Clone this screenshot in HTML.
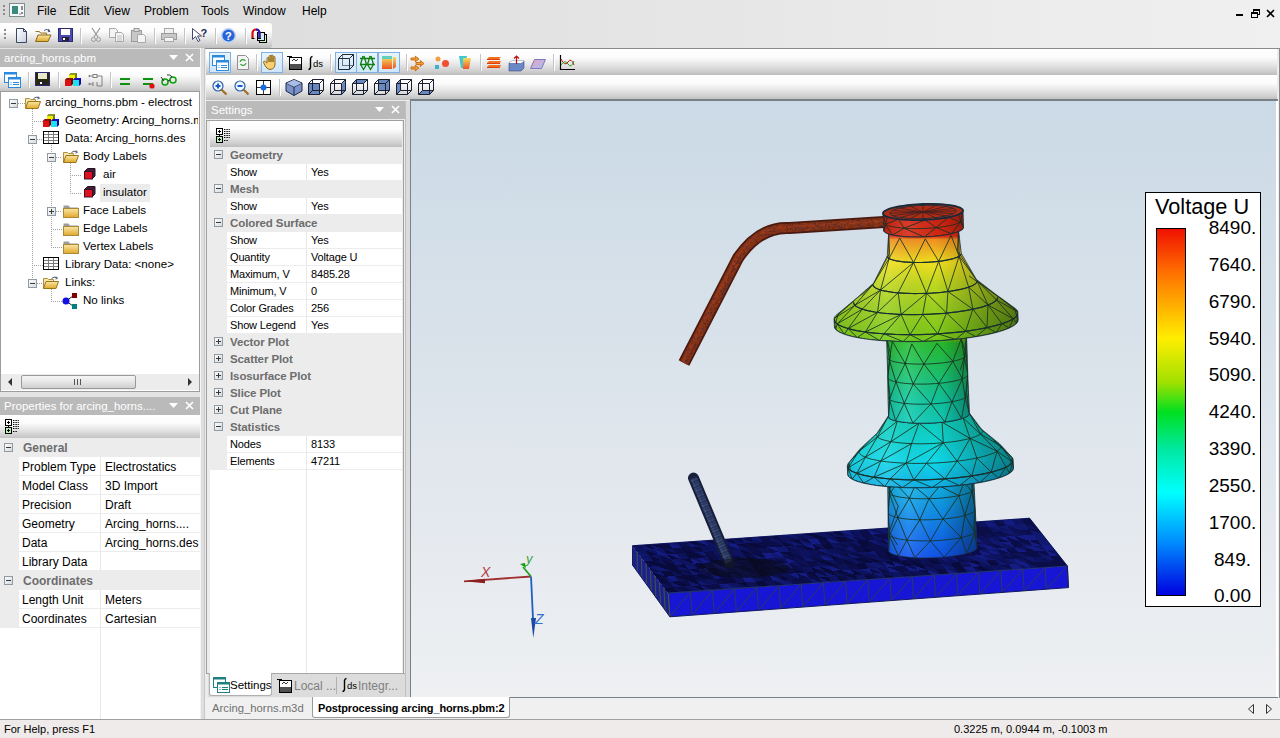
<!DOCTYPE html><html><head><meta charset="utf-8"><style>
*{margin:0;padding:0;box-sizing:border-box}
html,body{width:1280px;height:738px;overflow:hidden;background:#ebebeb;font-family:"Liberation Sans",sans-serif;font-size:12px;color:#000}
.a{position:absolute}
.t{position:absolute;white-space:nowrap;line-height:1}
.tb{background:linear-gradient(#ffffff 0%,#fcfcfc 32%,#e6e6e6 60%,#cfcfcf 85%,#bdbdbd 100%)}
.cap{background:#bababa}
.capt{position:absolute;white-space:nowrap;line-height:1;color:#fff;font-size:11.5px}
svg{position:absolute;overflow:visible}
.tr{font-size:11.6px}
.pg{font-size:11px;letter-spacing:-0.15px}
.pgc{font-size:11.5px;font-weight:bold;color:#6d6d6d;letter-spacing:-0.1px}
.lp{font-size:12px}
.lpc{font-size:12px;font-weight:bold;color:#6d6d6d}
</style></head><body>
<svg width="0" height="0" style="position:absolute"><defs>
<linearGradient id="gbox" x1="0" y1="0" x2="1" y2="1"><stop offset="0" stop-color="#fff"/><stop offset="1" stop-color="#d4d8dc"/></linearGradient>
<linearGradient id="gfold" x1="0" y1="0" x2="0" y2="1"><stop offset="0" stop-color="#fbe7a6"/><stop offset="1" stop-color="#e0a82a"/></linearGradient>
<linearGradient id="gdoc" x1="0" y1="0" x2="1" y2="1"><stop offset="0" stop-color="#fff"/><stop offset="1" stop-color="#c8d0e0"/></linearGradient>
<linearGradient id="gflag" x1="0" y1="0" x2="0" y2="1"><stop offset="0" stop-color="#f0e060"/><stop offset="1" stop-color="#f05020"/></linearGradient>
<linearGradient id="gplane" x1="0" y1="0" x2="1" y2="1"><stop offset="0" stop-color="#f0a0c0"/><stop offset="1" stop-color="#a0c0f0"/></linearGradient>
</defs></svg>
<div class="a" style="left:0;top:0;width:1280px;height:48px;background:linear-gradient(90deg,#d8d8d8 0px,#dedede 300px,#e8e8e8 800px,#f0f0f0 1280px)"></div>
<div class="a" style="left:3px;top:5px;width:2px;height:11px;background:repeating-linear-gradient(#8a8a8a 0 2px,transparent 2px 4px)"></div>
<svg style="left:9px;top:3px" width="16" height="14" viewBox="0 0 16 14"><rect x="0.5" y="0.5" width="15" height="13" fill="#f4f8f8" stroke="#7c8c90"/><rect x="3" y="3" width="6" height="8" fill="#3a8a80"/><path d="M13 3v4M13 9v2" stroke="#222"/><path d="M10 11h2" stroke="#888"/></svg>
<div class="t" style="left:37px;top:5px;font-size:12px">File</div>
<div class="t" style="left:69px;top:5px;font-size:12px">Edit</div>
<div class="t" style="left:104px;top:5px;font-size:12px">View</div>
<div class="t" style="left:144px;top:5px;font-size:12px">Problem</div>
<div class="t" style="left:201px;top:5px;font-size:12px">Tools</div>
<div class="t" style="left:243px;top:5px;font-size:12px">Window</div>
<div class="t" style="left:302px;top:5px;font-size:12px">Help</div>
<div class="a" style="left:1236px;top:14px;width:7px;height:2px;background:#000"></div>
<svg style="left:1251px;top:9px" width="9" height="9" viewBox="0 0 9 9"><rect x="2.5" y="0.5" width="6" height="5" fill="none" stroke="#000"/><path d="M2 1h7" stroke="#000" stroke-width="2"/><rect x="0.5" y="3.5" width="6" height="5" fill="#f0f0f0" stroke="#000"/><path d="M0 4h7" stroke="#000" stroke-width="2"/></svg>
<svg style="left:1266px;top:9px" width="9" height="9" viewBox="0 0 9 9"><path d="M1 1L8 8M8 1L1 8" stroke="#000" stroke-width="1.6"/></svg>
<div class="a tb" style="left:0;top:23px;width:272px;height:25px;border-radius:0 3px 3px 0"></div>
<div class="a" style="left:4px;top:29px;width:2px;height:11px;background:repeating-linear-gradient(#8a8a8a 0 2px,transparent 2px 4px)"></div>
<svg style="left:16px;top:28px" width="11" height="15" viewBox="0 0 11 15"><path d="M0.5 0.5h7l3 3v11h-10z" fill="url(#gdoc)" stroke="#3a4660"/><path d="M7.5 0.5v3h3" fill="none" stroke="#3a4660"/></svg>
<svg style="left:35px;top:28px" width="16" height="15" viewBox="0 0 16 15"><path d="M0.5 3.5h4l1 1.5h6v2" fill="#f0d890" stroke="#9a7a2a"/><path d="M0.5 13.5L3 7h13L13 13.5z" fill="url(#gfold)" stroke="#8a6a1a"/><path d="M9 2.5q3-2.5 5.5 0.5" fill="none" stroke="#4a5a80"/><path d="M13.2 1l1.8 2.3-2.2.4" fill="none" stroke="#4a5a80"/></svg>
<svg style="left:58px;top:28px" width="15" height="14" viewBox="0 0 15 14"><rect x="0.5" y="0.5" width="14" height="13" fill="#4a4ab0" stroke="#2a2a70"/><rect x="3" y="1" width="9" height="6" fill="#fff"/><rect x="4" y="9" width="7" height="4" fill="#223"/><rect x="5" y="10" width="2" height="2" fill="#fff"/></svg>
<div class="a" style="left:80px;top:28px;width:2px;height:16px;border-left:1px solid #c4c4c4;border-right:1px solid #fff"></div>
<svg style="left:91px;top:28px" width="10" height="14" viewBox="0 0 10 14"><path d="M1 0L7 9M9 0L3 9" stroke="#9a9a9a" stroke-width="1.3"/><circle cx="2.5" cy="11.5" r="2" fill="none" stroke="#9a9a9a"/><circle cx="7.5" cy="11.5" r="2" fill="none" stroke="#9a9a9a"/></svg>
<svg style="left:109px;top:28px" width="15" height="14" viewBox="0 0 15 14"><path d="M0.5 0.5h6l2 2v7h-8z" fill="#f4f4f4" stroke="#a8a8a8"/><path d="M6.5 4.5h6l2 2v7h-8z" fill="#f4f4f4" stroke="#a8a8a8"/><path d="M8 8h5M8 10h5M8 12h5" stroke="#c0c0c0"/></svg>
<svg style="left:131px;top:28px" width="16" height="15" viewBox="0 0 16 15"><rect x="0.5" y="2.5" width="10" height="11" fill="#c8c8c8" stroke="#9a9a9a"/><rect x="3" y="0.5" width="5" height="3" fill="#ddd" stroke="#9a9a9a"/><path d="M6.5 6.5h6l2 2v6h-8z" fill="#f4f4f4" stroke="#a8a8a8"/></svg>
<div class="a" style="left:154px;top:28px;width:2px;height:16px;border-left:1px solid #c4c4c4;border-right:1px solid #fff"></div>
<svg style="left:161px;top:28px" width="16" height="14" viewBox="0 0 16 14"><rect x="3.5" y="0.5" width="9" height="5" fill="#f0f0f0" stroke="#a8a8a8"/><rect x="0.5" y="5.5" width="15" height="6" fill="#c8c8c8" stroke="#9a9a9a"/><rect x="3.5" y="9.5" width="9" height="4" fill="#f4f4f4" stroke="#a8a8a8"/></svg>
<div class="a" style="left:184px;top:28px;width:2px;height:16px;border-left:1px solid #c4c4c4;border-right:1px solid #fff"></div>
<svg style="left:192px;top:28px" width="15" height="14" viewBox="0 0 15 14"><path d="M0.5 0.5v11l3-3 2.5 5 2-1-2.5-4.5h4z" fill="#fff" stroke="#404a70"/><text x="8.5" y="9" font-family="Liberation Sans" font-weight="bold" font-size="11" fill="#202a50">?</text></svg>
<div class="a" style="left:215px;top:28px;width:2px;height:16px;border-left:1px solid #c4c4c4;border-right:1px solid #fff"></div>
<svg style="left:221px;top:28px" width="15" height="15" viewBox="0 0 15 15"><circle cx="7.5" cy="7.5" r="6.8" fill="#2a64d8" stroke="#b8d4f4" stroke-width="1.4"/><text x="4" y="11.5" font-family="Liberation Sans" font-weight="bold" font-size="11" fill="#fff">?</text></svg>
<div class="a" style="left:245px;top:28px;width:2px;height:16px;border-left:1px solid #c4c4c4;border-right:1px solid #fff"></div>
<svg style="left:251px;top:28px" width="16" height="15" viewBox="0 0 16 15"><rect x="8.5" y="6.5" width="7" height="8" fill="#c8f0c8" stroke="#000"/><rect x="6.5" y="4.5" width="7" height="8" fill="#d0f0f8" stroke="#000"/><path d="M1.5 10V5a3.5 3.5 0 0 1 7 0v5" fill="none" stroke="#d01010" stroke-width="2.2"/><path d="M5 1.5a3.5 3.5 0 0 1 3.5 3.5v5" fill="none" stroke="#2020c0" stroke-width="2.2"/><path d="M0.5 10.5h3M7 10.5h3" stroke="#000"/></svg>
<div class="a" style="left:0;top:48px;width:200px;height:672px;background:#e4e4e4"></div>
<div class="a cap" style="left:0;top:49px;width:200px;height:18px"></div>
<div class="capt" style="left:4px;top:53px">arcing_horns.pbm</div>
<svg style="left:169px;top:53px" width="26" height="10" viewBox="0 0 26 10"><path d="M0 2h9L4.5 7z" fill="#fff"/><path d="M17 1l7 7M24 1l-7 7" stroke="#fff" stroke-width="1.6"/></svg>
<div class="a tb" style="left:0;top:67px;width:200px;height:25px"></div>
<svg style="left:4px;top:72px" width="17" height="16" viewBox="0 0 17 16"><rect x="0.5" y="0.5" width="12" height="10" fill="#fff" stroke="#2a8ae0"/><rect x="0.5" y="0.5" width="12" height="2" fill="#2a8ae0"/><rect x="4.5" y="5.5" width="12" height="10" fill="#fff" stroke="#2a8ae0"/><rect x="4.5" y="5.5" width="12" height="2" fill="#2a8ae0"/><path d="M6.5 10.5h1M6.5 12.5h1M9 10.5h6M9 12.5h6" stroke="#2a8ae0"/></svg>
<div class="a" style="left:28px;top:72px;width:2px;height:16px;border-left:1px solid #c4c4c4;border-right:1px solid #fff"></div>
<svg style="left:35px;top:72px" width="15" height="14" viewBox="0 0 15 14"><rect x="0.5" y="0.5" width="14" height="13" fill="#2a2a08" stroke="#2a2a70"/><rect x="3" y="1" width="9" height="6" fill="#e8e8d0"/><rect x="4" y="9" width="7" height="4" fill="#223"/><rect x="5" y="10" width="2" height="2" fill="#fff"/></svg>
<div class="a" style="left:58px;top:72px;width:2px;height:16px;border-left:1px solid #c4c4c4;border-right:1px solid #fff"></div>
<svg style="left:65px;top:72px" width="16" height="15" viewBox="0 0 16 15"><path d="M4 3l2 -2h6v6l-2 2z" fill="#708018"/><path d="M4 3l2 -2h6l-2 2z" fill="#8a9a20"/><rect x="4" y="3" width="6" height="6" fill="#f0f000"/><path d="M0 8l2 -2h6v6l-2 2z" fill="#700808"/><path d="M0 8l2 -2h6l-2 2z" fill="#901010"/><rect x="0" y="8" width="6" height="6" fill="#e01010"/><path d="M8 8l2 -2h6v6l-2 2z" fill="#0a0aa0"/><path d="M8 8l2 -2h6l-2 2z" fill="#1010c0"/><rect x="8" y="8" width="6" height="6" fill="#20e0f0"/></svg>
<svg style="left:88px;top:73px" width="15" height="14" viewBox="0 0 15 14"><path d="M2 3h3M9 3h5v10H9M2 11h3" fill="none" stroke="#808080"/><rect x="5" y="1.5" width="4" height="3" fill="none" stroke="#808080"/><path d="M5 9v4M9 9v4" stroke="#808080"/><path d="M0 3l2-1.5v3zM0 11l2-1.5v3z" fill="#808080"/></svg>
<div class="a" style="left:110px;top:72px;width:2px;height:16px;border-left:1px solid #c4c4c4;border-right:1px solid #fff"></div>
<svg style="left:119px;top:76px" width="13" height="13" viewBox="0 0 13 13"><path d="M1 3h10M1 8h10" stroke="#109010" stroke-width="2.2"/></svg>
<svg style="left:142px;top:76px" width="13" height="13" viewBox="0 0 13 13"><path d="M1 3h10M1 8h10" stroke="#109010" stroke-width="2.2"/><circle cx="10" cy="10" r="2.6" fill="#e01010"/></svg>
<svg style="left:161px;top:74px" width="16" height="12" viewBox="0 0 16 12"><circle cx="4" cy="8" r="3" fill="none" stroke="#10a010" stroke-width="1.5"/><circle cx="12" cy="6" r="3" fill="none" stroke="#10a010" stroke-width="1.5"/><path d="M0 3l3 4M7 7l2-1M6 1q3-1 5 2" fill="none" stroke="#000" stroke-width=".8"/></svg>
<div class="a" style="left:0;top:91px;width:200px;height:301px;background:#fff;border:1px solid #9c9c9c"></div>
<div class="a" style="left:32px;top:109px;width:1px;height:173px;background:repeating-linear-gradient(#a0a0a0 0 1px,transparent 1px 2px)"></div>
<div class="a" style="left:51px;top:145px;width:1px;height:101px;background:repeating-linear-gradient(#a0a0a0 0 1px,transparent 1px 2px)"></div>
<div class="a" style="left:70px;top:163px;width:1px;height:29px;background:repeating-linear-gradient(#a0a0a0 0 1px,transparent 1px 2px)"></div>
<div class="a" style="left:51px;top:287px;width:1px;height:13px;background:repeating-linear-gradient(#a0a0a0 0 1px,transparent 1px 2px)"></div>
<svg style="left:9px;top:99px" width="9" height="9" viewBox="0 0 9 9"><rect x="0.5" y="0.5" width="8" height="8" fill="url(#gbox)" stroke="#8f9aa3"/><path d="M2 4.5H7" stroke="#3a3a3a"/></svg>
<div class="a" style="left:18px;top:103px;width:7px;height:1px;background:repeating-linear-gradient(90deg,#a0a0a0 0 1px,transparent 1px 2px)"></div>
<svg style="left:25px;top:96px" width="16" height="14" viewBox="0 0 16 14"><path d="M0.5 12.5V2.5h4l1 1h5v3" fill="#f6e6a8" stroke="#b09040" stroke-width="1"/><path d="M0.5 12.5L3 5.5h12.5L13 12.5z" fill="url(#gfold)" stroke="#9a7418"/><path d="M8.5 2.5q2.5-2.5 5.5-.5" fill="none" stroke="#505a70" stroke-width="1"/><path d="M13 .5l1.5 1.8-2 .8" fill="none" stroke="#505a70"/></svg>
<div class="t tr" style="left:45px;top:96px">arcing_horns.pbm - electrost</div>
<div class="a" style="left:32px;top:121px;width:11px;height:1px;background:repeating-linear-gradient(90deg,#a0a0a0 0 1px,transparent 1px 2px)"></div>
<svg style="left:43px;top:113px" width="16" height="15" viewBox="0 0 16 15"><path d="M4 3l2 -2h6v6l-2 2z" fill="#708018"/><path d="M4 3l2 -2h6l-2 2z" fill="#8a9a20"/><rect x="4" y="3" width="6" height="6" fill="#f0f000"/><path d="M0 8l2 -2h6v6l-2 2z" fill="#700808"/><path d="M0 8l2 -2h6l-2 2z" fill="#901010"/><rect x="0" y="8" width="6" height="6" fill="#e01010"/><path d="M8 8l2 -2h6v6l-2 2z" fill="#0a0aa0"/><path d="M8 8l2 -2h6l-2 2z" fill="#1010c0"/><rect x="8" y="8" width="6" height="6" fill="#20e0f0"/></svg>
<div class="t tr" style="left:65px;top:114px">Geometry: Arcing_horns.m3d</div>
<svg style="left:28px;top:135px" width="9" height="9" viewBox="0 0 9 9"><rect x="0.5" y="0.5" width="8" height="8" fill="url(#gbox)" stroke="#8f9aa3"/><path d="M2 4.5H7" stroke="#3a3a3a"/></svg>
<div class="a" style="left:37px;top:139px;width:6px;height:1px;background:repeating-linear-gradient(90deg,#a0a0a0 0 1px,transparent 1px 2px)"></div>
<svg style="left:43px;top:131px" width="16" height="13" viewBox="0 0 16 13"><rect x="0.5" y="0.5" width="15" height="12" fill="#fff"/><path d="M1 3.5h14M1 6.5h14M1 9.5h14M5.5 1v11M10.5 1v11" stroke="#7a7a7a" stroke-width="1"/><rect x="0.5" y="0.5" width="15" height="12" fill="none" stroke="#000" stroke-width="1"/></svg>
<div class="t tr" style="left:65px;top:132px">Data: Arcing_horns.des</div>
<svg style="left:47px;top:153px" width="9" height="9" viewBox="0 0 9 9"><rect x="0.5" y="0.5" width="8" height="8" fill="url(#gbox)" stroke="#8f9aa3"/><path d="M2 4.5H7" stroke="#3a3a3a"/></svg>
<div class="a" style="left:56px;top:157px;width:6px;height:1px;background:repeating-linear-gradient(90deg,#a0a0a0 0 1px,transparent 1px 2px)"></div>
<svg style="left:63px;top:150px" width="16" height="14" viewBox="0 0 16 14"><path d="M0.5 12.5V2.5h4l1 1h5v3" fill="#f6e6a8" stroke="#b09040" stroke-width="1"/><path d="M0.5 12.5L3 5.5h12.5L13 12.5z" fill="url(#gfold)" stroke="#9a7418"/><path d="M8.5 2.5q2.5-2.5 5.5-.5" fill="none" stroke="#505a70" stroke-width="1"/><path d="M13 .5l1.5 1.8-2 .8" fill="none" stroke="#505a70"/></svg>
<div class="t tr" style="left:83px;top:150px">Body Labels</div>
<div class="a" style="left:70px;top:175px;width:11px;height:1px;background:repeating-linear-gradient(90deg,#a0a0a0 0 1px,transparent 1px 2px)"></div>
<svg style="left:84px;top:168px" width="12" height="12" viewBox="0 0 12 12"><path d="M0.5 3.5l3-3h7.5v7.5l-3 3" fill="#40203a" stroke="#2a1020"/><rect x="0.5" y="3.5" width="8" height="7.5" fill="#e01020" stroke="#3a1028"/></svg>
<div class="t tr" style="left:103px;top:168px">air</div>
<div class="a" style="left:70px;top:193px;width:11px;height:1px;background:repeating-linear-gradient(90deg,#a0a0a0 0 1px,transparent 1px 2px)"></div>
<svg style="left:84px;top:186px" width="12" height="12" viewBox="0 0 12 12"><path d="M0.5 3.5l3-3h7.5v7.5l-3 3" fill="#40203a" stroke="#2a1020"/><rect x="0.5" y="3.5" width="8" height="7.5" fill="#e01020" stroke="#3a1028"/></svg>
<div class="a" style="left:100px;top:184px;width:50px;height:18px;background:#ececec"></div>
<div class="t tr" style="left:103px;top:186px">insulator</div>
<svg style="left:47px;top:207px" width="9" height="9" viewBox="0 0 9 9"><rect x="0.5" y="0.5" width="8" height="8" fill="url(#gbox)" stroke="#8f9aa3"/><path d="M2 4.5H7" stroke="#3a3a3a"/><path d="M4.5 2V7" stroke="#3a3a3a"/></svg>
<div class="a" style="left:56px;top:211px;width:6px;height:1px;background:repeating-linear-gradient(90deg,#a0a0a0 0 1px,transparent 1px 2px)"></div>
<svg style="left:63px;top:203px" width="16" height="15" viewBox="0 0 16 15"><path d="M0.5 2.5h5l1.5 2h8v9h-14.5z" fill="#9c9c9c"/><rect x="0.5" y="5.5" width="15" height="9" fill="url(#gfold)" stroke="#a98a36"/></svg>
<div class="t tr" style="left:83px;top:204px">Face Labels</div>
<div class="a" style="left:51px;top:229px;width:11px;height:1px;background:repeating-linear-gradient(90deg,#a0a0a0 0 1px,transparent 1px 2px)"></div>
<svg style="left:63px;top:221px" width="16" height="15" viewBox="0 0 16 15"><path d="M0.5 2.5h5l1.5 2h8v9h-14.5z" fill="#9c9c9c"/><rect x="0.5" y="5.5" width="15" height="9" fill="url(#gfold)" stroke="#a98a36"/></svg>
<div class="t tr" style="left:83px;top:222px">Edge Labels</div>
<div class="a" style="left:51px;top:247px;width:11px;height:1px;background:repeating-linear-gradient(90deg,#a0a0a0 0 1px,transparent 1px 2px)"></div>
<svg style="left:63px;top:239px" width="16" height="15" viewBox="0 0 16 15"><path d="M0.5 2.5h5l1.5 2h8v9h-14.5z" fill="#9c9c9c"/><rect x="0.5" y="5.5" width="15" height="9" fill="url(#gfold)" stroke="#a98a36"/></svg>
<div class="t tr" style="left:83px;top:240px">Vertex Labels</div>
<div class="a" style="left:32px;top:265px;width:11px;height:1px;background:repeating-linear-gradient(90deg,#a0a0a0 0 1px,transparent 1px 2px)"></div>
<svg style="left:43px;top:257px" width="16" height="13" viewBox="0 0 16 13"><rect x="0.5" y="0.5" width="15" height="12" fill="#fff"/><path d="M1 3.5h14M1 6.5h14M1 9.5h14M5.5 1v11M10.5 1v11" stroke="#7a7a7a" stroke-width="1"/><rect x="0.5" y="0.5" width="15" height="12" fill="none" stroke="#000" stroke-width="1"/></svg>
<div class="t tr" style="left:65px;top:258px">Library Data: &lt;none&gt;</div>
<svg style="left:28px;top:279px" width="9" height="9" viewBox="0 0 9 9"><rect x="0.5" y="0.5" width="8" height="8" fill="url(#gbox)" stroke="#8f9aa3"/><path d="M2 4.5H7" stroke="#3a3a3a"/></svg>
<div class="a" style="left:37px;top:283px;width:6px;height:1px;background:repeating-linear-gradient(90deg,#a0a0a0 0 1px,transparent 1px 2px)"></div>
<svg style="left:43px;top:276px" width="16" height="14" viewBox="0 0 16 14"><path d="M0.5 12.5V2.5h4l1 1h5v3" fill="#f6e6a8" stroke="#b09040" stroke-width="1"/><path d="M0.5 12.5L3 5.5h12.5L13 12.5z" fill="url(#gfold)" stroke="#9a7418"/><path d="M8.5 2.5q2.5-2.5 5.5-.5" fill="none" stroke="#505a70" stroke-width="1"/><path d="M13 .5l1.5 1.8-2 .8" fill="none" stroke="#505a70"/></svg>
<div class="t tr" style="left:65px;top:276px">Links:</div>
<div class="a" style="left:51px;top:301px;width:11px;height:1px;background:repeating-linear-gradient(90deg,#a0a0a0 0 1px,transparent 1px 2px)"></div>
<svg style="left:62px;top:293px" width="16" height="16" viewBox="0 0 16 16"><path d="M4 8L11 3M4 8L11 13" stroke="#222" stroke-width="1"/><circle cx="4" cy="8" r="3.5" fill="#1010e0"/><rect x="10" y="0" width="5" height="5" fill="#800000"/><rect x="10" y="11" width="5" height="5" fill="#008080"/></svg>
<div class="t tr" style="left:83px;top:294px">No links</div>
<div class="a" style="left:198px;top:92px;width:1px;height:299px;background:#fff"></div>
<div class="a" style="left:199px;top:91px;width:1px;height:301px;background:#9c9c9c"></div>
<div class="a" style="left:1px;top:374px;width:198px;height:16px;background:#ececec"></div>
<div class="a" style="left:21px;top:375px;width:115px;height:14px;border:1px solid #9a9a9a;border-radius:2px;background:linear-gradient(#f6f6f6,#e6e6e6 50%,#cfcfcf)"></div>
<div class="a" style="left:74px;top:379px;width:7px;height:6px;background:repeating-linear-gradient(90deg,#555 0 1px,transparent 1px 3px)"></div>
<svg style="left:8px;top:378px" width="5" height="8" viewBox="0 0 5 8"><path d="M4 0v8L0 4z" fill="#333"/></svg>
<svg style="left:188px;top:378px" width="5" height="8" viewBox="0 0 5 8"><path d="M0 0v8l4-4z" fill="#333"/></svg>
<div class="a cap" style="left:0;top:397px;width:200px;height:18px"></div>
<div class="capt" style="left:4px;top:401px">Properties for arcing_horns....</div>
<svg style="left:169px;top:401px" width="26" height="10" viewBox="0 0 26 10"><path d="M0 2h9L4.5 7z" fill="#fff"/><path d="M17 1l7 7M24 1l-7 7" stroke="#fff" stroke-width="1.6"/></svg>
<div class="a tb" style="left:0;top:415px;width:200px;height:24px"></div>
<svg style="left:5px;top:419px" width="15" height="15" viewBox="0 0 15 15"><rect x="0.5" y="0.5" width="6" height="6" fill="#fff" stroke="#000"/><path d="M2 3.5h3M3.5 2v3" stroke="#000"/><rect x="0.5" y="8.5" width="6" height="6" fill="#b8f0b8" stroke="#000"/><path d="M2 11.5h3M3.5 10v3" stroke="#000"/><path d="M3.5 6.5v2" stroke="#000"/><path d="M8 1.5h6M8 3.5h6M8 5.5h6M8 7.5h6M8 9.5h6M8 12.5h4" stroke="#000" stroke-dasharray="1 .6"/></svg>
<div class="a" style="left:0;top:438px;width:200px;height:281px;background:#fff"></div>
<div class="a" style="left:100px;top:438px;width:1px;height:281px;background:#e8e8e8"></div>
<div class="a" style="left:0;top:438px;width:200px;height:19px;background:#ececec"></div>
<svg style="left:4px;top:443px" width="9" height="9" viewBox="0 0 9 9"><rect x="0.5" y="0.5" width="8" height="8" fill="url(#gbox)" stroke="#8f9aa3"/><path d="M2 4.5H7" stroke="#3a3a3a"/></svg>
<div class="t lpc" style="left:23px;top:442px">General</div>
<div class="a" style="left:0;top:457px;width:19px;height:19px;background:#ececec"></div>
<div class="a" style="left:19px;top:475px;width:181px;height:1px;background:#ececec"></div>
<div class="t lp" style="left:22px;top:461px">Problem Type</div>
<div class="t lp" style="left:105px;top:461px">Electrostatics</div>
<div class="a" style="left:0;top:476px;width:19px;height:19px;background:#ececec"></div>
<div class="a" style="left:19px;top:494px;width:181px;height:1px;background:#ececec"></div>
<div class="t lp" style="left:22px;top:480px">Model Class</div>
<div class="t lp" style="left:105px;top:480px">3D Import</div>
<div class="a" style="left:0;top:495px;width:19px;height:19px;background:#ececec"></div>
<div class="a" style="left:19px;top:513px;width:181px;height:1px;background:#ececec"></div>
<div class="t lp" style="left:22px;top:499px">Precision</div>
<div class="t lp" style="left:105px;top:499px">Draft</div>
<div class="a" style="left:0;top:514px;width:19px;height:19px;background:#ececec"></div>
<div class="a" style="left:19px;top:532px;width:181px;height:1px;background:#ececec"></div>
<div class="t lp" style="left:22px;top:518px">Geometry</div>
<div class="t lp" style="left:105px;top:518px">Arcing_horns....</div>
<div class="a" style="left:0;top:533px;width:19px;height:19px;background:#ececec"></div>
<div class="a" style="left:19px;top:551px;width:181px;height:1px;background:#ececec"></div>
<div class="t lp" style="left:22px;top:537px">Data</div>
<div class="t lp" style="left:105px;top:537px">Arcing_horns.des</div>
<div class="a" style="left:0;top:552px;width:19px;height:19px;background:#ececec"></div>
<div class="a" style="left:19px;top:570px;width:181px;height:1px;background:#ececec"></div>
<div class="t lp" style="left:22px;top:556px">Library Data</div>
<div class="t lp" style="left:105px;top:556px"></div>
<div class="a" style="left:0;top:571px;width:200px;height:19px;background:#ececec"></div>
<svg style="left:4px;top:576px" width="9" height="9" viewBox="0 0 9 9"><rect x="0.5" y="0.5" width="8" height="8" fill="url(#gbox)" stroke="#8f9aa3"/><path d="M2 4.5H7" stroke="#3a3a3a"/></svg>
<div class="t lpc" style="left:23px;top:575px">Coordinates</div>
<div class="a" style="left:0;top:590px;width:19px;height:19px;background:#ececec"></div>
<div class="a" style="left:19px;top:608px;width:181px;height:1px;background:#ececec"></div>
<div class="t lp" style="left:22px;top:594px">Length Unit</div>
<div class="t lp" style="left:105px;top:594px">Meters</div>
<div class="a" style="left:0;top:609px;width:19px;height:19px;background:#ececec"></div>
<div class="a" style="left:19px;top:627px;width:181px;height:1px;background:#ececec"></div>
<div class="t lp" style="left:22px;top:613px">Coordinates</div>
<div class="t lp" style="left:105px;top:613px">Cartesian</div>
<div class="a" style="left:200px;top:48px;width:5px;height:672px;background:#dedede;border-left:1px solid #f4f4f4;border-right:1px solid #c8c8c8"></div>
<div class="a" style="left:205px;top:48px;width:1075px;height:672px;background:#ececec;border-top:1px solid #8a8a8a;border-right:1px solid #8a8a8a"></div>
<div class="a tb" style="left:206px;top:49px;width:1071px;height:26px"></div>
<div class="a tb" style="left:206px;top:75px;width:1071px;height:25px"></div>
<div class="a" style="left:209px;top:52px;width:22px;height:21px;border:1px solid #7fb0e0;background:linear-gradient(#e8f4fd,#cfe6fa)"></div>
<svg style="left:212px;top:55px" width="17" height="16" viewBox="0 0 17 16"><rect x="0.5" y="0.5" width="12" height="10" fill="#fff" stroke="#2a8ae0"/><rect x="0.5" y="0.5" width="12" height="2" fill="#2a8ae0"/><rect x="4.5" y="5.5" width="12" height="10" fill="#fff" stroke="#2a8ae0"/><rect x="4.5" y="5.5" width="12" height="2" fill="#2a8ae0"/><path d="M6.5 10.5h1M6.5 12.5h1M9 10.5h6M9 12.5h6" stroke="#2a8ae0"/></svg>
<svg style="left:237px;top:55px" width="12" height="15" viewBox="0 0 12 15"><path d="M0.5 0.5h8l3 3v11h-11z" fill="#f4f4f4" stroke="#909090"/><path d="M3 7a3 3 0 0 1 5.5-1M9 8a3 3 0 0 1-5.5 1" fill="none" stroke="#30a030" stroke-width="1.2"/></svg>
<div class="a" style="left:256px;top:54px;width:2px;height:17px;border-left:1px solid #c4c4c4;border-right:1px solid #fff"></div>
<div class="a" style="left:261px;top:52px;width:22px;height:21px;border:1px solid #7fb0e0;background:linear-gradient(#e8f4fd,#cfe6fa)"></div>
<svg style="left:264px;top:54px" width="15" height="16" viewBox="0 0 15 16"><path d="M3 9V4.5a1 1 0 0 1 2 0V8V2.5a1 1 0 0 1 2 0V8V2a1 1 0 0 1 2 0v6V3.5a1 1 0 0 1 2 0V10q0 5-5 5.5q-3 0-5-4l-1.5-3a1 1 0 0 1 2-.5z" fill="#f8d070" stroke="#8a6a20"/></svg>
<svg style="left:287px;top:55px" width="15" height="15" viewBox="0 0 15 15"><rect x="2.5" y="2.5" width="12" height="12" fill="#505050" stroke="#000"/><rect x="3" y="3" width="11" height="6" fill="#fff"/><path d="M0 1.5h5" stroke="#000"/><path d="M5 6l2-2 2 2 2-2" fill="none" stroke="#000" stroke-width=".8"/></svg>
<svg style="left:307px;top:55px" width="17" height="16" viewBox="0 0 17 16"><path d="M5.5 1.5q-1.5 0-2 2v9q-.5 2-2 2" fill="none" stroke="#000" stroke-width="1.4"/><text x="6" y="12" font-family="Liberation Sans" font-size="9.5" fill="#000">ds</text></svg>
<div class="a" style="left:330px;top:54px;width:2px;height:17px;border-left:1px solid #c4c4c4;border-right:1px solid #fff"></div>
<div class="a" style="left:335px;top:52px;width:22px;height:21px;border:1px solid #7fb0e0;background:linear-gradient(#e8f4fd,#cfe6fa)"></div>
<svg style="left:338px;top:54px" width="17" height="17" viewBox="0 0 17 17"><path d="M0.5 4.5h11v11h-11z M0.5 4.5l4-4h11v11l-4 4M11.5 4.5l4-4" fill="none" stroke="#202a3a"/><rect x="4.5" y="0.5" width="11" height="11" fill="none" stroke="#202a3a" stroke-opacity=".6"/></svg>
<div class="a" style="left:356px;top:52px;width:22px;height:21px;border:1px solid #7fb0e0;background:linear-gradient(#e8f4fd,#cfe6fa)"></div>
<svg style="left:359px;top:55px" width="17" height="15" viewBox="0 0 17 15"><path d="M1 3.5h15M1 9.5h15M4 1l-2.5 8.5 3 5 3-5-2.5-8.5M11 1l-2.5 8.5 3 5 3-5-2.5-8.5" fill="none" stroke="#108010" stroke-width="1.3"/></svg>
<div class="a" style="left:378px;top:52px;width:22px;height:21px;border:1px solid #7fb0e0;background:linear-gradient(#e8f4fd,#cfe6fa)"></div>
<svg style="left:381px;top:55px" width="16" height="15" viewBox="0 0 16 15"><rect x="1" y="2" width="10" height="12" fill="url(#gflag)"/><rect x="1" y="1" width="10" height="3" fill="#60d0c0"/><path d="M12 2l3 0v10l-3 2z" fill="url(#gflag)"/></svg>
<div class="a" style="left:406px;top:54px;width:2px;height:17px;border-left:1px solid #c4c4c4;border-right:1px solid #fff"></div>
<svg style="left:411px;top:55px" width="17" height="15" viewBox="0 0 17 15"><g fill="#f0a040" stroke="#d07010"><path d="M0 3h5l-1-2 4 3-4 3 1-2H0z"/><path d="M5 7.5h5l-1-2 4 3-4 3 1-2H5z"/><path d="M0 12h5l-1-2 4 3-4 3 1-2H0z"/></g></svg>
<svg style="left:434px;top:56px" width="16" height="14" viewBox="0 0 16 14"><circle cx="4" cy="3" r="2.5" fill="#f0a040"/><circle cx="11.5" cy="7.5" r="3.5" fill="#f05030"/><rect x="1" y="9" width="4" height="4" fill="#40b0d0"/></svg>
<svg style="left:458px;top:55px" width="14" height="14" viewBox="0 0 14 14"><path d="M1 1h8l-2 12H3z" fill="#40c8d0"/><path d="M5 3h8l-2 11H5z" fill="url(#gflag)"/></svg>
<div class="a" style="left:480px;top:54px;width:2px;height:17px;border-left:1px solid #c4c4c4;border-right:1px solid #fff"></div>
<svg style="left:486px;top:57px" width="16" height="12" viewBox="0 0 16 12"><path d="M1 2h12l2-2H3z M1 6h13l1-2H3z M1 10h13l1-2H3z" fill="#f07020"/><path d="M1 2.5h13M1 6.5h13M1 10.5h13" stroke="#e04010"/></svg>
<svg style="left:508px;top:55px" width="17" height="16" viewBox="0 0 17 16"><path d="M1 8l3-2h12v7l-3 3H1z" fill="#6a88c8" stroke="#3a4a80" stroke-width=".6"/><path d="M1 8h12l3-2H4z" fill="#fff"/><path d="M8.5 9V1M6 3.5l2.5-2.5 2.5 2.5" fill="none" stroke="#c01010" stroke-width="1.2"/></svg>
<svg style="left:530px;top:59px" width="16" height="10" viewBox="0 0 16 10"><path d="M0.5 9.5l4-9h11l-4 9z" fill="url(#gplane)" stroke="#7a7ac0"/></svg>
<div class="a" style="left:553px;top:54px;width:2px;height:17px;border-left:1px solid #c4c4c4;border-right:1px solid #fff"></div>
<svg style="left:559px;top:55px" width="16" height="16" viewBox="0 0 16 16"><path d="M1.5 0v14.5H16" fill="none" stroke="#000" stroke-width="1.2"/><path d="M2 4q4 8 7 3t6 3" fill="none" stroke="#d01010"/><path d="M2 10q4-6 7-1t6-3" fill="none" stroke="#20a020"/></svg>
<svg style="left:212px;top:80px" width="16" height="16" viewBox="0 0 16 16"><circle cx="6" cy="6" r="5" fill="#f0f8ff" stroke="#3060a0" stroke-width="1.2"/><path d="M9.5 9.5l5 5" stroke="#a07020" stroke-width="2.2"/><path d="M3.5 6h5" stroke="#1a5ad0" stroke-width="2"/><path d="M6 3.5v5" stroke="#1a5ad0" stroke-width="2"/></svg>
<svg style="left:234px;top:80px" width="16" height="16" viewBox="0 0 16 16"><circle cx="6" cy="6" r="5" fill="#f0f8ff" stroke="#3060a0" stroke-width="1.2"/><path d="M9.5 9.5l5 5" stroke="#a07020" stroke-width="2.2"/><path d="M3.5 6h5" stroke="#1a5ad0" stroke-width="2"/></svg>
<svg style="left:256px;top:80px" width="15" height="15" viewBox="0 0 15 15"><rect x="0.5" y="0.5" width="14" height="14" fill="#fff" stroke="#000"/><path d="M7.5 1v13M1 7.5h13" stroke="#000" stroke-width=".8"/><circle cx="7.5" cy="7.5" r="3" fill="#1a6ae0"/></svg>
<div class="a" style="left:279px;top:79px;width:2px;height:17px;border-left:1px solid #c4c4c4;border-right:1px solid #fff"></div>
<svg style="left:285px;top:79px" width="18" height="17" viewBox="0 0 18 17"><path d="M9 0.5l8 3.5v8l-8 4.5-8-4.5v-8z" fill="#7a92c8" stroke="#1a2848"/><path d="M1 4l8 4 8-4M9 8v8.5" fill="none" stroke="#1a2848"/><path d="M1.5 4.3L9 .8l7.5 3.5L9 7.8z" fill="#a8bce4"/></svg>
<svg style="left:308px;top:79px" width="17" height="17" viewBox="0 0 17 17"><rect x="1" y="5" width="10" height="10" fill="#6a88c0"/><path d="M0.5 4.5h11v11h-11z M0.5 4.5l4-4h11v11l-4 4M11.5 4.5l4-4M4.5 .5v11h11M4.5 11.5l-4 4" fill="none" stroke="#1a2030"/></svg>
<svg style="left:330px;top:79px" width="17" height="17" viewBox="0 0 17 17"><path d="M12 4.5l4-4v11l-4 4z" fill="#6a88c0"/><path d="M0.5 4.5h11v11h-11z M0.5 4.5l4-4h11v11l-4 4M11.5 4.5l4-4M4.5 .5v11h11M4.5 11.5l-4 4" fill="none" stroke="#1a2030"/></svg>
<svg style="left:352px;top:79px" width="17" height="17" viewBox="0 0 17 17"><path d="M1 4.5l4-4h11l-4 4z" fill="#6a88c0"/><path d="M0.5 4.5h11v11h-11z M0.5 4.5l4-4h11v11l-4 4M11.5 4.5l4-4M4.5 .5v11h11M4.5 11.5l-4 4" fill="none" stroke="#1a2030"/></svg>
<svg style="left:374px;top:79px" width="17" height="17" viewBox="0 0 17 17"><rect x="5" y="1" width="10" height="10" fill="#6a88c0"/><path d="M0.5 4.5h11v11h-11z M0.5 4.5l4-4h11v11l-4 4M11.5 4.5l4-4M4.5 .5v11h11M4.5 11.5l-4 4" fill="none" stroke="#1a2030"/></svg>
<svg style="left:396px;top:79px" width="17" height="17" viewBox="0 0 17 17"><path d="M1 4.5l4-4v11l-4 4z" fill="#6a88c0"/><path d="M0.5 4.5h11v11h-11z M0.5 4.5l4-4h11v11l-4 4M11.5 4.5l4-4M4.5 .5v11h11M4.5 11.5l-4 4" fill="none" stroke="#1a2030"/></svg>
<svg style="left:418px;top:79px" width="17" height="17" viewBox="0 0 17 17"><path d="M1 15l4-4h11l-4 4z" fill="#6a88c0"/><path d="M0.5 4.5h11v11h-11z M0.5 4.5l4-4h11v11l-4 4M11.5 4.5l4-4M4.5 .5v11h11M4.5 11.5l-4 4" fill="none" stroke="#1a2030"/></svg>
<div class="a cap" style="left:206px;top:101px;width:199px;height:18px"></div>
<div class="capt" style="left:211px;top:105px">Settings</div>
<svg style="left:375px;top:105px" width="26" height="10" viewBox="0 0 26 10"><path d="M0 2h9L4.5 7z" fill="#fff"/><path d="M17 1l7 7M24 1l-7 7" stroke="#fff" stroke-width="1.6"/></svg>
<div class="a" style="left:206px;top:119px;width:200px;height:578px;background:#ececec"></div>
<div class="a" style="left:206px;top:120px;width:198px;height:554px;background:#ececec;border:1px solid #a0a0a0"></div>
<div class="a" style="left:210px;top:147px;width:192px;height:526px;background:#fff"></div>
<div class="a tb" style="left:210px;top:121px;width:192px;height:26px"></div>
<svg style="left:216px;top:128px" width="15" height="15" viewBox="0 0 15 15"><rect x="0.5" y="0.5" width="6" height="6" fill="#fff" stroke="#000"/><path d="M2 3.5h3M3.5 2v3" stroke="#000"/><rect x="0.5" y="8.5" width="6" height="6" fill="#b8f0b8" stroke="#000"/><path d="M2 11.5h3M3.5 10v3" stroke="#000"/><path d="M3.5 6.5v2" stroke="#000"/><path d="M8 1.5h6M8 3.5h6M8 5.5h6M8 7.5h6M8 9.5h6M8 12.5h4" stroke="#000" stroke-dasharray="1 .6"/></svg>
<div class="a" style="left:306px;top:147px;width:1px;height:526px;background:#e8e8e8"></div>
<div class="a" style="left:210px;top:147px;width:192px;height:17px;background:#ececec"></div>
<svg style="left:214px;top:150px" width="9" height="9" viewBox="0 0 9 9"><rect x="0.5" y="0.5" width="8" height="8" fill="url(#gbox)" stroke="#8f9aa3"/><path d="M2 4.5H7" stroke="#3a3a3a"/></svg>
<div class="t pgc" style="left:230px;top:150px">Geometry</div>
<div class="a" style="left:210px;top:164px;width:17px;height:17px;background:#ececec"></div>
<div class="a" style="left:227px;top:180px;width:175px;height:1px;background:#ececec"></div>
<div class="t pg" style="left:230px;top:167px">Show</div>
<div class="t pg" style="left:311px;top:167px">Yes</div>
<div class="a" style="left:210px;top:181px;width:192px;height:17px;background:#ececec"></div>
<svg style="left:214px;top:184px" width="9" height="9" viewBox="0 0 9 9"><rect x="0.5" y="0.5" width="8" height="8" fill="url(#gbox)" stroke="#8f9aa3"/><path d="M2 4.5H7" stroke="#3a3a3a"/></svg>
<div class="t pgc" style="left:230px;top:184px">Mesh</div>
<div class="a" style="left:210px;top:198px;width:17px;height:17px;background:#ececec"></div>
<div class="a" style="left:227px;top:214px;width:175px;height:1px;background:#ececec"></div>
<div class="t pg" style="left:230px;top:201px">Show</div>
<div class="t pg" style="left:311px;top:201px">Yes</div>
<div class="a" style="left:210px;top:215px;width:192px;height:17px;background:#ececec"></div>
<svg style="left:214px;top:218px" width="9" height="9" viewBox="0 0 9 9"><rect x="0.5" y="0.5" width="8" height="8" fill="url(#gbox)" stroke="#8f9aa3"/><path d="M2 4.5H7" stroke="#3a3a3a"/></svg>
<div class="t pgc" style="left:230px;top:218px">Colored Surface</div>
<div class="a" style="left:210px;top:232px;width:17px;height:17px;background:#ececec"></div>
<div class="a" style="left:227px;top:248px;width:175px;height:1px;background:#ececec"></div>
<div class="t pg" style="left:230px;top:235px">Show</div>
<div class="t pg" style="left:311px;top:235px">Yes</div>
<div class="a" style="left:210px;top:249px;width:17px;height:17px;background:#ececec"></div>
<div class="a" style="left:227px;top:265px;width:175px;height:1px;background:#ececec"></div>
<div class="t pg" style="left:230px;top:252px">Quantity</div>
<div class="t pg" style="left:311px;top:252px">Voltage U</div>
<div class="a" style="left:210px;top:266px;width:17px;height:17px;background:#ececec"></div>
<div class="a" style="left:227px;top:282px;width:175px;height:1px;background:#ececec"></div>
<div class="t pg" style="left:230px;top:269px">Maximum, V</div>
<div class="t pg" style="left:311px;top:269px">8485.28</div>
<div class="a" style="left:210px;top:283px;width:17px;height:17px;background:#ececec"></div>
<div class="a" style="left:227px;top:299px;width:175px;height:1px;background:#ececec"></div>
<div class="t pg" style="left:230px;top:286px">Minimum, V</div>
<div class="t pg" style="left:311px;top:286px">0</div>
<div class="a" style="left:210px;top:300px;width:17px;height:17px;background:#ececec"></div>
<div class="a" style="left:227px;top:316px;width:175px;height:1px;background:#ececec"></div>
<div class="t pg" style="left:230px;top:303px">Color Grades</div>
<div class="t pg" style="left:311px;top:303px">256</div>
<div class="a" style="left:210px;top:317px;width:17px;height:17px;background:#ececec"></div>
<div class="a" style="left:227px;top:333px;width:175px;height:1px;background:#ececec"></div>
<div class="t pg" style="left:230px;top:320px">Show Legend</div>
<div class="t pg" style="left:311px;top:320px">Yes</div>
<div class="a" style="left:210px;top:334px;width:192px;height:17px;background:#ececec"></div>
<svg style="left:214px;top:337px" width="9" height="9" viewBox="0 0 9 9"><rect x="0.5" y="0.5" width="8" height="8" fill="url(#gbox)" stroke="#8f9aa3"/><path d="M2 4.5H7" stroke="#3a3a3a"/><path d="M4.5 2V7" stroke="#3a3a3a"/></svg>
<div class="t pgc" style="left:230px;top:337px">Vector Plot</div>
<div class="a" style="left:210px;top:351px;width:192px;height:17px;background:#ececec"></div>
<svg style="left:214px;top:354px" width="9" height="9" viewBox="0 0 9 9"><rect x="0.5" y="0.5" width="8" height="8" fill="url(#gbox)" stroke="#8f9aa3"/><path d="M2 4.5H7" stroke="#3a3a3a"/><path d="M4.5 2V7" stroke="#3a3a3a"/></svg>
<div class="t pgc" style="left:230px;top:354px">Scatter Plot</div>
<div class="a" style="left:210px;top:368px;width:192px;height:17px;background:#ececec"></div>
<svg style="left:214px;top:371px" width="9" height="9" viewBox="0 0 9 9"><rect x="0.5" y="0.5" width="8" height="8" fill="url(#gbox)" stroke="#8f9aa3"/><path d="M2 4.5H7" stroke="#3a3a3a"/><path d="M4.5 2V7" stroke="#3a3a3a"/></svg>
<div class="t pgc" style="left:230px;top:371px">Isosurface Plot</div>
<div class="a" style="left:210px;top:385px;width:192px;height:17px;background:#ececec"></div>
<svg style="left:214px;top:388px" width="9" height="9" viewBox="0 0 9 9"><rect x="0.5" y="0.5" width="8" height="8" fill="url(#gbox)" stroke="#8f9aa3"/><path d="M2 4.5H7" stroke="#3a3a3a"/><path d="M4.5 2V7" stroke="#3a3a3a"/></svg>
<div class="t pgc" style="left:230px;top:388px">Slice Plot</div>
<div class="a" style="left:210px;top:402px;width:192px;height:17px;background:#ececec"></div>
<svg style="left:214px;top:405px" width="9" height="9" viewBox="0 0 9 9"><rect x="0.5" y="0.5" width="8" height="8" fill="url(#gbox)" stroke="#8f9aa3"/><path d="M2 4.5H7" stroke="#3a3a3a"/><path d="M4.5 2V7" stroke="#3a3a3a"/></svg>
<div class="t pgc" style="left:230px;top:405px">Cut Plane</div>
<div class="a" style="left:210px;top:419px;width:192px;height:17px;background:#ececec"></div>
<svg style="left:214px;top:422px" width="9" height="9" viewBox="0 0 9 9"><rect x="0.5" y="0.5" width="8" height="8" fill="url(#gbox)" stroke="#8f9aa3"/><path d="M2 4.5H7" stroke="#3a3a3a"/></svg>
<div class="t pgc" style="left:230px;top:422px">Statistics</div>
<div class="a" style="left:210px;top:436px;width:17px;height:17px;background:#ececec"></div>
<div class="a" style="left:227px;top:452px;width:175px;height:1px;background:#ececec"></div>
<div class="t pg" style="left:230px;top:439px">Nodes</div>
<div class="t pg" style="left:311px;top:439px">8133</div>
<div class="a" style="left:210px;top:453px;width:17px;height:17px;background:#ececec"></div>
<div class="a" style="left:227px;top:469px;width:175px;height:1px;background:#ececec"></div>
<div class="t pg" style="left:230px;top:456px">Elements</div>
<div class="t pg" style="left:311px;top:456px">47211</div>
<div class="a" style="left:208px;top:673px;width:198px;height:24px;background:#dcdcdc;border-top:1px solid #a8a8a8"></div>
<div class="a" style="left:209px;top:673px;width:63px;height:23px;background:#fff;border:1px solid #b0b0b0;border-top:none;border-radius:0 0 3px 3px"></div>
<svg style="left:213px;top:677px" width="17" height="16" viewBox="0 0 17 16"><rect x="0.5" y="0.5" width="12" height="10" fill="#fff" stroke="#208080"/><rect x="0.5" y="0.5" width="12" height="2" fill="#208080"/><rect x="4.5" y="5.5" width="12" height="10" fill="#fff" stroke="#208080"/><rect x="4.5" y="5.5" width="12" height="2" fill="#208080"/><path d="M6.5 10.5h1M6.5 12.5h1M9 10.5h6M9 12.5h6" stroke="#208080"/></svg>
<div class="t" style="left:230px;top:680px;font-size:11.5px">Settings</div>
<svg style="left:277px;top:678px" width="15" height="15" viewBox="0 0 15 15"><rect x="2.5" y="2.5" width="12" height="12" fill="#505050" stroke="#000"/><rect x="3" y="3" width="11" height="6" fill="#fff"/><path d="M0 1.5h5" stroke="#000"/><path d="M5 6l2-2 2 2 2-2" fill="none" stroke="#000" stroke-width=".8"/></svg>
<div class="t" style="left:294px;top:680px;font-size:12px;color:#808080">Local ...</div>
<div class="a" style="left:336px;top:677px;width:1px;height:17px;background:#b0b0b0"></div>
<svg style="left:341px;top:677px" width="17" height="16" viewBox="0 0 17 16"><path d="M5.5 1.5q-1.5 0-2 2v9q-.5 2-2 2" fill="none" stroke="#000" stroke-width="1.4"/><text x="6" y="12" font-family="Liberation Sans" font-size="9.5" fill="#000">ds</text></svg>
<div class="t" style="left:358px;top:680px;font-size:12px;color:#808080">Integr...</div>
<div class="a" style="left:405px;top:101px;width:5px;height:597px;background:#dcdcdc;border-left:1px solid #c0c0c0"></div>
<div class="a" style="left:410px;top:99px;width:868px;height:600px;background:#7a8088"></div>
<div class="a" style="left:411px;top:101px;width:865px;height:596px;background:linear-gradient(#cbdae6 0%,#d9e2ea 40%,#e6eaef 75%,#eef0f2 100%)"></div>
<div class="a" style="left:1276px;top:101px;width:2px;height:596px;background:#fff"></div>
<svg style="left:0;top:0;position:absolute" width="1280" height="738"><defs>
<linearGradient id="gv" gradientUnits="userSpaceOnUse" x1="0" y1="204" x2="0" y2="560">
 <stop offset="0" stop-color="#d01c10"/>
 <stop offset="0.09" stop-color="#d82a14"/>
 <stop offset="0.10" stop-color="#f09020"/>
 <stop offset="0.165" stop-color="#f0e020"/>
 <stop offset="0.22" stop-color="#c4d820"/>
 <stop offset="0.28" stop-color="#a0d020"/>
 <stop offset="0.38" stop-color="#78c818"/>
 <stop offset="0.39" stop-color="#28c030"/>
 <stop offset="0.55" stop-color="#10c8a0"/>
 <stop offset="0.72" stop-color="#10d8e8"/>
 <stop offset="0.80" stop-color="#10b0e8"/>
 <stop offset="1" stop-color="#1050f0"/>
</linearGradient>
<linearGradient id="gsh" gradientUnits="userSpaceOnUse" x1="830" y1="0" x2="1020" y2="0">
 <stop offset="0" stop-color="#000" stop-opacity=".08"/>
 <stop offset="0.3" stop-color="#fff" stop-opacity=".10"/>
 <stop offset="0.55" stop-color="#000" stop-opacity="0"/>
 <stop offset="0.85" stop-color="#000" stop-opacity=".30"/>
 <stop offset="1" stop-color="#000" stop-opacity=".45"/>
</linearGradient>
<linearGradient id="gsh2" gradientUnits="userSpaceOnUse" x1="885" y1="0" x2="980" y2="0">
 <stop offset="0" stop-color="#000" stop-opacity=".15"/>
 <stop offset="0.25" stop-color="#fff" stop-opacity=".10"/>
 <stop offset="0.6" stop-color="#000" stop-opacity=".05"/>
 <stop offset="1" stop-color="#000" stop-opacity=".45"/>
</linearGradient>
<linearGradient id="gtop" gradientUnits="userSpaceOnUse" x1="640" y1="600" x2="1000" y2="520">
 <stop offset="0" stop-color="#090a30"/>
 <stop offset="0.55" stop-color="#0b0d40"/>
 <stop offset="1" stop-color="#101888"/>
</linearGradient>
<linearGradient id="ghorn" gradientUnits="userSpaceOnUse" x1="0" y1="220" x2="0" y2="370">
 <stop offset="0" stop-color="#b83818"/>
 <stop offset="1" stop-color="#9a3a14"/>
</linearGradient>
<clipPath id="hornclip"><path d="M680 361L734 256Q758 221 790 223L884 217L884 227L790 233Q764 231 742 260L688 365Z"/></clipPath><clipPath id="clip1"><path d="M887.7 479.5 L888.2 478.2 L888.7 477.6 L889.2 477.2 L889.7 476.9 L890.2 476.5 L890.7 476.3 L891.2 476.0 L891.7 475.8 L892.2 475.5 L892.7 475.3 L893.2 475.1 L893.7 474.9 L894.2 474.7 L894.7 474.6 L895.2 474.4 L895.7 474.2 L896.2 474.1 L896.6 473.9 L897.1 473.8 L897.6 473.7 L898.1 473.5 L898.6 473.4 L899.1 473.3 L899.6 473.1 L900.1 473.0 L900.6 472.9 L901.1 472.8 L901.6 472.7 L902.1 472.6 L902.6 472.5 L903.1 472.4 L903.6 472.3 L904.1 472.2 L904.6 472.1 L905.1 472.0 L905.6 471.9 L906.1 471.8 L906.6 471.7 L907.1 471.6 L907.6 471.6 L908.1 471.5 L908.6 471.4 L909.1 471.3 L909.6 471.3 L910.1 471.2 L910.6 471.1 L911.0 471.0 L911.5 471.0 L912.0 470.9 L912.5 470.8 L913.0 470.8 L913.5 470.7 L914.0 470.7 L914.5 470.6 L915.0 470.5 L915.5 470.5 L916.0 470.4 L916.5 470.4 L917.0 470.3 L917.5 470.3 L918.0 470.2 L918.5 470.2 L919.0 470.1 L919.5 470.1 L920.0 470.0 L920.5 470.0 L921.0 470.0 L921.5 469.9 L922.0 469.9 L922.5 469.8 L923.0 469.8 L923.5 469.8 L924.0 469.7 L924.5 469.7 L924.9 469.7 L925.4 469.6 L925.9 469.6 L926.4 469.6 L926.9 469.6 L927.4 469.5 L927.9 469.5 L928.4 469.5 L928.9 469.5 L929.4 469.4 L929.9 469.4 L930.4 469.4 L930.9 469.4 L931.4 469.4 L931.9 469.4 L932.4 469.3 L932.9 469.3 L933.4 469.3 L933.9 469.3 L934.4 469.3 L934.9 469.3 L935.4 469.3 L935.9 469.3 L936.4 469.3 L936.9 469.3 L937.4 469.3 L937.9 469.3 L938.4 469.3 L938.8 469.3 L939.3 469.3 L939.8 469.3 L940.3 469.3 L940.8 469.3 L941.3 469.3 L941.8 469.3 L942.3 469.3 L942.8 469.3 L943.3 469.3 L943.8 469.4 L944.3 469.4 L944.8 469.4 L945.3 469.4 L945.8 469.4 L946.3 469.4 L946.8 469.5 L947.3 469.5 L947.8 469.5 L948.3 469.5 L948.8 469.6 L949.3 469.6 L949.8 469.6 L950.3 469.7 L950.8 469.7 L951.3 469.7 L951.8 469.8 L952.3 469.8 L952.7 469.8 L953.2 469.9 L953.7 469.9 L954.2 470.0 L954.7 470.0 L955.2 470.1 L955.7 470.1 L956.2 470.2 L956.7 470.2 L957.2 470.3 L957.7 470.4 L958.2 470.4 L958.7 470.5 L959.2 470.6 L959.7 470.6 L960.2 470.7 L960.7 470.8 L961.2 470.9 L961.7 470.9 L962.2 471.0 L962.7 471.1 L963.2 471.2 L963.7 471.3 L964.2 471.4 L964.7 471.5 L965.2 471.6 L965.7 471.8 L966.2 471.9 L966.6 472.0 L967.1 472.2 L967.6 472.3 L968.1 472.5 L968.6 472.6 L969.1 472.8 L969.6 473.0 L970.1 473.2 L970.6 473.4 L971.1 473.6 L971.6 473.9 L972.1 474.2 L972.6 474.6 L973.1 475.1 L973.6 475.9 L974.1 485.2 L974.6 495.3 L975.1 506.1 L975.6 516.2 L976.1 526.3 L976.6 537.1 L977.1 547.4 L977.1 547.4 L976.6 548.8 L976.1 549.3 L975.6 549.8 L975.1 550.1 L974.6 550.5 L974.1 550.7 L973.6 551.0 L973.1 551.3 L972.6 551.5 L972.1 551.7 L971.6 551.9 L971.1 552.1 L970.6 552.3 L970.1 552.5 L969.6 552.6 L969.1 552.8 L968.6 552.9 L968.1 553.1 L967.6 553.2 L967.1 553.4 L966.6 553.5 L966.2 553.7 L965.7 553.8 L965.2 553.9 L964.7 554.0 L964.2 554.2 L963.7 554.3 L963.2 554.4 L962.7 554.5 L962.2 554.6 L961.7 554.7 L961.2 554.8 L960.7 554.9 L960.2 555.0 L959.7 555.1 L959.2 555.2 L958.7 555.3 L958.2 555.4 L957.7 555.4 L957.2 555.5 L956.7 555.6 L956.2 555.7 L955.7 555.8 L955.2 555.9 L954.7 555.9 L954.2 556.0 L953.7 556.1 L953.2 556.1 L952.7 556.2 L952.3 556.3 L951.8 556.3 L951.3 556.4 L950.8 556.5 L950.3 556.5 L949.8 556.6 L949.3 556.6 L948.8 556.7 L948.3 556.8 L947.8 556.8 L947.3 556.9 L946.8 556.9 L946.3 557.0 L945.8 557.0 L945.3 557.1 L944.8 557.1 L944.3 557.2 L943.8 557.2 L943.3 557.2 L942.8 557.3 L942.3 557.3 L941.8 557.4 L941.3 557.4 L940.8 557.4 L940.3 557.5 L939.8 557.5 L939.3 557.5 L938.8 557.6 L938.4 557.6 L937.9 557.6 L937.4 557.7 L936.9 557.7 L936.4 557.7 L935.9 557.7 L935.4 557.8 L934.9 557.8 L934.4 557.8 L933.9 557.8 L933.4 557.8 L932.9 557.9 L932.4 557.9 L931.9 557.9 L931.4 557.9 L930.9 557.9 L930.4 557.9 L929.9 557.9 L929.4 558.0 L928.9 558.0 L928.4 558.0 L927.9 558.0 L927.4 558.0 L926.9 558.0 L926.4 558.0 L925.9 558.0 L925.4 558.0 L924.9 558.0 L924.5 558.0 L924.0 558.0 L923.5 558.0 L923.0 558.0 L922.5 558.0 L922.0 558.0 L921.5 558.0 L921.0 558.0 L920.5 557.9 L920.0 557.9 L919.5 557.9 L919.0 557.9 L918.5 557.9 L918.0 557.9 L917.5 557.9 L917.0 557.8 L916.5 557.8 L916.0 557.8 L915.5 557.8 L915.0 557.7 L914.5 557.7 L914.0 557.7 L913.5 557.7 L913.0 557.6 L912.5 557.6 L912.0 557.6 L911.5 557.5 L911.0 557.5 L910.6 557.4 L910.1 557.4 L909.6 557.4 L909.1 557.3 L908.6 557.3 L908.1 557.2 L907.6 557.2 L907.1 557.1 L906.6 557.1 L906.1 557.0 L905.6 556.9 L905.1 556.9 L904.6 556.8 L904.1 556.8 L903.6 556.7 L903.1 556.6 L902.6 556.5 L902.1 556.5 L901.6 556.4 L901.1 556.3 L900.6 556.2 L900.1 556.1 L899.6 556.0 L899.1 555.9 L898.6 555.8 L898.1 555.7 L897.6 555.6 L897.1 555.5 L896.6 555.4 L896.2 555.3 L895.7 555.1 L895.2 555.0 L894.7 554.9 L894.2 554.7 L893.7 554.5 L893.2 554.4 L892.7 554.2 L892.2 554.0 L891.7 553.8 L891.2 553.5 L890.7 553.2 L890.2 552.9 L889.7 552.6 L889.2 552.1 L888.7 551.5 L888.2 526.6 L887.7 479.5Z"/></clipPath><clipPath id="clip2"><path d="M847.3 465.9 L847.8 464.1 L848.3 463.3 L848.8 462.7 L849.3 462.1 L849.8 461.5 L850.3 460.9 L850.8 460.3 L851.3 459.6 L851.8 459.0 L852.3 458.4 L852.8 457.8 L853.3 457.2 L853.7 456.6 L854.2 456.0 L854.7 455.4 L855.2 454.8 L855.7 454.2 L856.2 453.5 L856.7 452.9 L857.2 452.3 L857.7 451.7 L858.2 451.1 L858.7 450.5 L859.2 449.9 L859.7 449.3 L860.2 448.7 L860.7 448.2 L861.2 447.7 L861.7 447.3 L862.2 446.8 L862.7 446.4 L863.2 445.9 L863.7 445.4 L864.2 445.0 L864.7 444.5 L865.2 444.1 L865.7 443.6 L866.2 443.1 L866.7 442.7 L867.2 442.2 L867.7 441.8 L868.2 441.3 L868.7 440.8 L869.2 440.4 L869.7 439.9 L870.2 439.5 L870.7 439.0 L871.2 438.5 L871.7 438.1 L872.2 437.6 L872.7 437.1 L873.2 436.7 L873.7 436.2 L874.2 435.8 L874.7 435.3 L875.2 434.8 L875.6 434.4 L876.1 433.9 L876.6 433.5 L877.1 433.0 L877.6 432.3 L878.1 431.5 L878.6 430.8 L879.1 430.0 L879.6 429.2 L880.1 428.5 L880.6 427.7 L881.1 427.0 L881.6 426.2 L882.1 425.4 L882.6 424.7 L883.1 423.9 L883.6 423.2 L884.1 422.4 L884.6 421.7 L885.1 420.9 L885.6 420.1 L886.1 419.4 L886.6 418.6 L887.1 417.9 L887.6 417.1 L888.1 416.3 L888.6 415.6 L889.1 414.9 L889.6 414.4 L890.1 414.0 L890.6 413.7 L891.1 413.4 L891.6 413.2 L892.1 412.9 L892.6 412.7 L893.1 412.5 L893.6 412.3 L894.1 412.1 L894.6 411.9 L895.1 411.7 L895.6 411.6 L896.1 411.4 L896.6 411.3 L897.0 411.1 L897.5 411.0 L898.0 410.8 L898.5 410.7 L899.0 410.6 L899.5 410.4 L900.0 410.3 L900.5 410.2 L901.0 410.1 L901.5 410.0 L902.0 409.9 L902.5 409.8 L903.0 409.7 L903.5 409.6 L904.0 409.5 L904.5 409.4 L905.0 409.3 L905.5 409.2 L906.0 409.1 L906.5 409.0 L907.0 409.0 L907.5 408.9 L908.0 408.8 L908.5 408.7 L909.0 408.6 L909.5 408.6 L910.0 408.5 L910.5 408.4 L911.0 408.4 L911.5 408.3 L912.0 408.2 L912.5 408.2 L913.0 408.1 L913.5 408.0 L914.0 408.0 L914.5 407.9 L915.0 407.9 L915.5 407.8 L916.0 407.8 L916.5 407.7 L917.0 407.7 L917.5 407.6 L918.0 407.6 L918.5 407.5 L918.9 407.5 L919.4 407.5 L919.9 407.4 L920.4 407.4 L920.9 407.3 L921.4 407.3 L921.9 407.3 L922.4 407.2 L922.9 407.2 L923.4 407.2 L923.9 407.1 L924.4 407.1 L924.9 407.1 L925.4 407.1 L925.9 407.0 L926.4 407.0 L926.9 407.0 L927.4 407.0 L927.9 406.9 L928.4 406.9 L928.9 406.9 L929.4 406.9 L929.9 406.9 L930.4 406.9 L930.9 406.8 L931.4 406.8 L931.9 406.8 L932.4 406.8 L932.9 406.8 L933.4 406.8 L933.9 406.8 L934.4 406.8 L934.9 406.8 L935.4 406.8 L935.9 406.8 L936.4 406.8 L936.9 406.8 L937.4 406.8 L937.9 406.8 L938.4 406.8 L938.9 406.8 L939.4 406.8 L939.9 406.8 L940.3 406.8 L940.8 406.8 L941.3 406.9 L941.8 406.9 L942.3 406.9 L942.8 406.9 L943.3 406.9 L943.8 406.9 L944.3 407.0 L944.8 407.0 L945.3 407.0 L945.8 407.0 L946.3 407.1 L946.8 407.1 L947.3 407.1 L947.8 407.2 L948.3 407.2 L948.8 407.3 L949.3 407.3 L949.8 407.3 L950.3 407.4 L950.8 407.4 L951.3 407.5 L951.8 407.5 L952.3 407.6 L952.8 407.6 L953.3 407.7 L953.8 407.7 L954.3 407.8 L954.8 407.9 L955.3 407.9 L955.8 408.0 L956.3 408.1 L956.8 408.1 L957.3 408.2 L957.8 408.3 L958.3 408.4 L958.8 408.5 L959.3 408.6 L959.8 408.7 L960.3 408.8 L960.8 408.9 L961.3 409.0 L961.8 409.1 L962.2 409.2 L962.7 409.4 L963.2 409.5 L963.7 409.7 L964.2 409.8 L964.7 410.0 L965.2 410.2 L965.7 410.3 L966.2 410.6 L966.7 410.8 L967.2 411.0 L967.7 411.3 L968.2 411.7 L968.7 412.1 L969.2 412.8 L969.7 413.4 L970.2 414.1 L970.7 414.8 L971.2 415.4 L971.7 416.1 L972.2 416.8 L972.7 417.4 L973.2 418.1 L973.7 418.7 L974.2 419.4 L974.7 420.1 L975.2 420.8 L975.7 421.4 L976.2 422.1 L976.7 422.7 L977.2 423.4 L977.7 424.1 L978.2 424.8 L978.7 425.4 L979.2 426.1 L979.7 426.7 L980.2 427.4 L980.7 428.1 L981.2 428.7 L981.7 429.3 L982.2 429.7 L982.7 430.1 L983.2 430.5 L983.6 430.9 L984.1 431.3 L984.6 431.7 L985.1 432.1 L985.6 432.5 L986.1 432.9 L986.6 433.3 L987.1 433.7 L987.6 434.1 L988.1 434.5 L988.6 434.9 L989.1 435.4 L989.6 435.8 L990.1 436.2 L990.6 436.6 L991.1 437.0 L991.6 437.4 L992.1 437.8 L992.6 438.2 L993.1 438.6 L993.6 439.0 L994.1 439.4 L994.6 439.8 L995.1 440.2 L995.6 440.6 L996.1 441.0 L996.6 441.4 L997.1 441.8 L997.6 442.2 L998.1 442.6 L998.6 443.0 L999.1 443.4 L999.6 443.9 L1000.1 444.4 L1000.6 444.9 L1001.1 445.5 L1001.6 446.0 L1002.1 446.5 L1002.6 447.1 L1003.1 447.6 L1003.6 448.1 L1004.1 448.7 L1004.6 449.2 L1005.1 449.8 L1005.5 450.3 L1006.0 450.8 L1006.5 451.4 L1007.0 451.9 L1007.5 452.4 L1008.0 453.0 L1008.5 453.5 L1009.0 454.0 L1009.5 454.6 L1010.0 455.1 L1010.5 455.6 L1011.0 456.2 L1011.5 456.7 L1012.0 457.3 L1012.5 457.9 L1013.0 458.8 L1013.5 468.1 L1013.5 468.1 L1013.0 469.9 L1012.5 470.7 L1012.0 471.3 L1011.5 471.8 L1011.0 472.2 L1010.5 472.6 L1010.0 473.0 L1009.5 473.3 L1009.0 473.6 L1008.5 473.9 L1008.0 474.2 L1007.5 474.5 L1007.0 474.7 L1006.5 475.0 L1006.0 475.2 L1005.5 475.5 L1005.1 475.7 L1004.6 475.9 L1004.1 476.1 L1003.6 476.3 L1003.1 476.5 L1002.6 476.7 L1002.1 476.9 L1001.6 477.1 L1001.1 477.3 L1000.6 477.4 L1000.1 477.6 L999.6 477.8 L999.1 478.0 L998.6 478.1 L998.1 478.3 L997.6 478.4 L997.1 478.6 L996.6 478.7 L996.1 478.9 L995.6 479.0 L995.1 479.2 L994.6 479.3 L994.1 479.4 L993.6 479.6 L993.1 479.7 L992.6 479.8 L992.1 480.0 L991.6 480.1 L991.1 480.2 L990.6 480.3 L990.1 480.5 L989.6 480.6 L989.1 480.7 L988.6 480.8 L988.1 480.9 L987.6 481.0 L987.1 481.2 L986.6 481.3 L986.1 481.4 L985.6 481.5 L985.1 481.6 L984.6 481.7 L984.1 481.8 L983.6 481.9 L983.2 482.0 L982.7 482.1 L982.2 482.2 L981.7 482.3 L981.2 482.4 L980.7 482.5 L980.2 482.6 L979.7 482.7 L979.2 482.7 L978.7 482.8 L978.2 482.9 L977.7 483.0 L977.2 483.1 L976.7 483.2 L976.2 483.3 L975.7 483.3 L975.2 483.4 L974.7 483.5 L974.2 483.6 L973.7 483.7 L973.2 483.7 L972.7 483.8 L972.2 483.9 L971.7 484.0 L971.2 484.0 L970.7 484.1 L970.2 484.2 L969.7 484.3 L969.2 484.3 L968.7 484.4 L968.2 484.5 L967.7 484.5 L967.2 484.6 L966.7 484.7 L966.2 484.7 L965.7 484.8 L965.2 484.9 L964.7 484.9 L964.2 485.0 L963.7 485.0 L963.2 485.1 L962.7 485.2 L962.2 485.2 L961.8 485.3 L961.3 485.3 L960.8 485.4 L960.3 485.5 L959.8 485.5 L959.3 485.6 L958.8 485.6 L958.3 485.7 L957.8 485.7 L957.3 485.8 L956.8 485.8 L956.3 485.9 L955.8 485.9 L955.3 486.0 L954.8 486.0 L954.3 486.1 L953.8 486.1 L953.3 486.2 L952.8 486.2 L952.3 486.3 L951.8 486.3 L951.3 486.3 L950.8 486.4 L950.3 486.4 L949.8 486.5 L949.3 486.5 L948.8 486.6 L948.3 486.6 L947.8 486.6 L947.3 486.7 L946.8 486.7 L946.3 486.7 L945.8 486.8 L945.3 486.8 L944.8 486.9 L944.3 486.9 L943.8 486.9 L943.3 487.0 L942.8 487.0 L942.3 487.0 L941.8 487.0 L941.3 487.1 L940.8 487.1 L940.3 487.1 L939.9 487.2 L939.4 487.2 L938.9 487.2 L938.4 487.3 L937.9 487.3 L937.4 487.3 L936.9 487.3 L936.4 487.4 L935.9 487.4 L935.4 487.4 L934.9 487.4 L934.4 487.4 L933.9 487.5 L933.4 487.5 L932.9 487.5 L932.4 487.5 L931.9 487.5 L931.4 487.6 L930.9 487.6 L930.4 487.6 L929.9 487.6 L929.4 487.6 L928.9 487.7 L928.4 487.7 L927.9 487.7 L927.4 487.7 L926.9 487.7 L926.4 487.7 L925.9 487.7 L925.4 487.7 L924.9 487.8 L924.4 487.8 L923.9 487.8 L923.4 487.8 L922.9 487.8 L922.4 487.8 L921.9 487.8 L921.4 487.8 L920.9 487.8 L920.4 487.8 L919.9 487.8 L919.4 487.8 L918.9 487.8 L918.5 487.8 L918.0 487.8 L917.5 487.9 L917.0 487.9 L916.5 487.9 L916.0 487.9 L915.5 487.9 L915.0 487.9 L914.5 487.8 L914.0 487.8 L913.5 487.8 L913.0 487.8 L912.5 487.8 L912.0 487.8 L911.5 487.8 L911.0 487.8 L910.5 487.8 L910.0 487.8 L909.5 487.8 L909.0 487.8 L908.5 487.8 L908.0 487.8 L907.5 487.8 L907.0 487.7 L906.5 487.7 L906.0 487.7 L905.5 487.7 L905.0 487.7 L904.5 487.7 L904.0 487.7 L903.5 487.6 L903.0 487.6 L902.5 487.6 L902.0 487.6 L901.5 487.6 L901.0 487.5 L900.5 487.5 L900.0 487.5 L899.5 487.5 L899.0 487.5 L898.5 487.4 L898.0 487.4 L897.5 487.4 L897.0 487.4 L896.6 487.3 L896.1 487.3 L895.6 487.3 L895.1 487.3 L894.6 487.2 L894.1 487.2 L893.6 487.2 L893.1 487.1 L892.6 487.1 L892.1 487.1 L891.6 487.0 L891.1 487.0 L890.6 487.0 L890.1 486.9 L889.6 486.9 L889.1 486.8 L888.6 486.8 L888.1 486.8 L887.6 486.7 L887.1 486.7 L886.6 486.6 L886.1 486.6 L885.6 486.5 L885.1 486.5 L884.6 486.4 L884.1 486.4 L883.6 486.3 L883.1 486.3 L882.6 486.2 L882.1 486.2 L881.6 486.1 L881.1 486.1 L880.6 486.0 L880.1 486.0 L879.6 485.9 L879.1 485.8 L878.6 485.8 L878.1 485.7 L877.6 485.6 L877.1 485.6 L876.6 485.5 L876.1 485.4 L875.6 485.4 L875.2 485.3 L874.7 485.2 L874.2 485.2 L873.7 485.1 L873.2 485.0 L872.7 484.9 L872.2 484.8 L871.7 484.8 L871.2 484.7 L870.7 484.6 L870.2 484.5 L869.7 484.4 L869.2 484.3 L868.7 484.2 L868.2 484.1 L867.7 484.0 L867.2 483.9 L866.7 483.8 L866.2 483.7 L865.7 483.6 L865.2 483.5 L864.7 483.4 L864.2 483.3 L863.7 483.2 L863.2 483.1 L862.7 482.9 L862.2 482.8 L861.7 482.7 L861.2 482.6 L860.7 482.4 L860.2 482.3 L859.7 482.1 L859.2 482.0 L858.7 481.8 L858.2 481.7 L857.7 481.5 L857.2 481.4 L856.7 481.2 L856.2 481.0 L855.7 480.8 L855.2 480.6 L854.7 480.4 L854.2 480.2 L853.7 480.0 L853.3 479.8 L852.8 479.5 L852.3 479.3 L851.8 479.0 L851.3 478.7 L850.8 478.4 L850.3 478.0 L849.8 477.7 L849.3 477.2 L848.8 476.7 L848.3 476.1 L847.8 475.2 L847.3 465.9Z"/></clipPath><clipPath id="clip3"><path d="M886.6 337.4 L887.1 336.1 L887.6 335.6 L888.1 335.2 L888.6 334.8 L889.1 334.5 L889.6 334.3 L890.1 334.0 L890.6 333.8 L891.1 333.6 L891.6 333.4 L892.1 333.2 L892.6 333.0 L893.1 332.8 L893.6 332.6 L894.1 332.5 L894.6 332.3 L895.1 332.2 L895.6 332.0 L896.1 331.9 L896.6 331.8 L897.1 331.6 L897.6 331.5 L898.1 331.4 L898.6 331.3 L899.1 331.2 L899.6 331.0 L900.1 330.9 L900.6 330.8 L901.1 330.7 L901.6 330.6 L902.1 330.5 L902.6 330.4 L903.1 330.4 L903.6 330.3 L904.1 330.2 L904.6 330.1 L905.0 330.0 L905.5 329.9 L906.0 329.9 L906.5 329.8 L907.0 329.7 L907.5 329.6 L908.0 329.6 L908.5 329.5 L909.0 329.4 L909.5 329.4 L910.0 329.3 L910.5 329.2 L911.0 329.2 L911.5 329.1 L912.0 329.1 L912.5 329.0 L913.0 328.9 L913.5 328.9 L914.0 328.8 L914.5 328.8 L915.0 328.7 L915.5 328.7 L916.0 328.7 L916.5 328.6 L917.0 328.6 L917.5 328.5 L918.0 328.5 L918.5 328.4 L919.0 328.4 L919.5 328.4 L920.0 328.3 L920.5 328.3 L921.0 328.3 L921.5 328.2 L922.0 328.2 L922.5 328.2 L923.0 328.2 L923.5 328.1 L924.0 328.1 L924.5 328.1 L925.0 328.1 L925.5 328.0 L926.0 328.0 L926.5 328.0 L927.0 328.0 L927.5 328.0 L928.0 328.0 L928.5 327.9 L929.0 327.9 L929.5 327.9 L930.0 327.9 L930.5 327.9 L931.0 327.9 L931.5 327.9 L932.0 327.9 L932.5 327.9 L933.0 327.9 L933.5 327.9 L934.0 327.9 L934.5 327.9 L935.0 327.9 L935.5 327.9 L936.0 327.9 L936.5 327.9 L937.0 327.9 L937.5 327.9 L938.0 327.9 L938.5 327.9 L939.0 328.0 L939.5 328.0 L940.0 328.0 L940.5 328.0 L941.0 328.0 L941.5 328.1 L942.0 328.1 L942.5 328.1 L943.0 328.1 L943.5 328.2 L944.0 328.2 L944.4 328.2 L944.9 328.2 L945.4 328.3 L945.9 328.3 L946.4 328.4 L946.9 328.4 L947.4 328.4 L947.9 328.5 L948.4 328.5 L948.9 328.6 L949.4 328.6 L949.9 328.7 L950.4 328.7 L950.9 328.8 L951.4 328.9 L951.9 328.9 L952.4 329.0 L952.9 329.1 L953.4 329.1 L953.9 329.2 L954.4 329.3 L954.9 329.4 L955.4 329.4 L955.9 329.5 L956.4 329.6 L956.9 329.7 L957.4 329.8 L957.9 329.9 L958.4 330.0 L958.9 330.2 L959.4 330.3 L959.9 330.4 L960.4 330.5 L960.9 330.7 L961.4 330.8 L961.9 331.0 L962.4 331.2 L962.9 331.4 L963.4 331.6 L963.9 331.8 L964.4 332.1 L964.9 332.4 L965.4 332.7 L965.9 333.1 L966.4 333.8 L966.9 345.3 L967.4 362.4 L967.9 378.2 L968.4 389.3 L968.9 401.3 L969.4 413.6 L969.4 413.6 L968.9 414.9 L968.4 415.4 L967.9 415.8 L967.4 416.2 L966.9 416.5 L966.4 416.7 L965.9 417.0 L965.4 417.2 L964.9 417.4 L964.4 417.7 L963.9 417.8 L963.4 418.0 L962.9 418.2 L962.4 418.4 L961.9 418.5 L961.4 418.7 L960.9 418.8 L960.4 419.0 L959.9 419.1 L959.4 419.3 L958.9 419.4 L958.4 419.5 L957.9 419.6 L957.4 419.8 L956.9 419.9 L956.4 420.0 L955.9 420.1 L955.4 420.2 L954.9 420.3 L954.4 420.4 L953.9 420.5 L953.4 420.6 L952.9 420.7 L952.4 420.8 L951.9 420.9 L951.4 420.9 L950.9 421.0 L950.4 421.1 L949.9 421.2 L949.4 421.3 L948.9 421.3 L948.4 421.4 L947.9 421.5 L947.4 421.6 L946.9 421.6 L946.4 421.7 L945.9 421.7 L945.4 421.8 L944.9 421.9 L944.4 421.9 L944.0 422.0 L943.5 422.0 L943.0 422.1 L942.5 422.2 L942.0 422.2 L941.5 422.3 L941.0 422.3 L940.5 422.4 L940.0 422.4 L939.5 422.4 L939.0 422.5 L938.5 422.5 L938.0 422.6 L937.5 422.6 L937.0 422.7 L936.5 422.7 L936.0 422.7 L935.5 422.8 L935.0 422.8 L934.5 422.8 L934.0 422.9 L933.5 422.9 L933.0 422.9 L932.5 422.9 L932.0 423.0 L931.5 423.0 L931.0 423.0 L930.5 423.0 L930.0 423.1 L929.5 423.1 L929.0 423.1 L928.5 423.1 L928.0 423.1 L927.5 423.1 L927.0 423.2 L926.5 423.2 L926.0 423.2 L925.5 423.2 L925.0 423.2 L924.5 423.2 L924.0 423.2 L923.5 423.2 L923.0 423.2 L922.5 423.2 L922.0 423.2 L921.5 423.2 L921.0 423.2 L920.5 423.2 L920.0 423.2 L919.5 423.2 L919.0 423.2 L918.5 423.2 L918.0 423.2 L917.5 423.2 L917.0 423.2 L916.5 423.1 L916.0 423.1 L915.5 423.1 L915.0 423.1 L914.5 423.1 L914.0 423.1 L913.5 423.0 L913.0 423.0 L912.5 423.0 L912.0 423.0 L911.5 422.9 L911.0 422.9 L910.5 422.9 L910.0 422.8 L909.5 422.8 L909.0 422.8 L908.5 422.7 L908.0 422.7 L907.5 422.6 L907.0 422.6 L906.5 422.5 L906.0 422.5 L905.5 422.4 L905.0 422.4 L904.6 422.3 L904.1 422.3 L903.6 422.2 L903.1 422.1 L902.6 422.1 L902.1 422.0 L901.6 421.9 L901.1 421.9 L900.6 421.8 L900.1 421.7 L899.6 421.6 L899.1 421.5 L898.6 421.4 L898.1 421.3 L897.6 421.2 L897.1 421.1 L896.6 421.0 L896.1 420.9 L895.6 420.8 L895.1 420.6 L894.6 420.5 L894.1 420.4 L893.6 420.2 L893.1 420.0 L892.6 419.9 L892.1 419.7 L891.6 419.5 L891.1 419.2 L890.6 419.0 L890.1 418.7 L889.6 418.3 L889.1 417.9 L888.6 417.2 L888.1 400.5 L887.6 371.6 L887.1 354.5 L886.6 337.4Z"/></clipPath><clipPath id="clip4"><path d="M834.0 319.2 L834.5 317.3 L835.0 316.5 L835.5 315.9 L836.0 315.3 L836.5 314.9 L837.0 314.5 L837.5 314.1 L838.0 313.6 L838.5 313.2 L839.0 312.8 L839.5 312.4 L840.0 312.0 L840.5 311.6 L841.0 311.2 L841.5 310.7 L842.0 310.3 L842.5 309.9 L843.0 309.5 L843.5 309.1 L844.0 308.7 L844.5 308.3 L845.0 307.9 L845.5 307.4 L846.0 307.0 L846.5 306.6 L847.0 306.2 L847.5 305.8 L848.0 305.4 L848.5 305.0 L849.0 304.6 L849.4 304.1 L849.9 303.7 L850.4 303.3 L850.9 302.9 L851.4 302.5 L851.9 302.1 L852.4 301.7 L852.9 301.3 L853.4 300.8 L853.9 300.4 L854.4 300.0 L854.9 299.6 L855.4 299.2 L855.9 298.8 L856.4 298.3 L856.9 297.9 L857.4 297.4 L857.9 297.0 L858.4 296.6 L858.9 296.1 L859.4 295.7 L859.9 295.2 L860.4 294.8 L860.9 294.4 L861.4 293.9 L861.9 293.5 L862.4 293.0 L862.9 292.6 L863.4 292.2 L863.9 291.7 L864.4 291.3 L864.9 290.8 L865.4 290.4 L865.9 290.0 L866.4 289.5 L866.9 289.1 L867.4 288.6 L867.9 288.2 L868.4 287.8 L868.9 287.3 L869.4 286.9 L869.9 286.4 L870.4 286.0 L870.9 285.6 L871.4 285.1 L871.9 284.7 L872.4 284.2 L872.8 283.8 L873.3 283.4 L873.8 282.8 L874.3 281.7 L874.8 280.8 L875.3 279.7 L875.8 278.8 L876.3 277.8 L876.8 276.8 L877.3 275.8 L877.8 274.8 L878.3 273.8 L878.8 272.8 L879.3 271.8 L879.8 270.8 L880.3 269.8 L880.8 268.8 L881.3 267.8 L881.8 266.8 L882.3 265.8 L882.8 264.8 L883.3 263.8 L883.8 262.8 L884.3 261.9 L884.8 260.8 L885.3 259.9 L885.8 258.8 L886.3 257.9 L886.8 256.8 L887.3 255.9 L887.8 247.0 L888.3 238.5 L888.8 232.5 L889.3 231.8 L889.8 231.4 L890.3 231.0 L890.8 230.7 L891.3 230.4 L891.8 230.2 L892.3 230.0 L892.8 229.8 L893.3 229.6 L893.8 229.4 L894.3 229.2 L894.8 229.0 L895.3 228.9 L895.7 228.7 L896.2 228.6 L896.7 228.4 L897.2 228.3 L897.7 228.2 L898.2 228.1 L898.7 227.9 L899.2 227.8 L899.7 227.7 L900.2 227.6 L900.7 227.5 L901.2 227.4 L901.7 227.3 L902.2 227.2 L902.7 227.1 L903.2 227.0 L903.7 226.9 L904.2 226.8 L904.7 226.8 L905.2 226.7 L905.7 226.6 L906.2 226.5 L906.7 226.5 L907.2 226.4 L907.7 226.3 L908.2 226.3 L908.7 226.2 L909.2 226.1 L909.7 226.1 L910.2 226.0 L910.7 225.9 L911.2 225.9 L911.7 225.8 L912.2 225.8 L912.7 225.7 L913.2 225.7 L913.7 225.6 L914.2 225.6 L914.7 225.5 L915.2 225.5 L915.7 225.5 L916.2 225.4 L916.7 225.4 L917.2 225.3 L917.7 225.3 L918.2 225.3 L918.6 225.2 L919.1 225.2 L919.6 225.2 L920.1 225.2 L920.6 225.1 L921.1 225.1 L921.6 225.1 L922.1 225.1 L922.6 225.0 L923.1 225.0 L923.6 225.0 L924.1 225.0 L924.6 225.0 L925.1 225.0 L925.6 224.9 L926.1 224.9 L926.6 224.9 L927.1 224.9 L927.6 224.9 L928.1 224.9 L928.6 224.9 L929.1 224.9 L929.6 224.9 L930.1 224.9 L930.6 224.9 L931.1 224.9 L931.6 224.9 L932.1 224.9 L932.6 224.9 L933.1 224.9 L933.6 224.9 L934.1 225.0 L934.6 225.0 L935.1 225.0 L935.6 225.0 L936.1 225.0 L936.6 225.0 L937.1 225.1 L937.6 225.1 L938.1 225.1 L938.6 225.1 L939.1 225.2 L939.6 225.2 L940.1 225.2 L940.6 225.3 L941.1 225.3 L941.6 225.4 L942.0 225.4 L942.5 225.5 L943.0 225.5 L943.5 225.6 L944.0 225.6 L944.5 225.7 L945.0 225.7 L945.5 225.8 L946.0 225.8 L946.5 225.9 L947.0 226.0 L947.5 226.1 L948.0 226.1 L948.5 226.2 L949.0 226.3 L949.5 226.4 L950.0 226.5 L950.5 226.6 L951.0 226.7 L951.5 226.8 L952.0 226.9 L952.5 227.0 L953.0 227.2 L953.5 227.3 L954.0 227.5 L954.5 227.6 L955.0 227.8 L955.5 228.0 L956.0 228.2 L956.5 228.5 L957.0 228.7 L957.5 229.1 L958.0 229.5 L958.5 230.2 L959.0 234.1 L959.5 238.6 L960.0 243.1 L960.5 247.0 L961.0 251.4 L961.5 253.7 L962.0 254.6 L962.5 255.4 L963.0 256.3 L963.5 257.1 L964.0 258.0 L964.5 258.9 L964.9 259.7 L965.4 260.5 L965.9 261.4 L966.4 262.3 L966.9 263.1 L967.4 264.0 L967.9 264.8 L968.4 265.7 L968.9 266.6 L969.4 267.4 L969.9 268.3 L970.4 269.1 L970.9 270.0 L971.4 270.9 L971.9 271.7 L972.4 272.6 L972.9 273.5 L973.4 274.3 L973.9 275.2 L974.4 276.0 L974.9 276.9 L975.4 277.8 L975.9 278.6 L976.4 279.4 L976.9 279.8 L977.4 280.2 L977.9 280.6 L978.4 280.9 L978.9 281.3 L979.4 281.7 L979.9 282.1 L980.4 282.5 L980.9 282.9 L981.4 283.2 L981.9 283.6 L982.4 284.0 L982.9 284.4 L983.4 284.8 L983.9 285.2 L984.4 285.6 L984.9 285.9 L985.4 286.3 L985.9 286.7 L986.4 287.1 L986.9 287.5 L987.4 287.9 L987.9 288.2 L988.3 288.6 L988.8 289.0 L989.3 289.4 L989.8 289.8 L990.3 290.2 L990.8 290.5 L991.3 290.9 L991.8 291.3 L992.3 291.7 L992.8 292.1 L993.3 292.5 L993.8 292.8 L994.3 293.2 L994.8 293.6 L995.3 294.0 L995.8 294.4 L996.3 294.7 L996.8 295.1 L997.3 295.4 L997.8 295.8 L998.3 296.2 L998.8 296.5 L999.3 296.9 L999.8 297.2 L1000.3 297.6 L1000.8 298.0 L1001.3 298.3 L1001.8 298.7 L1002.3 299.0 L1002.8 299.4 L1003.3 299.8 L1003.8 300.1 L1004.3 300.5 L1004.8 300.8 L1005.3 301.2 L1005.8 301.6 L1006.3 301.9 L1006.8 302.3 L1007.3 302.6 L1007.8 303.0 L1008.3 303.3 L1008.8 303.7 L1009.3 304.1 L1009.8 304.4 L1010.3 304.8 L1010.8 305.1 L1011.2 305.5 L1011.7 305.9 L1012.2 306.2 L1012.7 306.6 L1013.2 306.9 L1013.7 307.3 L1014.2 307.7 L1014.7 308.0 L1015.2 308.4 L1015.7 308.8 L1016.2 309.2 L1016.7 309.8 L1017.2 310.4 L1017.7 311.3 L1018.2 319.8 L1018.2 319.8 L1017.7 321.7 L1017.2 322.5 L1016.7 323.1 L1016.2 323.7 L1015.7 324.1 L1015.2 324.5 L1014.7 324.9 L1014.2 325.3 L1013.7 325.6 L1013.2 325.9 L1012.7 326.2 L1012.2 326.5 L1011.7 326.8 L1011.2 327.0 L1010.8 327.3 L1010.3 327.5 L1009.8 327.8 L1009.3 328.0 L1008.8 328.2 L1008.3 328.5 L1007.8 328.7 L1007.3 328.9 L1006.8 329.1 L1006.3 329.3 L1005.8 329.5 L1005.3 329.6 L1004.8 329.8 L1004.3 330.0 L1003.8 330.2 L1003.3 330.4 L1002.8 330.5 L1002.3 330.7 L1001.8 330.8 L1001.3 331.0 L1000.8 331.2 L1000.3 331.3 L999.8 331.5 L999.3 331.6 L998.8 331.8 L998.3 331.9 L997.8 332.1 L997.3 332.2 L996.8 332.3 L996.3 332.5 L995.8 332.6 L995.3 332.7 L994.8 332.9 L994.3 333.0 L993.8 333.1 L993.3 333.2 L992.8 333.4 L992.3 333.5 L991.8 333.6 L991.3 333.7 L990.8 333.8 L990.3 334.0 L989.8 334.1 L989.3 334.2 L988.8 334.3 L988.3 334.4 L987.9 334.5 L987.4 334.6 L986.9 334.7 L986.4 334.8 L985.9 334.9 L985.4 335.0 L984.9 335.1 L984.4 335.2 L983.9 335.3 L983.4 335.4 L982.9 335.5 L982.4 335.6 L981.9 335.7 L981.4 335.8 L980.9 335.9 L980.4 336.0 L979.9 336.1 L979.4 336.2 L978.9 336.2 L978.4 336.3 L977.9 336.4 L977.4 336.5 L976.9 336.6 L976.4 336.7 L975.9 336.7 L975.4 336.8 L974.9 336.9 L974.4 337.0 L973.9 337.1 L973.4 337.1 L972.9 337.2 L972.4 337.3 L971.9 337.4 L971.4 337.4 L970.9 337.5 L970.4 337.6 L969.9 337.7 L969.4 337.7 L968.9 337.8 L968.4 337.9 L967.9 337.9 L967.4 338.0 L966.9 338.1 L966.4 338.1 L965.9 338.2 L965.4 338.3 L964.9 338.3 L964.5 338.4 L964.0 338.5 L963.5 338.5 L963.0 338.6 L962.5 338.6 L962.0 338.7 L961.5 338.8 L961.0 338.8 L960.5 338.9 L960.0 338.9 L959.5 339.0 L959.0 339.0 L958.5 339.1 L958.0 339.2 L957.5 339.2 L957.0 339.3 L956.5 339.3 L956.0 339.4 L955.5 339.4 L955.0 339.5 L954.5 339.5 L954.0 339.6 L953.5 339.6 L953.0 339.7 L952.5 339.7 L952.0 339.8 L951.5 339.8 L951.0 339.9 L950.5 339.9 L950.0 339.9 L949.5 340.0 L949.0 340.0 L948.5 340.1 L948.0 340.1 L947.5 340.2 L947.0 340.2 L946.5 340.2 L946.0 340.3 L945.5 340.3 L945.0 340.4 L944.5 340.4 L944.0 340.4 L943.5 340.5 L943.0 340.5 L942.5 340.5 L942.0 340.6 L941.6 340.6 L941.1 340.6 L940.6 340.7 L940.1 340.7 L939.6 340.7 L939.1 340.8 L938.6 340.8 L938.1 340.8 L937.6 340.9 L937.1 340.9 L936.6 340.9 L936.1 340.9 L935.6 341.0 L935.1 341.0 L934.6 341.0 L934.1 341.1 L933.6 341.1 L933.1 341.1 L932.6 341.1 L932.1 341.2 L931.6 341.2 L931.1 341.2 L930.6 341.2 L930.1 341.2 L929.6 341.3 L929.1 341.3 L928.6 341.3 L928.1 341.3 L927.6 341.3 L927.1 341.4 L926.6 341.4 L926.1 341.4 L925.6 341.4 L925.1 341.4 L924.6 341.5 L924.1 341.5 L923.6 341.5 L923.1 341.5 L922.6 341.5 L922.1 341.5 L921.6 341.5 L921.1 341.5 L920.6 341.6 L920.1 341.6 L919.6 341.6 L919.1 341.6 L918.6 341.6 L918.2 341.6 L917.7 341.6 L917.2 341.6 L916.7 341.6 L916.2 341.6 L915.7 341.6 L915.2 341.7 L914.7 341.7 L914.2 341.7 L913.7 341.7 L913.2 341.7 L912.7 341.7 L912.2 341.7 L911.7 341.7 L911.2 341.7 L910.7 341.7 L910.2 341.7 L909.7 341.7 L909.2 341.7 L908.7 341.7 L908.2 341.7 L907.7 341.7 L907.2 341.7 L906.7 341.7 L906.2 341.7 L905.7 341.7 L905.2 341.6 L904.7 341.6 L904.2 341.6 L903.7 341.6 L903.2 341.6 L902.7 341.6 L902.2 341.6 L901.7 341.6 L901.2 341.6 L900.7 341.6 L900.2 341.6 L899.7 341.5 L899.2 341.5 L898.7 341.5 L898.2 341.5 L897.7 341.5 L897.2 341.5 L896.7 341.5 L896.2 341.4 L895.7 341.4 L895.3 341.4 L894.8 341.4 L894.3 341.4 L893.8 341.4 L893.3 341.3 L892.8 341.3 L892.3 341.3 L891.8 341.3 L891.3 341.2 L890.8 341.2 L890.3 341.2 L889.8 341.2 L889.3 341.1 L888.8 341.1 L888.3 341.1 L887.8 341.1 L887.3 341.0 L886.8 341.0 L886.3 341.0 L885.8 340.9 L885.3 340.9 L884.8 340.9 L884.3 340.8 L883.8 340.8 L883.3 340.8 L882.8 340.7 L882.3 340.7 L881.8 340.7 L881.3 340.6 L880.8 340.6 L880.3 340.6 L879.8 340.5 L879.3 340.5 L878.8 340.4 L878.3 340.4 L877.8 340.3 L877.3 340.3 L876.8 340.3 L876.3 340.2 L875.8 340.2 L875.3 340.1 L874.8 340.1 L874.3 340.0 L873.8 340.0 L873.3 339.9 L872.8 339.9 L872.4 339.8 L871.9 339.7 L871.4 339.7 L870.9 339.6 L870.4 339.6 L869.9 339.5 L869.4 339.5 L868.9 339.4 L868.4 339.3 L867.9 339.3 L867.4 339.2 L866.9 339.1 L866.4 339.1 L865.9 339.0 L865.4 338.9 L864.9 338.9 L864.4 338.8 L863.9 338.7 L863.4 338.6 L862.9 338.6 L862.4 338.5 L861.9 338.4 L861.4 338.3 L860.9 338.2 L860.4 338.2 L859.9 338.1 L859.4 338.0 L858.9 337.9 L858.4 337.8 L857.9 337.7 L857.4 337.6 L856.9 337.5 L856.4 337.4 L855.9 337.3 L855.4 337.2 L854.9 337.1 L854.4 337.0 L853.9 336.9 L853.4 336.8 L852.9 336.7 L852.4 336.6 L851.9 336.5 L851.4 336.3 L850.9 336.2 L850.4 336.1 L849.9 336.0 L849.4 335.8 L849.0 335.7 L848.5 335.6 L848.0 335.4 L847.5 335.3 L847.0 335.1 L846.5 335.0 L846.0 334.8 L845.5 334.6 L845.0 334.5 L844.5 334.3 L844.0 334.1 L843.5 333.9 L843.0 333.7 L842.5 333.6 L842.0 333.3 L841.5 333.1 L841.0 332.9 L840.5 332.7 L840.0 332.4 L839.5 332.2 L839.0 331.9 L838.5 331.6 L838.0 331.3 L837.5 331.0 L837.0 330.6 L836.5 330.2 L836.0 329.8 L835.5 329.2 L835.0 328.6 L834.5 327.7 L834.0 319.2Z"/></clipPath><clipPath id="clip5"><path d="M883.0 213.4 L883.5 212.1 L884.0 211.6 L884.5 211.2 L885.0 210.8 L885.5 210.5 L886.0 210.3 L886.5 210.0 L887.0 209.8 L887.5 209.6 L888.0 209.4 L888.5 209.2 L889.0 209.0 L889.5 208.8 L890.0 208.6 L890.5 208.5 L890.9 208.3 L891.4 208.2 L891.9 208.0 L892.4 207.9 L892.9 207.8 L893.4 207.6 L893.9 207.5 L894.4 207.4 L894.9 207.3 L895.4 207.2 L895.9 207.1 L896.4 207.0 L896.9 206.8 L897.4 206.7 L897.9 206.6 L898.4 206.6 L898.9 206.5 L899.4 206.4 L899.9 206.3 L900.4 206.2 L900.9 206.1 L901.4 206.0 L901.9 205.9 L902.4 205.9 L902.9 205.8 L903.4 205.7 L903.9 205.6 L904.4 205.6 L904.9 205.5 L905.4 205.4 L905.9 205.4 L906.4 205.3 L906.8 205.2 L907.3 205.2 L907.8 205.1 L908.3 205.1 L908.8 205.0 L909.3 205.0 L909.8 204.9 L910.3 204.9 L910.8 204.8 L911.3 204.8 L911.8 204.7 L912.3 204.7 L912.8 204.6 L913.3 204.6 L913.8 204.5 L914.3 204.5 L914.8 204.5 L915.3 204.4 L915.8 204.4 L916.3 204.3 L916.8 204.3 L917.3 204.3 L917.8 204.3 L918.3 204.2 L918.8 204.2 L919.3 204.2 L919.8 204.1 L920.3 204.1 L920.8 204.1 L921.3 204.1 L921.8 204.0 L922.3 204.0 L922.7 204.0 L923.2 204.0 L923.7 204.0 L924.2 204.0 L924.7 203.9 L925.2 203.9 L925.7 203.9 L926.2 203.9 L926.7 203.9 L927.2 203.9 L927.7 203.9 L928.2 203.9 L928.7 203.9 L929.2 203.9 L929.7 203.9 L930.2 203.9 L930.7 203.9 L931.2 203.9 L931.7 203.9 L932.2 203.9 L932.7 203.9 L933.2 203.9 L933.7 203.9 L934.2 203.9 L934.7 203.9 L935.2 204.0 L935.7 204.0 L936.2 204.0 L936.7 204.0 L937.2 204.0 L937.7 204.0 L938.2 204.1 L938.6 204.1 L939.1 204.1 L939.6 204.1 L940.1 204.2 L940.6 204.2 L941.1 204.2 L941.6 204.3 L942.1 204.3 L942.6 204.3 L943.1 204.4 L943.6 204.4 L944.1 204.5 L944.6 204.5 L945.1 204.6 L945.6 204.6 L946.1 204.7 L946.6 204.7 L947.1 204.8 L947.6 204.8 L948.1 204.9 L948.6 205.0 L949.1 205.0 L949.6 205.1 L950.1 205.2 L950.6 205.2 L951.1 205.3 L951.6 205.4 L952.1 205.5 L952.6 205.6 L953.1 205.7 L953.6 205.8 L954.1 205.9 L954.5 206.0 L955.0 206.1 L955.5 206.2 L956.0 206.3 L956.5 206.5 L957.0 206.6 L957.5 206.8 L958.0 206.9 L958.5 207.1 L959.0 207.3 L959.5 207.5 L960.0 207.7 L960.5 207.9 L961.0 208.2 L961.5 208.5 L962.0 208.9 L962.5 209.4 L963.0 210.5 L963.5 227.6 L963.5 227.6 L963.0 228.9 L962.5 229.4 L962.0 229.8 L961.5 230.2 L961.0 230.5 L960.5 230.7 L960.0 231.0 L959.5 231.2 L959.0 231.4 L958.5 231.6 L958.0 231.8 L957.5 232.0 L957.0 232.2 L956.5 232.4 L956.0 232.5 L955.5 232.7 L955.0 232.8 L954.5 233.0 L954.1 233.1 L953.6 233.2 L953.1 233.4 L952.6 233.5 L952.1 233.6 L951.6 233.7 L951.1 233.8 L950.6 233.9 L950.1 234.0 L949.6 234.2 L949.1 234.3 L948.6 234.4 L948.1 234.4 L947.6 234.5 L947.1 234.6 L946.6 234.7 L946.1 234.8 L945.6 234.9 L945.1 235.0 L944.6 235.1 L944.1 235.1 L943.6 235.2 L943.1 235.3 L942.6 235.4 L942.1 235.4 L941.6 235.5 L941.1 235.6 L940.6 235.6 L940.1 235.7 L939.6 235.8 L939.1 235.8 L938.6 235.9 L938.2 235.9 L937.7 236.0 L937.2 236.0 L936.7 236.1 L936.2 236.1 L935.7 236.2 L935.2 236.2 L934.7 236.3 L934.2 236.3 L933.7 236.4 L933.2 236.4 L932.7 236.5 L932.2 236.5 L931.7 236.5 L931.2 236.6 L930.7 236.6 L930.2 236.7 L929.7 236.7 L929.2 236.7 L928.7 236.7 L928.2 236.8 L927.7 236.8 L927.2 236.8 L926.7 236.9 L926.2 236.9 L925.7 236.9 L925.2 236.9 L924.7 237.0 L924.2 237.0 L923.7 237.0 L923.2 237.0 L922.7 237.0 L922.3 237.0 L921.8 237.1 L921.3 237.1 L920.8 237.1 L920.3 237.1 L919.8 237.1 L919.3 237.1 L918.8 237.1 L918.3 237.1 L917.8 237.1 L917.3 237.1 L916.8 237.1 L916.3 237.1 L915.8 237.1 L915.3 237.1 L914.8 237.1 L914.3 237.1 L913.8 237.1 L913.3 237.1 L912.8 237.1 L912.3 237.1 L911.8 237.1 L911.3 237.0 L910.8 237.0 L910.3 237.0 L909.8 237.0 L909.3 237.0 L908.8 237.0 L908.3 236.9 L907.8 236.9 L907.3 236.9 L906.8 236.9 L906.4 236.8 L905.9 236.8 L905.4 236.8 L904.9 236.7 L904.4 236.7 L903.9 236.7 L903.4 236.6 L902.9 236.6 L902.4 236.5 L901.9 236.5 L901.4 236.4 L900.9 236.4 L900.4 236.3 L899.9 236.3 L899.4 236.2 L898.9 236.2 L898.4 236.1 L897.9 236.0 L897.4 236.0 L896.9 235.9 L896.4 235.8 L895.9 235.8 L895.4 235.7 L894.9 235.6 L894.4 235.5 L893.9 235.4 L893.4 235.3 L892.9 235.2 L892.4 235.1 L891.9 235.0 L891.4 234.9 L890.9 234.8 L890.5 234.7 L890.0 234.5 L889.5 234.4 L889.0 234.2 L888.5 234.1 L888.0 233.9 L887.5 233.7 L887.0 233.5 L886.5 233.3 L886.0 233.1 L885.5 232.8 L885.0 232.5 L884.5 232.1 L884.0 231.6 L883.5 230.5 L883.0 213.4Z"/></clipPath></defs><g clip-path="url(#vpclip)"><path d="M632.6 545.7L1029.6 518.2L1067.4 566L668.2 593.1Z" fill="url(#gtop)"/><path d="M668.2 593.1L1067.4 566L1068.4 587.6L669.9 616.8Z" fill="#1616d4"/><path d="M632.6 545.7L668.2 593.1L669.9 616.8L632.6 565.2Z" fill="#1a2090"/><path d="M668.2 593.1L669.9 616.8M669.9 616.8L690.4 591.6M690.4 591.6L692.0 615.2M692.0 615.2L712.6 590.1M712.6 590.1L714.2 613.6M714.2 613.6L734.7 588.6M734.7 588.6L736.3 611.9M736.3 611.9L756.9 587.1M756.9 587.1L758.5 610.3M758.5 610.3L779.1 585.6M779.1 585.6L780.6 608.7M780.6 608.7L801.3 584.1M801.3 584.1L802.7 607.1M802.7 607.1L823.4 582.6M823.4 582.6L824.9 605.4M824.9 605.4L845.6 581.1M845.6 581.1L847.0 603.8M847.0 603.8L867.8 579.5M867.8 579.5L869.2 602.2M869.2 602.2L890.0 578.0M890.0 578.0L891.3 600.6M891.3 600.6L912.2 576.5M912.2 576.5L913.4 599.0M913.4 599.0L934.3 575.0M934.3 575.0L935.6 597.3M935.6 597.3L956.5 573.5M956.5 573.5L957.7 595.7M957.7 595.7L978.7 572.0M978.7 572.0L979.8 594.1M979.8 594.1L1000.9 570.5M1000.9 570.5L1002.0 592.5M1002.0 592.5L1023.0 569.0M1023.0 569.0L1024.1 590.8M1024.1 590.8L1045.2 567.5M1045.2 567.5L1046.3 589.2M1046.3 589.2L1067.4 566.0M1067.4 566.0L1068.4 587.6" stroke="#303a50" stroke-width=".9" fill="none"/><path d="M632.6 545.7L632.6 565.2M637.1 551.6L637.3 571.7M641.5 557.6L641.9 578.1M646.0 563.5L646.6 584.5M650.4 569.4L651.2 591.0M654.9 575.3L655.9 597.5M659.3 581.2L660.6 603.9M663.8 587.2L665.2 610.3M668.2 593.1L669.9 616.8" stroke="#4a5a30" stroke-width=".9" fill="none"/><g shape-rendering="crispEdges"><path d="M632.6 545.7L641.6 545.1L645.6 550.3Z" fill="#0c1054"/><path d="M632.6 545.7L645.6 550.3L636.6 551.0Z" fill="#0e1360"/><path d="M636.6 551.0L645.6 550.3L649.5 555.6Z" fill="#0e1360"/><path d="M636.6 551.0L649.5 555.6L640.5 556.2Z" fill="#10176e"/><path d="M640.5 556.2L649.5 555.6L653.5 560.9Z" fill="#0e1360"/><path d="M640.5 556.2L653.5 560.9L644.5 561.5Z" fill="#10176e"/><path d="M644.5 561.5L653.5 560.9L657.5 566.1Z" fill="#080a3c"/><path d="M644.5 561.5L657.5 566.1L648.4 566.8Z" fill="#0a0d48"/><path d="M648.4 566.8L657.5 566.1L661.4 571.4Z" fill="#10176e"/><path d="M648.4 566.8L661.4 571.4L652.4 572.0Z" fill="#0c1054"/><path d="M652.4 572.0L661.4 571.4L665.4 576.7Z" fill="#10176e"/><path d="M652.4 572.0L665.4 576.7L656.3 577.3Z" fill="#080a3c"/><path d="M656.3 577.3L665.4 576.7L669.4 581.9Z" fill="#0a0d48"/><path d="M656.3 577.3L669.4 581.9L660.3 582.6Z" fill="#080a3c"/><path d="M660.3 582.6L669.4 581.9L673.3 587.2Z" fill="#0a0d48"/><path d="M660.3 582.6L673.3 587.2L664.2 587.8Z" fill="#0c1054"/><path d="M664.2 587.8L673.3 587.2L677.3 592.5Z" fill="#080a3c"/><path d="M664.2 587.8L677.3 592.5L668.2 593.1Z" fill="#080a3c"/><path d="M641.6 545.1L650.6 544.5L654.6 549.7Z" fill="#080a3c"/><path d="M641.6 545.1L654.6 549.7L645.6 550.3Z" fill="#10176e"/><path d="M645.6 550.3L654.6 549.7L658.6 555.0Z" fill="#0e1360"/><path d="M645.6 550.3L658.6 555.0L649.5 555.6Z" fill="#080a3c"/><path d="M649.5 555.6L658.6 555.0L662.5 560.3Z" fill="#0e1360"/><path d="M649.5 555.6L662.5 560.3L653.5 560.9Z" fill="#080a3c"/><path d="M653.5 560.9L662.5 560.3L666.5 565.5Z" fill="#0c1054"/><path d="M653.5 560.9L666.5 565.5L657.5 566.1Z" fill="#080a3c"/><path d="M657.5 566.1L666.5 565.5L670.5 570.8Z" fill="#080a3c"/><path d="M657.5 566.1L670.5 570.8L661.4 571.4Z" fill="#10176e"/><path d="M661.4 571.4L670.5 570.8L674.4 576.1Z" fill="#080a3c"/><path d="M661.4 571.4L674.4 576.1L665.4 576.7Z" fill="#080a3c"/><path d="M665.4 576.7L674.4 576.1L678.4 581.3Z" fill="#141c84"/><path d="M665.4 576.7L678.4 581.3L669.4 581.9Z" fill="#10176e"/><path d="M669.4 581.9L678.4 581.3L682.4 586.6Z" fill="#080a3c"/><path d="M669.4 581.9L682.4 586.6L673.3 587.2Z" fill="#10176e"/><path d="M673.3 587.2L682.4 586.6L686.3 591.9Z" fill="#0a0d48"/><path d="M673.3 587.2L686.3 591.9L677.3 592.5Z" fill="#0c1054"/><path d="M650.6 544.5L659.7 543.8L663.6 549.1Z" fill="#080a3c"/><path d="M650.6 544.5L663.6 549.1L654.6 549.7Z" fill="#10176e"/><path d="M654.6 549.7L663.6 549.1L667.6 554.4Z" fill="#0e1360"/><path d="M654.6 549.7L667.6 554.4L658.6 555.0Z" fill="#141c84"/><path d="M658.6 555.0L667.6 554.4L671.6 559.6Z" fill="#10176e"/><path d="M658.6 555.0L671.6 559.6L662.5 560.3Z" fill="#0a0d48"/><path d="M662.5 560.3L671.6 559.6L675.6 564.9Z" fill="#0a0d48"/><path d="M662.5 560.3L675.6 564.9L666.5 565.5Z" fill="#080a3c"/><path d="M666.5 565.5L675.6 564.9L679.5 570.2Z" fill="#080a3c"/><path d="M666.5 565.5L679.5 570.2L670.5 570.8Z" fill="#080a3c"/><path d="M670.5 570.8L679.5 570.2L683.5 575.4Z" fill="#080a3c"/><path d="M670.5 570.8L683.5 575.4L674.4 576.1Z" fill="#0c1054"/><path d="M674.4 576.1L683.5 575.4L687.5 580.7Z" fill="#080a3c"/><path d="M674.4 576.1L687.5 580.7L678.4 581.3Z" fill="#0c1054"/><path d="M678.4 581.3L687.5 580.7L691.4 586.0Z" fill="#0a0d48"/><path d="M678.4 581.3L691.4 586.0L682.4 586.6Z" fill="#080a3c"/><path d="M682.4 586.6L691.4 586.0L695.4 591.3Z" fill="#0e1360"/><path d="M682.4 586.6L695.4 591.3L686.3 591.9Z" fill="#0a0d48"/><path d="M659.7 543.8L668.7 543.2L672.7 548.5Z" fill="#0a0d48"/><path d="M659.7 543.8L672.7 548.5L663.6 549.1Z" fill="#0a0d48"/><path d="M663.6 549.1L672.7 548.5L676.6 553.7Z" fill="#0e1360"/><path d="M663.6 549.1L676.6 553.7L667.6 554.4Z" fill="#080a3c"/><path d="M667.6 554.4L676.6 553.7L680.6 559.0Z" fill="#141c84"/><path d="M667.6 554.4L680.6 559.0L671.6 559.6Z" fill="#080a3c"/><path d="M671.6 559.6L680.6 559.0L684.6 564.3Z" fill="#0e1360"/><path d="M671.6 559.6L684.6 564.3L675.6 564.9Z" fill="#10176e"/><path d="M675.6 564.9L684.6 564.3L688.6 569.6Z" fill="#080a3c"/><path d="M675.6 564.9L688.6 569.6L679.5 570.2Z" fill="#0e1360"/><path d="M679.5 570.2L688.6 569.6L692.6 574.8Z" fill="#0a0d48"/><path d="M679.5 570.2L692.6 574.8L683.5 575.4Z" fill="#0c1054"/><path d="M683.5 575.4L692.6 574.8L696.5 580.1Z" fill="#080a3c"/><path d="M683.5 575.4L696.5 580.1L687.5 580.7Z" fill="#080a3c"/><path d="M687.5 580.7L696.5 580.1L700.5 585.4Z" fill="#080a3c"/><path d="M687.5 580.7L700.5 585.4L691.4 586.0Z" fill="#10176e"/><path d="M691.4 586.0L700.5 585.4L704.5 590.6Z" fill="#080a3c"/><path d="M691.4 586.0L704.5 590.6L695.4 591.3Z" fill="#0e1360"/><path d="M668.7 543.2L677.7 542.6L681.7 547.8Z" fill="#10176e"/><path d="M668.7 543.2L681.7 547.8L672.7 548.5Z" fill="#141c84"/><path d="M672.7 548.5L681.7 547.8L685.7 553.1Z" fill="#0a0d48"/><path d="M672.7 548.5L685.7 553.1L676.6 553.7Z" fill="#0a0d48"/><path d="M676.6 553.7L685.7 553.1L689.7 558.4Z" fill="#0c1054"/><path d="M676.6 553.7L689.7 558.4L680.6 559.0Z" fill="#0e1360"/><path d="M680.6 559.0L689.7 558.4L693.6 563.7Z" fill="#080a3c"/><path d="M680.6 559.0L693.6 563.7L684.6 564.3Z" fill="#0e1360"/><path d="M684.6 564.3L693.6 563.7L697.6 568.9Z" fill="#0e1360"/><path d="M684.6 564.3L697.6 568.9L688.6 569.6Z" fill="#10176e"/><path d="M688.6 569.6L697.6 568.9L701.6 574.2Z" fill="#080a3c"/><path d="M688.6 569.6L701.6 574.2L692.6 574.8Z" fill="#10176e"/><path d="M692.6 574.8L701.6 574.2L705.6 579.5Z" fill="#080a3c"/><path d="M692.6 574.8L705.6 579.5L696.5 580.1Z" fill="#0a0d48"/><path d="M696.5 580.1L705.6 579.5L709.6 584.7Z" fill="#0c1054"/><path d="M696.5 580.1L709.6 584.7L700.5 585.4Z" fill="#10176e"/><path d="M700.5 585.4L709.6 584.7L713.6 590.0Z" fill="#0a0d48"/><path d="M700.5 585.4L713.6 590.0L704.5 590.6Z" fill="#10176e"/><path d="M677.7 542.6L686.7 542.0L690.7 547.2Z" fill="#0c1054"/><path d="M677.7 542.6L690.7 547.2L681.7 547.8Z" fill="#0a0d48"/><path d="M681.7 547.8L690.7 547.2L694.7 552.5Z" fill="#0a0d48"/><path d="M681.7 547.8L694.7 552.5L685.7 553.1Z" fill="#080a3c"/><path d="M685.7 553.1L694.7 552.5L698.7 557.8Z" fill="#080a3c"/><path d="M685.7 553.1L698.7 557.8L689.7 558.4Z" fill="#080a3c"/><path d="M689.7 558.4L698.7 557.8L702.7 563.0Z" fill="#0e1360"/><path d="M689.7 558.4L702.7 563.0L693.6 563.7Z" fill="#141c84"/><path d="M693.6 563.7L702.7 563.0L706.7 568.3Z" fill="#080a3c"/><path d="M693.6 563.7L706.7 568.3L697.6 568.9Z" fill="#080a3c"/><path d="M697.6 568.9L706.7 568.3L710.7 573.6Z" fill="#141c84"/><path d="M697.6 568.9L710.7 573.6L701.6 574.2Z" fill="#0c1054"/><path d="M701.6 574.2L710.7 573.6L714.7 578.9Z" fill="#0a0d48"/><path d="M701.6 574.2L714.7 578.9L705.6 579.5Z" fill="#080a3c"/><path d="M705.6 579.5L714.7 578.9L718.6 584.1Z" fill="#0c1054"/><path d="M705.6 579.5L718.6 584.1L709.6 584.7Z" fill="#0e1360"/><path d="M709.6 584.7L718.6 584.1L722.6 589.4Z" fill="#0a0d48"/><path d="M709.6 584.7L722.6 589.4L713.6 590.0Z" fill="#0a0d48"/><path d="M686.7 542.0L695.8 541.3L699.8 546.6Z" fill="#080a3c"/><path d="M686.7 542.0L699.8 546.6L690.7 547.2Z" fill="#10176e"/><path d="M690.7 547.2L699.8 546.6L703.7 551.9Z" fill="#080a3c"/><path d="M690.7 547.2L703.7 551.9L694.7 552.5Z" fill="#0c1054"/><path d="M694.7 552.5L703.7 551.9L707.7 557.1Z" fill="#10176e"/><path d="M694.7 552.5L707.7 557.1L698.7 557.8Z" fill="#080a3c"/><path d="M698.7 557.8L707.7 557.1L711.7 562.4Z" fill="#0e1360"/><path d="M698.7 557.8L711.7 562.4L702.7 563.0Z" fill="#141c84"/><path d="M702.7 563.0L711.7 562.4L715.7 567.7Z" fill="#0c1054"/><path d="M702.7 563.0L715.7 567.7L706.7 568.3Z" fill="#0e1360"/><path d="M706.7 568.3L715.7 567.7L719.7 573.0Z" fill="#080a3c"/><path d="M706.7 568.3L719.7 573.0L710.7 573.6Z" fill="#0a0d48"/><path d="M710.7 573.6L719.7 573.0L723.7 578.2Z" fill="#080a3c"/><path d="M710.7 573.6L723.7 578.2L714.7 578.9Z" fill="#10176e"/><path d="M714.7 578.9L723.7 578.2L727.7 583.5Z" fill="#080a3c"/><path d="M714.7 578.9L727.7 583.5L718.6 584.1Z" fill="#0a0d48"/><path d="M718.6 584.1L727.7 583.5L731.7 588.8Z" fill="#141c84"/><path d="M718.6 584.1L731.7 588.8L722.6 589.4Z" fill="#10176e"/><path d="M695.8 541.3L704.8 540.7L708.8 546.0Z" fill="#141c84"/><path d="M695.8 541.3L708.8 546.0L699.8 546.6Z" fill="#0a0d48"/><path d="M699.8 546.6L708.8 546.0L712.8 551.2Z" fill="#0c1054"/><path d="M699.8 546.6L712.8 551.2L703.7 551.9Z" fill="#0e1360"/><path d="M703.7 551.9L712.8 551.2L716.8 556.5Z" fill="#0a0d48"/><path d="M703.7 551.9L716.8 556.5L707.7 557.1Z" fill="#0a0d48"/><path d="M707.7 557.1L716.8 556.5L720.8 561.8Z" fill="#0a0d48"/><path d="M707.7 557.1L720.8 561.8L711.7 562.4Z" fill="#080a3c"/><path d="M711.7 562.4L720.8 561.8L724.8 567.1Z" fill="#0a0d48"/><path d="M711.7 562.4L724.8 567.1L715.7 567.7Z" fill="#141c84"/><path d="M715.7 567.7L724.8 567.1L728.8 572.3Z" fill="#141c84"/><path d="M715.7 567.7L728.8 572.3L719.7 573.0Z" fill="#0c1054"/><path d="M719.7 573.0L728.8 572.3L732.8 577.6Z" fill="#0a0d48"/><path d="M719.7 573.0L732.8 577.6L723.7 578.2Z" fill="#0a0d48"/><path d="M723.7 578.2L732.8 577.6L736.8 582.9Z" fill="#080a3c"/><path d="M723.7 578.2L736.8 582.9L727.7 583.5Z" fill="#080a3c"/><path d="M727.7 583.5L736.8 582.9L740.8 588.2Z" fill="#0e1360"/><path d="M727.7 583.5L740.8 588.2L731.7 588.8Z" fill="#10176e"/><path d="M704.8 540.7L713.8 540.1L717.8 545.4Z" fill="#0a0d48"/><path d="M704.8 540.7L717.8 545.4L708.8 546.0Z" fill="#0e1360"/><path d="M708.8 546.0L717.8 545.4L721.8 550.6Z" fill="#0e1360"/><path d="M708.8 546.0L721.8 550.6L712.8 551.2Z" fill="#0e1360"/><path d="M712.8 551.2L721.8 550.6L725.8 555.9Z" fill="#0e1360"/><path d="M712.8 551.2L725.8 555.9L716.8 556.5Z" fill="#0e1360"/><path d="M716.8 556.5L725.8 555.9L729.8 561.2Z" fill="#0a0d48"/><path d="M716.8 556.5L729.8 561.2L720.8 561.8Z" fill="#0e1360"/><path d="M720.8 561.8L729.8 561.2L733.8 566.5Z" fill="#0a0d48"/><path d="M720.8 561.8L733.8 566.5L724.8 567.1Z" fill="#0a0d48"/><path d="M724.8 567.1L733.8 566.5L737.8 571.7Z" fill="#0e1360"/><path d="M724.8 567.1L737.8 571.7L728.8 572.3Z" fill="#0e1360"/><path d="M728.8 572.3L737.8 571.7L741.8 577.0Z" fill="#0a0d48"/><path d="M728.8 572.3L741.8 577.0L732.8 577.6Z" fill="#10176e"/><path d="M732.8 577.6L741.8 577.0L745.8 582.3Z" fill="#0c1054"/><path d="M732.8 577.6L745.8 582.3L736.8 582.9Z" fill="#0c1054"/><path d="M736.8 582.9L745.8 582.3L749.9 587.6Z" fill="#080a3c"/><path d="M736.8 582.9L749.9 587.6L740.8 588.2Z" fill="#0c1054"/><path d="M713.8 540.1L722.8 539.5L726.8 544.7Z" fill="#0a0d48"/><path d="M713.8 540.1L726.8 544.7L717.8 545.4Z" fill="#0e1360"/><path d="M717.8 545.4L726.8 544.7L730.8 550.0Z" fill="#0a0d48"/><path d="M717.8 545.4L730.8 550.0L721.8 550.6Z" fill="#10176e"/><path d="M721.8 550.6L730.8 550.0L734.9 555.3Z" fill="#0c1054"/><path d="M721.8 550.6L734.9 555.3L725.8 555.9Z" fill="#0e1360"/><path d="M725.8 555.9L734.9 555.3L738.9 560.6Z" fill="#0a0d48"/><path d="M725.8 555.9L738.9 560.6L729.8 561.2Z" fill="#0c1054"/><path d="M729.8 561.2L738.9 560.6L742.9 565.8Z" fill="#0e1360"/><path d="M729.8 561.2L742.9 565.8L733.8 566.5Z" fill="#10176e"/><path d="M733.8 566.5L742.9 565.8L746.9 571.1Z" fill="#0a0d48"/><path d="M733.8 566.5L746.9 571.1L737.8 571.7Z" fill="#10176e"/><path d="M737.8 571.7L746.9 571.1L750.9 576.4Z" fill="#10176e"/><path d="M737.8 571.7L750.9 576.4L741.8 577.0Z" fill="#0e1360"/><path d="M741.8 577.0L750.9 576.4L754.9 581.7Z" fill="#141c84"/><path d="M741.8 577.0L754.9 581.7L745.8 582.3Z" fill="#141c84"/><path d="M745.8 582.3L754.9 581.7L758.9 586.9Z" fill="#0c1054"/><path d="M745.8 582.3L758.9 586.9L749.9 587.6Z" fill="#0c1054"/><path d="M722.8 539.5L731.9 538.8L735.9 544.1Z" fill="#080a3c"/><path d="M722.8 539.5L735.9 544.1L726.8 544.7Z" fill="#10176e"/><path d="M726.8 544.7L735.9 544.1L739.9 549.4Z" fill="#141c84"/><path d="M726.8 544.7L739.9 549.4L730.8 550.0Z" fill="#0c1054"/><path d="M730.8 550.0L739.9 549.4L743.9 554.7Z" fill="#0e1360"/><path d="M730.8 550.0L743.9 554.7L734.9 555.3Z" fill="#0e1360"/><path d="M734.9 555.3L743.9 554.7L747.9 559.9Z" fill="#0e1360"/><path d="M734.9 555.3L747.9 559.9L738.9 560.6Z" fill="#080a3c"/><path d="M738.9 560.6L747.9 559.9L751.9 565.2Z" fill="#0e1360"/><path d="M738.9 560.6L751.9 565.2L742.9 565.8Z" fill="#0c1054"/><path d="M742.9 565.8L751.9 565.2L756.0 570.5Z" fill="#0e1360"/><path d="M742.9 565.8L756.0 570.5L746.9 571.1Z" fill="#0a0d48"/><path d="M746.9 571.1L756.0 570.5L760.0 575.8Z" fill="#0c1054"/><path d="M746.9 571.1L760.0 575.8L750.9 576.4Z" fill="#0e1360"/><path d="M750.9 576.4L760.0 575.8L764.0 581.0Z" fill="#0c1054"/><path d="M750.9 576.4L764.0 581.0L754.9 581.7Z" fill="#0e1360"/><path d="M754.9 581.7L764.0 581.0L768.0 586.3Z" fill="#080a3c"/><path d="M754.9 581.7L768.0 586.3L758.9 586.9Z" fill="#080a3c"/><path d="M731.9 538.8L740.9 538.2L744.9 543.5Z" fill="#0a0d48"/><path d="M731.9 538.8L744.9 543.5L735.9 544.1Z" fill="#0e1360"/><path d="M735.9 544.1L744.9 543.5L748.9 548.8Z" fill="#080a3c"/><path d="M735.9 544.1L748.9 548.8L739.9 549.4Z" fill="#0e1360"/><path d="M739.9 549.4L748.9 548.8L752.9 554.0Z" fill="#0c1054"/><path d="M739.9 549.4L752.9 554.0L743.9 554.7Z" fill="#080a3c"/><path d="M743.9 554.7L752.9 554.0L757.0 559.3Z" fill="#0a0d48"/><path d="M743.9 554.7L757.0 559.3L747.9 559.9Z" fill="#080a3c"/><path d="M747.9 559.9L757.0 559.3L761.0 564.6Z" fill="#080a3c"/><path d="M747.9 559.9L761.0 564.6L751.9 565.2Z" fill="#080a3c"/><path d="M751.9 565.2L761.0 564.6L765.0 569.9Z" fill="#0a0d48"/><path d="M751.9 565.2L765.0 569.9L756.0 570.5Z" fill="#080a3c"/><path d="M756.0 570.5L765.0 569.9L769.0 575.2Z" fill="#080a3c"/><path d="M756.0 570.5L769.0 575.2L760.0 575.8Z" fill="#080a3c"/><path d="M760.0 575.8L769.0 575.2L773.1 580.4Z" fill="#0a0d48"/><path d="M760.0 575.8L773.1 580.4L764.0 581.0Z" fill="#0a0d48"/><path d="M764.0 581.0L773.1 580.4L777.1 585.7Z" fill="#0c1054"/><path d="M764.0 581.0L777.1 585.7L768.0 586.3Z" fill="#0c1054"/><path d="M740.9 538.2L749.9 537.6L753.9 542.9Z" fill="#0a0d48"/><path d="M740.9 538.2L753.9 542.9L744.9 543.5Z" fill="#10176e"/><path d="M744.9 543.5L753.9 542.9L758.0 548.1Z" fill="#080a3c"/><path d="M744.9 543.5L758.0 548.1L748.9 548.8Z" fill="#0a0d48"/><path d="M748.9 548.8L758.0 548.1L762.0 553.4Z" fill="#0a0d48"/><path d="M748.9 548.8L762.0 553.4L752.9 554.0Z" fill="#0a0d48"/><path d="M752.9 554.0L762.0 553.4L766.0 558.7Z" fill="#080a3c"/><path d="M752.9 554.0L766.0 558.7L757.0 559.3Z" fill="#10176e"/><path d="M757.0 559.3L766.0 558.7L770.0 564.0Z" fill="#0a0d48"/><path d="M757.0 559.3L770.0 564.0L761.0 564.6Z" fill="#080a3c"/><path d="M761.0 564.6L770.0 564.0L774.1 569.3Z" fill="#0c1054"/><path d="M761.0 564.6L774.1 569.3L765.0 569.9Z" fill="#080a3c"/><path d="M765.0 569.9L774.1 569.3L778.1 574.5Z" fill="#0c1054"/><path d="M765.0 569.9L778.1 574.5L769.0 575.2Z" fill="#0a0d48"/><path d="M769.0 575.2L778.1 574.5L782.1 579.8Z" fill="#0c1054"/><path d="M769.0 575.2L782.1 579.8L773.1 580.4Z" fill="#141c84"/><path d="M773.1 580.4L782.1 579.8L786.1 585.1Z" fill="#10176e"/><path d="M773.1 580.4L786.1 585.1L777.1 585.7Z" fill="#0a0d48"/><path d="M749.9 537.6L758.9 537.0L763.0 542.2Z" fill="#10176e"/><path d="M749.9 537.6L763.0 542.2L753.9 542.9Z" fill="#0e1360"/><path d="M753.9 542.9L763.0 542.2L767.0 547.5Z" fill="#0a0d48"/><path d="M753.9 542.9L767.0 547.5L758.0 548.1Z" fill="#080a3c"/><path d="M758.0 548.1L767.0 547.5L771.0 552.8Z" fill="#0c1054"/><path d="M758.0 548.1L771.0 552.8L762.0 553.4Z" fill="#0c1054"/><path d="M762.0 553.4L771.0 552.8L775.1 558.1Z" fill="#141c84"/><path d="M762.0 553.4L775.1 558.1L766.0 558.7Z" fill="#141c84"/><path d="M766.0 558.7L775.1 558.1L779.1 563.4Z" fill="#0c1054"/><path d="M766.0 558.7L779.1 563.4L770.0 564.0Z" fill="#0a0d48"/><path d="M770.0 564.0L779.1 563.4L783.1 568.6Z" fill="#10176e"/><path d="M770.0 564.0L783.1 568.6L774.1 569.3Z" fill="#080a3c"/><path d="M774.1 569.3L783.1 568.6L787.2 573.9Z" fill="#080a3c"/><path d="M774.1 569.3L787.2 573.9L778.1 574.5Z" fill="#0c1054"/><path d="M778.1 574.5L787.2 573.9L791.2 579.2Z" fill="#0c1054"/><path d="M778.1 574.5L791.2 579.2L782.1 579.8Z" fill="#080a3c"/><path d="M782.1 579.8L791.2 579.2L795.2 584.5Z" fill="#0c1054"/><path d="M782.1 579.8L795.2 584.5L786.1 585.1Z" fill="#10176e"/><path d="M758.9 537.0L767.9 536.3L772.0 541.6Z" fill="#0a0d48"/><path d="M758.9 537.0L772.0 541.6L763.0 542.2Z" fill="#0a0d48"/><path d="M763.0 542.2L772.0 541.6L776.0 546.9Z" fill="#0a0d48"/><path d="M763.0 542.2L776.0 546.9L767.0 547.5Z" fill="#0a0d48"/><path d="M767.0 547.5L776.0 546.9L780.1 552.2Z" fill="#141c84"/><path d="M767.0 547.5L780.1 552.2L771.0 552.8Z" fill="#0a0d48"/><path d="M771.0 552.8L780.1 552.2L784.1 557.5Z" fill="#141c84"/><path d="M771.0 552.8L784.1 557.5L775.1 558.1Z" fill="#10176e"/><path d="M775.1 558.1L784.1 557.5L788.1 562.7Z" fill="#0c1054"/><path d="M775.1 558.1L788.1 562.7L779.1 563.4Z" fill="#0a0d48"/><path d="M779.1 563.4L788.1 562.7L792.2 568.0Z" fill="#141c84"/><path d="M779.1 563.4L792.2 568.0L783.1 568.6Z" fill="#0c1054"/><path d="M783.1 568.6L792.2 568.0L796.2 573.3Z" fill="#0a0d48"/><path d="M783.1 568.6L796.2 573.3L787.2 573.9Z" fill="#0a0d48"/><path d="M787.2 573.9L796.2 573.3L800.3 578.6Z" fill="#141c84"/><path d="M787.2 573.9L800.3 578.6L791.2 579.2Z" fill="#0c1054"/><path d="M791.2 579.2L800.3 578.6L804.3 583.9Z" fill="#0a0d48"/><path d="M791.2 579.2L804.3 583.9L795.2 584.5Z" fill="#0a0d48"/><path d="M767.9 536.3L777.0 535.7L781.0 541.0Z" fill="#080a3c"/><path d="M767.9 536.3L781.0 541.0L772.0 541.6Z" fill="#0e1360"/><path d="M772.0 541.6L781.0 541.0L785.1 546.3Z" fill="#0c1054"/><path d="M772.0 541.6L785.1 546.3L776.0 546.9Z" fill="#0a0d48"/><path d="M776.0 546.9L785.1 546.3L789.1 551.5Z" fill="#10176e"/><path d="M776.0 546.9L789.1 551.5L780.1 552.2Z" fill="#10176e"/><path d="M780.1 552.2L789.1 551.5L793.1 556.8Z" fill="#080a3c"/><path d="M780.1 552.2L793.1 556.8L784.1 557.5Z" fill="#0c1054"/><path d="M784.1 557.5L793.1 556.8L797.2 562.1Z" fill="#0a0d48"/><path d="M784.1 557.5L797.2 562.1L788.1 562.7Z" fill="#141c84"/><path d="M788.1 562.7L797.2 562.1L801.2 567.4Z" fill="#0e1360"/><path d="M788.1 562.7L801.2 567.4L792.2 568.0Z" fill="#0a0d48"/><path d="M792.2 568.0L801.2 567.4L805.3 572.7Z" fill="#0a0d48"/><path d="M792.2 568.0L805.3 572.7L796.2 573.3Z" fill="#080a3c"/><path d="M796.2 573.3L805.3 572.7L809.3 578.0Z" fill="#141c84"/><path d="M796.2 573.3L809.3 578.0L800.3 578.6Z" fill="#0a0d48"/><path d="M800.3 578.6L809.3 578.0L813.4 583.2Z" fill="#0c1054"/><path d="M800.3 578.6L813.4 583.2L804.3 583.9Z" fill="#0a0d48"/><path d="M777.0 535.7L786.0 535.1L790.0 540.4Z" fill="#0e1360"/><path d="M777.0 535.7L790.0 540.4L781.0 541.0Z" fill="#0c1054"/><path d="M781.0 541.0L790.0 540.4L794.1 545.6Z" fill="#0e1360"/><path d="M781.0 541.0L794.1 545.6L785.1 546.3Z" fill="#080a3c"/><path d="M785.1 546.3L794.1 545.6L798.1 550.9Z" fill="#0e1360"/><path d="M785.1 546.3L798.1 550.9L789.1 551.5Z" fill="#0a0d48"/><path d="M789.1 551.5L798.1 550.9L802.2 556.2Z" fill="#0c1054"/><path d="M789.1 551.5L802.2 556.2L793.1 556.8Z" fill="#0a0d48"/><path d="M793.1 556.8L802.2 556.2L806.2 561.5Z" fill="#0a0d48"/><path d="M793.1 556.8L806.2 561.5L797.2 562.1Z" fill="#0c1054"/><path d="M797.2 562.1L806.2 561.5L810.3 566.8Z" fill="#0c1054"/><path d="M797.2 562.1L810.3 566.8L801.2 567.4Z" fill="#0a0d48"/><path d="M801.2 567.4L810.3 566.8L814.3 572.1Z" fill="#0e1360"/><path d="M801.2 567.4L814.3 572.1L805.3 572.7Z" fill="#0c1054"/><path d="M805.3 572.7L814.3 572.1L818.4 577.3Z" fill="#080a3c"/><path d="M805.3 572.7L818.4 577.3L809.3 578.0Z" fill="#0a0d48"/><path d="M809.3 578.0L818.4 577.3L822.4 582.6Z" fill="#0a0d48"/><path d="M809.3 578.0L822.4 582.6L813.4 583.2Z" fill="#10176e"/><path d="M786.0 535.1L795.0 534.5L799.1 539.7Z" fill="#10176e"/><path d="M786.0 535.1L799.1 539.7L790.0 540.4Z" fill="#0c1054"/><path d="M790.0 540.4L799.1 539.7L803.1 545.0Z" fill="#080a3c"/><path d="M790.0 540.4L803.1 545.0L794.1 545.6Z" fill="#10176e"/><path d="M794.1 545.6L803.1 545.0L807.2 550.3Z" fill="#0a0d48"/><path d="M794.1 545.6L807.2 550.3L798.1 550.9Z" fill="#0c1054"/><path d="M798.1 550.9L807.2 550.3L811.2 555.6Z" fill="#0e1360"/><path d="M798.1 550.9L811.2 555.6L802.2 556.2Z" fill="#0e1360"/><path d="M802.2 556.2L811.2 555.6L815.3 560.9Z" fill="#0c1054"/><path d="M802.2 556.2L815.3 560.9L806.2 561.5Z" fill="#10176e"/><path d="M806.2 561.5L815.3 560.9L819.3 566.2Z" fill="#0a0d48"/><path d="M806.2 561.5L819.3 566.2L810.3 566.8Z" fill="#0a0d48"/><path d="M810.3 566.8L819.3 566.2L823.4 571.4Z" fill="#10176e"/><path d="M810.3 566.8L823.4 571.4L814.3 572.1Z" fill="#080a3c"/><path d="M814.3 572.1L823.4 571.4L827.5 576.7Z" fill="#0a0d48"/><path d="M814.3 572.1L827.5 576.7L818.4 577.3Z" fill="#10176e"/><path d="M818.4 577.3L827.5 576.7L831.5 582.0Z" fill="#080a3c"/><path d="M818.4 577.3L831.5 582.0L822.4 582.6Z" fill="#10176e"/><path d="M795.0 534.5L804.0 533.8L808.1 539.1Z" fill="#0e1360"/><path d="M795.0 534.5L808.1 539.1L799.1 539.7Z" fill="#0c1054"/><path d="M799.1 539.7L808.1 539.1L812.2 544.4Z" fill="#0a0d48"/><path d="M799.1 539.7L812.2 544.4L803.1 545.0Z" fill="#10176e"/><path d="M803.1 545.0L812.2 544.4L816.2 549.7Z" fill="#141c84"/><path d="M803.1 545.0L816.2 549.7L807.2 550.3Z" fill="#080a3c"/><path d="M807.2 550.3L816.2 549.7L820.3 555.0Z" fill="#0c1054"/><path d="M807.2 550.3L820.3 555.0L811.2 555.6Z" fill="#0c1054"/><path d="M811.2 555.6L820.3 555.0L824.3 560.3Z" fill="#0c1054"/><path d="M811.2 555.6L824.3 560.3L815.3 560.9Z" fill="#0a0d48"/><path d="M815.3 560.9L824.3 560.3L828.4 565.5Z" fill="#080a3c"/><path d="M815.3 560.9L828.4 565.5L819.3 566.2Z" fill="#0c1054"/><path d="M819.3 566.2L828.4 565.5L832.5 570.8Z" fill="#10176e"/><path d="M819.3 566.2L832.5 570.8L823.4 571.4Z" fill="#080a3c"/><path d="M823.4 571.4L832.5 570.8L836.5 576.1Z" fill="#080a3c"/><path d="M823.4 571.4L836.5 576.1L827.5 576.7Z" fill="#10176e"/><path d="M827.5 576.7L836.5 576.1L840.6 581.4Z" fill="#0e1360"/><path d="M827.5 576.7L840.6 581.4L831.5 582.0Z" fill="#0e1360"/><path d="M804.0 533.8L813.1 533.2L817.1 538.5Z" fill="#080a3c"/><path d="M804.0 533.8L817.1 538.5L808.1 539.1Z" fill="#0e1360"/><path d="M808.1 539.1L817.1 538.5L821.2 543.8Z" fill="#141c84"/><path d="M808.1 539.1L821.2 543.8L812.2 544.4Z" fill="#141c84"/><path d="M812.2 544.4L821.2 543.8L825.3 549.1Z" fill="#0e1360"/><path d="M812.2 544.4L825.3 549.1L816.2 549.7Z" fill="#080a3c"/><path d="M816.2 549.7L825.3 549.1L829.3 554.3Z" fill="#10176e"/><path d="M816.2 549.7L829.3 554.3L820.3 555.0Z" fill="#0a0d48"/><path d="M820.3 555.0L829.3 554.3L833.4 559.6Z" fill="#0e1360"/><path d="M820.3 555.0L833.4 559.6L824.3 560.3Z" fill="#141c84"/><path d="M824.3 560.3L833.4 559.6L837.5 564.9Z" fill="#0e1360"/><path d="M824.3 560.3L837.5 564.9L828.4 565.5Z" fill="#080a3c"/><path d="M828.4 565.5L837.5 564.9L841.5 570.2Z" fill="#0a0d48"/><path d="M828.4 565.5L841.5 570.2L832.5 570.8Z" fill="#141c84"/><path d="M832.5 570.8L841.5 570.2L845.6 575.5Z" fill="#080a3c"/><path d="M832.5 570.8L845.6 575.5L836.5 576.1Z" fill="#0c1054"/><path d="M836.5 576.1L845.6 575.5L849.7 580.8Z" fill="#0a0d48"/><path d="M836.5 576.1L849.7 580.8L840.6 581.4Z" fill="#080a3c"/><path d="M813.1 533.2L822.1 532.6L826.1 537.9Z" fill="#0e1360"/><path d="M813.1 533.2L826.1 537.9L817.1 538.5Z" fill="#080a3c"/><path d="M817.1 538.5L826.1 537.9L830.2 543.2Z" fill="#080a3c"/><path d="M817.1 538.5L830.2 543.2L821.2 543.8Z" fill="#0a0d48"/><path d="M821.2 543.8L830.2 543.2L834.3 548.4Z" fill="#080a3c"/><path d="M821.2 543.8L834.3 548.4L825.3 549.1Z" fill="#080a3c"/><path d="M825.3 549.1L834.3 548.4L838.4 553.7Z" fill="#0c1054"/><path d="M825.3 549.1L838.4 553.7L829.3 554.3Z" fill="#0e1360"/><path d="M829.3 554.3L838.4 553.7L842.4 559.0Z" fill="#10176e"/><path d="M829.3 554.3L842.4 559.0L833.4 559.6Z" fill="#080a3c"/><path d="M833.4 559.6L842.4 559.0L846.5 564.3Z" fill="#0a0d48"/><path d="M833.4 559.6L846.5 564.3L837.5 564.9Z" fill="#0a0d48"/><path d="M837.5 564.9L846.5 564.3L850.6 569.6Z" fill="#0c1054"/><path d="M837.5 564.9L850.6 569.6L841.5 570.2Z" fill="#0c1054"/><path d="M841.5 570.2L850.6 569.6L854.7 574.9Z" fill="#141c84"/><path d="M841.5 570.2L854.7 574.9L845.6 575.5Z" fill="#0a0d48"/><path d="M845.6 575.5L854.7 574.9L858.7 580.2Z" fill="#080a3c"/><path d="M845.6 575.5L858.7 580.2L849.7 580.8Z" fill="#0e1360"/><path d="M822.1 532.6L831.1 532.0L835.2 537.2Z" fill="#0a0d48"/><path d="M822.1 532.6L835.2 537.2L826.1 537.9Z" fill="#0e1360"/><path d="M826.1 537.9L835.2 537.2L839.3 542.5Z" fill="#0c1054"/><path d="M826.1 537.9L839.3 542.5L830.2 543.2Z" fill="#141c84"/><path d="M830.2 543.2L839.3 542.5L843.3 547.8Z" fill="#0c1054"/><path d="M830.2 543.2L843.3 547.8L834.3 548.4Z" fill="#0e1360"/><path d="M834.3 548.4L843.3 547.8L847.4 553.1Z" fill="#0a0d48"/><path d="M834.3 548.4L847.4 553.1L838.4 553.7Z" fill="#0c1054"/><path d="M838.4 553.7L847.4 553.1L851.5 558.4Z" fill="#0a0d48"/><path d="M838.4 553.7L851.5 558.4L842.4 559.0Z" fill="#0e1360"/><path d="M842.4 559.0L851.5 558.4L855.6 563.7Z" fill="#0c1054"/><path d="M842.4 559.0L855.6 563.7L846.5 564.3Z" fill="#080a3c"/><path d="M846.5 564.3L855.6 563.7L859.6 569.0Z" fill="#0a0d48"/><path d="M846.5 564.3L859.6 569.0L850.6 569.6Z" fill="#0a0d48"/><path d="M850.6 569.6L859.6 569.0L863.7 574.3Z" fill="#0e1360"/><path d="M850.6 569.6L863.7 574.3L854.7 574.9Z" fill="#080a3c"/><path d="M854.7 574.9L863.7 574.3L867.8 579.5Z" fill="#0e1360"/><path d="M854.7 574.9L867.8 579.5L858.7 580.2Z" fill="#0e1360"/><path d="M831.1 532.0L840.1 531.3L844.2 536.6Z" fill="#080a3c"/><path d="M831.1 532.0L844.2 536.6L835.2 537.2Z" fill="#0e1360"/><path d="M835.2 537.2L844.2 536.6L848.3 541.9Z" fill="#080a3c"/><path d="M835.2 537.2L848.3 541.9L839.3 542.5Z" fill="#080a3c"/><path d="M839.3 542.5L848.3 541.9L852.4 547.2Z" fill="#0c1054"/><path d="M839.3 542.5L852.4 547.2L843.3 547.8Z" fill="#0a0d48"/><path d="M843.3 547.8L852.4 547.2L856.5 552.5Z" fill="#10176e"/><path d="M843.3 547.8L856.5 552.5L847.4 553.1Z" fill="#0c1054"/><path d="M847.4 553.1L856.5 552.5L860.5 557.8Z" fill="#0a0d48"/><path d="M847.4 553.1L860.5 557.8L851.5 558.4Z" fill="#10176e"/><path d="M851.5 558.4L860.5 557.8L864.6 563.1Z" fill="#080a3c"/><path d="M851.5 558.4L864.6 563.1L855.6 563.7Z" fill="#0e1360"/><path d="M855.6 563.7L864.6 563.1L868.7 568.4Z" fill="#080a3c"/><path d="M855.6 563.7L868.7 568.4L859.6 569.0Z" fill="#080a3c"/><path d="M859.6 569.0L868.7 568.4L872.8 573.6Z" fill="#141c84"/><path d="M859.6 569.0L872.8 573.6L863.7 574.3Z" fill="#0e1360"/><path d="M863.7 574.3L872.8 573.6L876.9 578.9Z" fill="#0a0d48"/><path d="M863.7 574.3L876.9 578.9L867.8 579.5Z" fill="#080a3c"/><path d="M840.1 531.3L849.1 530.7L853.2 536.0Z" fill="#141c84"/><path d="M840.1 531.3L853.2 536.0L844.2 536.6Z" fill="#0e1360"/><path d="M844.2 536.6L853.2 536.0L857.3 541.3Z" fill="#10176e"/><path d="M844.2 536.6L857.3 541.3L848.3 541.9Z" fill="#0a0d48"/><path d="M848.3 541.9L857.3 541.3L861.4 546.6Z" fill="#0e1360"/><path d="M848.3 541.9L861.4 546.6L852.4 547.2Z" fill="#0a0d48"/><path d="M852.4 547.2L861.4 546.6L865.5 551.9Z" fill="#0a0d48"/><path d="M852.4 547.2L865.5 551.9L856.5 552.5Z" fill="#0a0d48"/><path d="M856.5 552.5L865.5 551.9L869.6 557.2Z" fill="#0e1360"/><path d="M856.5 552.5L869.6 557.2L860.5 557.8Z" fill="#0a0d48"/><path d="M860.5 557.8L869.6 557.2L873.7 562.4Z" fill="#0a0d48"/><path d="M860.5 557.8L873.7 562.4L864.6 563.1Z" fill="#080a3c"/><path d="M864.6 563.1L873.7 562.4L877.8 567.7Z" fill="#10176e"/><path d="M864.6 563.1L877.8 567.7L868.7 568.4Z" fill="#0e1360"/><path d="M868.7 568.4L877.8 567.7L881.9 573.0Z" fill="#10176e"/><path d="M868.7 568.4L881.9 573.0L872.8 573.6Z" fill="#0a0d48"/><path d="M872.8 573.6L881.9 573.0L885.9 578.3Z" fill="#10176e"/><path d="M872.8 573.6L885.9 578.3L876.9 578.9Z" fill="#0c1054"/><path d="M849.1 530.7L858.2 530.1L862.3 535.4Z" fill="#0e1360"/><path d="M849.1 530.7L862.3 535.4L853.2 536.0Z" fill="#0c1054"/><path d="M853.2 536.0L862.3 535.4L866.4 540.7Z" fill="#0e1360"/><path d="M853.2 536.0L866.4 540.7L857.3 541.3Z" fill="#0a0d48"/><path d="M857.3 541.3L866.4 540.7L870.5 546.0Z" fill="#080a3c"/><path d="M857.3 541.3L870.5 546.0L861.4 546.6Z" fill="#080a3c"/><path d="M861.4 546.6L870.5 546.0L874.5 551.2Z" fill="#0a0d48"/><path d="M861.4 546.6L874.5 551.2L865.5 551.9Z" fill="#080a3c"/><path d="M865.5 551.9L874.5 551.2L878.6 556.5Z" fill="#10176e"/><path d="M865.5 551.9L878.6 556.5L869.6 557.2Z" fill="#0c1054"/><path d="M869.6 557.2L878.6 556.5L882.7 561.8Z" fill="#0e1360"/><path d="M869.6 557.2L882.7 561.8L873.7 562.4Z" fill="#080a3c"/><path d="M873.7 562.4L882.7 561.8L886.8 567.1Z" fill="#0c1054"/><path d="M873.7 562.4L886.8 567.1L877.8 567.7Z" fill="#10176e"/><path d="M877.8 567.7L886.8 567.1L890.9 572.4Z" fill="#0e1360"/><path d="M877.8 567.7L890.9 572.4L881.9 573.0Z" fill="#0a0d48"/><path d="M881.9 573.0L890.9 572.4L895.0 577.7Z" fill="#0c1054"/><path d="M881.9 573.0L895.0 577.7L885.9 578.3Z" fill="#080a3c"/><path d="M858.2 530.1L867.2 529.5L871.3 534.7Z" fill="#0a0d48"/><path d="M858.2 530.1L871.3 534.7L862.3 535.4Z" fill="#0a0d48"/><path d="M862.3 535.4L871.3 534.7L875.4 540.0Z" fill="#0a0d48"/><path d="M862.3 535.4L875.4 540.0L866.4 540.7Z" fill="#0a0d48"/><path d="M866.4 540.7L875.4 540.0L879.5 545.3Z" fill="#10176e"/><path d="M866.4 540.7L879.5 545.3L870.5 546.0Z" fill="#0a0d48"/><path d="M870.5 546.0L879.5 545.3L883.6 550.6Z" fill="#0a0d48"/><path d="M870.5 546.0L883.6 550.6L874.5 551.2Z" fill="#0a0d48"/><path d="M874.5 551.2L883.6 550.6L887.7 555.9Z" fill="#0a0d48"/><path d="M874.5 551.2L887.7 555.9L878.6 556.5Z" fill="#0a0d48"/><path d="M878.6 556.5L887.7 555.9L891.8 561.2Z" fill="#0a0d48"/><path d="M878.6 556.5L891.8 561.2L882.7 561.8Z" fill="#0c1054"/><path d="M882.7 561.8L891.8 561.2L895.9 566.5Z" fill="#080a3c"/><path d="M882.7 561.8L895.9 566.5L886.8 567.1Z" fill="#141c84"/><path d="M886.8 567.1L895.9 566.5L900.0 571.8Z" fill="#0a0d48"/><path d="M886.8 567.1L900.0 571.8L890.9 572.4Z" fill="#141c84"/><path d="M890.9 572.4L900.0 571.8L904.1 577.1Z" fill="#0e1360"/><path d="M890.9 572.4L904.1 577.1L895.0 577.7Z" fill="#0e1360"/><path d="M867.2 529.5L876.2 528.8L880.3 534.1Z" fill="#0c1054"/><path d="M867.2 529.5L880.3 534.1L871.3 534.7Z" fill="#141c84"/><path d="M871.3 534.7L880.3 534.1L884.4 539.4Z" fill="#0a0d48"/><path d="M871.3 534.7L884.4 539.4L875.4 540.0Z" fill="#0e1360"/><path d="M875.4 540.0L884.4 539.4L888.5 544.7Z" fill="#0a0d48"/><path d="M875.4 540.0L888.5 544.7L879.5 545.3Z" fill="#0e1360"/><path d="M879.5 545.3L888.5 544.7L892.6 550.0Z" fill="#0e1360"/><path d="M879.5 545.3L892.6 550.0L883.6 550.6Z" fill="#0a0d48"/><path d="M883.6 550.6L892.6 550.0L896.7 555.3Z" fill="#0a0d48"/><path d="M883.6 550.6L896.7 555.3L887.7 555.9Z" fill="#080a3c"/><path d="M887.7 555.9L896.7 555.3L900.8 560.6Z" fill="#0a0d48"/><path d="M887.7 555.9L900.8 560.6L891.8 561.2Z" fill="#080a3c"/><path d="M891.8 561.2L900.8 560.6L905.0 565.9Z" fill="#0a0d48"/><path d="M891.8 561.2L905.0 565.9L895.9 566.5Z" fill="#141c84"/><path d="M895.9 566.5L905.0 565.9L909.1 571.2Z" fill="#0a0d48"/><path d="M895.9 566.5L909.1 571.2L900.0 571.8Z" fill="#0a0d48"/><path d="M900.0 571.8L909.1 571.2L913.2 576.5Z" fill="#0c1054"/><path d="M900.0 571.8L913.2 576.5L904.1 577.1Z" fill="#0a0d48"/><path d="M876.2 528.8L885.2 528.2L889.3 533.5Z" fill="#10176e"/><path d="M876.2 528.8L889.3 533.5L880.3 534.1Z" fill="#0e1360"/><path d="M880.3 534.1L889.3 533.5L893.5 538.8Z" fill="#0a0d48"/><path d="M880.3 534.1L893.5 538.8L884.4 539.4Z" fill="#0a0d48"/><path d="M884.4 539.4L893.5 538.8L897.6 544.1Z" fill="#0e1360"/><path d="M884.4 539.4L897.6 544.1L888.5 544.7Z" fill="#141c84"/><path d="M888.5 544.7L897.6 544.1L901.7 549.4Z" fill="#0e1360"/><path d="M888.5 544.7L901.7 549.4L892.6 550.0Z" fill="#0c1054"/><path d="M892.6 550.0L901.7 549.4L905.8 554.7Z" fill="#141c84"/><path d="M892.6 550.0L905.8 554.7L896.7 555.3Z" fill="#080a3c"/><path d="M896.7 555.3L905.8 554.7L909.9 560.0Z" fill="#080a3c"/><path d="M896.7 555.3L909.9 560.0L900.8 560.6Z" fill="#10176e"/><path d="M900.8 560.6L909.9 560.0L914.0 565.3Z" fill="#0a0d48"/><path d="M900.8 560.6L914.0 565.3L905.0 565.9Z" fill="#080a3c"/><path d="M905.0 565.9L914.0 565.3L918.1 570.6Z" fill="#0c1054"/><path d="M905.0 565.9L918.1 570.6L909.1 571.2Z" fill="#141c84"/><path d="M909.1 571.2L918.1 570.6L922.2 575.9Z" fill="#0c1054"/><path d="M909.1 571.2L922.2 575.9L913.2 576.5Z" fill="#0a0d48"/><path d="M885.2 528.2L894.3 527.6L898.4 532.9Z" fill="#0a0d48"/><path d="M885.2 528.2L898.4 532.9L889.3 533.5Z" fill="#0a0d48"/><path d="M889.3 533.5L898.4 532.9L902.5 538.2Z" fill="#141c84"/><path d="M889.3 533.5L902.5 538.2L893.5 538.8Z" fill="#0c1054"/><path d="M893.5 538.8L902.5 538.2L906.6 543.5Z" fill="#141c84"/><path d="M893.5 538.8L906.6 543.5L897.6 544.1Z" fill="#080a3c"/><path d="M897.6 544.1L906.6 543.5L910.7 548.8Z" fill="#0a0d48"/><path d="M897.6 544.1L910.7 548.8L901.7 549.4Z" fill="#080a3c"/><path d="M901.7 549.4L910.7 548.8L914.8 554.1Z" fill="#0a0d48"/><path d="M901.7 549.4L914.8 554.1L905.8 554.7Z" fill="#080a3c"/><path d="M905.8 554.7L914.8 554.1L919.0 559.4Z" fill="#0a0d48"/><path d="M905.8 554.7L919.0 559.4L909.9 560.0Z" fill="#0c1054"/><path d="M909.9 560.0L919.0 559.4L923.1 564.6Z" fill="#0a0d48"/><path d="M909.9 560.0L923.1 564.6L914.0 565.3Z" fill="#080a3c"/><path d="M914.0 565.3L923.1 564.6L927.2 569.9Z" fill="#080a3c"/><path d="M914.0 565.3L927.2 569.9L918.1 570.6Z" fill="#141c84"/><path d="M918.1 570.6L927.2 569.9L931.3 575.2Z" fill="#0a0d48"/><path d="M918.1 570.6L931.3 575.2L922.2 575.9Z" fill="#0c1054"/><path d="M894.3 527.6L903.3 527.0L907.4 532.2Z" fill="#0c1054"/><path d="M894.3 527.6L907.4 532.2L898.4 532.9Z" fill="#0c1054"/><path d="M898.4 532.9L907.4 532.2L911.5 537.5Z" fill="#0a0d48"/><path d="M898.4 532.9L911.5 537.5L902.5 538.2Z" fill="#0a0d48"/><path d="M902.5 538.2L911.5 537.5L915.6 542.8Z" fill="#0a0d48"/><path d="M902.5 538.2L915.6 542.8L906.6 543.5Z" fill="#0c1054"/><path d="M906.6 543.5L915.6 542.8L919.8 548.1Z" fill="#141c84"/><path d="M906.6 543.5L919.8 548.1L910.7 548.8Z" fill="#0e1360"/><path d="M910.7 548.8L919.8 548.1L923.9 553.4Z" fill="#10176e"/><path d="M910.7 548.8L923.9 553.4L914.8 554.1Z" fill="#0a0d48"/><path d="M914.8 554.1L923.9 553.4L928.0 558.7Z" fill="#080a3c"/><path d="M914.8 554.1L928.0 558.7L919.0 559.4Z" fill="#0c1054"/><path d="M919.0 559.4L928.0 558.7L932.1 564.0Z" fill="#0c1054"/><path d="M919.0 559.4L932.1 564.0L923.1 564.6Z" fill="#0c1054"/><path d="M923.1 564.6L932.1 564.0L936.3 569.3Z" fill="#0a0d48"/><path d="M923.1 564.6L936.3 569.3L927.2 569.9Z" fill="#0e1360"/><path d="M927.2 569.9L936.3 569.3L940.4 574.6Z" fill="#0e1360"/><path d="M927.2 569.9L940.4 574.6L931.3 575.2Z" fill="#141c84"/><path d="M903.3 527.0L912.3 526.3L916.4 531.6Z" fill="#0a0d48"/><path d="M903.3 527.0L916.4 531.6L907.4 532.2Z" fill="#0c1054"/><path d="M907.4 532.2L916.4 531.6L920.6 536.9Z" fill="#10176e"/><path d="M907.4 532.2L920.6 536.9L911.5 537.5Z" fill="#0a0d48"/><path d="M911.5 537.5L920.6 536.9L924.7 542.2Z" fill="#0a0d48"/><path d="M911.5 537.5L924.7 542.2L915.6 542.8Z" fill="#0a0d48"/><path d="M915.6 542.8L924.7 542.2L928.8 547.5Z" fill="#0a0d48"/><path d="M915.6 542.8L928.8 547.5L919.8 548.1Z" fill="#10176e"/><path d="M919.8 548.1L928.8 547.5L932.9 552.8Z" fill="#10176e"/><path d="M919.8 548.1L932.9 552.8L923.9 553.4Z" fill="#0a0d48"/><path d="M923.9 553.4L932.9 552.8L937.1 558.1Z" fill="#0a0d48"/><path d="M923.9 553.4L937.1 558.1L928.0 558.7Z" fill="#080a3c"/><path d="M928.0 558.7L937.1 558.1L941.2 563.4Z" fill="#0a0d48"/><path d="M928.0 558.7L941.2 563.4L932.1 564.0Z" fill="#080a3c"/><path d="M932.1 564.0L941.2 563.4L945.3 568.7Z" fill="#0c1054"/><path d="M932.1 564.0L945.3 568.7L936.3 569.3Z" fill="#0c1054"/><path d="M936.3 569.3L945.3 568.7L949.5 574.0Z" fill="#0a0d48"/><path d="M936.3 569.3L949.5 574.0L940.4 574.6Z" fill="#080a3c"/><path d="M912.3 526.3L921.3 525.7L925.5 531.0Z" fill="#0e1360"/><path d="M912.3 526.3L925.5 531.0L916.4 531.6Z" fill="#0a0d48"/><path d="M916.4 531.6L925.5 531.0L929.6 536.3Z" fill="#0a0d48"/><path d="M916.4 531.6L929.6 536.3L920.6 536.9Z" fill="#0a0d48"/><path d="M920.6 536.9L929.6 536.3L933.7 541.6Z" fill="#0c1054"/><path d="M920.6 536.9L933.7 541.6L924.7 542.2Z" fill="#0a0d48"/><path d="M924.7 542.2L933.7 541.6L937.9 546.9Z" fill="#0c1054"/><path d="M924.7 542.2L937.9 546.9L928.8 547.5Z" fill="#0a0d48"/><path d="M928.8 547.5L937.9 546.9L942.0 552.2Z" fill="#10176e"/><path d="M928.8 547.5L942.0 552.2L932.9 552.8Z" fill="#0c1054"/><path d="M932.9 552.8L942.0 552.2L946.1 557.5Z" fill="#141c84"/><path d="M932.9 552.8L946.1 557.5L937.1 558.1Z" fill="#0e1360"/><path d="M937.1 558.1L946.1 557.5L950.3 562.8Z" fill="#10176e"/><path d="M937.1 558.1L950.3 562.8L941.2 563.4Z" fill="#0c1054"/><path d="M941.2 563.4L950.3 562.8L954.4 568.1Z" fill="#0c1054"/><path d="M941.2 563.4L954.4 568.1L945.3 568.7Z" fill="#10176e"/><path d="M945.3 568.7L954.4 568.1L958.5 573.4Z" fill="#0e1360"/><path d="M945.3 568.7L958.5 573.4L949.5 574.0Z" fill="#141c84"/><path d="M921.3 525.7L930.3 525.1L934.5 530.4Z" fill="#10176e"/><path d="M921.3 525.7L934.5 530.4L925.5 531.0Z" fill="#0e1360"/><path d="M925.5 531.0L934.5 530.4L938.6 535.7Z" fill="#0a0d48"/><path d="M925.5 531.0L938.6 535.7L929.6 536.3Z" fill="#10176e"/><path d="M929.6 536.3L938.6 535.7L942.8 541.0Z" fill="#0c1054"/><path d="M929.6 536.3L942.8 541.0L933.7 541.6Z" fill="#0a0d48"/><path d="M933.7 541.6L942.8 541.0L946.9 546.3Z" fill="#0a0d48"/><path d="M933.7 541.6L946.9 546.3L937.9 546.9Z" fill="#0a0d48"/><path d="M937.9 546.9L946.9 546.3L951.0 551.6Z" fill="#0a0d48"/><path d="M937.9 546.9L951.0 551.6L942.0 552.2Z" fill="#0e1360"/><path d="M942.0 552.2L951.0 551.6L955.2 556.9Z" fill="#0a0d48"/><path d="M942.0 552.2L955.2 556.9L946.1 557.5Z" fill="#080a3c"/><path d="M946.1 557.5L955.2 556.9L959.3 562.2Z" fill="#10176e"/><path d="M946.1 557.5L959.3 562.2L950.3 562.8Z" fill="#0c1054"/><path d="M950.3 562.8L959.3 562.2L963.5 567.5Z" fill="#080a3c"/><path d="M950.3 562.8L963.5 567.5L954.4 568.1Z" fill="#080a3c"/><path d="M954.4 568.1L963.5 567.5L967.6 572.8Z" fill="#080a3c"/><path d="M954.4 568.1L967.6 572.8L958.5 573.4Z" fill="#0a0d48"/><path d="M930.3 525.1L939.4 524.5L943.5 529.8Z" fill="#141c84"/><path d="M930.3 525.1L943.5 529.8L934.5 530.4Z" fill="#141c84"/><path d="M934.5 530.4L943.5 529.8L947.7 535.1Z" fill="#0e1360"/><path d="M934.5 530.4L947.7 535.1L938.6 535.7Z" fill="#0a0d48"/><path d="M938.6 535.7L947.7 535.1L951.8 540.4Z" fill="#0c1054"/><path d="M938.6 535.7L951.8 540.4L942.8 541.0Z" fill="#0c1054"/><path d="M942.8 541.0L951.8 540.4L956.0 545.7Z" fill="#0a0d48"/><path d="M942.8 541.0L956.0 545.7L946.9 546.3Z" fill="#080a3c"/><path d="M946.9 546.3L956.0 545.7L960.1 551.0Z" fill="#0e1360"/><path d="M946.9 546.3L960.1 551.0L951.0 551.6Z" fill="#10176e"/><path d="M951.0 551.6L960.1 551.0L964.2 556.3Z" fill="#0e1360"/><path d="M951.0 551.6L964.2 556.3L955.2 556.9Z" fill="#0a0d48"/><path d="M955.2 556.9L964.2 556.3L968.4 561.6Z" fill="#0c1054"/><path d="M955.2 556.9L968.4 561.6L959.3 562.2Z" fill="#0a0d48"/><path d="M959.3 562.2L968.4 561.6L972.5 566.9Z" fill="#0e1360"/><path d="M959.3 562.2L972.5 566.9L963.5 567.5Z" fill="#0c1054"/><path d="M963.5 567.5L972.5 566.9L976.7 572.2Z" fill="#141c84"/><path d="M963.5 567.5L976.7 572.2L967.6 572.8Z" fill="#10176e"/><path d="M939.4 524.5L948.4 523.8L952.5 529.1Z" fill="#0a0d48"/><path d="M939.4 524.5L952.5 529.1L943.5 529.8Z" fill="#0a0d48"/><path d="M943.5 529.8L952.5 529.1L956.7 534.4Z" fill="#141c84"/><path d="M943.5 529.8L956.7 534.4L947.7 535.1Z" fill="#0c1054"/><path d="M947.7 535.1L956.7 534.4L960.8 539.7Z" fill="#0c1054"/><path d="M947.7 535.1L960.8 539.7L951.8 540.4Z" fill="#0c1054"/><path d="M951.8 540.4L960.8 539.7L965.0 545.0Z" fill="#10176e"/><path d="M951.8 540.4L965.0 545.0L956.0 545.7Z" fill="#141c84"/><path d="M956.0 545.7L965.0 545.0L969.1 550.3Z" fill="#0c1054"/><path d="M956.0 545.7L969.1 550.3L960.1 551.0Z" fill="#141c84"/><path d="M960.1 551.0L969.1 550.3L973.3 555.6Z" fill="#0e1360"/><path d="M960.1 551.0L973.3 555.6L964.2 556.3Z" fill="#0a0d48"/><path d="M964.2 556.3L973.3 555.6L977.4 560.9Z" fill="#10176e"/><path d="M964.2 556.3L977.4 560.9L968.4 561.6Z" fill="#0c1054"/><path d="M968.4 561.6L977.4 560.9L981.6 566.2Z" fill="#080a3c"/><path d="M968.4 561.6L981.6 566.2L972.5 566.9Z" fill="#141c84"/><path d="M972.5 566.9L981.6 566.2L985.7 571.5Z" fill="#080a3c"/><path d="M972.5 566.9L985.7 571.5L976.7 572.2Z" fill="#0c1054"/><path d="M948.4 523.8L957.4 523.2L961.6 528.5Z" fill="#0c1054"/><path d="M948.4 523.8L961.6 528.5L952.5 529.1Z" fill="#141c84"/><path d="M952.5 529.1L961.6 528.5L965.7 533.8Z" fill="#0c1054"/><path d="M952.5 529.1L965.7 533.8L956.7 534.4Z" fill="#0a0d48"/><path d="M956.7 534.4L965.7 533.8L969.9 539.1Z" fill="#0a0d48"/><path d="M956.7 534.4L969.9 539.1L960.8 539.7Z" fill="#0a0d48"/><path d="M960.8 539.7L969.9 539.1L974.0 544.4Z" fill="#0e1360"/><path d="M960.8 539.7L974.0 544.4L965.0 545.0Z" fill="#0c1054"/><path d="M965.0 545.0L974.0 544.4L978.2 549.7Z" fill="#10176e"/><path d="M965.0 545.0L978.2 549.7L969.1 550.3Z" fill="#0a0d48"/><path d="M969.1 550.3L978.2 549.7L982.4 555.0Z" fill="#0a0d48"/><path d="M969.1 550.3L982.4 555.0L973.3 555.6Z" fill="#0a0d48"/><path d="M973.3 555.6L982.4 555.0L986.5 560.3Z" fill="#141c84"/><path d="M973.3 555.6L986.5 560.3L977.4 560.9Z" fill="#10176e"/><path d="M977.4 560.9L986.5 560.3L990.7 565.6Z" fill="#10176e"/><path d="M977.4 560.9L990.7 565.6L981.6 566.2Z" fill="#0e1360"/><path d="M981.6 566.2L990.7 565.6L994.8 570.9Z" fill="#0c1054"/><path d="M981.6 566.2L994.8 570.9L985.7 571.5Z" fill="#0a0d48"/><path d="M957.4 523.2L966.4 522.6L970.6 527.9Z" fill="#10176e"/><path d="M957.4 523.2L970.6 527.9L961.6 528.5Z" fill="#0c1054"/><path d="M961.6 528.5L970.6 527.9L974.8 533.2Z" fill="#0a0d48"/><path d="M961.6 528.5L974.8 533.2L965.7 533.8Z" fill="#0a0d48"/><path d="M965.7 533.8L974.8 533.2L978.9 538.5Z" fill="#0a0d48"/><path d="M965.7 533.8L978.9 538.5L969.9 539.1Z" fill="#10176e"/><path d="M969.9 539.1L978.9 538.5L983.1 543.8Z" fill="#141c84"/><path d="M969.9 539.1L983.1 543.8L974.0 544.4Z" fill="#0a0d48"/><path d="M974.0 544.4L983.1 543.8L987.2 549.1Z" fill="#10176e"/><path d="M974.0 544.4L987.2 549.1L978.2 549.7Z" fill="#0a0d48"/><path d="M978.2 549.7L987.2 549.1L991.4 554.4Z" fill="#0e1360"/><path d="M978.2 549.7L991.4 554.4L982.4 555.0Z" fill="#141c84"/><path d="M982.4 555.0L991.4 554.4L995.6 559.7Z" fill="#0e1360"/><path d="M982.4 555.0L995.6 559.7L986.5 560.3Z" fill="#10176e"/><path d="M986.5 560.3L995.6 559.7L999.7 565.0Z" fill="#0a0d48"/><path d="M986.5 560.3L999.7 565.0L990.7 565.6Z" fill="#080a3c"/><path d="M990.7 565.6L999.7 565.0L1003.9 570.3Z" fill="#0c1054"/><path d="M990.7 565.6L1003.9 570.3L994.8 570.9Z" fill="#0e1360"/><path d="M966.4 522.6L975.5 522.0L979.6 527.3Z" fill="#0a0d48"/><path d="M966.4 522.6L979.6 527.3L970.6 527.9Z" fill="#0c1054"/><path d="M970.6 527.9L979.6 527.3L983.8 532.6Z" fill="#0a0d48"/><path d="M970.6 527.9L983.8 532.6L974.8 533.2Z" fill="#0a0d48"/><path d="M974.8 533.2L983.8 532.6L988.0 537.9Z" fill="#0a0d48"/><path d="M974.8 533.2L988.0 537.9L978.9 538.5Z" fill="#0c1054"/><path d="M978.9 538.5L988.0 537.9L992.1 543.2Z" fill="#0c1054"/><path d="M978.9 538.5L992.1 543.2L983.1 543.8Z" fill="#0e1360"/><path d="M983.1 543.8L992.1 543.2L996.3 548.5Z" fill="#0c1054"/><path d="M983.1 543.8L996.3 548.5L987.2 549.1Z" fill="#141c84"/><path d="M987.2 549.1L996.3 548.5L1000.5 553.8Z" fill="#10176e"/><path d="M987.2 549.1L1000.5 553.8L991.4 554.4Z" fill="#141c84"/><path d="M991.4 554.4L1000.5 553.8L1004.6 559.1Z" fill="#0e1360"/><path d="M991.4 554.4L1004.6 559.1L995.6 559.7Z" fill="#0e1360"/><path d="M995.6 559.7L1004.6 559.1L1008.8 564.4Z" fill="#0c1054"/><path d="M995.6 559.7L1008.8 564.4L999.7 565.0Z" fill="#10176e"/><path d="M999.7 565.0L1008.8 564.4L1013.0 569.7Z" fill="#0a0d48"/><path d="M999.7 565.0L1013.0 569.7L1003.9 570.3Z" fill="#0e1360"/><path d="M975.5 522.0L984.5 521.3L988.7 526.6Z" fill="#0e1360"/><path d="M975.5 522.0L988.7 526.6L979.6 527.3Z" fill="#0e1360"/><path d="M979.6 527.3L988.7 526.6L992.8 531.9Z" fill="#0a0d48"/><path d="M979.6 527.3L992.8 531.9L983.8 532.6Z" fill="#0a0d48"/><path d="M983.8 532.6L992.8 531.9L997.0 537.2Z" fill="#0a0d48"/><path d="M983.8 532.6L997.0 537.2L988.0 537.9Z" fill="#0c1054"/><path d="M988.0 537.9L997.0 537.2L1001.2 542.5Z" fill="#0e1360"/><path d="M988.0 537.9L1001.2 542.5L992.1 543.2Z" fill="#10176e"/><path d="M992.1 543.2L1001.2 542.5L1005.3 547.9Z" fill="#10176e"/><path d="M992.1 543.2L1005.3 547.9L996.3 548.5Z" fill="#0a0d48"/><path d="M996.3 548.5L1005.3 547.9L1009.5 553.2Z" fill="#141c84"/><path d="M996.3 548.5L1009.5 553.2L1000.5 553.8Z" fill="#0a0d48"/><path d="M1000.5 553.8L1009.5 553.2L1013.7 558.5Z" fill="#0e1360"/><path d="M1000.5 553.8L1013.7 558.5L1004.6 559.1Z" fill="#0a0d48"/><path d="M1004.6 559.1L1013.7 558.5L1017.9 563.8Z" fill="#10176e"/><path d="M1004.6 559.1L1017.9 563.8L1008.8 564.4Z" fill="#0e1360"/><path d="M1008.8 564.4L1017.9 563.8L1022.0 569.1Z" fill="#141c84"/><path d="M1008.8 564.4L1022.0 569.1L1013.0 569.7Z" fill="#141c84"/><path d="M984.5 521.3L993.5 520.7L997.7 526.0Z" fill="#10176e"/><path d="M984.5 521.3L997.7 526.0L988.7 526.6Z" fill="#141c84"/><path d="M988.7 526.6L997.7 526.0L1001.9 531.3Z" fill="#10176e"/><path d="M988.7 526.6L1001.9 531.3L992.8 531.9Z" fill="#0e1360"/><path d="M992.8 531.9L1001.9 531.3L1006.0 536.6Z" fill="#0a0d48"/><path d="M992.8 531.9L1006.0 536.6L997.0 537.2Z" fill="#0c1054"/><path d="M997.0 537.2L1006.0 536.6L1010.2 541.9Z" fill="#141c84"/><path d="M997.0 537.2L1010.2 541.9L1001.2 542.5Z" fill="#0a0d48"/><path d="M1001.2 542.5L1010.2 541.9L1014.4 547.2Z" fill="#141c84"/><path d="M1001.2 542.5L1014.4 547.2L1005.3 547.9Z" fill="#0e1360"/><path d="M1005.3 547.9L1014.4 547.2L1018.6 552.5Z" fill="#0c1054"/><path d="M1005.3 547.9L1018.6 552.5L1009.5 553.2Z" fill="#0a0d48"/><path d="M1009.5 553.2L1018.6 552.5L1022.8 557.8Z" fill="#0c1054"/><path d="M1009.5 553.2L1022.8 557.8L1013.7 558.5Z" fill="#0a0d48"/><path d="M1013.7 558.5L1022.8 557.8L1026.9 563.2Z" fill="#0e1360"/><path d="M1013.7 558.5L1026.9 563.2L1017.9 563.8Z" fill="#141c84"/><path d="M1017.9 563.8L1026.9 563.2L1031.1 568.5Z" fill="#141c84"/><path d="M1017.9 563.8L1031.1 568.5L1022.0 569.1Z" fill="#0e1360"/><path d="M993.5 520.7L1002.5 520.1L1006.7 525.4Z" fill="#0c1054"/><path d="M993.5 520.7L1006.7 525.4L997.7 526.0Z" fill="#0a0d48"/><path d="M997.7 526.0L1006.7 525.4L1010.9 530.7Z" fill="#10176e"/><path d="M997.7 526.0L1010.9 530.7L1001.9 531.3Z" fill="#0e1360"/><path d="M1001.9 531.3L1010.9 530.7L1015.1 536.0Z" fill="#10176e"/><path d="M1001.9 531.3L1015.1 536.0L1006.0 536.6Z" fill="#0c1054"/><path d="M1006.0 536.6L1015.1 536.0L1019.3 541.3Z" fill="#141c84"/><path d="M1006.0 536.6L1019.3 541.3L1010.2 541.9Z" fill="#0a0d48"/><path d="M1010.2 541.9L1019.3 541.3L1023.4 546.6Z" fill="#0a0d48"/><path d="M1010.2 541.9L1023.4 546.6L1014.4 547.2Z" fill="#0a0d48"/><path d="M1014.4 547.2L1023.4 546.6L1027.6 551.9Z" fill="#0e1360"/><path d="M1014.4 547.2L1027.6 551.9L1018.6 552.5Z" fill="#141c84"/><path d="M1018.6 552.5L1027.6 551.9L1031.8 557.2Z" fill="#0a0d48"/><path d="M1018.6 552.5L1031.8 557.2L1022.8 557.8Z" fill="#0e1360"/><path d="M1022.8 557.8L1031.8 557.2L1036.0 562.5Z" fill="#10176e"/><path d="M1022.8 557.8L1036.0 562.5L1026.9 563.2Z" fill="#0a0d48"/><path d="M1026.9 563.2L1036.0 562.5L1040.2 567.8Z" fill="#0a0d48"/><path d="M1026.9 563.2L1040.2 567.8L1031.1 568.5Z" fill="#0e1360"/><path d="M1002.5 520.1L1011.6 519.5L1015.7 524.8Z" fill="#141c84"/><path d="M1002.5 520.1L1015.7 524.8L1006.7 525.4Z" fill="#141c84"/><path d="M1006.7 525.4L1015.7 524.8L1019.9 530.1Z" fill="#10176e"/><path d="M1006.7 525.4L1019.9 530.1L1010.9 530.7Z" fill="#0c1054"/><path d="M1010.9 530.7L1019.9 530.1L1024.1 535.4Z" fill="#0c1054"/><path d="M1010.9 530.7L1024.1 535.4L1015.1 536.0Z" fill="#0e1360"/><path d="M1015.1 536.0L1024.1 535.4L1028.3 540.7Z" fill="#141c84"/><path d="M1015.1 536.0L1028.3 540.7L1019.3 541.3Z" fill="#0a0d48"/><path d="M1019.3 541.3L1028.3 540.7L1032.5 546.0Z" fill="#0a0d48"/><path d="M1019.3 541.3L1032.5 546.0L1023.4 546.6Z" fill="#0e1360"/><path d="M1023.4 546.6L1032.5 546.0L1036.7 551.3Z" fill="#141c84"/><path d="M1023.4 546.6L1036.7 551.3L1027.6 551.9Z" fill="#0a0d48"/><path d="M1027.6 551.9L1036.7 551.3L1040.9 556.6Z" fill="#0a0d48"/><path d="M1027.6 551.9L1040.9 556.6L1031.8 557.2Z" fill="#0a0d48"/><path d="M1031.8 557.2L1040.9 556.6L1045.1 561.9Z" fill="#0e1360"/><path d="M1031.8 557.2L1045.1 561.9L1036.0 562.5Z" fill="#0e1360"/><path d="M1036.0 562.5L1045.1 561.9L1049.3 567.2Z" fill="#0a0d48"/><path d="M1036.0 562.5L1049.3 567.2L1040.2 567.8Z" fill="#0a0d48"/><path d="M1011.6 519.5L1020.6 518.8L1024.8 524.1Z" fill="#0e1360"/><path d="M1011.6 519.5L1024.8 524.1L1015.7 524.8Z" fill="#0e1360"/><path d="M1015.7 524.8L1024.8 524.1L1029.0 529.4Z" fill="#10176e"/><path d="M1015.7 524.8L1029.0 529.4L1019.9 530.1Z" fill="#10176e"/><path d="M1019.9 530.1L1029.0 529.4L1033.2 534.8Z" fill="#0a0d48"/><path d="M1019.9 530.1L1033.2 534.8L1024.1 535.4Z" fill="#0c1054"/><path d="M1024.1 535.4L1033.2 534.8L1037.4 540.1Z" fill="#141c84"/><path d="M1024.1 535.4L1037.4 540.1L1028.3 540.7Z" fill="#141c84"/><path d="M1028.3 540.7L1037.4 540.1L1041.5 545.4Z" fill="#0a0d48"/><path d="M1028.3 540.7L1041.5 545.4L1032.5 546.0Z" fill="#141c84"/><path d="M1032.5 546.0L1041.5 545.4L1045.7 550.7Z" fill="#0e1360"/><path d="M1032.5 546.0L1045.7 550.7L1036.7 551.3Z" fill="#141c84"/><path d="M1036.7 551.3L1045.7 550.7L1049.9 556.0Z" fill="#0a0d48"/><path d="M1036.7 551.3L1049.9 556.0L1040.9 556.6Z" fill="#0e1360"/><path d="M1040.9 556.6L1049.9 556.0L1054.1 561.3Z" fill="#10176e"/><path d="M1040.9 556.6L1054.1 561.3L1045.1 561.9Z" fill="#0c1054"/><path d="M1045.1 561.9L1054.1 561.3L1058.3 566.6Z" fill="#0a0d48"/><path d="M1045.1 561.9L1058.3 566.6L1049.3 567.2Z" fill="#0a0d48"/><path d="M1020.6 518.8L1029.6 518.2L1033.8 523.5Z" fill="#0a0d48"/><path d="M1020.6 518.8L1033.8 523.5L1024.8 524.1Z" fill="#0a0d48"/><path d="M1024.8 524.1L1033.8 523.5L1038.0 528.8Z" fill="#0a0d48"/><path d="M1024.8 524.1L1038.0 528.8L1029.0 529.4Z" fill="#0e1360"/><path d="M1029.0 529.4L1038.0 528.8L1042.2 534.1Z" fill="#0a0d48"/><path d="M1029.0 529.4L1042.2 534.1L1033.2 534.8Z" fill="#10176e"/><path d="M1033.2 534.8L1042.2 534.1L1046.4 539.4Z" fill="#10176e"/><path d="M1033.2 534.8L1046.4 539.4L1037.4 540.1Z" fill="#10176e"/><path d="M1037.4 540.1L1046.4 539.4L1050.6 544.8Z" fill="#10176e"/><path d="M1037.4 540.1L1050.6 544.8L1041.5 545.4Z" fill="#10176e"/><path d="M1041.5 545.4L1050.6 544.8L1054.8 550.1Z" fill="#141c84"/><path d="M1041.5 545.4L1054.8 550.1L1045.7 550.7Z" fill="#141c84"/><path d="M1045.7 550.7L1054.8 550.1L1059.0 555.4Z" fill="#0e1360"/><path d="M1045.7 550.7L1059.0 555.4L1049.9 556.0Z" fill="#141c84"/><path d="M1049.9 556.0L1059.0 555.4L1063.2 560.7Z" fill="#0a0d48"/><path d="M1049.9 556.0L1063.2 560.7L1054.1 561.3Z" fill="#0a0d48"/><path d="M1054.1 561.3L1063.2 560.7L1067.4 566.0Z" fill="#0a0d48"/><path d="M1054.1 561.3L1067.4 566.0L1058.3 566.6Z" fill="#0a0d48"/></g><path d="M632.6 545.7L1029.6 518.2L1067.4 566L1068.4 587.6L669.9 616.8L632.6 565.2Z" fill="none" stroke="#101860" stroke-width="1"/><path d="M668.2 593.1L1067.4 566" stroke="#203070" stroke-width="1.2"/><path d="M693.5 478L729 563" stroke="#18203c" stroke-width="11" stroke-linecap="round"/><path d="M693.5 478L729 563" stroke="#34446e" stroke-width="7"/><path d="M691.5 479L726.5 562" stroke="#4a5a88" stroke-width="2" stroke-opacity=".6"/><path d="M693.5 478L729 563" stroke="#10183a" stroke-width="9" stroke-dasharray="1 2 1.5 1" stroke-opacity=".45"/><ellipse cx="745" cy="568" rx="45" ry="10" fill="#0a0c10" fill-opacity=".5"/><path d="M887.7 479.5 L888.2 478.2 L888.7 477.6 L889.2 477.2 L889.7 476.9 L890.2 476.5 L890.7 476.3 L891.2 476.0 L891.7 475.8 L892.2 475.5 L892.7 475.3 L893.2 475.1 L893.7 474.9 L894.2 474.7 L894.7 474.6 L895.2 474.4 L895.7 474.2 L896.2 474.1 L896.6 473.9 L897.1 473.8 L897.6 473.7 L898.1 473.5 L898.6 473.4 L899.1 473.3 L899.6 473.1 L900.1 473.0 L900.6 472.9 L901.1 472.8 L901.6 472.7 L902.1 472.6 L902.6 472.5 L903.1 472.4 L903.6 472.3 L904.1 472.2 L904.6 472.1 L905.1 472.0 L905.6 471.9 L906.1 471.8 L906.6 471.7 L907.1 471.6 L907.6 471.6 L908.1 471.5 L908.6 471.4 L909.1 471.3 L909.6 471.3 L910.1 471.2 L910.6 471.1 L911.0 471.0 L911.5 471.0 L912.0 470.9 L912.5 470.8 L913.0 470.8 L913.5 470.7 L914.0 470.7 L914.5 470.6 L915.0 470.5 L915.5 470.5 L916.0 470.4 L916.5 470.4 L917.0 470.3 L917.5 470.3 L918.0 470.2 L918.5 470.2 L919.0 470.1 L919.5 470.1 L920.0 470.0 L920.5 470.0 L921.0 470.0 L921.5 469.9 L922.0 469.9 L922.5 469.8 L923.0 469.8 L923.5 469.8 L924.0 469.7 L924.5 469.7 L924.9 469.7 L925.4 469.6 L925.9 469.6 L926.4 469.6 L926.9 469.6 L927.4 469.5 L927.9 469.5 L928.4 469.5 L928.9 469.5 L929.4 469.4 L929.9 469.4 L930.4 469.4 L930.9 469.4 L931.4 469.4 L931.9 469.4 L932.4 469.3 L932.9 469.3 L933.4 469.3 L933.9 469.3 L934.4 469.3 L934.9 469.3 L935.4 469.3 L935.9 469.3 L936.4 469.3 L936.9 469.3 L937.4 469.3 L937.9 469.3 L938.4 469.3 L938.8 469.3 L939.3 469.3 L939.8 469.3 L940.3 469.3 L940.8 469.3 L941.3 469.3 L941.8 469.3 L942.3 469.3 L942.8 469.3 L943.3 469.3 L943.8 469.4 L944.3 469.4 L944.8 469.4 L945.3 469.4 L945.8 469.4 L946.3 469.4 L946.8 469.5 L947.3 469.5 L947.8 469.5 L948.3 469.5 L948.8 469.6 L949.3 469.6 L949.8 469.6 L950.3 469.7 L950.8 469.7 L951.3 469.7 L951.8 469.8 L952.3 469.8 L952.7 469.8 L953.2 469.9 L953.7 469.9 L954.2 470.0 L954.7 470.0 L955.2 470.1 L955.7 470.1 L956.2 470.2 L956.7 470.2 L957.2 470.3 L957.7 470.4 L958.2 470.4 L958.7 470.5 L959.2 470.6 L959.7 470.6 L960.2 470.7 L960.7 470.8 L961.2 470.9 L961.7 470.9 L962.2 471.0 L962.7 471.1 L963.2 471.2 L963.7 471.3 L964.2 471.4 L964.7 471.5 L965.2 471.6 L965.7 471.8 L966.2 471.9 L966.6 472.0 L967.1 472.2 L967.6 472.3 L968.1 472.5 L968.6 472.6 L969.1 472.8 L969.6 473.0 L970.1 473.2 L970.6 473.4 L971.1 473.6 L971.6 473.9 L972.1 474.2 L972.6 474.6 L973.1 475.1 L973.6 475.9 L974.1 485.2 L974.6 495.3 L975.1 506.1 L975.6 516.2 L976.1 526.3 L976.6 537.1 L977.1 547.4 L977.1 547.4 L976.6 548.8 L976.1 549.3 L975.6 549.8 L975.1 550.1 L974.6 550.5 L974.1 550.7 L973.6 551.0 L973.1 551.3 L972.6 551.5 L972.1 551.7 L971.6 551.9 L971.1 552.1 L970.6 552.3 L970.1 552.5 L969.6 552.6 L969.1 552.8 L968.6 552.9 L968.1 553.1 L967.6 553.2 L967.1 553.4 L966.6 553.5 L966.2 553.7 L965.7 553.8 L965.2 553.9 L964.7 554.0 L964.2 554.2 L963.7 554.3 L963.2 554.4 L962.7 554.5 L962.2 554.6 L961.7 554.7 L961.2 554.8 L960.7 554.9 L960.2 555.0 L959.7 555.1 L959.2 555.2 L958.7 555.3 L958.2 555.4 L957.7 555.4 L957.2 555.5 L956.7 555.6 L956.2 555.7 L955.7 555.8 L955.2 555.9 L954.7 555.9 L954.2 556.0 L953.7 556.1 L953.2 556.1 L952.7 556.2 L952.3 556.3 L951.8 556.3 L951.3 556.4 L950.8 556.5 L950.3 556.5 L949.8 556.6 L949.3 556.6 L948.8 556.7 L948.3 556.8 L947.8 556.8 L947.3 556.9 L946.8 556.9 L946.3 557.0 L945.8 557.0 L945.3 557.1 L944.8 557.1 L944.3 557.2 L943.8 557.2 L943.3 557.2 L942.8 557.3 L942.3 557.3 L941.8 557.4 L941.3 557.4 L940.8 557.4 L940.3 557.5 L939.8 557.5 L939.3 557.5 L938.8 557.6 L938.4 557.6 L937.9 557.6 L937.4 557.7 L936.9 557.7 L936.4 557.7 L935.9 557.7 L935.4 557.8 L934.9 557.8 L934.4 557.8 L933.9 557.8 L933.4 557.8 L932.9 557.9 L932.4 557.9 L931.9 557.9 L931.4 557.9 L930.9 557.9 L930.4 557.9 L929.9 557.9 L929.4 558.0 L928.9 558.0 L928.4 558.0 L927.9 558.0 L927.4 558.0 L926.9 558.0 L926.4 558.0 L925.9 558.0 L925.4 558.0 L924.9 558.0 L924.5 558.0 L924.0 558.0 L923.5 558.0 L923.0 558.0 L922.5 558.0 L922.0 558.0 L921.5 558.0 L921.0 558.0 L920.5 557.9 L920.0 557.9 L919.5 557.9 L919.0 557.9 L918.5 557.9 L918.0 557.9 L917.5 557.9 L917.0 557.8 L916.5 557.8 L916.0 557.8 L915.5 557.8 L915.0 557.7 L914.5 557.7 L914.0 557.7 L913.5 557.7 L913.0 557.6 L912.5 557.6 L912.0 557.6 L911.5 557.5 L911.0 557.5 L910.6 557.4 L910.1 557.4 L909.6 557.4 L909.1 557.3 L908.6 557.3 L908.1 557.2 L907.6 557.2 L907.1 557.1 L906.6 557.1 L906.1 557.0 L905.6 556.9 L905.1 556.9 L904.6 556.8 L904.1 556.8 L903.6 556.7 L903.1 556.6 L902.6 556.5 L902.1 556.5 L901.6 556.4 L901.1 556.3 L900.6 556.2 L900.1 556.1 L899.6 556.0 L899.1 555.9 L898.6 555.8 L898.1 555.7 L897.6 555.6 L897.1 555.5 L896.6 555.4 L896.2 555.3 L895.7 555.1 L895.2 555.0 L894.7 554.9 L894.2 554.7 L893.7 554.5 L893.2 554.4 L892.7 554.2 L892.2 554.0 L891.7 553.8 L891.2 553.5 L890.7 553.2 L890.2 552.9 L889.7 552.6 L889.2 552.1 L888.7 551.5 L888.2 526.6 L887.7 479.5Z" fill="url(#gv)"/><path d="M887.7 479.5 L888.2 478.2 L888.7 477.6 L889.2 477.2 L889.7 476.9 L890.2 476.5 L890.7 476.3 L891.2 476.0 L891.7 475.8 L892.2 475.5 L892.7 475.3 L893.2 475.1 L893.7 474.9 L894.2 474.7 L894.7 474.6 L895.2 474.4 L895.7 474.2 L896.2 474.1 L896.6 473.9 L897.1 473.8 L897.6 473.7 L898.1 473.5 L898.6 473.4 L899.1 473.3 L899.6 473.1 L900.1 473.0 L900.6 472.9 L901.1 472.8 L901.6 472.7 L902.1 472.6 L902.6 472.5 L903.1 472.4 L903.6 472.3 L904.1 472.2 L904.6 472.1 L905.1 472.0 L905.6 471.9 L906.1 471.8 L906.6 471.7 L907.1 471.6 L907.6 471.6 L908.1 471.5 L908.6 471.4 L909.1 471.3 L909.6 471.3 L910.1 471.2 L910.6 471.1 L911.0 471.0 L911.5 471.0 L912.0 470.9 L912.5 470.8 L913.0 470.8 L913.5 470.7 L914.0 470.7 L914.5 470.6 L915.0 470.5 L915.5 470.5 L916.0 470.4 L916.5 470.4 L917.0 470.3 L917.5 470.3 L918.0 470.2 L918.5 470.2 L919.0 470.1 L919.5 470.1 L920.0 470.0 L920.5 470.0 L921.0 470.0 L921.5 469.9 L922.0 469.9 L922.5 469.8 L923.0 469.8 L923.5 469.8 L924.0 469.7 L924.5 469.7 L924.9 469.7 L925.4 469.6 L925.9 469.6 L926.4 469.6 L926.9 469.6 L927.4 469.5 L927.9 469.5 L928.4 469.5 L928.9 469.5 L929.4 469.4 L929.9 469.4 L930.4 469.4 L930.9 469.4 L931.4 469.4 L931.9 469.4 L932.4 469.3 L932.9 469.3 L933.4 469.3 L933.9 469.3 L934.4 469.3 L934.9 469.3 L935.4 469.3 L935.9 469.3 L936.4 469.3 L936.9 469.3 L937.4 469.3 L937.9 469.3 L938.4 469.3 L938.8 469.3 L939.3 469.3 L939.8 469.3 L940.3 469.3 L940.8 469.3 L941.3 469.3 L941.8 469.3 L942.3 469.3 L942.8 469.3 L943.3 469.3 L943.8 469.4 L944.3 469.4 L944.8 469.4 L945.3 469.4 L945.8 469.4 L946.3 469.4 L946.8 469.5 L947.3 469.5 L947.8 469.5 L948.3 469.5 L948.8 469.6 L949.3 469.6 L949.8 469.6 L950.3 469.7 L950.8 469.7 L951.3 469.7 L951.8 469.8 L952.3 469.8 L952.7 469.8 L953.2 469.9 L953.7 469.9 L954.2 470.0 L954.7 470.0 L955.2 470.1 L955.7 470.1 L956.2 470.2 L956.7 470.2 L957.2 470.3 L957.7 470.4 L958.2 470.4 L958.7 470.5 L959.2 470.6 L959.7 470.6 L960.2 470.7 L960.7 470.8 L961.2 470.9 L961.7 470.9 L962.2 471.0 L962.7 471.1 L963.2 471.2 L963.7 471.3 L964.2 471.4 L964.7 471.5 L965.2 471.6 L965.7 471.8 L966.2 471.9 L966.6 472.0 L967.1 472.2 L967.6 472.3 L968.1 472.5 L968.6 472.6 L969.1 472.8 L969.6 473.0 L970.1 473.2 L970.6 473.4 L971.1 473.6 L971.6 473.9 L972.1 474.2 L972.6 474.6 L973.1 475.1 L973.6 475.9 L974.1 485.2 L974.6 495.3 L975.1 506.1 L975.6 516.2 L976.1 526.3 L976.6 537.1 L977.1 547.4 L977.1 547.4 L976.6 548.8 L976.1 549.3 L975.6 549.8 L975.1 550.1 L974.6 550.5 L974.1 550.7 L973.6 551.0 L973.1 551.3 L972.6 551.5 L972.1 551.7 L971.6 551.9 L971.1 552.1 L970.6 552.3 L970.1 552.5 L969.6 552.6 L969.1 552.8 L968.6 552.9 L968.1 553.1 L967.6 553.2 L967.1 553.4 L966.6 553.5 L966.2 553.7 L965.7 553.8 L965.2 553.9 L964.7 554.0 L964.2 554.2 L963.7 554.3 L963.2 554.4 L962.7 554.5 L962.2 554.6 L961.7 554.7 L961.2 554.8 L960.7 554.9 L960.2 555.0 L959.7 555.1 L959.2 555.2 L958.7 555.3 L958.2 555.4 L957.7 555.4 L957.2 555.5 L956.7 555.6 L956.2 555.7 L955.7 555.8 L955.2 555.9 L954.7 555.9 L954.2 556.0 L953.7 556.1 L953.2 556.1 L952.7 556.2 L952.3 556.3 L951.8 556.3 L951.3 556.4 L950.8 556.5 L950.3 556.5 L949.8 556.6 L949.3 556.6 L948.8 556.7 L948.3 556.8 L947.8 556.8 L947.3 556.9 L946.8 556.9 L946.3 557.0 L945.8 557.0 L945.3 557.1 L944.8 557.1 L944.3 557.2 L943.8 557.2 L943.3 557.2 L942.8 557.3 L942.3 557.3 L941.8 557.4 L941.3 557.4 L940.8 557.4 L940.3 557.5 L939.8 557.5 L939.3 557.5 L938.8 557.6 L938.4 557.6 L937.9 557.6 L937.4 557.7 L936.9 557.7 L936.4 557.7 L935.9 557.7 L935.4 557.8 L934.9 557.8 L934.4 557.8 L933.9 557.8 L933.4 557.8 L932.9 557.9 L932.4 557.9 L931.9 557.9 L931.4 557.9 L930.9 557.9 L930.4 557.9 L929.9 557.9 L929.4 558.0 L928.9 558.0 L928.4 558.0 L927.9 558.0 L927.4 558.0 L926.9 558.0 L926.4 558.0 L925.9 558.0 L925.4 558.0 L924.9 558.0 L924.5 558.0 L924.0 558.0 L923.5 558.0 L923.0 558.0 L922.5 558.0 L922.0 558.0 L921.5 558.0 L921.0 558.0 L920.5 557.9 L920.0 557.9 L919.5 557.9 L919.0 557.9 L918.5 557.9 L918.0 557.9 L917.5 557.9 L917.0 557.8 L916.5 557.8 L916.0 557.8 L915.5 557.8 L915.0 557.7 L914.5 557.7 L914.0 557.7 L913.5 557.7 L913.0 557.6 L912.5 557.6 L912.0 557.6 L911.5 557.5 L911.0 557.5 L910.6 557.4 L910.1 557.4 L909.6 557.4 L909.1 557.3 L908.6 557.3 L908.1 557.2 L907.6 557.2 L907.1 557.1 L906.6 557.1 L906.1 557.0 L905.6 556.9 L905.1 556.9 L904.6 556.8 L904.1 556.8 L903.6 556.7 L903.1 556.6 L902.6 556.5 L902.1 556.5 L901.6 556.4 L901.1 556.3 L900.6 556.2 L900.1 556.1 L899.6 556.0 L899.1 555.9 L898.6 555.8 L898.1 555.7 L897.6 555.6 L897.1 555.5 L896.6 555.4 L896.2 555.3 L895.7 555.1 L895.2 555.0 L894.7 554.9 L894.2 554.7 L893.7 554.5 L893.2 554.4 L892.7 554.2 L892.2 554.0 L891.7 553.8 L891.2 553.5 L890.7 553.2 L890.2 552.9 L889.7 552.6 L889.2 552.1 L888.7 551.5 L888.2 526.6 L887.7 479.5Z" fill="url(#gsh2)"/><g clip-path="url(#clip1)"><path d="M973.7 476.3L971.8 485.7M973.7 476.3L971.9 491.4M964.2 482.2L971.9 491.4M964.2 482.2L958.9 495.6M939.6 486.1L958.9 495.6M939.6 486.1L929.0 498.7M914.7 486.5L929.0 498.7M914.7 486.5L909.4 498.2M896.2 484.3L909.4 498.2M896.2 484.3L889.6 493.9M887.8 479.1L889.6 493.9M887.8 479.1L889.7 489.0M897.9 473.6L889.7 489.0M971.8 485.7L975.2 510.1M971.9 491.4L975.2 510.1M971.9 491.4L964.9 515.5M958.9 495.6L964.9 515.5M958.9 495.6L943.0 519.0M929.0 498.7L943.0 519.0M929.0 498.7L919.8 519.8M909.4 498.2L919.8 519.8M909.4 498.2L897.9 517.7M889.6 493.9L897.9 517.7M889.6 493.9L888.1 512.4M889.7 489.0L888.1 512.4M889.7 489.0L898.3 506.5M975.2 510.1L973.8 527.6M975.2 510.1L974.9 532.7M964.9 515.5L974.9 532.7M964.9 515.5L961.3 537.6M943.0 519.0L961.3 537.6M943.0 519.0L930.4 540.9M919.8 519.8L930.4 540.9M919.8 519.8L906.9 540.1M897.9 517.7L906.9 540.1M897.9 517.7L889.4 535.5M888.1 512.4L889.4 535.5M888.1 512.4L889.3 531.6M898.3 506.5L889.3 531.6M973.8 527.6L977.1 547.2M974.9 532.7L977.1 547.2M974.9 532.7L966.8 553.5M961.3 537.6L966.8 553.5M961.3 537.6L944.2 557.2M930.4 540.9L944.2 557.2M930.4 540.9L914.8 557.7M906.9 540.1L914.8 557.7M906.9 540.1L898.3 555.8M889.4 535.5L898.3 555.8M889.4 535.5L888.6 551.3M889.3 531.6L888.6 551.3M889.3 531.6L897.4 544.9" stroke="#183020" stroke-opacity=".85" stroke-width="1" fill="none"/><path d="M974.3 488.5 L974.2 489.1 L973.9 489.6 L973.4 490.2 L972.8 490.8 L972.0 491.3 L971.0 491.9 L969.8 492.5 L968.5 493.0 L967.0 493.5 L965.3 494.1 L963.5 494.6 L961.6 495.0 L959.5 495.5 L957.4 495.9 L955.1 496.3 L952.7 496.7 L950.2 497.1 L947.6 497.4 L944.9 497.7 L942.2 498.0 L939.5 498.2 L936.7 498.4 L933.9 498.5 L931.1 498.6 L928.2 498.7 L925.4 498.8 L922.6 498.8 L919.9 498.7 L917.2 498.7 L914.5 498.6 L912.0 498.4 L909.5 498.2 L907.1 498.0 L904.8 497.8 L902.6 497.5 L900.5 497.2 L898.6 496.8 L896.8 496.5 L895.1 496.1 L893.6 495.6 L892.3 495.2 L891.2 494.7 L890.2 494.2 L889.3 493.7 L888.7 493.2 L888.2 492.6 L888.0 492.1 L887.9 491.5" stroke="#183020" stroke-opacity=".85" stroke-width="1" fill="none"/><path d="M975.3 509.5 L975.2 510.0 L974.9 510.6 L974.4 511.2 L973.8 511.8 L973.0 512.4 L972.0 512.9 L970.8 513.5 L969.4 514.0 L967.9 514.6 L966.3 515.1 L964.5 515.6 L962.5 516.1 L960.4 516.5 L958.2 517.0 L955.9 517.4 L953.5 517.8 L951.0 518.1 L948.4 518.5 L945.7 518.8 L943.0 519.0 L940.2 519.3 L937.4 519.4 L934.5 519.6 L931.7 519.7 L928.8 519.8 L926.0 519.8 L923.2 519.9 L920.4 519.8 L917.7 519.7 L915.0 519.6 L912.4 519.5 L909.9 519.3 L907.4 519.1 L905.1 518.8 L902.9 518.6 L900.8 518.2 L898.9 517.9 L897.1 517.5 L895.4 517.1 L893.9 516.7 L892.6 516.2 L891.4 515.7 L890.4 515.2 L889.6 514.7 L888.9 514.2 L888.4 513.7 L888.2 513.1 L888.1 512.5" stroke="#183020" stroke-opacity=".85" stroke-width="1" fill="none"/><path d="M976.3 530.5 L976.2 531.0 L975.9 531.6 L975.4 532.2 L974.8 532.8 L973.9 533.4 L972.9 533.9 L971.7 534.5 L970.4 535.1 L968.9 535.6 L967.2 536.1 L965.4 536.6 L963.4 537.1 L961.3 537.6 L959.1 538.0 L956.7 538.5 L954.3 538.9 L951.7 539.2 L949.1 539.5 L946.4 539.8 L943.7 540.1 L940.9 540.3 L938.0 540.5 L935.2 540.7 L932.3 540.8 L929.4 540.9 L926.5 540.9 L923.7 540.9 L920.9 540.9 L918.1 540.8 L915.4 540.7 L912.8 540.6 L910.3 540.4 L907.8 540.2 L905.5 539.9 L903.3 539.6 L901.2 539.3 L899.2 539.0 L897.4 538.6 L895.7 538.2 L894.2 537.7 L892.8 537.3 L891.6 536.8 L890.6 536.3 L889.8 535.8 L889.1 535.2 L888.7 534.7 L888.4 534.1 L888.3 533.5" stroke="#183020" stroke-opacity=".85" stroke-width="1" fill="none"/></g><path d="M887.7 479.5 L888.2 478.2 L888.7 477.6 L889.2 477.2 L889.7 476.9 L890.2 476.5 L890.7 476.3 L891.2 476.0 L891.7 475.8 L892.2 475.5 L892.7 475.3 L893.2 475.1 L893.7 474.9 L894.2 474.7 L894.7 474.6 L895.2 474.4 L895.7 474.2 L896.2 474.1 L896.6 473.9 L897.1 473.8 L897.6 473.7 L898.1 473.5 L898.6 473.4 L899.1 473.3 L899.6 473.1 L900.1 473.0 L900.6 472.9 L901.1 472.8 L901.6 472.7 L902.1 472.6 L902.6 472.5 L903.1 472.4 L903.6 472.3 L904.1 472.2 L904.6 472.1 L905.1 472.0 L905.6 471.9 L906.1 471.8 L906.6 471.7 L907.1 471.6 L907.6 471.6 L908.1 471.5 L908.6 471.4 L909.1 471.3 L909.6 471.3 L910.1 471.2 L910.6 471.1 L911.0 471.0 L911.5 471.0 L912.0 470.9 L912.5 470.8 L913.0 470.8 L913.5 470.7 L914.0 470.7 L914.5 470.6 L915.0 470.5 L915.5 470.5 L916.0 470.4 L916.5 470.4 L917.0 470.3 L917.5 470.3 L918.0 470.2 L918.5 470.2 L919.0 470.1 L919.5 470.1 L920.0 470.0 L920.5 470.0 L921.0 470.0 L921.5 469.9 L922.0 469.9 L922.5 469.8 L923.0 469.8 L923.5 469.8 L924.0 469.7 L924.5 469.7 L924.9 469.7 L925.4 469.6 L925.9 469.6 L926.4 469.6 L926.9 469.6 L927.4 469.5 L927.9 469.5 L928.4 469.5 L928.9 469.5 L929.4 469.4 L929.9 469.4 L930.4 469.4 L930.9 469.4 L931.4 469.4 L931.9 469.4 L932.4 469.3 L932.9 469.3 L933.4 469.3 L933.9 469.3 L934.4 469.3 L934.9 469.3 L935.4 469.3 L935.9 469.3 L936.4 469.3 L936.9 469.3 L937.4 469.3 L937.9 469.3 L938.4 469.3 L938.8 469.3 L939.3 469.3 L939.8 469.3 L940.3 469.3 L940.8 469.3 L941.3 469.3 L941.8 469.3 L942.3 469.3 L942.8 469.3 L943.3 469.3 L943.8 469.4 L944.3 469.4 L944.8 469.4 L945.3 469.4 L945.8 469.4 L946.3 469.4 L946.8 469.5 L947.3 469.5 L947.8 469.5 L948.3 469.5 L948.8 469.6 L949.3 469.6 L949.8 469.6 L950.3 469.7 L950.8 469.7 L951.3 469.7 L951.8 469.8 L952.3 469.8 L952.7 469.8 L953.2 469.9 L953.7 469.9 L954.2 470.0 L954.7 470.0 L955.2 470.1 L955.7 470.1 L956.2 470.2 L956.7 470.2 L957.2 470.3 L957.7 470.4 L958.2 470.4 L958.7 470.5 L959.2 470.6 L959.7 470.6 L960.2 470.7 L960.7 470.8 L961.2 470.9 L961.7 470.9 L962.2 471.0 L962.7 471.1 L963.2 471.2 L963.7 471.3 L964.2 471.4 L964.7 471.5 L965.2 471.6 L965.7 471.8 L966.2 471.9 L966.6 472.0 L967.1 472.2 L967.6 472.3 L968.1 472.5 L968.6 472.6 L969.1 472.8 L969.6 473.0 L970.1 473.2 L970.6 473.4 L971.1 473.6 L971.6 473.9 L972.1 474.2 L972.6 474.6 L973.1 475.1 L973.6 475.9 L974.1 485.2 L974.6 495.3 L975.1 506.1 L975.6 516.2 L976.1 526.3 L976.6 537.1 L977.1 547.4 L977.1 547.4 L976.6 548.8 L976.1 549.3 L975.6 549.8 L975.1 550.1 L974.6 550.5 L974.1 550.7 L973.6 551.0 L973.1 551.3 L972.6 551.5 L972.1 551.7 L971.6 551.9 L971.1 552.1 L970.6 552.3 L970.1 552.5 L969.6 552.6 L969.1 552.8 L968.6 552.9 L968.1 553.1 L967.6 553.2 L967.1 553.4 L966.6 553.5 L966.2 553.7 L965.7 553.8 L965.2 553.9 L964.7 554.0 L964.2 554.2 L963.7 554.3 L963.2 554.4 L962.7 554.5 L962.2 554.6 L961.7 554.7 L961.2 554.8 L960.7 554.9 L960.2 555.0 L959.7 555.1 L959.2 555.2 L958.7 555.3 L958.2 555.4 L957.7 555.4 L957.2 555.5 L956.7 555.6 L956.2 555.7 L955.7 555.8 L955.2 555.9 L954.7 555.9 L954.2 556.0 L953.7 556.1 L953.2 556.1 L952.7 556.2 L952.3 556.3 L951.8 556.3 L951.3 556.4 L950.8 556.5 L950.3 556.5 L949.8 556.6 L949.3 556.6 L948.8 556.7 L948.3 556.8 L947.8 556.8 L947.3 556.9 L946.8 556.9 L946.3 557.0 L945.8 557.0 L945.3 557.1 L944.8 557.1 L944.3 557.2 L943.8 557.2 L943.3 557.2 L942.8 557.3 L942.3 557.3 L941.8 557.4 L941.3 557.4 L940.8 557.4 L940.3 557.5 L939.8 557.5 L939.3 557.5 L938.8 557.6 L938.4 557.6 L937.9 557.6 L937.4 557.7 L936.9 557.7 L936.4 557.7 L935.9 557.7 L935.4 557.8 L934.9 557.8 L934.4 557.8 L933.9 557.8 L933.4 557.8 L932.9 557.9 L932.4 557.9 L931.9 557.9 L931.4 557.9 L930.9 557.9 L930.4 557.9 L929.9 557.9 L929.4 558.0 L928.9 558.0 L928.4 558.0 L927.9 558.0 L927.4 558.0 L926.9 558.0 L926.4 558.0 L925.9 558.0 L925.4 558.0 L924.9 558.0 L924.5 558.0 L924.0 558.0 L923.5 558.0 L923.0 558.0 L922.5 558.0 L922.0 558.0 L921.5 558.0 L921.0 558.0 L920.5 557.9 L920.0 557.9 L919.5 557.9 L919.0 557.9 L918.5 557.9 L918.0 557.9 L917.5 557.9 L917.0 557.8 L916.5 557.8 L916.0 557.8 L915.5 557.8 L915.0 557.7 L914.5 557.7 L914.0 557.7 L913.5 557.7 L913.0 557.6 L912.5 557.6 L912.0 557.6 L911.5 557.5 L911.0 557.5 L910.6 557.4 L910.1 557.4 L909.6 557.4 L909.1 557.3 L908.6 557.3 L908.1 557.2 L907.6 557.2 L907.1 557.1 L906.6 557.1 L906.1 557.0 L905.6 556.9 L905.1 556.9 L904.6 556.8 L904.1 556.8 L903.6 556.7 L903.1 556.6 L902.6 556.5 L902.1 556.5 L901.6 556.4 L901.1 556.3 L900.6 556.2 L900.1 556.1 L899.6 556.0 L899.1 555.9 L898.6 555.8 L898.1 555.7 L897.6 555.6 L897.1 555.5 L896.6 555.4 L896.2 555.3 L895.7 555.1 L895.2 555.0 L894.7 554.9 L894.2 554.7 L893.7 554.5 L893.2 554.4 L892.7 554.2 L892.2 554.0 L891.7 553.8 L891.2 553.5 L890.7 553.2 L890.2 552.9 L889.7 552.6 L889.2 552.1 L888.7 551.5 L888.2 526.6 L887.7 479.5Z" fill="none" stroke="#1a2a3a" stroke-width="1" stroke-opacity=".8"/><path d="M847.3 465.9 L847.8 464.1 L848.3 463.3 L848.8 462.7 L849.3 462.1 L849.8 461.5 L850.3 460.9 L850.8 460.3 L851.3 459.6 L851.8 459.0 L852.3 458.4 L852.8 457.8 L853.3 457.2 L853.7 456.6 L854.2 456.0 L854.7 455.4 L855.2 454.8 L855.7 454.2 L856.2 453.5 L856.7 452.9 L857.2 452.3 L857.7 451.7 L858.2 451.1 L858.7 450.5 L859.2 449.9 L859.7 449.3 L860.2 448.7 L860.7 448.2 L861.2 447.7 L861.7 447.3 L862.2 446.8 L862.7 446.4 L863.2 445.9 L863.7 445.4 L864.2 445.0 L864.7 444.5 L865.2 444.1 L865.7 443.6 L866.2 443.1 L866.7 442.7 L867.2 442.2 L867.7 441.8 L868.2 441.3 L868.7 440.8 L869.2 440.4 L869.7 439.9 L870.2 439.5 L870.7 439.0 L871.2 438.5 L871.7 438.1 L872.2 437.6 L872.7 437.1 L873.2 436.7 L873.7 436.2 L874.2 435.8 L874.7 435.3 L875.2 434.8 L875.6 434.4 L876.1 433.9 L876.6 433.5 L877.1 433.0 L877.6 432.3 L878.1 431.5 L878.6 430.8 L879.1 430.0 L879.6 429.2 L880.1 428.5 L880.6 427.7 L881.1 427.0 L881.6 426.2 L882.1 425.4 L882.6 424.7 L883.1 423.9 L883.6 423.2 L884.1 422.4 L884.6 421.7 L885.1 420.9 L885.6 420.1 L886.1 419.4 L886.6 418.6 L887.1 417.9 L887.6 417.1 L888.1 416.3 L888.6 415.6 L889.1 414.9 L889.6 414.4 L890.1 414.0 L890.6 413.7 L891.1 413.4 L891.6 413.2 L892.1 412.9 L892.6 412.7 L893.1 412.5 L893.6 412.3 L894.1 412.1 L894.6 411.9 L895.1 411.7 L895.6 411.6 L896.1 411.4 L896.6 411.3 L897.0 411.1 L897.5 411.0 L898.0 410.8 L898.5 410.7 L899.0 410.6 L899.5 410.4 L900.0 410.3 L900.5 410.2 L901.0 410.1 L901.5 410.0 L902.0 409.9 L902.5 409.8 L903.0 409.7 L903.5 409.6 L904.0 409.5 L904.5 409.4 L905.0 409.3 L905.5 409.2 L906.0 409.1 L906.5 409.0 L907.0 409.0 L907.5 408.9 L908.0 408.8 L908.5 408.7 L909.0 408.6 L909.5 408.6 L910.0 408.5 L910.5 408.4 L911.0 408.4 L911.5 408.3 L912.0 408.2 L912.5 408.2 L913.0 408.1 L913.5 408.0 L914.0 408.0 L914.5 407.9 L915.0 407.9 L915.5 407.8 L916.0 407.8 L916.5 407.7 L917.0 407.7 L917.5 407.6 L918.0 407.6 L918.5 407.5 L918.9 407.5 L919.4 407.5 L919.9 407.4 L920.4 407.4 L920.9 407.3 L921.4 407.3 L921.9 407.3 L922.4 407.2 L922.9 407.2 L923.4 407.2 L923.9 407.1 L924.4 407.1 L924.9 407.1 L925.4 407.1 L925.9 407.0 L926.4 407.0 L926.9 407.0 L927.4 407.0 L927.9 406.9 L928.4 406.9 L928.9 406.9 L929.4 406.9 L929.9 406.9 L930.4 406.9 L930.9 406.8 L931.4 406.8 L931.9 406.8 L932.4 406.8 L932.9 406.8 L933.4 406.8 L933.9 406.8 L934.4 406.8 L934.9 406.8 L935.4 406.8 L935.9 406.8 L936.4 406.8 L936.9 406.8 L937.4 406.8 L937.9 406.8 L938.4 406.8 L938.9 406.8 L939.4 406.8 L939.9 406.8 L940.3 406.8 L940.8 406.8 L941.3 406.9 L941.8 406.9 L942.3 406.9 L942.8 406.9 L943.3 406.9 L943.8 406.9 L944.3 407.0 L944.8 407.0 L945.3 407.0 L945.8 407.0 L946.3 407.1 L946.8 407.1 L947.3 407.1 L947.8 407.2 L948.3 407.2 L948.8 407.3 L949.3 407.3 L949.8 407.3 L950.3 407.4 L950.8 407.4 L951.3 407.5 L951.8 407.5 L952.3 407.6 L952.8 407.6 L953.3 407.7 L953.8 407.7 L954.3 407.8 L954.8 407.9 L955.3 407.9 L955.8 408.0 L956.3 408.1 L956.8 408.1 L957.3 408.2 L957.8 408.3 L958.3 408.4 L958.8 408.5 L959.3 408.6 L959.8 408.7 L960.3 408.8 L960.8 408.9 L961.3 409.0 L961.8 409.1 L962.2 409.2 L962.7 409.4 L963.2 409.5 L963.7 409.7 L964.2 409.8 L964.7 410.0 L965.2 410.2 L965.7 410.3 L966.2 410.6 L966.7 410.8 L967.2 411.0 L967.7 411.3 L968.2 411.7 L968.7 412.1 L969.2 412.8 L969.7 413.4 L970.2 414.1 L970.7 414.8 L971.2 415.4 L971.7 416.1 L972.2 416.8 L972.7 417.4 L973.2 418.1 L973.7 418.7 L974.2 419.4 L974.7 420.1 L975.2 420.8 L975.7 421.4 L976.2 422.1 L976.7 422.7 L977.2 423.4 L977.7 424.1 L978.2 424.8 L978.7 425.4 L979.2 426.1 L979.7 426.7 L980.2 427.4 L980.7 428.1 L981.2 428.7 L981.7 429.3 L982.2 429.7 L982.7 430.1 L983.2 430.5 L983.6 430.9 L984.1 431.3 L984.6 431.7 L985.1 432.1 L985.6 432.5 L986.1 432.9 L986.6 433.3 L987.1 433.7 L987.6 434.1 L988.1 434.5 L988.6 434.9 L989.1 435.4 L989.6 435.8 L990.1 436.2 L990.6 436.6 L991.1 437.0 L991.6 437.4 L992.1 437.8 L992.6 438.2 L993.1 438.6 L993.6 439.0 L994.1 439.4 L994.6 439.8 L995.1 440.2 L995.6 440.6 L996.1 441.0 L996.6 441.4 L997.1 441.8 L997.6 442.2 L998.1 442.6 L998.6 443.0 L999.1 443.4 L999.6 443.9 L1000.1 444.4 L1000.6 444.9 L1001.1 445.5 L1001.6 446.0 L1002.1 446.5 L1002.6 447.1 L1003.1 447.6 L1003.6 448.1 L1004.1 448.7 L1004.6 449.2 L1005.1 449.8 L1005.5 450.3 L1006.0 450.8 L1006.5 451.4 L1007.0 451.9 L1007.5 452.4 L1008.0 453.0 L1008.5 453.5 L1009.0 454.0 L1009.5 454.6 L1010.0 455.1 L1010.5 455.6 L1011.0 456.2 L1011.5 456.7 L1012.0 457.3 L1012.5 457.9 L1013.0 458.8 L1013.5 468.1 L1013.5 468.1 L1013.0 469.9 L1012.5 470.7 L1012.0 471.3 L1011.5 471.8 L1011.0 472.2 L1010.5 472.6 L1010.0 473.0 L1009.5 473.3 L1009.0 473.6 L1008.5 473.9 L1008.0 474.2 L1007.5 474.5 L1007.0 474.7 L1006.5 475.0 L1006.0 475.2 L1005.5 475.5 L1005.1 475.7 L1004.6 475.9 L1004.1 476.1 L1003.6 476.3 L1003.1 476.5 L1002.6 476.7 L1002.1 476.9 L1001.6 477.1 L1001.1 477.3 L1000.6 477.4 L1000.1 477.6 L999.6 477.8 L999.1 478.0 L998.6 478.1 L998.1 478.3 L997.6 478.4 L997.1 478.6 L996.6 478.7 L996.1 478.9 L995.6 479.0 L995.1 479.2 L994.6 479.3 L994.1 479.4 L993.6 479.6 L993.1 479.7 L992.6 479.8 L992.1 480.0 L991.6 480.1 L991.1 480.2 L990.6 480.3 L990.1 480.5 L989.6 480.6 L989.1 480.7 L988.6 480.8 L988.1 480.9 L987.6 481.0 L987.1 481.2 L986.6 481.3 L986.1 481.4 L985.6 481.5 L985.1 481.6 L984.6 481.7 L984.1 481.8 L983.6 481.9 L983.2 482.0 L982.7 482.1 L982.2 482.2 L981.7 482.3 L981.2 482.4 L980.7 482.5 L980.2 482.6 L979.7 482.7 L979.2 482.7 L978.7 482.8 L978.2 482.9 L977.7 483.0 L977.2 483.1 L976.7 483.2 L976.2 483.3 L975.7 483.3 L975.2 483.4 L974.7 483.5 L974.2 483.6 L973.7 483.7 L973.2 483.7 L972.7 483.8 L972.2 483.9 L971.7 484.0 L971.2 484.0 L970.7 484.1 L970.2 484.2 L969.7 484.3 L969.2 484.3 L968.7 484.4 L968.2 484.5 L967.7 484.5 L967.2 484.6 L966.7 484.7 L966.2 484.7 L965.7 484.8 L965.2 484.9 L964.7 484.9 L964.2 485.0 L963.7 485.0 L963.2 485.1 L962.7 485.2 L962.2 485.2 L961.8 485.3 L961.3 485.3 L960.8 485.4 L960.3 485.5 L959.8 485.5 L959.3 485.6 L958.8 485.6 L958.3 485.7 L957.8 485.7 L957.3 485.8 L956.8 485.8 L956.3 485.9 L955.8 485.9 L955.3 486.0 L954.8 486.0 L954.3 486.1 L953.8 486.1 L953.3 486.2 L952.8 486.2 L952.3 486.3 L951.8 486.3 L951.3 486.3 L950.8 486.4 L950.3 486.4 L949.8 486.5 L949.3 486.5 L948.8 486.6 L948.3 486.6 L947.8 486.6 L947.3 486.7 L946.8 486.7 L946.3 486.7 L945.8 486.8 L945.3 486.8 L944.8 486.9 L944.3 486.9 L943.8 486.9 L943.3 487.0 L942.8 487.0 L942.3 487.0 L941.8 487.0 L941.3 487.1 L940.8 487.1 L940.3 487.1 L939.9 487.2 L939.4 487.2 L938.9 487.2 L938.4 487.3 L937.9 487.3 L937.4 487.3 L936.9 487.3 L936.4 487.4 L935.9 487.4 L935.4 487.4 L934.9 487.4 L934.4 487.4 L933.9 487.5 L933.4 487.5 L932.9 487.5 L932.4 487.5 L931.9 487.5 L931.4 487.6 L930.9 487.6 L930.4 487.6 L929.9 487.6 L929.4 487.6 L928.9 487.7 L928.4 487.7 L927.9 487.7 L927.4 487.7 L926.9 487.7 L926.4 487.7 L925.9 487.7 L925.4 487.7 L924.9 487.8 L924.4 487.8 L923.9 487.8 L923.4 487.8 L922.9 487.8 L922.4 487.8 L921.9 487.8 L921.4 487.8 L920.9 487.8 L920.4 487.8 L919.9 487.8 L919.4 487.8 L918.9 487.8 L918.5 487.8 L918.0 487.8 L917.5 487.9 L917.0 487.9 L916.5 487.9 L916.0 487.9 L915.5 487.9 L915.0 487.9 L914.5 487.8 L914.0 487.8 L913.5 487.8 L913.0 487.8 L912.5 487.8 L912.0 487.8 L911.5 487.8 L911.0 487.8 L910.5 487.8 L910.0 487.8 L909.5 487.8 L909.0 487.8 L908.5 487.8 L908.0 487.8 L907.5 487.8 L907.0 487.7 L906.5 487.7 L906.0 487.7 L905.5 487.7 L905.0 487.7 L904.5 487.7 L904.0 487.7 L903.5 487.6 L903.0 487.6 L902.5 487.6 L902.0 487.6 L901.5 487.6 L901.0 487.5 L900.5 487.5 L900.0 487.5 L899.5 487.5 L899.0 487.5 L898.5 487.4 L898.0 487.4 L897.5 487.4 L897.0 487.4 L896.6 487.3 L896.1 487.3 L895.6 487.3 L895.1 487.3 L894.6 487.2 L894.1 487.2 L893.6 487.2 L893.1 487.1 L892.6 487.1 L892.1 487.1 L891.6 487.0 L891.1 487.0 L890.6 487.0 L890.1 486.9 L889.6 486.9 L889.1 486.8 L888.6 486.8 L888.1 486.8 L887.6 486.7 L887.1 486.7 L886.6 486.6 L886.1 486.6 L885.6 486.5 L885.1 486.5 L884.6 486.4 L884.1 486.4 L883.6 486.3 L883.1 486.3 L882.6 486.2 L882.1 486.2 L881.6 486.1 L881.1 486.1 L880.6 486.0 L880.1 486.0 L879.6 485.9 L879.1 485.8 L878.6 485.8 L878.1 485.7 L877.6 485.6 L877.1 485.6 L876.6 485.5 L876.1 485.4 L875.6 485.4 L875.2 485.3 L874.7 485.2 L874.2 485.2 L873.7 485.1 L873.2 485.0 L872.7 484.9 L872.2 484.8 L871.7 484.8 L871.2 484.7 L870.7 484.6 L870.2 484.5 L869.7 484.4 L869.2 484.3 L868.7 484.2 L868.2 484.1 L867.7 484.0 L867.2 483.9 L866.7 483.8 L866.2 483.7 L865.7 483.6 L865.2 483.5 L864.7 483.4 L864.2 483.3 L863.7 483.2 L863.2 483.1 L862.7 482.9 L862.2 482.8 L861.7 482.7 L861.2 482.6 L860.7 482.4 L860.2 482.3 L859.7 482.1 L859.2 482.0 L858.7 481.8 L858.2 481.7 L857.7 481.5 L857.2 481.4 L856.7 481.2 L856.2 481.0 L855.7 480.8 L855.2 480.6 L854.7 480.4 L854.2 480.2 L853.7 480.0 L853.3 479.8 L852.8 479.5 L852.3 479.3 L851.8 479.0 L851.3 478.7 L850.8 478.4 L850.3 478.0 L849.8 477.7 L849.3 477.2 L848.8 476.7 L848.3 476.1 L847.8 475.2 L847.3 465.9Z" fill="url(#gv)"/><path d="M847.3 465.9 L847.8 464.1 L848.3 463.3 L848.8 462.7 L849.3 462.1 L849.8 461.5 L850.3 460.9 L850.8 460.3 L851.3 459.6 L851.8 459.0 L852.3 458.4 L852.8 457.8 L853.3 457.2 L853.7 456.6 L854.2 456.0 L854.7 455.4 L855.2 454.8 L855.7 454.2 L856.2 453.5 L856.7 452.9 L857.2 452.3 L857.7 451.7 L858.2 451.1 L858.7 450.5 L859.2 449.9 L859.7 449.3 L860.2 448.7 L860.7 448.2 L861.2 447.7 L861.7 447.3 L862.2 446.8 L862.7 446.4 L863.2 445.9 L863.7 445.4 L864.2 445.0 L864.7 444.5 L865.2 444.1 L865.7 443.6 L866.2 443.1 L866.7 442.7 L867.2 442.2 L867.7 441.8 L868.2 441.3 L868.7 440.8 L869.2 440.4 L869.7 439.9 L870.2 439.5 L870.7 439.0 L871.2 438.5 L871.7 438.1 L872.2 437.6 L872.7 437.1 L873.2 436.7 L873.7 436.2 L874.2 435.8 L874.7 435.3 L875.2 434.8 L875.6 434.4 L876.1 433.9 L876.6 433.5 L877.1 433.0 L877.6 432.3 L878.1 431.5 L878.6 430.8 L879.1 430.0 L879.6 429.2 L880.1 428.5 L880.6 427.7 L881.1 427.0 L881.6 426.2 L882.1 425.4 L882.6 424.7 L883.1 423.9 L883.6 423.2 L884.1 422.4 L884.6 421.7 L885.1 420.9 L885.6 420.1 L886.1 419.4 L886.6 418.6 L887.1 417.9 L887.6 417.1 L888.1 416.3 L888.6 415.6 L889.1 414.9 L889.6 414.4 L890.1 414.0 L890.6 413.7 L891.1 413.4 L891.6 413.2 L892.1 412.9 L892.6 412.7 L893.1 412.5 L893.6 412.3 L894.1 412.1 L894.6 411.9 L895.1 411.7 L895.6 411.6 L896.1 411.4 L896.6 411.3 L897.0 411.1 L897.5 411.0 L898.0 410.8 L898.5 410.7 L899.0 410.6 L899.5 410.4 L900.0 410.3 L900.5 410.2 L901.0 410.1 L901.5 410.0 L902.0 409.9 L902.5 409.8 L903.0 409.7 L903.5 409.6 L904.0 409.5 L904.5 409.4 L905.0 409.3 L905.5 409.2 L906.0 409.1 L906.5 409.0 L907.0 409.0 L907.5 408.9 L908.0 408.8 L908.5 408.7 L909.0 408.6 L909.5 408.6 L910.0 408.5 L910.5 408.4 L911.0 408.4 L911.5 408.3 L912.0 408.2 L912.5 408.2 L913.0 408.1 L913.5 408.0 L914.0 408.0 L914.5 407.9 L915.0 407.9 L915.5 407.8 L916.0 407.8 L916.5 407.7 L917.0 407.7 L917.5 407.6 L918.0 407.6 L918.5 407.5 L918.9 407.5 L919.4 407.5 L919.9 407.4 L920.4 407.4 L920.9 407.3 L921.4 407.3 L921.9 407.3 L922.4 407.2 L922.9 407.2 L923.4 407.2 L923.9 407.1 L924.4 407.1 L924.9 407.1 L925.4 407.1 L925.9 407.0 L926.4 407.0 L926.9 407.0 L927.4 407.0 L927.9 406.9 L928.4 406.9 L928.9 406.9 L929.4 406.9 L929.9 406.9 L930.4 406.9 L930.9 406.8 L931.4 406.8 L931.9 406.8 L932.4 406.8 L932.9 406.8 L933.4 406.8 L933.9 406.8 L934.4 406.8 L934.9 406.8 L935.4 406.8 L935.9 406.8 L936.4 406.8 L936.9 406.8 L937.4 406.8 L937.9 406.8 L938.4 406.8 L938.9 406.8 L939.4 406.8 L939.9 406.8 L940.3 406.8 L940.8 406.8 L941.3 406.9 L941.8 406.9 L942.3 406.9 L942.8 406.9 L943.3 406.9 L943.8 406.9 L944.3 407.0 L944.8 407.0 L945.3 407.0 L945.8 407.0 L946.3 407.1 L946.8 407.1 L947.3 407.1 L947.8 407.2 L948.3 407.2 L948.8 407.3 L949.3 407.3 L949.8 407.3 L950.3 407.4 L950.8 407.4 L951.3 407.5 L951.8 407.5 L952.3 407.6 L952.8 407.6 L953.3 407.7 L953.8 407.7 L954.3 407.8 L954.8 407.9 L955.3 407.9 L955.8 408.0 L956.3 408.1 L956.8 408.1 L957.3 408.2 L957.8 408.3 L958.3 408.4 L958.8 408.5 L959.3 408.6 L959.8 408.7 L960.3 408.8 L960.8 408.9 L961.3 409.0 L961.8 409.1 L962.2 409.2 L962.7 409.4 L963.2 409.5 L963.7 409.7 L964.2 409.8 L964.7 410.0 L965.2 410.2 L965.7 410.3 L966.2 410.6 L966.7 410.8 L967.2 411.0 L967.7 411.3 L968.2 411.7 L968.7 412.1 L969.2 412.8 L969.7 413.4 L970.2 414.1 L970.7 414.8 L971.2 415.4 L971.7 416.1 L972.2 416.8 L972.7 417.4 L973.2 418.1 L973.7 418.7 L974.2 419.4 L974.7 420.1 L975.2 420.8 L975.7 421.4 L976.2 422.1 L976.7 422.7 L977.2 423.4 L977.7 424.1 L978.2 424.8 L978.7 425.4 L979.2 426.1 L979.7 426.7 L980.2 427.4 L980.7 428.1 L981.2 428.7 L981.7 429.3 L982.2 429.7 L982.7 430.1 L983.2 430.5 L983.6 430.9 L984.1 431.3 L984.6 431.7 L985.1 432.1 L985.6 432.5 L986.1 432.9 L986.6 433.3 L987.1 433.7 L987.6 434.1 L988.1 434.5 L988.6 434.9 L989.1 435.4 L989.6 435.8 L990.1 436.2 L990.6 436.6 L991.1 437.0 L991.6 437.4 L992.1 437.8 L992.6 438.2 L993.1 438.6 L993.6 439.0 L994.1 439.4 L994.6 439.8 L995.1 440.2 L995.6 440.6 L996.1 441.0 L996.6 441.4 L997.1 441.8 L997.6 442.2 L998.1 442.6 L998.6 443.0 L999.1 443.4 L999.6 443.9 L1000.1 444.4 L1000.6 444.9 L1001.1 445.5 L1001.6 446.0 L1002.1 446.5 L1002.6 447.1 L1003.1 447.6 L1003.6 448.1 L1004.1 448.7 L1004.6 449.2 L1005.1 449.8 L1005.5 450.3 L1006.0 450.8 L1006.5 451.4 L1007.0 451.9 L1007.5 452.4 L1008.0 453.0 L1008.5 453.5 L1009.0 454.0 L1009.5 454.6 L1010.0 455.1 L1010.5 455.6 L1011.0 456.2 L1011.5 456.7 L1012.0 457.3 L1012.5 457.9 L1013.0 458.8 L1013.5 468.1 L1013.5 468.1 L1013.0 469.9 L1012.5 470.7 L1012.0 471.3 L1011.5 471.8 L1011.0 472.2 L1010.5 472.6 L1010.0 473.0 L1009.5 473.3 L1009.0 473.6 L1008.5 473.9 L1008.0 474.2 L1007.5 474.5 L1007.0 474.7 L1006.5 475.0 L1006.0 475.2 L1005.5 475.5 L1005.1 475.7 L1004.6 475.9 L1004.1 476.1 L1003.6 476.3 L1003.1 476.5 L1002.6 476.7 L1002.1 476.9 L1001.6 477.1 L1001.1 477.3 L1000.6 477.4 L1000.1 477.6 L999.6 477.8 L999.1 478.0 L998.6 478.1 L998.1 478.3 L997.6 478.4 L997.1 478.6 L996.6 478.7 L996.1 478.9 L995.6 479.0 L995.1 479.2 L994.6 479.3 L994.1 479.4 L993.6 479.6 L993.1 479.7 L992.6 479.8 L992.1 480.0 L991.6 480.1 L991.1 480.2 L990.6 480.3 L990.1 480.5 L989.6 480.6 L989.1 480.7 L988.6 480.8 L988.1 480.9 L987.6 481.0 L987.1 481.2 L986.6 481.3 L986.1 481.4 L985.6 481.5 L985.1 481.6 L984.6 481.7 L984.1 481.8 L983.6 481.9 L983.2 482.0 L982.7 482.1 L982.2 482.2 L981.7 482.3 L981.2 482.4 L980.7 482.5 L980.2 482.6 L979.7 482.7 L979.2 482.7 L978.7 482.8 L978.2 482.9 L977.7 483.0 L977.2 483.1 L976.7 483.2 L976.2 483.3 L975.7 483.3 L975.2 483.4 L974.7 483.5 L974.2 483.6 L973.7 483.7 L973.2 483.7 L972.7 483.8 L972.2 483.9 L971.7 484.0 L971.2 484.0 L970.7 484.1 L970.2 484.2 L969.7 484.3 L969.2 484.3 L968.7 484.4 L968.2 484.5 L967.7 484.5 L967.2 484.6 L966.7 484.7 L966.2 484.7 L965.7 484.8 L965.2 484.9 L964.7 484.9 L964.2 485.0 L963.7 485.0 L963.2 485.1 L962.7 485.2 L962.2 485.2 L961.8 485.3 L961.3 485.3 L960.8 485.4 L960.3 485.5 L959.8 485.5 L959.3 485.6 L958.8 485.6 L958.3 485.7 L957.8 485.7 L957.3 485.8 L956.8 485.8 L956.3 485.9 L955.8 485.9 L955.3 486.0 L954.8 486.0 L954.3 486.1 L953.8 486.1 L953.3 486.2 L952.8 486.2 L952.3 486.3 L951.8 486.3 L951.3 486.3 L950.8 486.4 L950.3 486.4 L949.8 486.5 L949.3 486.5 L948.8 486.6 L948.3 486.6 L947.8 486.6 L947.3 486.7 L946.8 486.7 L946.3 486.7 L945.8 486.8 L945.3 486.8 L944.8 486.9 L944.3 486.9 L943.8 486.9 L943.3 487.0 L942.8 487.0 L942.3 487.0 L941.8 487.0 L941.3 487.1 L940.8 487.1 L940.3 487.1 L939.9 487.2 L939.4 487.2 L938.9 487.2 L938.4 487.3 L937.9 487.3 L937.4 487.3 L936.9 487.3 L936.4 487.4 L935.9 487.4 L935.4 487.4 L934.9 487.4 L934.4 487.4 L933.9 487.5 L933.4 487.5 L932.9 487.5 L932.4 487.5 L931.9 487.5 L931.4 487.6 L930.9 487.6 L930.4 487.6 L929.9 487.6 L929.4 487.6 L928.9 487.7 L928.4 487.7 L927.9 487.7 L927.4 487.7 L926.9 487.7 L926.4 487.7 L925.9 487.7 L925.4 487.7 L924.9 487.8 L924.4 487.8 L923.9 487.8 L923.4 487.8 L922.9 487.8 L922.4 487.8 L921.9 487.8 L921.4 487.8 L920.9 487.8 L920.4 487.8 L919.9 487.8 L919.4 487.8 L918.9 487.8 L918.5 487.8 L918.0 487.8 L917.5 487.9 L917.0 487.9 L916.5 487.9 L916.0 487.9 L915.5 487.9 L915.0 487.9 L914.5 487.8 L914.0 487.8 L913.5 487.8 L913.0 487.8 L912.5 487.8 L912.0 487.8 L911.5 487.8 L911.0 487.8 L910.5 487.8 L910.0 487.8 L909.5 487.8 L909.0 487.8 L908.5 487.8 L908.0 487.8 L907.5 487.8 L907.0 487.7 L906.5 487.7 L906.0 487.7 L905.5 487.7 L905.0 487.7 L904.5 487.7 L904.0 487.7 L903.5 487.6 L903.0 487.6 L902.5 487.6 L902.0 487.6 L901.5 487.6 L901.0 487.5 L900.5 487.5 L900.0 487.5 L899.5 487.5 L899.0 487.5 L898.5 487.4 L898.0 487.4 L897.5 487.4 L897.0 487.4 L896.6 487.3 L896.1 487.3 L895.6 487.3 L895.1 487.3 L894.6 487.2 L894.1 487.2 L893.6 487.2 L893.1 487.1 L892.6 487.1 L892.1 487.1 L891.6 487.0 L891.1 487.0 L890.6 487.0 L890.1 486.9 L889.6 486.9 L889.1 486.8 L888.6 486.8 L888.1 486.8 L887.6 486.7 L887.1 486.7 L886.6 486.6 L886.1 486.6 L885.6 486.5 L885.1 486.5 L884.6 486.4 L884.1 486.4 L883.6 486.3 L883.1 486.3 L882.6 486.2 L882.1 486.2 L881.6 486.1 L881.1 486.1 L880.6 486.0 L880.1 486.0 L879.6 485.9 L879.1 485.8 L878.6 485.8 L878.1 485.7 L877.6 485.6 L877.1 485.6 L876.6 485.5 L876.1 485.4 L875.6 485.4 L875.2 485.3 L874.7 485.2 L874.2 485.2 L873.7 485.1 L873.2 485.0 L872.7 484.9 L872.2 484.8 L871.7 484.8 L871.2 484.7 L870.7 484.6 L870.2 484.5 L869.7 484.4 L869.2 484.3 L868.7 484.2 L868.2 484.1 L867.7 484.0 L867.2 483.9 L866.7 483.8 L866.2 483.7 L865.7 483.6 L865.2 483.5 L864.7 483.4 L864.2 483.3 L863.7 483.2 L863.2 483.1 L862.7 482.9 L862.2 482.8 L861.7 482.7 L861.2 482.6 L860.7 482.4 L860.2 482.3 L859.7 482.1 L859.2 482.0 L858.7 481.8 L858.2 481.7 L857.7 481.5 L857.2 481.4 L856.7 481.2 L856.2 481.0 L855.7 480.8 L855.2 480.6 L854.7 480.4 L854.2 480.2 L853.7 480.0 L853.3 479.8 L852.8 479.5 L852.3 479.3 L851.8 479.0 L851.3 478.7 L850.8 478.4 L850.3 478.0 L849.8 477.7 L849.3 477.2 L848.8 476.7 L848.3 476.1 L847.8 475.2 L847.3 465.9Z" fill="url(#gsh)"/><g clip-path="url(#clip2)"><path d="M969.2 412.9L979.5 427.8M969.2 412.9L980.5 434.0M963.2 418.1L980.5 434.0M963.2 418.1L970.0 438.4M942.1 422.2L970.0 438.4M942.1 422.2L943.3 442.7M919.0 423.2L943.3 442.7M919.0 423.2L911.6 443.6M919.0 423.2L891.0 441.6M897.3 421.2L891.0 441.6M897.3 421.2L877.4 436.9M888.4 416.1L877.4 436.9M888.4 416.1L878.9 431.6M979.5 427.8L1000.8 446.1M980.5 434.0L1000.8 446.1M980.5 434.0L997.1 451.2M970.0 438.4L997.1 451.2M970.0 438.4L976.8 458.0M970.0 438.4L957.1 461.2M943.3 442.7L957.1 461.2M943.3 442.7L926.4 463.3M943.3 442.7L906.1 463.2M911.6 443.6L906.1 463.2M911.6 443.6L880.9 461.0M891.0 441.6L880.9 461.0M891.0 441.6L865.4 457.2M877.4 436.9L865.4 457.2M877.4 436.9L858.9 451.4M878.9 431.6L858.9 451.4M993.7 440.6L1012.6 458.0M1000.8 446.1L1012.6 458.0M1000.8 446.1L1012.7 462.1M997.1 451.2L1012.7 462.1M997.1 451.2L1006.0 467.2M997.1 451.2L991.2 472.1M976.8 458.0L991.2 472.1M976.8 458.0L971.8 475.9M957.1 461.2L971.8 475.9M957.1 461.2L944.9 478.8M926.4 463.3L944.9 478.8M926.4 463.3L913.8 479.8M906.1 463.2L913.8 479.8M906.1 463.2L890.1 478.9M906.1 463.2L874.1 477.2M880.9 461.0L874.1 477.2M880.9 461.0L856.9 473.3M865.4 457.2L856.9 473.3M865.4 457.2L848.0 468.0M858.9 451.4L848.0 468.0M858.9 451.4L848.8 462.7M864.7 445.6L848.8 462.7M1012.6 458.0L1010.2 463.6M1012.6 458.0L1013.5 468.4M1012.7 462.1L1013.5 468.4M1012.7 462.1L1009.6 473.2M1006.0 467.2L1009.6 473.2M1006.0 467.2L998.9 478.0M991.2 472.1L998.9 478.0M991.2 472.1L979.7 482.7M971.8 475.9L979.7 482.7M971.8 475.9L959.6 485.5M944.9 478.8L959.6 485.5M944.9 478.8L932.0 487.5M913.8 479.8L932.0 487.5M913.8 479.8L902.4 487.6M890.1 478.9L902.4 487.6M890.1 478.9L884.8 486.5M874.1 477.2L884.8 486.5M874.1 477.2L863.7 483.2M856.9 473.3L863.7 483.2M856.9 473.3L852.1 479.2M848.0 468.0L852.1 479.2M848.0 468.0L847.5 474.0M848.8 462.7L847.5 474.0M848.8 462.7L850.3 469.5" stroke="#183020" stroke-opacity=".85" stroke-width="1" fill="none"/><path d="M982.4 431.1 L982.3 431.8 L982.0 432.5 L981.4 433.2 L980.6 434.0 L979.6 434.7 L978.4 435.3 L976.9 436.0 L975.3 436.7 L973.5 437.3 L971.5 438.0 L969.3 438.6 L966.9 439.2 L964.4 439.7 L961.7 440.3 L958.9 440.8 L955.9 441.3 L952.9 441.7 L949.7 442.1 L946.4 442.4 L943.1 442.8 L939.7 443.0 L936.3 443.3 L932.9 443.5 L929.4 443.6 L925.9 443.7 L922.5 443.8 L919.1 443.8 L915.7 443.7 L912.4 443.6 L909.1 443.5 L906.0 443.3 L902.9 443.1 L900.0 442.8 L897.1 442.5 L894.5 442.2 L891.9 441.8 L889.6 441.4 L887.4 440.9 L885.3 440.4 L883.5 439.9 L881.9 439.4 L880.4 438.8 L879.2 438.2 L878.2 437.5 L877.4 436.9 L876.9 436.2 L876.5 435.5 L876.4 434.9" stroke="#183020" stroke-opacity=".85" stroke-width="1" fill="none"/><path d="M1000.9 446.5 L1000.7 447.4 L1000.3 448.4 L999.5 449.3 L998.5 450.3 L997.1 451.2 L995.5 452.1 L993.6 453.1 L991.4 453.9 L988.9 454.8 L986.2 455.7 L983.3 456.5 L980.1 457.3 L976.7 458.0 L973.1 458.8 L969.3 459.4 L965.4 460.1 L961.3 460.6 L957.0 461.2 L952.7 461.6 L948.2 462.1 L943.7 462.4 L939.1 462.8 L934.5 463.0 L929.9 463.2 L925.2 463.3 L920.6 463.4 L916.0 463.4 L911.5 463.4 L907.1 463.2 L902.7 463.1 L898.5 462.8 L894.4 462.5 L890.4 462.2 L886.7 461.8 L883.1 461.3 L879.7 460.8 L876.5 460.2 L873.5 459.6 L870.8 459.0 L868.4 458.3 L866.2 457.5 L864.3 456.7 L862.6 455.9 L861.3 455.1 L860.2 454.2 L859.5 453.3 L859.0 452.4 L858.9 451.5" stroke="#183020" stroke-opacity=".85" stroke-width="1" fill="none"/><path d="M1013.3 460.1 L1013.1 461.2 L1012.6 462.3 L1011.7 463.4 L1010.5 464.5 L1008.9 465.6 L1007.0 466.7 L1004.7 467.7 L1002.2 468.8 L999.3 469.8 L996.1 470.8 L992.7 471.8 L989.0 472.7 L985.0 473.6 L980.8 474.4 L976.4 475.2 L971.8 475.9 L967.0 476.6 L962.0 477.2 L957.0 477.8 L951.8 478.3 L946.5 478.7 L941.1 479.1 L935.7 479.4 L930.3 479.6 L924.9 479.8 L919.4 479.8 L914.1 479.8 L908.8 479.8 L903.6 479.7 L898.5 479.4 L893.6 479.2 L888.8 478.8 L884.2 478.4 L879.8 477.9 L875.6 477.4 L871.6 476.8 L867.9 476.1 L864.4 475.4 L861.3 474.6 L858.4 473.8 L855.8 472.9 L853.6 472.0 L851.7 471.1 L850.1 470.1 L848.9 469.1 L848.0 468.0 L847.5 467.0 L847.3 465.9" stroke="#183020" stroke-opacity=".85" stroke-width="1" fill="none"/><path d="M969.4 413.6 L969.3 414.1 L969.0 414.7 L968.6 415.2 L968.0 415.7 L967.2 416.3 L966.3 416.8 L965.2 417.3 L964.0 417.8 L962.6 418.3 L961.0 418.8 L959.3 419.3 L957.5 419.7 L955.6 420.2 L953.5 420.6 L951.4 420.9 L949.1 421.3 L946.8 421.6 L944.4 421.9 L941.9 422.2 L939.4 422.5 L936.8 422.7 L934.2 422.8 L931.5 423.0 L928.9 423.1 L926.2 423.2 L923.6 423.2 L921.0 423.2 L918.4 423.2 L915.9 423.1 L913.4 423.0 L911.0 422.9 L908.6 422.7 L906.4 422.5 L904.2 422.3 L902.2 422.0 L900.2 421.7 L898.4 421.4 L896.8 421.1 L895.2 420.7 L893.8 420.3 L892.6 419.9 L891.5 419.4 L890.5 418.9 L889.8 418.5 L889.2 418.0 L888.7 417.5 L888.5 416.9 L888.4 416.4" stroke="#183030" stroke-width="1.2" fill="none"/><path d="M1013.3 460.1 L1013.1 461.2 L1012.6 462.3 L1011.7 463.4 L1010.5 464.5 L1008.9 465.6 L1007.0 466.7 L1004.7 467.7 L1002.2 468.8 L999.3 469.8 L996.1 470.8 L992.7 471.8 L989.0 472.7 L985.0 473.6 L980.8 474.4 L976.4 475.2 L971.8 475.9 L967.0 476.6 L962.0 477.2 L957.0 477.8 L951.8 478.3 L946.5 478.7 L941.1 479.1 L935.7 479.4 L930.3 479.6 L924.9 479.8 L919.4 479.8 L914.1 479.8 L908.8 479.8 L903.6 479.7 L898.5 479.4 L893.6 479.2 L888.8 478.8 L884.2 478.4 L879.8 477.9 L875.6 477.4 L871.6 476.8 L867.9 476.1 L864.4 475.4 L861.3 474.6 L858.4 473.8 L855.8 472.9 L853.6 472.0 L851.7 471.1 L850.1 470.1 L848.9 469.1 L848.0 468.0 L847.5 467.0 L847.3 465.9" stroke="#183030" stroke-width="1.2" fill="none"/><path d="M1013.5 468.1 L1013.3 469.2 L1012.8 470.3 L1011.9 471.4 L1010.7 472.5 L1009.1 473.6 L1007.2 474.7 L1005.0 475.7 L1002.4 476.8 L999.5 477.8 L996.4 478.8 L992.9 479.8 L989.2 480.7 L985.2 481.6 L981.0 482.4 L976.6 483.2 L972.0 483.9 L967.2 484.6 L962.3 485.2 L957.2 485.8 L952.0 486.3 L946.7 486.7 L941.3 487.1 L935.9 487.4 L930.5 487.6 L925.1 487.8 L919.7 487.8 L914.3 487.8 L909.0 487.8 L903.8 487.7 L898.7 487.4 L893.8 487.2 L889.0 486.8 L884.4 486.4 L880.0 485.9 L875.8 485.4 L871.8 484.8 L868.1 484.1 L864.7 483.4 L861.5 482.6 L858.6 481.8 L856.1 480.9 L853.8 480.0 L851.9 479.1 L850.3 478.1 L849.1 477.1 L848.2 476.0 L847.7 475.0 L847.5 473.9" stroke="#183030" stroke-width="1.2" fill="none"/></g><path d="M847.3 465.9 L847.8 464.1 L848.3 463.3 L848.8 462.7 L849.3 462.1 L849.8 461.5 L850.3 460.9 L850.8 460.3 L851.3 459.6 L851.8 459.0 L852.3 458.4 L852.8 457.8 L853.3 457.2 L853.7 456.6 L854.2 456.0 L854.7 455.4 L855.2 454.8 L855.7 454.2 L856.2 453.5 L856.7 452.9 L857.2 452.3 L857.7 451.7 L858.2 451.1 L858.7 450.5 L859.2 449.9 L859.7 449.3 L860.2 448.7 L860.7 448.2 L861.2 447.7 L861.7 447.3 L862.2 446.8 L862.7 446.4 L863.2 445.9 L863.7 445.4 L864.2 445.0 L864.7 444.5 L865.2 444.1 L865.7 443.6 L866.2 443.1 L866.7 442.7 L867.2 442.2 L867.7 441.8 L868.2 441.3 L868.7 440.8 L869.2 440.4 L869.7 439.9 L870.2 439.5 L870.7 439.0 L871.2 438.5 L871.7 438.1 L872.2 437.6 L872.7 437.1 L873.2 436.7 L873.7 436.2 L874.2 435.8 L874.7 435.3 L875.2 434.8 L875.6 434.4 L876.1 433.9 L876.6 433.5 L877.1 433.0 L877.6 432.3 L878.1 431.5 L878.6 430.8 L879.1 430.0 L879.6 429.2 L880.1 428.5 L880.6 427.7 L881.1 427.0 L881.6 426.2 L882.1 425.4 L882.6 424.7 L883.1 423.9 L883.6 423.2 L884.1 422.4 L884.6 421.7 L885.1 420.9 L885.6 420.1 L886.1 419.4 L886.6 418.6 L887.1 417.9 L887.6 417.1 L888.1 416.3 L888.6 415.6 L889.1 414.9 L889.6 414.4 L890.1 414.0 L890.6 413.7 L891.1 413.4 L891.6 413.2 L892.1 412.9 L892.6 412.7 L893.1 412.5 L893.6 412.3 L894.1 412.1 L894.6 411.9 L895.1 411.7 L895.6 411.6 L896.1 411.4 L896.6 411.3 L897.0 411.1 L897.5 411.0 L898.0 410.8 L898.5 410.7 L899.0 410.6 L899.5 410.4 L900.0 410.3 L900.5 410.2 L901.0 410.1 L901.5 410.0 L902.0 409.9 L902.5 409.8 L903.0 409.7 L903.5 409.6 L904.0 409.5 L904.5 409.4 L905.0 409.3 L905.5 409.2 L906.0 409.1 L906.5 409.0 L907.0 409.0 L907.5 408.9 L908.0 408.8 L908.5 408.7 L909.0 408.6 L909.5 408.6 L910.0 408.5 L910.5 408.4 L911.0 408.4 L911.5 408.3 L912.0 408.2 L912.5 408.2 L913.0 408.1 L913.5 408.0 L914.0 408.0 L914.5 407.9 L915.0 407.9 L915.5 407.8 L916.0 407.8 L916.5 407.7 L917.0 407.7 L917.5 407.6 L918.0 407.6 L918.5 407.5 L918.9 407.5 L919.4 407.5 L919.9 407.4 L920.4 407.4 L920.9 407.3 L921.4 407.3 L921.9 407.3 L922.4 407.2 L922.9 407.2 L923.4 407.2 L923.9 407.1 L924.4 407.1 L924.9 407.1 L925.4 407.1 L925.9 407.0 L926.4 407.0 L926.9 407.0 L927.4 407.0 L927.9 406.9 L928.4 406.9 L928.9 406.9 L929.4 406.9 L929.9 406.9 L930.4 406.9 L930.9 406.8 L931.4 406.8 L931.9 406.8 L932.4 406.8 L932.9 406.8 L933.4 406.8 L933.9 406.8 L934.4 406.8 L934.9 406.8 L935.4 406.8 L935.9 406.8 L936.4 406.8 L936.9 406.8 L937.4 406.8 L937.9 406.8 L938.4 406.8 L938.9 406.8 L939.4 406.8 L939.9 406.8 L940.3 406.8 L940.8 406.8 L941.3 406.9 L941.8 406.9 L942.3 406.9 L942.8 406.9 L943.3 406.9 L943.8 406.9 L944.3 407.0 L944.8 407.0 L945.3 407.0 L945.8 407.0 L946.3 407.1 L946.8 407.1 L947.3 407.1 L947.8 407.2 L948.3 407.2 L948.8 407.3 L949.3 407.3 L949.8 407.3 L950.3 407.4 L950.8 407.4 L951.3 407.5 L951.8 407.5 L952.3 407.6 L952.8 407.6 L953.3 407.7 L953.8 407.7 L954.3 407.8 L954.8 407.9 L955.3 407.9 L955.8 408.0 L956.3 408.1 L956.8 408.1 L957.3 408.2 L957.8 408.3 L958.3 408.4 L958.8 408.5 L959.3 408.6 L959.8 408.7 L960.3 408.8 L960.8 408.9 L961.3 409.0 L961.8 409.1 L962.2 409.2 L962.7 409.4 L963.2 409.5 L963.7 409.7 L964.2 409.8 L964.7 410.0 L965.2 410.2 L965.7 410.3 L966.2 410.6 L966.7 410.8 L967.2 411.0 L967.7 411.3 L968.2 411.7 L968.7 412.1 L969.2 412.8 L969.7 413.4 L970.2 414.1 L970.7 414.8 L971.2 415.4 L971.7 416.1 L972.2 416.8 L972.7 417.4 L973.2 418.1 L973.7 418.7 L974.2 419.4 L974.7 420.1 L975.2 420.8 L975.7 421.4 L976.2 422.1 L976.7 422.7 L977.2 423.4 L977.7 424.1 L978.2 424.8 L978.7 425.4 L979.2 426.1 L979.7 426.7 L980.2 427.4 L980.7 428.1 L981.2 428.7 L981.7 429.3 L982.2 429.7 L982.7 430.1 L983.2 430.5 L983.6 430.9 L984.1 431.3 L984.6 431.7 L985.1 432.1 L985.6 432.5 L986.1 432.9 L986.6 433.3 L987.1 433.7 L987.6 434.1 L988.1 434.5 L988.6 434.9 L989.1 435.4 L989.6 435.8 L990.1 436.2 L990.6 436.6 L991.1 437.0 L991.6 437.4 L992.1 437.8 L992.6 438.2 L993.1 438.6 L993.6 439.0 L994.1 439.4 L994.6 439.8 L995.1 440.2 L995.6 440.6 L996.1 441.0 L996.6 441.4 L997.1 441.8 L997.6 442.2 L998.1 442.6 L998.6 443.0 L999.1 443.4 L999.6 443.9 L1000.1 444.4 L1000.6 444.9 L1001.1 445.5 L1001.6 446.0 L1002.1 446.5 L1002.6 447.1 L1003.1 447.6 L1003.6 448.1 L1004.1 448.7 L1004.6 449.2 L1005.1 449.8 L1005.5 450.3 L1006.0 450.8 L1006.5 451.4 L1007.0 451.9 L1007.5 452.4 L1008.0 453.0 L1008.5 453.5 L1009.0 454.0 L1009.5 454.6 L1010.0 455.1 L1010.5 455.6 L1011.0 456.2 L1011.5 456.7 L1012.0 457.3 L1012.5 457.9 L1013.0 458.8 L1013.5 468.1 L1013.5 468.1 L1013.0 469.9 L1012.5 470.7 L1012.0 471.3 L1011.5 471.8 L1011.0 472.2 L1010.5 472.6 L1010.0 473.0 L1009.5 473.3 L1009.0 473.6 L1008.5 473.9 L1008.0 474.2 L1007.5 474.5 L1007.0 474.7 L1006.5 475.0 L1006.0 475.2 L1005.5 475.5 L1005.1 475.7 L1004.6 475.9 L1004.1 476.1 L1003.6 476.3 L1003.1 476.5 L1002.6 476.7 L1002.1 476.9 L1001.6 477.1 L1001.1 477.3 L1000.6 477.4 L1000.1 477.6 L999.6 477.8 L999.1 478.0 L998.6 478.1 L998.1 478.3 L997.6 478.4 L997.1 478.6 L996.6 478.7 L996.1 478.9 L995.6 479.0 L995.1 479.2 L994.6 479.3 L994.1 479.4 L993.6 479.6 L993.1 479.7 L992.6 479.8 L992.1 480.0 L991.6 480.1 L991.1 480.2 L990.6 480.3 L990.1 480.5 L989.6 480.6 L989.1 480.7 L988.6 480.8 L988.1 480.9 L987.6 481.0 L987.1 481.2 L986.6 481.3 L986.1 481.4 L985.6 481.5 L985.1 481.6 L984.6 481.7 L984.1 481.8 L983.6 481.9 L983.2 482.0 L982.7 482.1 L982.2 482.2 L981.7 482.3 L981.2 482.4 L980.7 482.5 L980.2 482.6 L979.7 482.7 L979.2 482.7 L978.7 482.8 L978.2 482.9 L977.7 483.0 L977.2 483.1 L976.7 483.2 L976.2 483.3 L975.7 483.3 L975.2 483.4 L974.7 483.5 L974.2 483.6 L973.7 483.7 L973.2 483.7 L972.7 483.8 L972.2 483.9 L971.7 484.0 L971.2 484.0 L970.7 484.1 L970.2 484.2 L969.7 484.3 L969.2 484.3 L968.7 484.4 L968.2 484.5 L967.7 484.5 L967.2 484.6 L966.7 484.7 L966.2 484.7 L965.7 484.8 L965.2 484.9 L964.7 484.9 L964.2 485.0 L963.7 485.0 L963.2 485.1 L962.7 485.2 L962.2 485.2 L961.8 485.3 L961.3 485.3 L960.8 485.4 L960.3 485.5 L959.8 485.5 L959.3 485.6 L958.8 485.6 L958.3 485.7 L957.8 485.7 L957.3 485.8 L956.8 485.8 L956.3 485.9 L955.8 485.9 L955.3 486.0 L954.8 486.0 L954.3 486.1 L953.8 486.1 L953.3 486.2 L952.8 486.2 L952.3 486.3 L951.8 486.3 L951.3 486.3 L950.8 486.4 L950.3 486.4 L949.8 486.5 L949.3 486.5 L948.8 486.6 L948.3 486.6 L947.8 486.6 L947.3 486.7 L946.8 486.7 L946.3 486.7 L945.8 486.8 L945.3 486.8 L944.8 486.9 L944.3 486.9 L943.8 486.9 L943.3 487.0 L942.8 487.0 L942.3 487.0 L941.8 487.0 L941.3 487.1 L940.8 487.1 L940.3 487.1 L939.9 487.2 L939.4 487.2 L938.9 487.2 L938.4 487.3 L937.9 487.3 L937.4 487.3 L936.9 487.3 L936.4 487.4 L935.9 487.4 L935.4 487.4 L934.9 487.4 L934.4 487.4 L933.9 487.5 L933.4 487.5 L932.9 487.5 L932.4 487.5 L931.9 487.5 L931.4 487.6 L930.9 487.6 L930.4 487.6 L929.9 487.6 L929.4 487.6 L928.9 487.7 L928.4 487.7 L927.9 487.7 L927.4 487.7 L926.9 487.7 L926.4 487.7 L925.9 487.7 L925.4 487.7 L924.9 487.8 L924.4 487.8 L923.9 487.8 L923.4 487.8 L922.9 487.8 L922.4 487.8 L921.9 487.8 L921.4 487.8 L920.9 487.8 L920.4 487.8 L919.9 487.8 L919.4 487.8 L918.9 487.8 L918.5 487.8 L918.0 487.8 L917.5 487.9 L917.0 487.9 L916.5 487.9 L916.0 487.9 L915.5 487.9 L915.0 487.9 L914.5 487.8 L914.0 487.8 L913.5 487.8 L913.0 487.8 L912.5 487.8 L912.0 487.8 L911.5 487.8 L911.0 487.8 L910.5 487.8 L910.0 487.8 L909.5 487.8 L909.0 487.8 L908.5 487.8 L908.0 487.8 L907.5 487.8 L907.0 487.7 L906.5 487.7 L906.0 487.7 L905.5 487.7 L905.0 487.7 L904.5 487.7 L904.0 487.7 L903.5 487.6 L903.0 487.6 L902.5 487.6 L902.0 487.6 L901.5 487.6 L901.0 487.5 L900.5 487.5 L900.0 487.5 L899.5 487.5 L899.0 487.5 L898.5 487.4 L898.0 487.4 L897.5 487.4 L897.0 487.4 L896.6 487.3 L896.1 487.3 L895.6 487.3 L895.1 487.3 L894.6 487.2 L894.1 487.2 L893.6 487.2 L893.1 487.1 L892.6 487.1 L892.1 487.1 L891.6 487.0 L891.1 487.0 L890.6 487.0 L890.1 486.9 L889.6 486.9 L889.1 486.8 L888.6 486.8 L888.1 486.8 L887.6 486.7 L887.1 486.7 L886.6 486.6 L886.1 486.6 L885.6 486.5 L885.1 486.5 L884.6 486.4 L884.1 486.4 L883.6 486.3 L883.1 486.3 L882.6 486.2 L882.1 486.2 L881.6 486.1 L881.1 486.1 L880.6 486.0 L880.1 486.0 L879.6 485.9 L879.1 485.8 L878.6 485.8 L878.1 485.7 L877.6 485.6 L877.1 485.6 L876.6 485.5 L876.1 485.4 L875.6 485.4 L875.2 485.3 L874.7 485.2 L874.2 485.2 L873.7 485.1 L873.2 485.0 L872.7 484.9 L872.2 484.8 L871.7 484.8 L871.2 484.7 L870.7 484.6 L870.2 484.5 L869.7 484.4 L869.2 484.3 L868.7 484.2 L868.2 484.1 L867.7 484.0 L867.2 483.9 L866.7 483.8 L866.2 483.7 L865.7 483.6 L865.2 483.5 L864.7 483.4 L864.2 483.3 L863.7 483.2 L863.2 483.1 L862.7 482.9 L862.2 482.8 L861.7 482.7 L861.2 482.6 L860.7 482.4 L860.2 482.3 L859.7 482.1 L859.2 482.0 L858.7 481.8 L858.2 481.7 L857.7 481.5 L857.2 481.4 L856.7 481.2 L856.2 481.0 L855.7 480.8 L855.2 480.6 L854.7 480.4 L854.2 480.2 L853.7 480.0 L853.3 479.8 L852.8 479.5 L852.3 479.3 L851.8 479.0 L851.3 478.7 L850.8 478.4 L850.3 478.0 L849.8 477.7 L849.3 477.2 L848.8 476.7 L848.3 476.1 L847.8 475.2 L847.3 465.9Z" fill="none" stroke="#1a2a3a" stroke-width="1" stroke-opacity=".8"/><path d="M886.6 337.4 L887.1 336.1 L887.6 335.6 L888.1 335.2 L888.6 334.8 L889.1 334.5 L889.6 334.3 L890.1 334.0 L890.6 333.8 L891.1 333.6 L891.6 333.4 L892.1 333.2 L892.6 333.0 L893.1 332.8 L893.6 332.6 L894.1 332.5 L894.6 332.3 L895.1 332.2 L895.6 332.0 L896.1 331.9 L896.6 331.8 L897.1 331.6 L897.6 331.5 L898.1 331.4 L898.6 331.3 L899.1 331.2 L899.6 331.0 L900.1 330.9 L900.6 330.8 L901.1 330.7 L901.6 330.6 L902.1 330.5 L902.6 330.4 L903.1 330.4 L903.6 330.3 L904.1 330.2 L904.6 330.1 L905.0 330.0 L905.5 329.9 L906.0 329.9 L906.5 329.8 L907.0 329.7 L907.5 329.6 L908.0 329.6 L908.5 329.5 L909.0 329.4 L909.5 329.4 L910.0 329.3 L910.5 329.2 L911.0 329.2 L911.5 329.1 L912.0 329.1 L912.5 329.0 L913.0 328.9 L913.5 328.9 L914.0 328.8 L914.5 328.8 L915.0 328.7 L915.5 328.7 L916.0 328.7 L916.5 328.6 L917.0 328.6 L917.5 328.5 L918.0 328.5 L918.5 328.4 L919.0 328.4 L919.5 328.4 L920.0 328.3 L920.5 328.3 L921.0 328.3 L921.5 328.2 L922.0 328.2 L922.5 328.2 L923.0 328.2 L923.5 328.1 L924.0 328.1 L924.5 328.1 L925.0 328.1 L925.5 328.0 L926.0 328.0 L926.5 328.0 L927.0 328.0 L927.5 328.0 L928.0 328.0 L928.5 327.9 L929.0 327.9 L929.5 327.9 L930.0 327.9 L930.5 327.9 L931.0 327.9 L931.5 327.9 L932.0 327.9 L932.5 327.9 L933.0 327.9 L933.5 327.9 L934.0 327.9 L934.5 327.9 L935.0 327.9 L935.5 327.9 L936.0 327.9 L936.5 327.9 L937.0 327.9 L937.5 327.9 L938.0 327.9 L938.5 327.9 L939.0 328.0 L939.5 328.0 L940.0 328.0 L940.5 328.0 L941.0 328.0 L941.5 328.1 L942.0 328.1 L942.5 328.1 L943.0 328.1 L943.5 328.2 L944.0 328.2 L944.4 328.2 L944.9 328.2 L945.4 328.3 L945.9 328.3 L946.4 328.4 L946.9 328.4 L947.4 328.4 L947.9 328.5 L948.4 328.5 L948.9 328.6 L949.4 328.6 L949.9 328.7 L950.4 328.7 L950.9 328.8 L951.4 328.9 L951.9 328.9 L952.4 329.0 L952.9 329.1 L953.4 329.1 L953.9 329.2 L954.4 329.3 L954.9 329.4 L955.4 329.4 L955.9 329.5 L956.4 329.6 L956.9 329.7 L957.4 329.8 L957.9 329.9 L958.4 330.0 L958.9 330.2 L959.4 330.3 L959.9 330.4 L960.4 330.5 L960.9 330.7 L961.4 330.8 L961.9 331.0 L962.4 331.2 L962.9 331.4 L963.4 331.6 L963.9 331.8 L964.4 332.1 L964.9 332.4 L965.4 332.7 L965.9 333.1 L966.4 333.8 L966.9 345.3 L967.4 362.4 L967.9 378.2 L968.4 389.3 L968.9 401.3 L969.4 413.6 L969.4 413.6 L968.9 414.9 L968.4 415.4 L967.9 415.8 L967.4 416.2 L966.9 416.5 L966.4 416.7 L965.9 417.0 L965.4 417.2 L964.9 417.4 L964.4 417.7 L963.9 417.8 L963.4 418.0 L962.9 418.2 L962.4 418.4 L961.9 418.5 L961.4 418.7 L960.9 418.8 L960.4 419.0 L959.9 419.1 L959.4 419.3 L958.9 419.4 L958.4 419.5 L957.9 419.6 L957.4 419.8 L956.9 419.9 L956.4 420.0 L955.9 420.1 L955.4 420.2 L954.9 420.3 L954.4 420.4 L953.9 420.5 L953.4 420.6 L952.9 420.7 L952.4 420.8 L951.9 420.9 L951.4 420.9 L950.9 421.0 L950.4 421.1 L949.9 421.2 L949.4 421.3 L948.9 421.3 L948.4 421.4 L947.9 421.5 L947.4 421.6 L946.9 421.6 L946.4 421.7 L945.9 421.7 L945.4 421.8 L944.9 421.9 L944.4 421.9 L944.0 422.0 L943.5 422.0 L943.0 422.1 L942.5 422.2 L942.0 422.2 L941.5 422.3 L941.0 422.3 L940.5 422.4 L940.0 422.4 L939.5 422.4 L939.0 422.5 L938.5 422.5 L938.0 422.6 L937.5 422.6 L937.0 422.7 L936.5 422.7 L936.0 422.7 L935.5 422.8 L935.0 422.8 L934.5 422.8 L934.0 422.9 L933.5 422.9 L933.0 422.9 L932.5 422.9 L932.0 423.0 L931.5 423.0 L931.0 423.0 L930.5 423.0 L930.0 423.1 L929.5 423.1 L929.0 423.1 L928.5 423.1 L928.0 423.1 L927.5 423.1 L927.0 423.2 L926.5 423.2 L926.0 423.2 L925.5 423.2 L925.0 423.2 L924.5 423.2 L924.0 423.2 L923.5 423.2 L923.0 423.2 L922.5 423.2 L922.0 423.2 L921.5 423.2 L921.0 423.2 L920.5 423.2 L920.0 423.2 L919.5 423.2 L919.0 423.2 L918.5 423.2 L918.0 423.2 L917.5 423.2 L917.0 423.2 L916.5 423.1 L916.0 423.1 L915.5 423.1 L915.0 423.1 L914.5 423.1 L914.0 423.1 L913.5 423.0 L913.0 423.0 L912.5 423.0 L912.0 423.0 L911.5 422.9 L911.0 422.9 L910.5 422.9 L910.0 422.8 L909.5 422.8 L909.0 422.8 L908.5 422.7 L908.0 422.7 L907.5 422.6 L907.0 422.6 L906.5 422.5 L906.0 422.5 L905.5 422.4 L905.0 422.4 L904.6 422.3 L904.1 422.3 L903.6 422.2 L903.1 422.1 L902.6 422.1 L902.1 422.0 L901.6 421.9 L901.1 421.9 L900.6 421.8 L900.1 421.7 L899.6 421.6 L899.1 421.5 L898.6 421.4 L898.1 421.3 L897.6 421.2 L897.1 421.1 L896.6 421.0 L896.1 420.9 L895.6 420.8 L895.1 420.6 L894.6 420.5 L894.1 420.4 L893.6 420.2 L893.1 420.0 L892.6 419.9 L892.1 419.7 L891.6 419.5 L891.1 419.2 L890.6 419.0 L890.1 418.7 L889.6 418.3 L889.1 417.9 L888.6 417.2 L888.1 400.5 L887.6 371.6 L887.1 354.5 L886.6 337.4Z" fill="url(#gv)"/><path d="M886.6 337.4 L887.1 336.1 L887.6 335.6 L888.1 335.2 L888.6 334.8 L889.1 334.5 L889.6 334.3 L890.1 334.0 L890.6 333.8 L891.1 333.6 L891.6 333.4 L892.1 333.2 L892.6 333.0 L893.1 332.8 L893.6 332.6 L894.1 332.5 L894.6 332.3 L895.1 332.2 L895.6 332.0 L896.1 331.9 L896.6 331.8 L897.1 331.6 L897.6 331.5 L898.1 331.4 L898.6 331.3 L899.1 331.2 L899.6 331.0 L900.1 330.9 L900.6 330.8 L901.1 330.7 L901.6 330.6 L902.1 330.5 L902.6 330.4 L903.1 330.4 L903.6 330.3 L904.1 330.2 L904.6 330.1 L905.0 330.0 L905.5 329.9 L906.0 329.9 L906.5 329.8 L907.0 329.7 L907.5 329.6 L908.0 329.6 L908.5 329.5 L909.0 329.4 L909.5 329.4 L910.0 329.3 L910.5 329.2 L911.0 329.2 L911.5 329.1 L912.0 329.1 L912.5 329.0 L913.0 328.9 L913.5 328.9 L914.0 328.8 L914.5 328.8 L915.0 328.7 L915.5 328.7 L916.0 328.7 L916.5 328.6 L917.0 328.6 L917.5 328.5 L918.0 328.5 L918.5 328.4 L919.0 328.4 L919.5 328.4 L920.0 328.3 L920.5 328.3 L921.0 328.3 L921.5 328.2 L922.0 328.2 L922.5 328.2 L923.0 328.2 L923.5 328.1 L924.0 328.1 L924.5 328.1 L925.0 328.1 L925.5 328.0 L926.0 328.0 L926.5 328.0 L927.0 328.0 L927.5 328.0 L928.0 328.0 L928.5 327.9 L929.0 327.9 L929.5 327.9 L930.0 327.9 L930.5 327.9 L931.0 327.9 L931.5 327.9 L932.0 327.9 L932.5 327.9 L933.0 327.9 L933.5 327.9 L934.0 327.9 L934.5 327.9 L935.0 327.9 L935.5 327.9 L936.0 327.9 L936.5 327.9 L937.0 327.9 L937.5 327.9 L938.0 327.9 L938.5 327.9 L939.0 328.0 L939.5 328.0 L940.0 328.0 L940.5 328.0 L941.0 328.0 L941.5 328.1 L942.0 328.1 L942.5 328.1 L943.0 328.1 L943.5 328.2 L944.0 328.2 L944.4 328.2 L944.9 328.2 L945.4 328.3 L945.9 328.3 L946.4 328.4 L946.9 328.4 L947.4 328.4 L947.9 328.5 L948.4 328.5 L948.9 328.6 L949.4 328.6 L949.9 328.7 L950.4 328.7 L950.9 328.8 L951.4 328.9 L951.9 328.9 L952.4 329.0 L952.9 329.1 L953.4 329.1 L953.9 329.2 L954.4 329.3 L954.9 329.4 L955.4 329.4 L955.9 329.5 L956.4 329.6 L956.9 329.7 L957.4 329.8 L957.9 329.9 L958.4 330.0 L958.9 330.2 L959.4 330.3 L959.9 330.4 L960.4 330.5 L960.9 330.7 L961.4 330.8 L961.9 331.0 L962.4 331.2 L962.9 331.4 L963.4 331.6 L963.9 331.8 L964.4 332.1 L964.9 332.4 L965.4 332.7 L965.9 333.1 L966.4 333.8 L966.9 345.3 L967.4 362.4 L967.9 378.2 L968.4 389.3 L968.9 401.3 L969.4 413.6 L969.4 413.6 L968.9 414.9 L968.4 415.4 L967.9 415.8 L967.4 416.2 L966.9 416.5 L966.4 416.7 L965.9 417.0 L965.4 417.2 L964.9 417.4 L964.4 417.7 L963.9 417.8 L963.4 418.0 L962.9 418.2 L962.4 418.4 L961.9 418.5 L961.4 418.7 L960.9 418.8 L960.4 419.0 L959.9 419.1 L959.4 419.3 L958.9 419.4 L958.4 419.5 L957.9 419.6 L957.4 419.8 L956.9 419.9 L956.4 420.0 L955.9 420.1 L955.4 420.2 L954.9 420.3 L954.4 420.4 L953.9 420.5 L953.4 420.6 L952.9 420.7 L952.4 420.8 L951.9 420.9 L951.4 420.9 L950.9 421.0 L950.4 421.1 L949.9 421.2 L949.4 421.3 L948.9 421.3 L948.4 421.4 L947.9 421.5 L947.4 421.6 L946.9 421.6 L946.4 421.7 L945.9 421.7 L945.4 421.8 L944.9 421.9 L944.4 421.9 L944.0 422.0 L943.5 422.0 L943.0 422.1 L942.5 422.2 L942.0 422.2 L941.5 422.3 L941.0 422.3 L940.5 422.4 L940.0 422.4 L939.5 422.4 L939.0 422.5 L938.5 422.5 L938.0 422.6 L937.5 422.6 L937.0 422.7 L936.5 422.7 L936.0 422.7 L935.5 422.8 L935.0 422.8 L934.5 422.8 L934.0 422.9 L933.5 422.9 L933.0 422.9 L932.5 422.9 L932.0 423.0 L931.5 423.0 L931.0 423.0 L930.5 423.0 L930.0 423.1 L929.5 423.1 L929.0 423.1 L928.5 423.1 L928.0 423.1 L927.5 423.1 L927.0 423.2 L926.5 423.2 L926.0 423.2 L925.5 423.2 L925.0 423.2 L924.5 423.2 L924.0 423.2 L923.5 423.2 L923.0 423.2 L922.5 423.2 L922.0 423.2 L921.5 423.2 L921.0 423.2 L920.5 423.2 L920.0 423.2 L919.5 423.2 L919.0 423.2 L918.5 423.2 L918.0 423.2 L917.5 423.2 L917.0 423.2 L916.5 423.1 L916.0 423.1 L915.5 423.1 L915.0 423.1 L914.5 423.1 L914.0 423.1 L913.5 423.0 L913.0 423.0 L912.5 423.0 L912.0 423.0 L911.5 422.9 L911.0 422.9 L910.5 422.9 L910.0 422.8 L909.5 422.8 L909.0 422.8 L908.5 422.7 L908.0 422.7 L907.5 422.6 L907.0 422.6 L906.5 422.5 L906.0 422.5 L905.5 422.4 L905.0 422.4 L904.6 422.3 L904.1 422.3 L903.6 422.2 L903.1 422.1 L902.6 422.1 L902.1 422.0 L901.6 421.9 L901.1 421.9 L900.6 421.8 L900.1 421.7 L899.6 421.6 L899.1 421.5 L898.6 421.4 L898.1 421.3 L897.6 421.2 L897.1 421.1 L896.6 421.0 L896.1 420.9 L895.6 420.8 L895.1 420.6 L894.6 420.5 L894.1 420.4 L893.6 420.2 L893.1 420.0 L892.6 419.9 L892.1 419.7 L891.6 419.5 L891.1 419.2 L890.6 419.0 L890.1 418.7 L889.6 418.3 L889.1 417.9 L888.6 417.2 L888.1 400.5 L887.6 371.6 L887.1 354.5 L886.6 337.4Z" fill="url(#gsh2)"/><g clip-path="url(#clip3)"><path d="M957.8 329.9L965.9 352.6M966.5 334.2L965.9 352.6M966.5 334.2L964.4 357.6M961.3 338.8L964.4 357.6M961.3 338.8L952.8 361.2M937.0 343.4L952.8 361.2M937.0 343.4L923.9 364.1M911.8 343.9L923.9 364.1M911.8 343.9L905.2 363.5M892.3 341.3L905.2 363.5M892.3 341.3L889.3 359.9M886.8 338.2L889.3 359.9M886.8 338.2L890.5 354.1M965.9 352.6L960.2 370.2M965.9 352.6L967.8 374.6M964.4 357.6L967.8 374.6M964.4 357.6L962.3 378.8M952.8 361.2L962.3 378.8M952.8 361.2L938.9 383.3M923.9 364.1L938.9 383.3M923.9 364.1L913.2 384.0M905.2 363.5L913.2 384.0M905.2 363.5L896.0 382.0M889.3 359.9L896.0 382.0M889.3 359.9L887.8 377.7M890.5 354.1L887.8 377.7M967.8 374.6L966.5 392.1M967.8 374.6L965.2 398.0M962.3 378.8L965.2 398.0M962.3 378.8L952.0 401.7M938.9 383.3L952.0 401.7M938.9 383.3L931.0 403.9M913.2 384.0L931.0 403.9M913.2 384.0L904.3 403.3M896.0 382.0L904.3 403.3M896.0 382.0L889.5 399.5M887.8 377.7L889.5 399.5M887.8 377.7L890.0 394.9M966.5 392.1L969.3 413.1M965.2 398.0L969.3 413.1M965.2 398.0L961.6 418.6M952.0 401.7L961.6 418.6M952.0 401.7L944.9 421.9M931.0 403.9L944.9 421.9M931.0 403.9L912.9 423.0M904.3 403.3L912.9 423.0M904.3 403.3L895.6 420.8M889.5 399.5L895.6 420.8M889.5 399.5L888.5 416.0M890.0 394.9L888.5 416.0" stroke="#183020" stroke-opacity=".85" stroke-width="1" fill="none"/><path d="M967.2 354.6 L967.1 355.1 L966.8 355.7 L966.4 356.2 L965.8 356.7 L965.1 357.2 L964.1 357.8 L963.1 358.3 L961.8 358.8 L960.4 359.3 L958.9 359.8 L957.2 360.2 L955.5 360.7 L953.5 361.1 L951.5 361.5 L949.4 361.9 L947.2 362.2 L944.9 362.6 L942.5 362.9 L940.0 363.1 L937.5 363.4 L935.0 363.6 L932.4 363.7 L929.8 363.9 L927.2 364.0 L924.6 364.1 L922.0 364.1 L919.4 364.1 L916.8 364.1 L914.3 364.0 L911.9 363.9 L909.5 363.8 L907.2 363.6 L905.0 363.4 L902.8 363.2 L900.8 362.9 L898.9 362.6 L897.1 362.3 L895.4 362.0 L893.9 361.6 L892.5 361.2 L891.3 360.8 L890.2 360.4 L889.3 359.9 L888.5 359.4 L887.9 358.9 L887.5 358.4 L887.3 357.9 L887.2 357.4" stroke="#183020" stroke-opacity=".85" stroke-width="1" fill="none"/><path d="M967.8 374.6 L967.7 375.1 L967.4 375.7 L967.0 376.2 L966.4 376.7 L965.6 377.2 L964.7 377.8 L963.6 378.3 L962.4 378.8 L961.0 379.3 L959.5 379.8 L957.8 380.2 L956.0 380.7 L954.1 381.1 L952.1 381.5 L950.0 381.9 L947.8 382.2 L945.4 382.6 L943.1 382.9 L940.6 383.1 L938.1 383.4 L935.6 383.6 L933.0 383.7 L930.4 383.9 L927.8 384.0 L925.1 384.1 L922.5 384.1 L920.0 384.1 L917.4 384.1 L914.9 384.0 L912.4 383.9 L910.1 383.8 L907.8 383.6 L905.5 383.4 L903.4 383.2 L901.4 382.9 L899.5 382.6 L897.7 382.3 L896.0 382.0 L894.5 381.6 L893.1 381.2 L891.9 380.8 L890.8 380.4 L889.9 379.9 L889.1 379.4 L888.5 378.9 L888.1 378.4 L887.8 377.9 L887.8 377.4" stroke="#183020" stroke-opacity=".85" stroke-width="1" fill="none"/><path d="M968.6 394.6 L968.5 395.1 L968.3 395.7 L967.9 396.2 L967.3 396.7 L966.5 397.3 L965.6 397.8 L964.5 398.3 L963.2 398.8 L961.8 399.3 L960.3 399.8 L958.6 400.3 L956.8 400.7 L954.9 401.1 L952.9 401.5 L950.7 401.9 L948.5 402.3 L946.2 402.6 L943.8 402.9 L941.3 403.2 L938.8 403.4 L936.2 403.6 L933.6 403.8 L931.0 404.0 L928.3 404.1 L925.7 404.1 L923.1 404.2 L920.5 404.2 L917.9 404.2 L915.4 404.1 L912.9 404.0 L910.5 403.9 L908.2 403.7 L905.9 403.5 L903.8 403.3 L901.8 403.0 L899.8 402.7 L898.0 402.4 L896.4 402.0 L894.8 401.7 L893.4 401.3 L892.2 400.8 L891.1 400.4 L890.2 399.9 L889.4 399.4 L888.8 399.0 L888.4 398.5 L888.1 397.9 L888.0 397.4" stroke="#183020" stroke-opacity=".85" stroke-width="1" fill="none"/></g><path d="M886.6 337.4 L887.1 336.1 L887.6 335.6 L888.1 335.2 L888.6 334.8 L889.1 334.5 L889.6 334.3 L890.1 334.0 L890.6 333.8 L891.1 333.6 L891.6 333.4 L892.1 333.2 L892.6 333.0 L893.1 332.8 L893.6 332.6 L894.1 332.5 L894.6 332.3 L895.1 332.2 L895.6 332.0 L896.1 331.9 L896.6 331.8 L897.1 331.6 L897.6 331.5 L898.1 331.4 L898.6 331.3 L899.1 331.2 L899.6 331.0 L900.1 330.9 L900.6 330.8 L901.1 330.7 L901.6 330.6 L902.1 330.5 L902.6 330.4 L903.1 330.4 L903.6 330.3 L904.1 330.2 L904.6 330.1 L905.0 330.0 L905.5 329.9 L906.0 329.9 L906.5 329.8 L907.0 329.7 L907.5 329.6 L908.0 329.6 L908.5 329.5 L909.0 329.4 L909.5 329.4 L910.0 329.3 L910.5 329.2 L911.0 329.2 L911.5 329.1 L912.0 329.1 L912.5 329.0 L913.0 328.9 L913.5 328.9 L914.0 328.8 L914.5 328.8 L915.0 328.7 L915.5 328.7 L916.0 328.7 L916.5 328.6 L917.0 328.6 L917.5 328.5 L918.0 328.5 L918.5 328.4 L919.0 328.4 L919.5 328.4 L920.0 328.3 L920.5 328.3 L921.0 328.3 L921.5 328.2 L922.0 328.2 L922.5 328.2 L923.0 328.2 L923.5 328.1 L924.0 328.1 L924.5 328.1 L925.0 328.1 L925.5 328.0 L926.0 328.0 L926.5 328.0 L927.0 328.0 L927.5 328.0 L928.0 328.0 L928.5 327.9 L929.0 327.9 L929.5 327.9 L930.0 327.9 L930.5 327.9 L931.0 327.9 L931.5 327.9 L932.0 327.9 L932.5 327.9 L933.0 327.9 L933.5 327.9 L934.0 327.9 L934.5 327.9 L935.0 327.9 L935.5 327.9 L936.0 327.9 L936.5 327.9 L937.0 327.9 L937.5 327.9 L938.0 327.9 L938.5 327.9 L939.0 328.0 L939.5 328.0 L940.0 328.0 L940.5 328.0 L941.0 328.0 L941.5 328.1 L942.0 328.1 L942.5 328.1 L943.0 328.1 L943.5 328.2 L944.0 328.2 L944.4 328.2 L944.9 328.2 L945.4 328.3 L945.9 328.3 L946.4 328.4 L946.9 328.4 L947.4 328.4 L947.9 328.5 L948.4 328.5 L948.9 328.6 L949.4 328.6 L949.9 328.7 L950.4 328.7 L950.9 328.8 L951.4 328.9 L951.9 328.9 L952.4 329.0 L952.9 329.1 L953.4 329.1 L953.9 329.2 L954.4 329.3 L954.9 329.4 L955.4 329.4 L955.9 329.5 L956.4 329.6 L956.9 329.7 L957.4 329.8 L957.9 329.9 L958.4 330.0 L958.9 330.2 L959.4 330.3 L959.9 330.4 L960.4 330.5 L960.9 330.7 L961.4 330.8 L961.9 331.0 L962.4 331.2 L962.9 331.4 L963.4 331.6 L963.9 331.8 L964.4 332.1 L964.9 332.4 L965.4 332.7 L965.9 333.1 L966.4 333.8 L966.9 345.3 L967.4 362.4 L967.9 378.2 L968.4 389.3 L968.9 401.3 L969.4 413.6 L969.4 413.6 L968.9 414.9 L968.4 415.4 L967.9 415.8 L967.4 416.2 L966.9 416.5 L966.4 416.7 L965.9 417.0 L965.4 417.2 L964.9 417.4 L964.4 417.7 L963.9 417.8 L963.4 418.0 L962.9 418.2 L962.4 418.4 L961.9 418.5 L961.4 418.7 L960.9 418.8 L960.4 419.0 L959.9 419.1 L959.4 419.3 L958.9 419.4 L958.4 419.5 L957.9 419.6 L957.4 419.8 L956.9 419.9 L956.4 420.0 L955.9 420.1 L955.4 420.2 L954.9 420.3 L954.4 420.4 L953.9 420.5 L953.4 420.6 L952.9 420.7 L952.4 420.8 L951.9 420.9 L951.4 420.9 L950.9 421.0 L950.4 421.1 L949.9 421.2 L949.4 421.3 L948.9 421.3 L948.4 421.4 L947.9 421.5 L947.4 421.6 L946.9 421.6 L946.4 421.7 L945.9 421.7 L945.4 421.8 L944.9 421.9 L944.4 421.9 L944.0 422.0 L943.5 422.0 L943.0 422.1 L942.5 422.2 L942.0 422.2 L941.5 422.3 L941.0 422.3 L940.5 422.4 L940.0 422.4 L939.5 422.4 L939.0 422.5 L938.5 422.5 L938.0 422.6 L937.5 422.6 L937.0 422.7 L936.5 422.7 L936.0 422.7 L935.5 422.8 L935.0 422.8 L934.5 422.8 L934.0 422.9 L933.5 422.9 L933.0 422.9 L932.5 422.9 L932.0 423.0 L931.5 423.0 L931.0 423.0 L930.5 423.0 L930.0 423.1 L929.5 423.1 L929.0 423.1 L928.5 423.1 L928.0 423.1 L927.5 423.1 L927.0 423.2 L926.5 423.2 L926.0 423.2 L925.5 423.2 L925.0 423.2 L924.5 423.2 L924.0 423.2 L923.5 423.2 L923.0 423.2 L922.5 423.2 L922.0 423.2 L921.5 423.2 L921.0 423.2 L920.5 423.2 L920.0 423.2 L919.5 423.2 L919.0 423.2 L918.5 423.2 L918.0 423.2 L917.5 423.2 L917.0 423.2 L916.5 423.1 L916.0 423.1 L915.5 423.1 L915.0 423.1 L914.5 423.1 L914.0 423.1 L913.5 423.0 L913.0 423.0 L912.5 423.0 L912.0 423.0 L911.5 422.9 L911.0 422.9 L910.5 422.9 L910.0 422.8 L909.5 422.8 L909.0 422.8 L908.5 422.7 L908.0 422.7 L907.5 422.6 L907.0 422.6 L906.5 422.5 L906.0 422.5 L905.5 422.4 L905.0 422.4 L904.6 422.3 L904.1 422.3 L903.6 422.2 L903.1 422.1 L902.6 422.1 L902.1 422.0 L901.6 421.9 L901.1 421.9 L900.6 421.8 L900.1 421.7 L899.6 421.6 L899.1 421.5 L898.6 421.4 L898.1 421.3 L897.6 421.2 L897.1 421.1 L896.6 421.0 L896.1 420.9 L895.6 420.8 L895.1 420.6 L894.6 420.5 L894.1 420.4 L893.6 420.2 L893.1 420.0 L892.6 419.9 L892.1 419.7 L891.6 419.5 L891.1 419.2 L890.6 419.0 L890.1 418.7 L889.6 418.3 L889.1 417.9 L888.6 417.2 L888.1 400.5 L887.6 371.6 L887.1 354.5 L886.6 337.4Z" fill="none" stroke="#1a2a3a" stroke-width="1" stroke-opacity=".8"/><path d="M834.0 319.2 L834.5 317.3 L835.0 316.5 L835.5 315.9 L836.0 315.3 L836.5 314.9 L837.0 314.5 L837.5 314.1 L838.0 313.6 L838.5 313.2 L839.0 312.8 L839.5 312.4 L840.0 312.0 L840.5 311.6 L841.0 311.2 L841.5 310.7 L842.0 310.3 L842.5 309.9 L843.0 309.5 L843.5 309.1 L844.0 308.7 L844.5 308.3 L845.0 307.9 L845.5 307.4 L846.0 307.0 L846.5 306.6 L847.0 306.2 L847.5 305.8 L848.0 305.4 L848.5 305.0 L849.0 304.6 L849.4 304.1 L849.9 303.7 L850.4 303.3 L850.9 302.9 L851.4 302.5 L851.9 302.1 L852.4 301.7 L852.9 301.3 L853.4 300.8 L853.9 300.4 L854.4 300.0 L854.9 299.6 L855.4 299.2 L855.9 298.8 L856.4 298.3 L856.9 297.9 L857.4 297.4 L857.9 297.0 L858.4 296.6 L858.9 296.1 L859.4 295.7 L859.9 295.2 L860.4 294.8 L860.9 294.4 L861.4 293.9 L861.9 293.5 L862.4 293.0 L862.9 292.6 L863.4 292.2 L863.9 291.7 L864.4 291.3 L864.9 290.8 L865.4 290.4 L865.9 290.0 L866.4 289.5 L866.9 289.1 L867.4 288.6 L867.9 288.2 L868.4 287.8 L868.9 287.3 L869.4 286.9 L869.9 286.4 L870.4 286.0 L870.9 285.6 L871.4 285.1 L871.9 284.7 L872.4 284.2 L872.8 283.8 L873.3 283.4 L873.8 282.8 L874.3 281.7 L874.8 280.8 L875.3 279.7 L875.8 278.8 L876.3 277.8 L876.8 276.8 L877.3 275.8 L877.8 274.8 L878.3 273.8 L878.8 272.8 L879.3 271.8 L879.8 270.8 L880.3 269.8 L880.8 268.8 L881.3 267.8 L881.8 266.8 L882.3 265.8 L882.8 264.8 L883.3 263.8 L883.8 262.8 L884.3 261.9 L884.8 260.8 L885.3 259.9 L885.8 258.8 L886.3 257.9 L886.8 256.8 L887.3 255.9 L887.8 247.0 L888.3 238.5 L888.8 232.5 L889.3 231.8 L889.8 231.4 L890.3 231.0 L890.8 230.7 L891.3 230.4 L891.8 230.2 L892.3 230.0 L892.8 229.8 L893.3 229.6 L893.8 229.4 L894.3 229.2 L894.8 229.0 L895.3 228.9 L895.7 228.7 L896.2 228.6 L896.7 228.4 L897.2 228.3 L897.7 228.2 L898.2 228.1 L898.7 227.9 L899.2 227.8 L899.7 227.7 L900.2 227.6 L900.7 227.5 L901.2 227.4 L901.7 227.3 L902.2 227.2 L902.7 227.1 L903.2 227.0 L903.7 226.9 L904.2 226.8 L904.7 226.8 L905.2 226.7 L905.7 226.6 L906.2 226.5 L906.7 226.5 L907.2 226.4 L907.7 226.3 L908.2 226.3 L908.7 226.2 L909.2 226.1 L909.7 226.1 L910.2 226.0 L910.7 225.9 L911.2 225.9 L911.7 225.8 L912.2 225.8 L912.7 225.7 L913.2 225.7 L913.7 225.6 L914.2 225.6 L914.7 225.5 L915.2 225.5 L915.7 225.5 L916.2 225.4 L916.7 225.4 L917.2 225.3 L917.7 225.3 L918.2 225.3 L918.6 225.2 L919.1 225.2 L919.6 225.2 L920.1 225.2 L920.6 225.1 L921.1 225.1 L921.6 225.1 L922.1 225.1 L922.6 225.0 L923.1 225.0 L923.6 225.0 L924.1 225.0 L924.6 225.0 L925.1 225.0 L925.6 224.9 L926.1 224.9 L926.6 224.9 L927.1 224.9 L927.6 224.9 L928.1 224.9 L928.6 224.9 L929.1 224.9 L929.6 224.9 L930.1 224.9 L930.6 224.9 L931.1 224.9 L931.6 224.9 L932.1 224.9 L932.6 224.9 L933.1 224.9 L933.6 224.9 L934.1 225.0 L934.6 225.0 L935.1 225.0 L935.6 225.0 L936.1 225.0 L936.6 225.0 L937.1 225.1 L937.6 225.1 L938.1 225.1 L938.6 225.1 L939.1 225.2 L939.6 225.2 L940.1 225.2 L940.6 225.3 L941.1 225.3 L941.6 225.4 L942.0 225.4 L942.5 225.5 L943.0 225.5 L943.5 225.6 L944.0 225.6 L944.5 225.7 L945.0 225.7 L945.5 225.8 L946.0 225.8 L946.5 225.9 L947.0 226.0 L947.5 226.1 L948.0 226.1 L948.5 226.2 L949.0 226.3 L949.5 226.4 L950.0 226.5 L950.5 226.6 L951.0 226.7 L951.5 226.8 L952.0 226.9 L952.5 227.0 L953.0 227.2 L953.5 227.3 L954.0 227.5 L954.5 227.6 L955.0 227.8 L955.5 228.0 L956.0 228.2 L956.5 228.5 L957.0 228.7 L957.5 229.1 L958.0 229.5 L958.5 230.2 L959.0 234.1 L959.5 238.6 L960.0 243.1 L960.5 247.0 L961.0 251.4 L961.5 253.7 L962.0 254.6 L962.5 255.4 L963.0 256.3 L963.5 257.1 L964.0 258.0 L964.5 258.9 L964.9 259.7 L965.4 260.5 L965.9 261.4 L966.4 262.3 L966.9 263.1 L967.4 264.0 L967.9 264.8 L968.4 265.7 L968.9 266.6 L969.4 267.4 L969.9 268.3 L970.4 269.1 L970.9 270.0 L971.4 270.9 L971.9 271.7 L972.4 272.6 L972.9 273.5 L973.4 274.3 L973.9 275.2 L974.4 276.0 L974.9 276.9 L975.4 277.8 L975.9 278.6 L976.4 279.4 L976.9 279.8 L977.4 280.2 L977.9 280.6 L978.4 280.9 L978.9 281.3 L979.4 281.7 L979.9 282.1 L980.4 282.5 L980.9 282.9 L981.4 283.2 L981.9 283.6 L982.4 284.0 L982.9 284.4 L983.4 284.8 L983.9 285.2 L984.4 285.6 L984.9 285.9 L985.4 286.3 L985.9 286.7 L986.4 287.1 L986.9 287.5 L987.4 287.9 L987.9 288.2 L988.3 288.6 L988.8 289.0 L989.3 289.4 L989.8 289.8 L990.3 290.2 L990.8 290.5 L991.3 290.9 L991.8 291.3 L992.3 291.7 L992.8 292.1 L993.3 292.5 L993.8 292.8 L994.3 293.2 L994.8 293.6 L995.3 294.0 L995.8 294.4 L996.3 294.7 L996.8 295.1 L997.3 295.4 L997.8 295.8 L998.3 296.2 L998.8 296.5 L999.3 296.9 L999.8 297.2 L1000.3 297.6 L1000.8 298.0 L1001.3 298.3 L1001.8 298.7 L1002.3 299.0 L1002.8 299.4 L1003.3 299.8 L1003.8 300.1 L1004.3 300.5 L1004.8 300.8 L1005.3 301.2 L1005.8 301.6 L1006.3 301.9 L1006.8 302.3 L1007.3 302.6 L1007.8 303.0 L1008.3 303.3 L1008.8 303.7 L1009.3 304.1 L1009.8 304.4 L1010.3 304.8 L1010.8 305.1 L1011.2 305.5 L1011.7 305.9 L1012.2 306.2 L1012.7 306.6 L1013.2 306.9 L1013.7 307.3 L1014.2 307.7 L1014.7 308.0 L1015.2 308.4 L1015.7 308.8 L1016.2 309.2 L1016.7 309.8 L1017.2 310.4 L1017.7 311.3 L1018.2 319.8 L1018.2 319.8 L1017.7 321.7 L1017.2 322.5 L1016.7 323.1 L1016.2 323.7 L1015.7 324.1 L1015.2 324.5 L1014.7 324.9 L1014.2 325.3 L1013.7 325.6 L1013.2 325.9 L1012.7 326.2 L1012.2 326.5 L1011.7 326.8 L1011.2 327.0 L1010.8 327.3 L1010.3 327.5 L1009.8 327.8 L1009.3 328.0 L1008.8 328.2 L1008.3 328.5 L1007.8 328.7 L1007.3 328.9 L1006.8 329.1 L1006.3 329.3 L1005.8 329.5 L1005.3 329.6 L1004.8 329.8 L1004.3 330.0 L1003.8 330.2 L1003.3 330.4 L1002.8 330.5 L1002.3 330.7 L1001.8 330.8 L1001.3 331.0 L1000.8 331.2 L1000.3 331.3 L999.8 331.5 L999.3 331.6 L998.8 331.8 L998.3 331.9 L997.8 332.1 L997.3 332.2 L996.8 332.3 L996.3 332.5 L995.8 332.6 L995.3 332.7 L994.8 332.9 L994.3 333.0 L993.8 333.1 L993.3 333.2 L992.8 333.4 L992.3 333.5 L991.8 333.6 L991.3 333.7 L990.8 333.8 L990.3 334.0 L989.8 334.1 L989.3 334.2 L988.8 334.3 L988.3 334.4 L987.9 334.5 L987.4 334.6 L986.9 334.7 L986.4 334.8 L985.9 334.9 L985.4 335.0 L984.9 335.1 L984.4 335.2 L983.9 335.3 L983.4 335.4 L982.9 335.5 L982.4 335.6 L981.9 335.7 L981.4 335.8 L980.9 335.9 L980.4 336.0 L979.9 336.1 L979.4 336.2 L978.9 336.2 L978.4 336.3 L977.9 336.4 L977.4 336.5 L976.9 336.6 L976.4 336.7 L975.9 336.7 L975.4 336.8 L974.9 336.9 L974.4 337.0 L973.9 337.1 L973.4 337.1 L972.9 337.2 L972.4 337.3 L971.9 337.4 L971.4 337.4 L970.9 337.5 L970.4 337.6 L969.9 337.7 L969.4 337.7 L968.9 337.8 L968.4 337.9 L967.9 337.9 L967.4 338.0 L966.9 338.1 L966.4 338.1 L965.9 338.2 L965.4 338.3 L964.9 338.3 L964.5 338.4 L964.0 338.5 L963.5 338.5 L963.0 338.6 L962.5 338.6 L962.0 338.7 L961.5 338.8 L961.0 338.8 L960.5 338.9 L960.0 338.9 L959.5 339.0 L959.0 339.0 L958.5 339.1 L958.0 339.2 L957.5 339.2 L957.0 339.3 L956.5 339.3 L956.0 339.4 L955.5 339.4 L955.0 339.5 L954.5 339.5 L954.0 339.6 L953.5 339.6 L953.0 339.7 L952.5 339.7 L952.0 339.8 L951.5 339.8 L951.0 339.9 L950.5 339.9 L950.0 339.9 L949.5 340.0 L949.0 340.0 L948.5 340.1 L948.0 340.1 L947.5 340.2 L947.0 340.2 L946.5 340.2 L946.0 340.3 L945.5 340.3 L945.0 340.4 L944.5 340.4 L944.0 340.4 L943.5 340.5 L943.0 340.5 L942.5 340.5 L942.0 340.6 L941.6 340.6 L941.1 340.6 L940.6 340.7 L940.1 340.7 L939.6 340.7 L939.1 340.8 L938.6 340.8 L938.1 340.8 L937.6 340.9 L937.1 340.9 L936.6 340.9 L936.1 340.9 L935.6 341.0 L935.1 341.0 L934.6 341.0 L934.1 341.1 L933.6 341.1 L933.1 341.1 L932.6 341.1 L932.1 341.2 L931.6 341.2 L931.1 341.2 L930.6 341.2 L930.1 341.2 L929.6 341.3 L929.1 341.3 L928.6 341.3 L928.1 341.3 L927.6 341.3 L927.1 341.4 L926.6 341.4 L926.1 341.4 L925.6 341.4 L925.1 341.4 L924.6 341.5 L924.1 341.5 L923.6 341.5 L923.1 341.5 L922.6 341.5 L922.1 341.5 L921.6 341.5 L921.1 341.5 L920.6 341.6 L920.1 341.6 L919.6 341.6 L919.1 341.6 L918.6 341.6 L918.2 341.6 L917.7 341.6 L917.2 341.6 L916.7 341.6 L916.2 341.6 L915.7 341.6 L915.2 341.7 L914.7 341.7 L914.2 341.7 L913.7 341.7 L913.2 341.7 L912.7 341.7 L912.2 341.7 L911.7 341.7 L911.2 341.7 L910.7 341.7 L910.2 341.7 L909.7 341.7 L909.2 341.7 L908.7 341.7 L908.2 341.7 L907.7 341.7 L907.2 341.7 L906.7 341.7 L906.2 341.7 L905.7 341.7 L905.2 341.6 L904.7 341.6 L904.2 341.6 L903.7 341.6 L903.2 341.6 L902.7 341.6 L902.2 341.6 L901.7 341.6 L901.2 341.6 L900.7 341.6 L900.2 341.6 L899.7 341.5 L899.2 341.5 L898.7 341.5 L898.2 341.5 L897.7 341.5 L897.2 341.5 L896.7 341.5 L896.2 341.4 L895.7 341.4 L895.3 341.4 L894.8 341.4 L894.3 341.4 L893.8 341.4 L893.3 341.3 L892.8 341.3 L892.3 341.3 L891.8 341.3 L891.3 341.2 L890.8 341.2 L890.3 341.2 L889.8 341.2 L889.3 341.1 L888.8 341.1 L888.3 341.1 L887.8 341.1 L887.3 341.0 L886.8 341.0 L886.3 341.0 L885.8 340.9 L885.3 340.9 L884.8 340.9 L884.3 340.8 L883.8 340.8 L883.3 340.8 L882.8 340.7 L882.3 340.7 L881.8 340.7 L881.3 340.6 L880.8 340.6 L880.3 340.6 L879.8 340.5 L879.3 340.5 L878.8 340.4 L878.3 340.4 L877.8 340.3 L877.3 340.3 L876.8 340.3 L876.3 340.2 L875.8 340.2 L875.3 340.1 L874.8 340.1 L874.3 340.0 L873.8 340.0 L873.3 339.9 L872.8 339.9 L872.4 339.8 L871.9 339.7 L871.4 339.7 L870.9 339.6 L870.4 339.6 L869.9 339.5 L869.4 339.5 L868.9 339.4 L868.4 339.3 L867.9 339.3 L867.4 339.2 L866.9 339.1 L866.4 339.1 L865.9 339.0 L865.4 338.9 L864.9 338.9 L864.4 338.8 L863.9 338.7 L863.4 338.6 L862.9 338.6 L862.4 338.5 L861.9 338.4 L861.4 338.3 L860.9 338.2 L860.4 338.2 L859.9 338.1 L859.4 338.0 L858.9 337.9 L858.4 337.8 L857.9 337.7 L857.4 337.6 L856.9 337.5 L856.4 337.4 L855.9 337.3 L855.4 337.2 L854.9 337.1 L854.4 337.0 L853.9 336.9 L853.4 336.8 L852.9 336.7 L852.4 336.6 L851.9 336.5 L851.4 336.3 L850.9 336.2 L850.4 336.1 L849.9 336.0 L849.4 335.8 L849.0 335.7 L848.5 335.6 L848.0 335.4 L847.5 335.3 L847.0 335.1 L846.5 335.0 L846.0 334.8 L845.5 334.6 L845.0 334.5 L844.5 334.3 L844.0 334.1 L843.5 333.9 L843.0 333.7 L842.5 333.6 L842.0 333.3 L841.5 333.1 L841.0 332.9 L840.5 332.7 L840.0 332.4 L839.5 332.2 L839.0 331.9 L838.5 331.6 L838.0 331.3 L837.5 331.0 L837.0 330.6 L836.5 330.2 L836.0 329.8 L835.5 329.2 L835.0 328.6 L834.5 327.7 L834.0 319.2Z" fill="url(#gv)"/><path d="M834.0 319.2 L834.5 317.3 L835.0 316.5 L835.5 315.9 L836.0 315.3 L836.5 314.9 L837.0 314.5 L837.5 314.1 L838.0 313.6 L838.5 313.2 L839.0 312.8 L839.5 312.4 L840.0 312.0 L840.5 311.6 L841.0 311.2 L841.5 310.7 L842.0 310.3 L842.5 309.9 L843.0 309.5 L843.5 309.1 L844.0 308.7 L844.5 308.3 L845.0 307.9 L845.5 307.4 L846.0 307.0 L846.5 306.6 L847.0 306.2 L847.5 305.8 L848.0 305.4 L848.5 305.0 L849.0 304.6 L849.4 304.1 L849.9 303.7 L850.4 303.3 L850.9 302.9 L851.4 302.5 L851.9 302.1 L852.4 301.7 L852.9 301.3 L853.4 300.8 L853.9 300.4 L854.4 300.0 L854.9 299.6 L855.4 299.2 L855.9 298.8 L856.4 298.3 L856.9 297.9 L857.4 297.4 L857.9 297.0 L858.4 296.6 L858.9 296.1 L859.4 295.7 L859.9 295.2 L860.4 294.8 L860.9 294.4 L861.4 293.9 L861.9 293.5 L862.4 293.0 L862.9 292.6 L863.4 292.2 L863.9 291.7 L864.4 291.3 L864.9 290.8 L865.4 290.4 L865.9 290.0 L866.4 289.5 L866.9 289.1 L867.4 288.6 L867.9 288.2 L868.4 287.8 L868.9 287.3 L869.4 286.9 L869.9 286.4 L870.4 286.0 L870.9 285.6 L871.4 285.1 L871.9 284.7 L872.4 284.2 L872.8 283.8 L873.3 283.4 L873.8 282.8 L874.3 281.7 L874.8 280.8 L875.3 279.7 L875.8 278.8 L876.3 277.8 L876.8 276.8 L877.3 275.8 L877.8 274.8 L878.3 273.8 L878.8 272.8 L879.3 271.8 L879.8 270.8 L880.3 269.8 L880.8 268.8 L881.3 267.8 L881.8 266.8 L882.3 265.8 L882.8 264.8 L883.3 263.8 L883.8 262.8 L884.3 261.9 L884.8 260.8 L885.3 259.9 L885.8 258.8 L886.3 257.9 L886.8 256.8 L887.3 255.9 L887.8 247.0 L888.3 238.5 L888.8 232.5 L889.3 231.8 L889.8 231.4 L890.3 231.0 L890.8 230.7 L891.3 230.4 L891.8 230.2 L892.3 230.0 L892.8 229.8 L893.3 229.6 L893.8 229.4 L894.3 229.2 L894.8 229.0 L895.3 228.9 L895.7 228.7 L896.2 228.6 L896.7 228.4 L897.2 228.3 L897.7 228.2 L898.2 228.1 L898.7 227.9 L899.2 227.8 L899.7 227.7 L900.2 227.6 L900.7 227.5 L901.2 227.4 L901.7 227.3 L902.2 227.2 L902.7 227.1 L903.2 227.0 L903.7 226.9 L904.2 226.8 L904.7 226.8 L905.2 226.7 L905.7 226.6 L906.2 226.5 L906.7 226.5 L907.2 226.4 L907.7 226.3 L908.2 226.3 L908.7 226.2 L909.2 226.1 L909.7 226.1 L910.2 226.0 L910.7 225.9 L911.2 225.9 L911.7 225.8 L912.2 225.8 L912.7 225.7 L913.2 225.7 L913.7 225.6 L914.2 225.6 L914.7 225.5 L915.2 225.5 L915.7 225.5 L916.2 225.4 L916.7 225.4 L917.2 225.3 L917.7 225.3 L918.2 225.3 L918.6 225.2 L919.1 225.2 L919.6 225.2 L920.1 225.2 L920.6 225.1 L921.1 225.1 L921.6 225.1 L922.1 225.1 L922.6 225.0 L923.1 225.0 L923.6 225.0 L924.1 225.0 L924.6 225.0 L925.1 225.0 L925.6 224.9 L926.1 224.9 L926.6 224.9 L927.1 224.9 L927.6 224.9 L928.1 224.9 L928.6 224.9 L929.1 224.9 L929.6 224.9 L930.1 224.9 L930.6 224.9 L931.1 224.9 L931.6 224.9 L932.1 224.9 L932.6 224.9 L933.1 224.9 L933.6 224.9 L934.1 225.0 L934.6 225.0 L935.1 225.0 L935.6 225.0 L936.1 225.0 L936.6 225.0 L937.1 225.1 L937.6 225.1 L938.1 225.1 L938.6 225.1 L939.1 225.2 L939.6 225.2 L940.1 225.2 L940.6 225.3 L941.1 225.3 L941.6 225.4 L942.0 225.4 L942.5 225.5 L943.0 225.5 L943.5 225.6 L944.0 225.6 L944.5 225.7 L945.0 225.7 L945.5 225.8 L946.0 225.8 L946.5 225.9 L947.0 226.0 L947.5 226.1 L948.0 226.1 L948.5 226.2 L949.0 226.3 L949.5 226.4 L950.0 226.5 L950.5 226.6 L951.0 226.7 L951.5 226.8 L952.0 226.9 L952.5 227.0 L953.0 227.2 L953.5 227.3 L954.0 227.5 L954.5 227.6 L955.0 227.8 L955.5 228.0 L956.0 228.2 L956.5 228.5 L957.0 228.7 L957.5 229.1 L958.0 229.5 L958.5 230.2 L959.0 234.1 L959.5 238.6 L960.0 243.1 L960.5 247.0 L961.0 251.4 L961.5 253.7 L962.0 254.6 L962.5 255.4 L963.0 256.3 L963.5 257.1 L964.0 258.0 L964.5 258.9 L964.9 259.7 L965.4 260.5 L965.9 261.4 L966.4 262.3 L966.9 263.1 L967.4 264.0 L967.9 264.8 L968.4 265.7 L968.9 266.6 L969.4 267.4 L969.9 268.3 L970.4 269.1 L970.9 270.0 L971.4 270.9 L971.9 271.7 L972.4 272.6 L972.9 273.5 L973.4 274.3 L973.9 275.2 L974.4 276.0 L974.9 276.9 L975.4 277.8 L975.9 278.6 L976.4 279.4 L976.9 279.8 L977.4 280.2 L977.9 280.6 L978.4 280.9 L978.9 281.3 L979.4 281.7 L979.9 282.1 L980.4 282.5 L980.9 282.9 L981.4 283.2 L981.9 283.6 L982.4 284.0 L982.9 284.4 L983.4 284.8 L983.9 285.2 L984.4 285.6 L984.9 285.9 L985.4 286.3 L985.9 286.7 L986.4 287.1 L986.9 287.5 L987.4 287.9 L987.9 288.2 L988.3 288.6 L988.8 289.0 L989.3 289.4 L989.8 289.8 L990.3 290.2 L990.8 290.5 L991.3 290.9 L991.8 291.3 L992.3 291.7 L992.8 292.1 L993.3 292.5 L993.8 292.8 L994.3 293.2 L994.8 293.6 L995.3 294.0 L995.8 294.4 L996.3 294.7 L996.8 295.1 L997.3 295.4 L997.8 295.8 L998.3 296.2 L998.8 296.5 L999.3 296.9 L999.8 297.2 L1000.3 297.6 L1000.8 298.0 L1001.3 298.3 L1001.8 298.7 L1002.3 299.0 L1002.8 299.4 L1003.3 299.8 L1003.8 300.1 L1004.3 300.5 L1004.8 300.8 L1005.3 301.2 L1005.8 301.6 L1006.3 301.9 L1006.8 302.3 L1007.3 302.6 L1007.8 303.0 L1008.3 303.3 L1008.8 303.7 L1009.3 304.1 L1009.8 304.4 L1010.3 304.8 L1010.8 305.1 L1011.2 305.5 L1011.7 305.9 L1012.2 306.2 L1012.7 306.6 L1013.2 306.9 L1013.7 307.3 L1014.2 307.7 L1014.7 308.0 L1015.2 308.4 L1015.7 308.8 L1016.2 309.2 L1016.7 309.8 L1017.2 310.4 L1017.7 311.3 L1018.2 319.8 L1018.2 319.8 L1017.7 321.7 L1017.2 322.5 L1016.7 323.1 L1016.2 323.7 L1015.7 324.1 L1015.2 324.5 L1014.7 324.9 L1014.2 325.3 L1013.7 325.6 L1013.2 325.9 L1012.7 326.2 L1012.2 326.5 L1011.7 326.8 L1011.2 327.0 L1010.8 327.3 L1010.3 327.5 L1009.8 327.8 L1009.3 328.0 L1008.8 328.2 L1008.3 328.5 L1007.8 328.7 L1007.3 328.9 L1006.8 329.1 L1006.3 329.3 L1005.8 329.5 L1005.3 329.6 L1004.8 329.8 L1004.3 330.0 L1003.8 330.2 L1003.3 330.4 L1002.8 330.5 L1002.3 330.7 L1001.8 330.8 L1001.3 331.0 L1000.8 331.2 L1000.3 331.3 L999.8 331.5 L999.3 331.6 L998.8 331.8 L998.3 331.9 L997.8 332.1 L997.3 332.2 L996.8 332.3 L996.3 332.5 L995.8 332.6 L995.3 332.7 L994.8 332.9 L994.3 333.0 L993.8 333.1 L993.3 333.2 L992.8 333.4 L992.3 333.5 L991.8 333.6 L991.3 333.7 L990.8 333.8 L990.3 334.0 L989.8 334.1 L989.3 334.2 L988.8 334.3 L988.3 334.4 L987.9 334.5 L987.4 334.6 L986.9 334.7 L986.4 334.8 L985.9 334.9 L985.4 335.0 L984.9 335.1 L984.4 335.2 L983.9 335.3 L983.4 335.4 L982.9 335.5 L982.4 335.6 L981.9 335.7 L981.4 335.8 L980.9 335.9 L980.4 336.0 L979.9 336.1 L979.4 336.2 L978.9 336.2 L978.4 336.3 L977.9 336.4 L977.4 336.5 L976.9 336.6 L976.4 336.7 L975.9 336.7 L975.4 336.8 L974.9 336.9 L974.4 337.0 L973.9 337.1 L973.4 337.1 L972.9 337.2 L972.4 337.3 L971.9 337.4 L971.4 337.4 L970.9 337.5 L970.4 337.6 L969.9 337.7 L969.4 337.7 L968.9 337.8 L968.4 337.9 L967.9 337.9 L967.4 338.0 L966.9 338.1 L966.4 338.1 L965.9 338.2 L965.4 338.3 L964.9 338.3 L964.5 338.4 L964.0 338.5 L963.5 338.5 L963.0 338.6 L962.5 338.6 L962.0 338.7 L961.5 338.8 L961.0 338.8 L960.5 338.9 L960.0 338.9 L959.5 339.0 L959.0 339.0 L958.5 339.1 L958.0 339.2 L957.5 339.2 L957.0 339.3 L956.5 339.3 L956.0 339.4 L955.5 339.4 L955.0 339.5 L954.5 339.5 L954.0 339.6 L953.5 339.6 L953.0 339.7 L952.5 339.7 L952.0 339.8 L951.5 339.8 L951.0 339.9 L950.5 339.9 L950.0 339.9 L949.5 340.0 L949.0 340.0 L948.5 340.1 L948.0 340.1 L947.5 340.2 L947.0 340.2 L946.5 340.2 L946.0 340.3 L945.5 340.3 L945.0 340.4 L944.5 340.4 L944.0 340.4 L943.5 340.5 L943.0 340.5 L942.5 340.5 L942.0 340.6 L941.6 340.6 L941.1 340.6 L940.6 340.7 L940.1 340.7 L939.6 340.7 L939.1 340.8 L938.6 340.8 L938.1 340.8 L937.6 340.9 L937.1 340.9 L936.6 340.9 L936.1 340.9 L935.6 341.0 L935.1 341.0 L934.6 341.0 L934.1 341.1 L933.6 341.1 L933.1 341.1 L932.6 341.1 L932.1 341.2 L931.6 341.2 L931.1 341.2 L930.6 341.2 L930.1 341.2 L929.6 341.3 L929.1 341.3 L928.6 341.3 L928.1 341.3 L927.6 341.3 L927.1 341.4 L926.6 341.4 L926.1 341.4 L925.6 341.4 L925.1 341.4 L924.6 341.5 L924.1 341.5 L923.6 341.5 L923.1 341.5 L922.6 341.5 L922.1 341.5 L921.6 341.5 L921.1 341.5 L920.6 341.6 L920.1 341.6 L919.6 341.6 L919.1 341.6 L918.6 341.6 L918.2 341.6 L917.7 341.6 L917.2 341.6 L916.7 341.6 L916.2 341.6 L915.7 341.6 L915.2 341.7 L914.7 341.7 L914.2 341.7 L913.7 341.7 L913.2 341.7 L912.7 341.7 L912.2 341.7 L911.7 341.7 L911.2 341.7 L910.7 341.7 L910.2 341.7 L909.7 341.7 L909.2 341.7 L908.7 341.7 L908.2 341.7 L907.7 341.7 L907.2 341.7 L906.7 341.7 L906.2 341.7 L905.7 341.7 L905.2 341.6 L904.7 341.6 L904.2 341.6 L903.7 341.6 L903.2 341.6 L902.7 341.6 L902.2 341.6 L901.7 341.6 L901.2 341.6 L900.7 341.6 L900.2 341.6 L899.7 341.5 L899.2 341.5 L898.7 341.5 L898.2 341.5 L897.7 341.5 L897.2 341.5 L896.7 341.5 L896.2 341.4 L895.7 341.4 L895.3 341.4 L894.8 341.4 L894.3 341.4 L893.8 341.4 L893.3 341.3 L892.8 341.3 L892.3 341.3 L891.8 341.3 L891.3 341.2 L890.8 341.2 L890.3 341.2 L889.8 341.2 L889.3 341.1 L888.8 341.1 L888.3 341.1 L887.8 341.1 L887.3 341.0 L886.8 341.0 L886.3 341.0 L885.8 340.9 L885.3 340.9 L884.8 340.9 L884.3 340.8 L883.8 340.8 L883.3 340.8 L882.8 340.7 L882.3 340.7 L881.8 340.7 L881.3 340.6 L880.8 340.6 L880.3 340.6 L879.8 340.5 L879.3 340.5 L878.8 340.4 L878.3 340.4 L877.8 340.3 L877.3 340.3 L876.8 340.3 L876.3 340.2 L875.8 340.2 L875.3 340.1 L874.8 340.1 L874.3 340.0 L873.8 340.0 L873.3 339.9 L872.8 339.9 L872.4 339.8 L871.9 339.7 L871.4 339.7 L870.9 339.6 L870.4 339.6 L869.9 339.5 L869.4 339.5 L868.9 339.4 L868.4 339.3 L867.9 339.3 L867.4 339.2 L866.9 339.1 L866.4 339.1 L865.9 339.0 L865.4 338.9 L864.9 338.9 L864.4 338.8 L863.9 338.7 L863.4 338.6 L862.9 338.6 L862.4 338.5 L861.9 338.4 L861.4 338.3 L860.9 338.2 L860.4 338.2 L859.9 338.1 L859.4 338.0 L858.9 337.9 L858.4 337.8 L857.9 337.7 L857.4 337.6 L856.9 337.5 L856.4 337.4 L855.9 337.3 L855.4 337.2 L854.9 337.1 L854.4 337.0 L853.9 336.9 L853.4 336.8 L852.9 336.7 L852.4 336.6 L851.9 336.5 L851.4 336.3 L850.9 336.2 L850.4 336.1 L849.9 336.0 L849.4 335.8 L849.0 335.7 L848.5 335.6 L848.0 335.4 L847.5 335.3 L847.0 335.1 L846.5 335.0 L846.0 334.8 L845.5 334.6 L845.0 334.5 L844.5 334.3 L844.0 334.1 L843.5 333.9 L843.0 333.7 L842.5 333.6 L842.0 333.3 L841.5 333.1 L841.0 332.9 L840.5 332.7 L840.0 332.4 L839.5 332.2 L839.0 331.9 L838.5 331.6 L838.0 331.3 L837.5 331.0 L837.0 330.6 L836.5 330.2 L836.0 329.8 L835.5 329.2 L835.0 328.6 L834.5 327.7 L834.0 319.2Z" fill="url(#gsh)"/><g clip-path="url(#clip4)"><path d="M958.5 230.2L957.5 250.6M958.5 230.2L959.1 256.3M951.1 235.4L959.1 256.3M951.1 235.4L938.7 261.3M925.3 238.9L938.7 261.3M925.3 238.9L913.6 262.5M899.7 238.0L913.6 262.5M899.7 238.0L889.1 258.5M888.6 233.4L889.1 258.5M888.6 233.4L889.4 253.7M957.5 250.6L976.9 280.5M959.1 256.3L976.9 280.5M959.1 256.3L968.6 287.1M959.1 256.3L947.9 291.5M938.7 261.3L947.9 291.5M938.7 261.3L926.5 293.3M913.6 262.5L926.5 293.3M913.6 262.5L898.2 292.8M913.6 262.5L880.6 290.0M889.1 258.5L880.6 290.0M889.1 258.5L873.1 284.3M889.4 253.7L873.1 284.3M969.0 275.9L996.7 295.4M976.9 280.5L996.7 295.4M976.9 280.5L996.5 300.0M976.9 280.5L988.0 305.0M968.6 287.1L988.0 305.0M968.6 287.1L972.9 309.2M947.9 291.5L972.9 309.2M947.9 291.5L946.6 313.0M926.5 293.3L946.6 313.0M926.5 293.3L922.7 314.5M926.5 293.3L901.1 314.4M898.2 292.8L901.1 314.4M898.2 292.8L877.5 312.4M880.6 290.0L877.5 312.4M880.6 290.0L862.3 309.1M880.6 290.0L854.9 305.3M873.1 284.3L854.9 305.3M873.1 284.3L854.5 300.2M873.1 284.3L862.1 295.4M996.7 295.4L1014.0 307.5M996.7 295.4L1017.9 311.9M996.5 300.0L1017.9 311.9M996.5 300.0L1013.3 318.8M988.0 305.0L1013.3 318.8M988.0 305.0L1002.0 323.7M988.0 305.0L987.0 327.6M972.9 309.2L987.0 327.6M972.9 309.2L965.6 331.2M946.6 313.0L965.6 331.2M946.6 313.0L937.8 333.8M922.7 314.5L937.8 333.8M922.7 314.5L910.0 334.7M901.1 314.4L910.0 334.7M901.1 314.4L883.9 333.8M901.1 314.4L865.4 332.0M877.5 312.4L865.4 332.0M877.5 312.4L848.2 328.5M862.3 309.1L848.2 328.5M862.3 309.1L837.2 323.9M854.9 305.3L837.2 323.9M854.9 305.3L834.1 318.5M854.5 300.2L834.1 318.5M854.5 300.2L838.3 313.5M1014.0 307.5L1017.3 317.3M1017.9 311.9L1017.3 317.3M1017.9 311.9L1016.6 323.3M1013.3 318.8L1016.6 323.3M1013.3 318.8L1009.1 328.1M1002.0 323.7L1009.1 328.1M1002.0 323.7L996.3 332.5M987.0 327.6L996.3 332.5M987.0 327.6L976.0 336.7M965.6 331.2L976.0 336.7M965.6 331.2L955.7 339.4M937.8 333.8L955.7 339.4M937.8 333.8L923.2 341.5M910.0 334.7L923.2 341.5M910.0 334.7L903.1 341.6M883.9 333.8L903.1 341.6M883.9 333.8L879.5 340.5M865.4 332.0L879.5 340.5M865.4 332.0L857.2 337.6M848.2 328.5L857.2 337.6M848.2 328.5L844.4 334.3M837.2 323.9L844.4 334.3M837.2 323.9L835.7 329.4M834.1 318.5L835.7 329.4M834.1 318.5L835.6 323.1M838.3 313.5L835.6 323.1" stroke="#183020" stroke-opacity=".85" stroke-width="1" fill="none"/><path d="M961.2 253.7 L961.2 254.2 L960.9 254.7 L960.5 255.2 L960.0 255.7 L959.3 256.2 L958.4 256.6 L957.4 257.1 L956.3 257.6 L955.0 258.0 L953.6 258.5 L952.1 258.9 L950.4 259.3 L948.6 259.7 L946.8 260.1 L944.8 260.4 L942.7 260.8 L940.6 261.1 L938.4 261.3 L936.1 261.6 L933.8 261.8 L931.5 262.0 L929.1 262.2 L926.7 262.3 L924.2 262.4 L921.8 262.5 L919.4 262.5 L917.0 262.5 L914.7 262.5 L912.4 262.4 L910.1 262.3 L907.9 262.2 L905.7 262.1 L903.7 261.9 L901.7 261.7 L899.9 261.4 L898.1 261.1 L896.4 260.9 L894.9 260.5 L893.5 260.2 L892.2 259.8 L891.1 259.4 L890.1 259.0 L889.2 258.6 L888.5 258.2 L888.0 257.7 L887.6 257.2 L887.3 256.8 L887.2 256.3" stroke="#183020" stroke-opacity=".85" stroke-width="1" fill="none"/><path d="M977.1 281.2 L976.9 281.9 L976.6 282.6 L976.1 283.2 L975.3 283.9 L974.3 284.6 L973.1 285.3 L971.7 286.0 L970.1 286.6 L968.3 287.3 L966.3 287.9 L964.2 288.5 L961.8 289.1 L959.3 289.6 L956.7 290.1 L953.9 290.6 L951.1 291.1 L948.1 291.5 L945.0 291.9 L941.8 292.3 L938.5 292.6 L935.2 292.8 L931.8 293.1 L928.5 293.3 L925.1 293.4 L921.7 293.5 L918.3 293.5 L914.9 293.6 L911.6 293.5 L908.3 293.4 L905.2 293.3 L902.1 293.1 L899.1 292.9 L896.2 292.7 L893.4 292.4 L890.8 292.0 L888.3 291.6 L886.0 291.2 L883.8 290.8 L881.8 290.3 L880.0 289.8 L878.4 289.2 L877.0 288.7 L875.8 288.1 L874.8 287.4 L874.1 286.8 L873.5 286.2 L873.2 285.5 L873.1 284.8" stroke="#183020" stroke-opacity=".85" stroke-width="1" fill="none"/><path d="M997.6 297.5 L997.4 298.4 L996.9 299.4 L996.2 300.3 L995.1 301.3 L993.7 302.2 L992.1 303.2 L990.1 304.1 L987.9 305.0 L985.4 305.9 L982.7 306.8 L979.7 307.6 L976.5 308.4 L973.0 309.2 L969.4 309.9 L965.6 310.6 L961.6 311.2 L957.4 311.8 L953.1 312.3 L948.7 312.8 L944.2 313.3 L939.6 313.6 L934.9 313.9 L930.3 314.2 L925.6 314.4 L920.8 314.5 L916.2 314.6 L911.5 314.6 L906.9 314.6 L902.4 314.4 L898.0 314.3 L893.7 314.0 L889.6 313.7 L885.6 313.4 L881.7 313.0 L878.1 312.5 L874.6 312.0 L871.4 311.4 L868.4 310.8 L865.7 310.1 L863.2 309.4 L861.0 308.6 L859.0 307.8 L857.4 307.0 L856.0 306.2 L854.9 305.3 L854.2 304.4 L853.7 303.5 L853.6 302.5" stroke="#183020" stroke-opacity=".85" stroke-width="1" fill="none"/><path d="M1018.0 312.8 L1017.8 314.0 L1017.2 315.2 L1016.2 316.4 L1014.9 317.7 L1013.1 318.9 L1011.0 320.1 L1008.5 321.3 L1005.7 322.4 L1002.5 323.5 L999.0 324.6 L995.2 325.7 L991.1 326.7 L986.7 327.7 L982.0 328.6 L977.1 329.5 L972.0 330.3 L966.7 331.1 L961.2 331.8 L955.6 332.4 L949.8 332.9 L944.0 333.4 L938.0 333.8 L932.0 334.2 L926.0 334.4 L920.0 334.6 L914.0 334.7 L908.1 334.7 L902.2 334.6 L896.4 334.5 L890.8 334.2 L885.3 333.9 L880.0 333.5 L874.9 333.1 L870.0 332.6 L865.4 332.0 L861.0 331.3 L856.8 330.6 L853.0 329.8 L849.5 328.9 L846.3 328.0 L843.5 327.0 L841.0 326.0 L838.9 325.0 L837.2 323.9 L835.8 322.7 L834.8 321.6 L834.2 320.4 L834.0 319.2" stroke="#183020" stroke-opacity=".85" stroke-width="1" fill="none"/><path d="M961.2 253.7 L961.2 254.2 L960.9 254.7 L960.5 255.2 L960.0 255.7 L959.3 256.2 L958.4 256.6 L957.4 257.1 L956.3 257.6 L955.0 258.0 L953.6 258.5 L952.1 258.9 L950.4 259.3 L948.6 259.7 L946.8 260.1 L944.8 260.4 L942.7 260.8 L940.6 261.1 L938.4 261.3 L936.1 261.6 L933.8 261.8 L931.5 262.0 L929.1 262.2 L926.7 262.3 L924.2 262.4 L921.8 262.5 L919.4 262.5 L917.0 262.5 L914.7 262.5 L912.4 262.4 L910.1 262.3 L907.9 262.2 L905.7 262.1 L903.7 261.9 L901.7 261.7 L899.9 261.4 L898.1 261.1 L896.4 260.9 L894.9 260.5 L893.5 260.2 L892.2 259.8 L891.1 259.4 L890.1 259.0 L889.2 258.6 L888.5 258.2 L888.0 257.7 L887.6 257.2 L887.3 256.8 L887.2 256.3" stroke="#183030" stroke-width="1.2" fill="none"/><path d="M977.1 281.2 L976.9 281.9 L976.6 282.6 L976.1 283.2 L975.3 283.9 L974.3 284.6 L973.1 285.3 L971.7 286.0 L970.1 286.6 L968.3 287.3 L966.3 287.9 L964.2 288.5 L961.8 289.1 L959.3 289.6 L956.7 290.1 L953.9 290.6 L951.1 291.1 L948.1 291.5 L945.0 291.9 L941.8 292.3 L938.5 292.6 L935.2 292.8 L931.8 293.1 L928.5 293.3 L925.1 293.4 L921.7 293.5 L918.3 293.5 L914.9 293.6 L911.6 293.5 L908.3 293.4 L905.2 293.3 L902.1 293.1 L899.1 292.9 L896.2 292.7 L893.4 292.4 L890.8 292.0 L888.3 291.6 L886.0 291.2 L883.8 290.8 L881.8 290.3 L880.0 289.8 L878.4 289.2 L877.0 288.7 L875.8 288.1 L874.8 287.4 L874.1 286.8 L873.5 286.2 L873.2 285.5 L873.1 284.8" stroke="#183030" stroke-width="1.2" fill="none"/><path d="M997.6 297.5 L997.4 298.4 L996.9 299.4 L996.2 300.3 L995.1 301.3 L993.7 302.2 L992.1 303.2 L990.1 304.1 L987.9 305.0 L985.4 305.9 L982.7 306.8 L979.7 307.6 L976.5 308.4 L973.0 309.2 L969.4 309.9 L965.6 310.6 L961.6 311.2 L957.4 311.8 L953.1 312.3 L948.7 312.8 L944.2 313.3 L939.6 313.6 L934.9 313.9 L930.3 314.2 L925.6 314.4 L920.8 314.5 L916.2 314.6 L911.5 314.6 L906.9 314.6 L902.4 314.4 L898.0 314.3 L893.7 314.0 L889.6 313.7 L885.6 313.4 L881.7 313.0 L878.1 312.5 L874.6 312.0 L871.4 311.4 L868.4 310.8 L865.7 310.1 L863.2 309.4 L861.0 308.6 L859.0 307.8 L857.4 307.0 L856.0 306.2 L854.9 305.3 L854.2 304.4 L853.7 303.5 L853.6 302.5" stroke="#183030" stroke-width="1.2" fill="none"/><path d="M1018.0 312.8 L1017.8 314.0 L1017.2 315.2 L1016.2 316.4 L1014.9 317.7 L1013.1 318.9 L1011.0 320.1 L1008.5 321.3 L1005.7 322.4 L1002.5 323.5 L999.0 324.6 L995.2 325.7 L991.1 326.7 L986.7 327.7 L982.0 328.6 L977.1 329.5 L972.0 330.3 L966.7 331.1 L961.2 331.8 L955.6 332.4 L949.8 332.9 L944.0 333.4 L938.0 333.8 L932.0 334.2 L926.0 334.4 L920.0 334.6 L914.0 334.7 L908.1 334.7 L902.2 334.6 L896.4 334.5 L890.8 334.2 L885.3 333.9 L880.0 333.5 L874.9 333.1 L870.0 332.6 L865.4 332.0 L861.0 331.3 L856.8 330.6 L853.0 329.8 L849.5 328.9 L846.3 328.0 L843.5 327.0 L841.0 326.0 L838.9 325.0 L837.2 323.9 L835.8 322.7 L834.8 321.6 L834.2 320.4 L834.0 319.2" stroke="#183030" stroke-width="1.2" fill="none"/><path d="M1018.2 319.8 L1018.0 321.0 L1017.4 322.2 L1016.5 323.4 L1015.1 324.7 L1013.3 325.9 L1011.2 327.1 L1008.7 328.3 L1005.9 329.4 L1002.7 330.5 L999.2 331.6 L995.4 332.7 L991.3 333.7 L986.9 334.7 L982.2 335.6 L977.3 336.5 L972.2 337.3 L966.9 338.1 L961.4 338.8 L955.8 339.4 L950.0 339.9 L944.2 340.4 L938.2 340.8 L932.2 341.2 L926.2 341.4 L920.2 341.6 L914.2 341.7 L908.3 341.7 L902.4 341.6 L896.6 341.5 L891.0 341.2 L885.5 340.9 L880.2 340.5 L875.1 340.1 L870.2 339.6 L865.6 339.0 L861.2 338.3 L857.0 337.6 L853.2 336.8 L849.7 335.9 L846.5 335.0 L843.7 334.0 L841.2 333.0 L839.1 332.0 L837.4 330.9 L836.0 329.7 L835.0 328.6 L834.4 327.4 L834.2 326.2" stroke="#183030" stroke-width="1.2" fill="none"/></g><path d="M834.0 319.2 L834.5 317.3 L835.0 316.5 L835.5 315.9 L836.0 315.3 L836.5 314.9 L837.0 314.5 L837.5 314.1 L838.0 313.6 L838.5 313.2 L839.0 312.8 L839.5 312.4 L840.0 312.0 L840.5 311.6 L841.0 311.2 L841.5 310.7 L842.0 310.3 L842.5 309.9 L843.0 309.5 L843.5 309.1 L844.0 308.7 L844.5 308.3 L845.0 307.9 L845.5 307.4 L846.0 307.0 L846.5 306.6 L847.0 306.2 L847.5 305.8 L848.0 305.4 L848.5 305.0 L849.0 304.6 L849.4 304.1 L849.9 303.7 L850.4 303.3 L850.9 302.9 L851.4 302.5 L851.9 302.1 L852.4 301.7 L852.9 301.3 L853.4 300.8 L853.9 300.4 L854.4 300.0 L854.9 299.6 L855.4 299.2 L855.9 298.8 L856.4 298.3 L856.9 297.9 L857.4 297.4 L857.9 297.0 L858.4 296.6 L858.9 296.1 L859.4 295.7 L859.9 295.2 L860.4 294.8 L860.9 294.4 L861.4 293.9 L861.9 293.5 L862.4 293.0 L862.9 292.6 L863.4 292.2 L863.9 291.7 L864.4 291.3 L864.9 290.8 L865.4 290.4 L865.9 290.0 L866.4 289.5 L866.9 289.1 L867.4 288.6 L867.9 288.2 L868.4 287.8 L868.9 287.3 L869.4 286.9 L869.9 286.4 L870.4 286.0 L870.9 285.6 L871.4 285.1 L871.9 284.7 L872.4 284.2 L872.8 283.8 L873.3 283.4 L873.8 282.8 L874.3 281.7 L874.8 280.8 L875.3 279.7 L875.8 278.8 L876.3 277.8 L876.8 276.8 L877.3 275.8 L877.8 274.8 L878.3 273.8 L878.8 272.8 L879.3 271.8 L879.8 270.8 L880.3 269.8 L880.8 268.8 L881.3 267.8 L881.8 266.8 L882.3 265.8 L882.8 264.8 L883.3 263.8 L883.8 262.8 L884.3 261.9 L884.8 260.8 L885.3 259.9 L885.8 258.8 L886.3 257.9 L886.8 256.8 L887.3 255.9 L887.8 247.0 L888.3 238.5 L888.8 232.5 L889.3 231.8 L889.8 231.4 L890.3 231.0 L890.8 230.7 L891.3 230.4 L891.8 230.2 L892.3 230.0 L892.8 229.8 L893.3 229.6 L893.8 229.4 L894.3 229.2 L894.8 229.0 L895.3 228.9 L895.7 228.7 L896.2 228.6 L896.7 228.4 L897.2 228.3 L897.7 228.2 L898.2 228.1 L898.7 227.9 L899.2 227.8 L899.7 227.7 L900.2 227.6 L900.7 227.5 L901.2 227.4 L901.7 227.3 L902.2 227.2 L902.7 227.1 L903.2 227.0 L903.7 226.9 L904.2 226.8 L904.7 226.8 L905.2 226.7 L905.7 226.6 L906.2 226.5 L906.7 226.5 L907.2 226.4 L907.7 226.3 L908.2 226.3 L908.7 226.2 L909.2 226.1 L909.7 226.1 L910.2 226.0 L910.7 225.9 L911.2 225.9 L911.7 225.8 L912.2 225.8 L912.7 225.7 L913.2 225.7 L913.7 225.6 L914.2 225.6 L914.7 225.5 L915.2 225.5 L915.7 225.5 L916.2 225.4 L916.7 225.4 L917.2 225.3 L917.7 225.3 L918.2 225.3 L918.6 225.2 L919.1 225.2 L919.6 225.2 L920.1 225.2 L920.6 225.1 L921.1 225.1 L921.6 225.1 L922.1 225.1 L922.6 225.0 L923.1 225.0 L923.6 225.0 L924.1 225.0 L924.6 225.0 L925.1 225.0 L925.6 224.9 L926.1 224.9 L926.6 224.9 L927.1 224.9 L927.6 224.9 L928.1 224.9 L928.6 224.9 L929.1 224.9 L929.6 224.9 L930.1 224.9 L930.6 224.9 L931.1 224.9 L931.6 224.9 L932.1 224.9 L932.6 224.9 L933.1 224.9 L933.6 224.9 L934.1 225.0 L934.6 225.0 L935.1 225.0 L935.6 225.0 L936.1 225.0 L936.6 225.0 L937.1 225.1 L937.6 225.1 L938.1 225.1 L938.6 225.1 L939.1 225.2 L939.6 225.2 L940.1 225.2 L940.6 225.3 L941.1 225.3 L941.6 225.4 L942.0 225.4 L942.5 225.5 L943.0 225.5 L943.5 225.6 L944.0 225.6 L944.5 225.7 L945.0 225.7 L945.5 225.8 L946.0 225.8 L946.5 225.9 L947.0 226.0 L947.5 226.1 L948.0 226.1 L948.5 226.2 L949.0 226.3 L949.5 226.4 L950.0 226.5 L950.5 226.6 L951.0 226.7 L951.5 226.8 L952.0 226.9 L952.5 227.0 L953.0 227.2 L953.5 227.3 L954.0 227.5 L954.5 227.6 L955.0 227.8 L955.5 228.0 L956.0 228.2 L956.5 228.5 L957.0 228.7 L957.5 229.1 L958.0 229.5 L958.5 230.2 L959.0 234.1 L959.5 238.6 L960.0 243.1 L960.5 247.0 L961.0 251.4 L961.5 253.7 L962.0 254.6 L962.5 255.4 L963.0 256.3 L963.5 257.1 L964.0 258.0 L964.5 258.9 L964.9 259.7 L965.4 260.5 L965.9 261.4 L966.4 262.3 L966.9 263.1 L967.4 264.0 L967.9 264.8 L968.4 265.7 L968.9 266.6 L969.4 267.4 L969.9 268.3 L970.4 269.1 L970.9 270.0 L971.4 270.9 L971.9 271.7 L972.4 272.6 L972.9 273.5 L973.4 274.3 L973.9 275.2 L974.4 276.0 L974.9 276.9 L975.4 277.8 L975.9 278.6 L976.4 279.4 L976.9 279.8 L977.4 280.2 L977.9 280.6 L978.4 280.9 L978.9 281.3 L979.4 281.7 L979.9 282.1 L980.4 282.5 L980.9 282.9 L981.4 283.2 L981.9 283.6 L982.4 284.0 L982.9 284.4 L983.4 284.8 L983.9 285.2 L984.4 285.6 L984.9 285.9 L985.4 286.3 L985.9 286.7 L986.4 287.1 L986.9 287.5 L987.4 287.9 L987.9 288.2 L988.3 288.6 L988.8 289.0 L989.3 289.4 L989.8 289.8 L990.3 290.2 L990.8 290.5 L991.3 290.9 L991.8 291.3 L992.3 291.7 L992.8 292.1 L993.3 292.5 L993.8 292.8 L994.3 293.2 L994.8 293.6 L995.3 294.0 L995.8 294.4 L996.3 294.7 L996.8 295.1 L997.3 295.4 L997.8 295.8 L998.3 296.2 L998.8 296.5 L999.3 296.9 L999.8 297.2 L1000.3 297.6 L1000.8 298.0 L1001.3 298.3 L1001.8 298.7 L1002.3 299.0 L1002.8 299.4 L1003.3 299.8 L1003.8 300.1 L1004.3 300.5 L1004.8 300.8 L1005.3 301.2 L1005.8 301.6 L1006.3 301.9 L1006.8 302.3 L1007.3 302.6 L1007.8 303.0 L1008.3 303.3 L1008.8 303.7 L1009.3 304.1 L1009.8 304.4 L1010.3 304.8 L1010.8 305.1 L1011.2 305.5 L1011.7 305.9 L1012.2 306.2 L1012.7 306.6 L1013.2 306.9 L1013.7 307.3 L1014.2 307.7 L1014.7 308.0 L1015.2 308.4 L1015.7 308.8 L1016.2 309.2 L1016.7 309.8 L1017.2 310.4 L1017.7 311.3 L1018.2 319.8 L1018.2 319.8 L1017.7 321.7 L1017.2 322.5 L1016.7 323.1 L1016.2 323.7 L1015.7 324.1 L1015.2 324.5 L1014.7 324.9 L1014.2 325.3 L1013.7 325.6 L1013.2 325.9 L1012.7 326.2 L1012.2 326.5 L1011.7 326.8 L1011.2 327.0 L1010.8 327.3 L1010.3 327.5 L1009.8 327.8 L1009.3 328.0 L1008.8 328.2 L1008.3 328.5 L1007.8 328.7 L1007.3 328.9 L1006.8 329.1 L1006.3 329.3 L1005.8 329.5 L1005.3 329.6 L1004.8 329.8 L1004.3 330.0 L1003.8 330.2 L1003.3 330.4 L1002.8 330.5 L1002.3 330.7 L1001.8 330.8 L1001.3 331.0 L1000.8 331.2 L1000.3 331.3 L999.8 331.5 L999.3 331.6 L998.8 331.8 L998.3 331.9 L997.8 332.1 L997.3 332.2 L996.8 332.3 L996.3 332.5 L995.8 332.6 L995.3 332.7 L994.8 332.9 L994.3 333.0 L993.8 333.1 L993.3 333.2 L992.8 333.4 L992.3 333.5 L991.8 333.6 L991.3 333.7 L990.8 333.8 L990.3 334.0 L989.8 334.1 L989.3 334.2 L988.8 334.3 L988.3 334.4 L987.9 334.5 L987.4 334.6 L986.9 334.7 L986.4 334.8 L985.9 334.9 L985.4 335.0 L984.9 335.1 L984.4 335.2 L983.9 335.3 L983.4 335.4 L982.9 335.5 L982.4 335.6 L981.9 335.7 L981.4 335.8 L980.9 335.9 L980.4 336.0 L979.9 336.1 L979.4 336.2 L978.9 336.2 L978.4 336.3 L977.9 336.4 L977.4 336.5 L976.9 336.6 L976.4 336.7 L975.9 336.7 L975.4 336.8 L974.9 336.9 L974.4 337.0 L973.9 337.1 L973.4 337.1 L972.9 337.2 L972.4 337.3 L971.9 337.4 L971.4 337.4 L970.9 337.5 L970.4 337.6 L969.9 337.7 L969.4 337.7 L968.9 337.8 L968.4 337.9 L967.9 337.9 L967.4 338.0 L966.9 338.1 L966.4 338.1 L965.9 338.2 L965.4 338.3 L964.9 338.3 L964.5 338.4 L964.0 338.5 L963.5 338.5 L963.0 338.6 L962.5 338.6 L962.0 338.7 L961.5 338.8 L961.0 338.8 L960.5 338.9 L960.0 338.9 L959.5 339.0 L959.0 339.0 L958.5 339.1 L958.0 339.2 L957.5 339.2 L957.0 339.3 L956.5 339.3 L956.0 339.4 L955.5 339.4 L955.0 339.5 L954.5 339.5 L954.0 339.6 L953.5 339.6 L953.0 339.7 L952.5 339.7 L952.0 339.8 L951.5 339.8 L951.0 339.9 L950.5 339.9 L950.0 339.9 L949.5 340.0 L949.0 340.0 L948.5 340.1 L948.0 340.1 L947.5 340.2 L947.0 340.2 L946.5 340.2 L946.0 340.3 L945.5 340.3 L945.0 340.4 L944.5 340.4 L944.0 340.4 L943.5 340.5 L943.0 340.5 L942.5 340.5 L942.0 340.6 L941.6 340.6 L941.1 340.6 L940.6 340.7 L940.1 340.7 L939.6 340.7 L939.1 340.8 L938.6 340.8 L938.1 340.8 L937.6 340.9 L937.1 340.9 L936.6 340.9 L936.1 340.9 L935.6 341.0 L935.1 341.0 L934.6 341.0 L934.1 341.1 L933.6 341.1 L933.1 341.1 L932.6 341.1 L932.1 341.2 L931.6 341.2 L931.1 341.2 L930.6 341.2 L930.1 341.2 L929.6 341.3 L929.1 341.3 L928.6 341.3 L928.1 341.3 L927.6 341.3 L927.1 341.4 L926.6 341.4 L926.1 341.4 L925.6 341.4 L925.1 341.4 L924.6 341.5 L924.1 341.5 L923.6 341.5 L923.1 341.5 L922.6 341.5 L922.1 341.5 L921.6 341.5 L921.1 341.5 L920.6 341.6 L920.1 341.6 L919.6 341.6 L919.1 341.6 L918.6 341.6 L918.2 341.6 L917.7 341.6 L917.2 341.6 L916.7 341.6 L916.2 341.6 L915.7 341.6 L915.2 341.7 L914.7 341.7 L914.2 341.7 L913.7 341.7 L913.2 341.7 L912.7 341.7 L912.2 341.7 L911.7 341.7 L911.2 341.7 L910.7 341.7 L910.2 341.7 L909.7 341.7 L909.2 341.7 L908.7 341.7 L908.2 341.7 L907.7 341.7 L907.2 341.7 L906.7 341.7 L906.2 341.7 L905.7 341.7 L905.2 341.6 L904.7 341.6 L904.2 341.6 L903.7 341.6 L903.2 341.6 L902.7 341.6 L902.2 341.6 L901.7 341.6 L901.2 341.6 L900.7 341.6 L900.2 341.6 L899.7 341.5 L899.2 341.5 L898.7 341.5 L898.2 341.5 L897.7 341.5 L897.2 341.5 L896.7 341.5 L896.2 341.4 L895.7 341.4 L895.3 341.4 L894.8 341.4 L894.3 341.4 L893.8 341.4 L893.3 341.3 L892.8 341.3 L892.3 341.3 L891.8 341.3 L891.3 341.2 L890.8 341.2 L890.3 341.2 L889.8 341.2 L889.3 341.1 L888.8 341.1 L888.3 341.1 L887.8 341.1 L887.3 341.0 L886.8 341.0 L886.3 341.0 L885.8 340.9 L885.3 340.9 L884.8 340.9 L884.3 340.8 L883.8 340.8 L883.3 340.8 L882.8 340.7 L882.3 340.7 L881.8 340.7 L881.3 340.6 L880.8 340.6 L880.3 340.6 L879.8 340.5 L879.3 340.5 L878.8 340.4 L878.3 340.4 L877.8 340.3 L877.3 340.3 L876.8 340.3 L876.3 340.2 L875.8 340.2 L875.3 340.1 L874.8 340.1 L874.3 340.0 L873.8 340.0 L873.3 339.9 L872.8 339.9 L872.4 339.8 L871.9 339.7 L871.4 339.7 L870.9 339.6 L870.4 339.6 L869.9 339.5 L869.4 339.5 L868.9 339.4 L868.4 339.3 L867.9 339.3 L867.4 339.2 L866.9 339.1 L866.4 339.1 L865.9 339.0 L865.4 338.9 L864.9 338.9 L864.4 338.8 L863.9 338.7 L863.4 338.6 L862.9 338.6 L862.4 338.5 L861.9 338.4 L861.4 338.3 L860.9 338.2 L860.4 338.2 L859.9 338.1 L859.4 338.0 L858.9 337.9 L858.4 337.8 L857.9 337.7 L857.4 337.6 L856.9 337.5 L856.4 337.4 L855.9 337.3 L855.4 337.2 L854.9 337.1 L854.4 337.0 L853.9 336.9 L853.4 336.8 L852.9 336.7 L852.4 336.6 L851.9 336.5 L851.4 336.3 L850.9 336.2 L850.4 336.1 L849.9 336.0 L849.4 335.8 L849.0 335.7 L848.5 335.6 L848.0 335.4 L847.5 335.3 L847.0 335.1 L846.5 335.0 L846.0 334.8 L845.5 334.6 L845.0 334.5 L844.5 334.3 L844.0 334.1 L843.5 333.9 L843.0 333.7 L842.5 333.6 L842.0 333.3 L841.5 333.1 L841.0 332.9 L840.5 332.7 L840.0 332.4 L839.5 332.2 L839.0 331.9 L838.5 331.6 L838.0 331.3 L837.5 331.0 L837.0 330.6 L836.5 330.2 L836.0 329.8 L835.5 329.2 L835.0 328.6 L834.5 327.7 L834.0 319.2Z" fill="none" stroke="#1a2a3a" stroke-width="1" stroke-opacity=".8"/><path d="M684 363L738 258Q760 226 790 228L884 222" stroke="#4a1a10" stroke-width="12" fill="none" stroke-linecap="butt"/><path d="M684 363L738 258Q760 226 790 228L884 222" stroke="#823216" stroke-width="8.5" fill="none"/><path d="M684 363L738 258Q760 226 790 228L884 222" stroke="#a04020" stroke-width="3" fill="none" stroke-opacity=".5" transform="translate(-1,-1)"/><g clip-path="url(#hornclip)" opacity=".6"><rect x="683.6" y="363.5" width="1.2" height="1.2" fill="#303050"/><rect x="683.6" y="366.2" width="1.2" height="1.2" fill="#5a2010"/><rect x="681.6" y="362.2" width="1.2" height="1.2" fill="#5a2010"/><rect x="680.8" y="360.4" width="1.2" height="1.2" fill="#2a2040"/><rect x="685.2" y="364.8" width="1.2" height="1.2" fill="#2a2040"/><rect x="685.8" y="360.3" width="1.2" height="1.2" fill="#303050"/><rect x="686.7" y="361.4" width="1.2" height="1.2" fill="#5a2010"/><rect x="686.5" y="363.4" width="1.2" height="1.2" fill="#2a2040"/><rect x="681.8" y="356.7" width="1.2" height="1.2" fill="#5a2010"/><rect x="686.7" y="362.0" width="1.2" height="1.2" fill="#c04020"/><rect x="685.7" y="361.7" width="1.2" height="1.2" fill="#5a2010"/><rect x="687.5" y="358.6" width="1.2" height="1.2" fill="#2a2040"/><rect x="686.3" y="355.8" width="1.2" height="1.2" fill="#2a2040"/><rect x="688.6" y="356.1" width="1.2" height="1.2" fill="#5a2010"/><rect x="687.3" y="352.6" width="1.2" height="1.2" fill="#2a2040"/><rect x="686.3" y="360.0" width="1.2" height="1.2" fill="#303050"/><rect x="683.7" y="351.7" width="1.2" height="1.2" fill="#2a2040"/><rect x="685.0" y="359.8" width="1.2" height="1.2" fill="#2a2040"/><rect x="687.8" y="359.4" width="1.2" height="1.2" fill="#303050"/><rect x="687.3" y="355.7" width="1.2" height="1.2" fill="#5a2010"/><rect x="691.0" y="352.2" width="1.2" height="1.2" fill="#2a2040"/><rect x="686.8" y="349.9" width="1.2" height="1.2" fill="#303050"/><rect x="691.3" y="349.9" width="1.2" height="1.2" fill="#5a2010"/><rect x="690.8" y="349.0" width="1.2" height="1.2" fill="#303050"/><rect x="692.1" y="349.6" width="1.2" height="1.2" fill="#5a2010"/><rect x="688.9" y="349.7" width="1.2" height="1.2" fill="#5a2010"/><rect x="689.1" y="350.6" width="1.2" height="1.2" fill="#303050"/><rect x="689.1" y="349.0" width="1.2" height="1.2" fill="#c04020"/><rect x="693.6" y="355.0" width="1.2" height="1.2" fill="#c04020"/><rect x="694.8" y="346.4" width="1.2" height="1.2" fill="#5a2010"/><rect x="689.8" y="353.1" width="1.2" height="1.2" fill="#2a2040"/><rect x="686.6" y="346.7" width="1.2" height="1.2" fill="#303050"/><rect x="689.0" y="351.5" width="1.2" height="1.2" fill="#c04020"/><rect x="694.2" y="348.0" width="1.2" height="1.2" fill="#2a2040"/><rect x="688.0" y="348.9" width="1.2" height="1.2" fill="#5a2010"/><rect x="687.3" y="346.9" width="1.2" height="1.2" fill="#303050"/><rect x="688.7" y="348.0" width="1.2" height="1.2" fill="#5a2010"/><rect x="695.4" y="344.4" width="1.2" height="1.2" fill="#5a2010"/><rect x="690.8" y="343.9" width="1.2" height="1.2" fill="#5a2010"/><rect x="694.6" y="343.3" width="1.2" height="1.2" fill="#5a2010"/><rect x="694.7" y="344.5" width="1.2" height="1.2" fill="#303050"/><rect x="693.9" y="344.8" width="1.2" height="1.2" fill="#2a2040"/><rect x="689.9" y="344.7" width="1.2" height="1.2" fill="#c04020"/><rect x="691.1" y="346.5" width="1.2" height="1.2" fill="#c04020"/><rect x="693.2" y="347.4" width="1.2" height="1.2" fill="#303050"/><rect x="692.0" y="340.8" width="1.2" height="1.2" fill="#2a2040"/><rect x="691.0" y="342.7" width="1.2" height="1.2" fill="#2a2040"/><rect x="692.4" y="346.6" width="1.2" height="1.2" fill="#5a2010"/><rect x="697.0" y="338.1" width="1.2" height="1.2" fill="#303050"/><rect x="694.3" y="338.0" width="1.2" height="1.2" fill="#5a2010"/><rect x="693.3" y="341.4" width="1.2" height="1.2" fill="#5a2010"/><rect x="691.6" y="337.9" width="1.2" height="1.2" fill="#303050"/><rect x="700.0" y="341.7" width="1.2" height="1.2" fill="#5a2010"/><rect x="696.5" y="344.1" width="1.2" height="1.2" fill="#303050"/><rect x="699.8" y="341.2" width="1.2" height="1.2" fill="#2a2040"/><rect x="691.8" y="340.6" width="1.2" height="1.2" fill="#303050"/><rect x="692.7" y="336.8" width="1.2" height="1.2" fill="#5a2010"/><rect x="701.1" y="334.7" width="1.2" height="1.2" fill="#c04020"/><rect x="699.2" y="341.2" width="1.2" height="1.2" fill="#5a2010"/><rect x="699.7" y="341.4" width="1.2" height="1.2" fill="#c04020"/><rect x="693.8" y="336.5" width="1.2" height="1.2" fill="#2a2040"/><rect x="700.8" y="336.0" width="1.2" height="1.2" fill="#2a2040"/><rect x="701.2" y="336.5" width="1.2" height="1.2" fill="#303050"/><rect x="696.9" y="331.5" width="1.2" height="1.2" fill="#2a2040"/><rect x="694.6" y="336.3" width="1.2" height="1.2" fill="#c04020"/><rect x="701.8" y="337.1" width="1.2" height="1.2" fill="#303050"/><rect x="702.8" y="335.9" width="1.2" height="1.2" fill="#303050"/><rect x="698.3" y="337.2" width="1.2" height="1.2" fill="#2a2040"/><rect x="699.5" y="333.4" width="1.2" height="1.2" fill="#c04020"/><rect x="700.2" y="333.1" width="1.2" height="1.2" fill="#5a2010"/><rect x="703.9" y="328.9" width="1.2" height="1.2" fill="#303050"/><rect x="697.6" y="328.0" width="1.2" height="1.2" fill="#c04020"/><rect x="697.0" y="332.5" width="1.2" height="1.2" fill="#5a2010"/><rect x="702.5" y="330.1" width="1.2" height="1.2" fill="#303050"/><rect x="700.6" y="328.3" width="1.2" height="1.2" fill="#303050"/><rect x="702.1" y="327.9" width="1.2" height="1.2" fill="#303050"/><rect x="703.8" y="332.0" width="1.2" height="1.2" fill="#5a2010"/><rect x="704.5" y="328.7" width="1.2" height="1.2" fill="#c04020"/><rect x="698.9" y="325.6" width="1.2" height="1.2" fill="#c04020"/><rect x="704.6" y="332.0" width="1.2" height="1.2" fill="#2a2040"/><rect x="706.1" y="326.0" width="1.2" height="1.2" fill="#5a2010"/><rect x="698.5" y="327.7" width="1.2" height="1.2" fill="#5a2010"/><rect x="705.4" y="326.1" width="1.2" height="1.2" fill="#303050"/><rect x="704.0" y="329.1" width="1.2" height="1.2" fill="#303050"/><rect x="701.3" y="329.2" width="1.2" height="1.2" fill="#c04020"/><rect x="706.3" y="322.1" width="1.2" height="1.2" fill="#c04020"/><rect x="704.0" y="323.7" width="1.2" height="1.2" fill="#2a2040"/><rect x="704.6" y="324.5" width="1.2" height="1.2" fill="#5a2010"/><rect x="699.5" y="327.5" width="1.2" height="1.2" fill="#5a2010"/><rect x="706.3" y="327.2" width="1.2" height="1.2" fill="#2a2040"/><rect x="703.8" y="324.8" width="1.2" height="1.2" fill="#c04020"/><rect x="708.4" y="325.3" width="1.2" height="1.2" fill="#5a2010"/><rect x="707.6" y="320.6" width="1.2" height="1.2" fill="#2a2040"/><rect x="707.0" y="323.1" width="1.2" height="1.2" fill="#2a2040"/><rect x="702.3" y="319.8" width="1.2" height="1.2" fill="#c04020"/><rect x="705.5" y="325.9" width="1.2" height="1.2" fill="#5a2010"/><rect x="704.6" y="323.6" width="1.2" height="1.2" fill="#5a2010"/><rect x="701.9" y="324.9" width="1.2" height="1.2" fill="#303050"/><rect x="702.7" y="319.7" width="1.2" height="1.2" fill="#2a2040"/><rect x="704.9" y="320.7" width="1.2" height="1.2" fill="#c04020"/><rect x="706.2" y="320.6" width="1.2" height="1.2" fill="#5a2010"/><rect x="702.9" y="322.5" width="1.2" height="1.2" fill="#2a2040"/><rect x="704.4" y="322.0" width="1.2" height="1.2" fill="#2a2040"/><rect x="711.2" y="318.7" width="1.2" height="1.2" fill="#c04020"/><rect x="705.3" y="319.5" width="1.2" height="1.2" fill="#2a2040"/><rect x="706.0" y="313.7" width="1.2" height="1.2" fill="#303050"/><rect x="706.4" y="315.9" width="1.2" height="1.2" fill="#c04020"/><rect x="707.7" y="312.4" width="1.2" height="1.2" fill="#2a2040"/><rect x="707.7" y="311.6" width="1.2" height="1.2" fill="#c04020"/><rect x="710.0" y="319.5" width="1.2" height="1.2" fill="#303050"/><rect x="705.6" y="315.0" width="1.2" height="1.2" fill="#303050"/><rect x="712.8" y="314.8" width="1.2" height="1.2" fill="#2a2040"/><rect x="711.5" y="313.5" width="1.2" height="1.2" fill="#c04020"/><rect x="712.2" y="314.6" width="1.2" height="1.2" fill="#5a2010"/><rect x="709.9" y="316.2" width="1.2" height="1.2" fill="#c04020"/><rect x="708.0" y="312.1" width="1.2" height="1.2" fill="#5a2010"/><rect x="708.3" y="309.0" width="1.2" height="1.2" fill="#c04020"/><rect x="710.8" y="309.6" width="1.2" height="1.2" fill="#2a2040"/><rect x="710.6" y="312.3" width="1.2" height="1.2" fill="#2a2040"/><rect x="710.9" y="307.3" width="1.2" height="1.2" fill="#303050"/><rect x="711.4" y="314.9" width="1.2" height="1.2" fill="#2a2040"/><rect x="710.9" y="312.2" width="1.2" height="1.2" fill="#2a2040"/><rect x="715.3" y="309.3" width="1.2" height="1.2" fill="#303050"/><rect x="709.4" y="309.4" width="1.2" height="1.2" fill="#5a2010"/><rect x="710.5" y="312.4" width="1.2" height="1.2" fill="#303050"/><rect x="712.1" y="305.2" width="1.2" height="1.2" fill="#303050"/><rect x="713.4" y="311.7" width="1.2" height="1.2" fill="#5a2010"/><rect x="714.2" y="312.2" width="1.2" height="1.2" fill="#2a2040"/><rect x="710.0" y="304.5" width="1.2" height="1.2" fill="#c04020"/><rect x="711.2" y="305.7" width="1.2" height="1.2" fill="#303050"/><rect x="709.7" y="308.2" width="1.2" height="1.2" fill="#2a2040"/><rect x="716.4" y="307.2" width="1.2" height="1.2" fill="#5a2010"/><rect x="715.5" y="308.7" width="1.2" height="1.2" fill="#2a2040"/><rect x="712.6" y="304.5" width="1.2" height="1.2" fill="#5a2010"/><rect x="714.5" y="307.6" width="1.2" height="1.2" fill="#5a2010"/><rect x="714.4" y="307.5" width="1.2" height="1.2" fill="#5a2010"/><rect x="712.2" y="305.7" width="1.2" height="1.2" fill="#c04020"/><rect x="718.2" y="301.8" width="1.2" height="1.2" fill="#c04020"/><rect x="718.6" y="299.9" width="1.2" height="1.2" fill="#5a2010"/><rect x="718.5" y="299.3" width="1.2" height="1.2" fill="#5a2010"/><rect x="712.2" y="298.0" width="1.2" height="1.2" fill="#303050"/><rect x="711.9" y="304.7" width="1.2" height="1.2" fill="#303050"/><rect x="716.3" y="302.7" width="1.2" height="1.2" fill="#5a2010"/><rect x="715.1" y="302.5" width="1.2" height="1.2" fill="#2a2040"/><rect x="712.8" y="300.6" width="1.2" height="1.2" fill="#c04020"/><rect x="720.1" y="304.2" width="1.2" height="1.2" fill="#2a2040"/><rect x="718.7" y="300.3" width="1.2" height="1.2" fill="#c04020"/><rect x="716.9" y="300.8" width="1.2" height="1.2" fill="#5a2010"/><rect x="720.0" y="298.1" width="1.2" height="1.2" fill="#2a2040"/><rect x="713.1" y="298.7" width="1.2" height="1.2" fill="#303050"/><rect x="714.6" y="294.5" width="1.2" height="1.2" fill="#5a2010"/><rect x="714.8" y="294.3" width="1.2" height="1.2" fill="#c04020"/><rect x="722.0" y="292.9" width="1.2" height="1.2" fill="#2a2040"/><rect x="714.9" y="298.1" width="1.2" height="1.2" fill="#2a2040"/><rect x="721.0" y="294.1" width="1.2" height="1.2" fill="#303050"/><rect x="718.0" y="294.3" width="1.2" height="1.2" fill="#5a2010"/><rect x="720.0" y="290.4" width="1.2" height="1.2" fill="#2a2040"/><rect x="722.2" y="291.9" width="1.2" height="1.2" fill="#303050"/><rect x="718.3" y="292.7" width="1.2" height="1.2" fill="#5a2010"/><rect x="720.5" y="290.2" width="1.2" height="1.2" fill="#2a2040"/><rect x="718.4" y="289.3" width="1.2" height="1.2" fill="#303050"/><rect x="720.6" y="290.2" width="1.2" height="1.2" fill="#c04020"/><rect x="723.2" y="289.9" width="1.2" height="1.2" fill="#2a2040"/><rect x="722.6" y="294.6" width="1.2" height="1.2" fill="#303050"/><rect x="717.6" y="289.7" width="1.2" height="1.2" fill="#c04020"/><rect x="723.3" y="293.6" width="1.2" height="1.2" fill="#303050"/><rect x="718.7" y="287.5" width="1.2" height="1.2" fill="#c04020"/><rect x="719.6" y="286.8" width="1.2" height="1.2" fill="#c04020"/><rect x="726.2" y="293.1" width="1.2" height="1.2" fill="#2a2040"/><rect x="719.4" y="293.5" width="1.2" height="1.2" fill="#c04020"/><rect x="720.8" y="290.1" width="1.2" height="1.2" fill="#5a2010"/><rect x="722.5" y="287.6" width="1.2" height="1.2" fill="#303050"/><rect x="724.0" y="289.6" width="1.2" height="1.2" fill="#303050"/><rect x="727.0" y="283.5" width="1.2" height="1.2" fill="#2a2040"/><rect x="725.3" y="284.7" width="1.2" height="1.2" fill="#303050"/><rect x="723.2" y="289.2" width="1.2" height="1.2" fill="#303050"/><rect x="719.2" y="283.8" width="1.2" height="1.2" fill="#c04020"/><rect x="727.3" y="286.5" width="1.2" height="1.2" fill="#303050"/><rect x="728.3" y="285.7" width="1.2" height="1.2" fill="#2a2040"/><rect x="725.3" y="287.9" width="1.2" height="1.2" fill="#2a2040"/><rect x="724.9" y="285.8" width="1.2" height="1.2" fill="#2a2040"/><rect x="723.5" y="288.2" width="1.2" height="1.2" fill="#303050"/><rect x="724.7" y="280.4" width="1.2" height="1.2" fill="#303050"/><rect x="725.3" y="284.2" width="1.2" height="1.2" fill="#303050"/><rect x="729.4" y="281.8" width="1.2" height="1.2" fill="#303050"/><rect x="726.3" y="281.3" width="1.2" height="1.2" fill="#c04020"/><rect x="725.7" y="279.6" width="1.2" height="1.2" fill="#c04020"/><rect x="727.3" y="283.9" width="1.2" height="1.2" fill="#2a2040"/><rect x="721.9" y="278.5" width="1.2" height="1.2" fill="#2a2040"/><rect x="727.5" y="279.9" width="1.2" height="1.2" fill="#303050"/><rect x="722.7" y="278.2" width="1.2" height="1.2" fill="#303050"/><rect x="722.7" y="284.3" width="1.2" height="1.2" fill="#c04020"/><rect x="723.4" y="282.6" width="1.2" height="1.2" fill="#303050"/><rect x="729.2" y="276.8" width="1.2" height="1.2" fill="#5a2010"/><rect x="723.6" y="274.5" width="1.2" height="1.2" fill="#303050"/><rect x="724.4" y="282.3" width="1.2" height="1.2" fill="#5a2010"/><rect x="729.0" y="273.8" width="1.2" height="1.2" fill="#303050"/><rect x="727.7" y="274.6" width="1.2" height="1.2" fill="#2a2040"/><rect x="727.3" y="273.3" width="1.2" height="1.2" fill="#c04020"/><rect x="728.0" y="277.9" width="1.2" height="1.2" fill="#303050"/><rect x="729.9" y="276.8" width="1.2" height="1.2" fill="#303050"/><rect x="727.8" y="277.7" width="1.2" height="1.2" fill="#5a2010"/><rect x="733.5" y="276.7" width="1.2" height="1.2" fill="#5a2010"/><rect x="729.3" y="274.7" width="1.2" height="1.2" fill="#c04020"/><rect x="732.5" y="274.9" width="1.2" height="1.2" fill="#c04020"/><rect x="727.9" y="274.7" width="1.2" height="1.2" fill="#5a2010"/><rect x="731.5" y="275.2" width="1.2" height="1.2" fill="#5a2010"/><rect x="734.4" y="272.9" width="1.2" height="1.2" fill="#5a2010"/><rect x="734.2" y="267.9" width="1.2" height="1.2" fill="#2a2040"/><rect x="726.4" y="269.8" width="1.2" height="1.2" fill="#2a2040"/><rect x="732.4" y="267.5" width="1.2" height="1.2" fill="#c04020"/><rect x="727.4" y="267.4" width="1.2" height="1.2" fill="#5a2010"/><rect x="732.2" y="271.4" width="1.2" height="1.2" fill="#c04020"/><rect x="731.6" y="268.9" width="1.2" height="1.2" fill="#c04020"/><rect x="730.7" y="271.6" width="1.2" height="1.2" fill="#2a2040"/><rect x="734.9" y="268.9" width="1.2" height="1.2" fill="#5a2010"/><rect x="732.1" y="270.7" width="1.2" height="1.2" fill="#303050"/><rect x="735.4" y="267.3" width="1.2" height="1.2" fill="#c04020"/><rect x="731.2" y="270.0" width="1.2" height="1.2" fill="#5a2010"/><rect x="732.4" y="266.4" width="1.2" height="1.2" fill="#2a2040"/><rect x="733.2" y="265.2" width="1.2" height="1.2" fill="#2a2040"/><rect x="732.9" y="267.4" width="1.2" height="1.2" fill="#303050"/><rect x="732.1" y="268.4" width="1.2" height="1.2" fill="#2a2040"/><rect x="732.2" y="269.6" width="1.2" height="1.2" fill="#2a2040"/><rect x="736.2" y="265.0" width="1.2" height="1.2" fill="#c04020"/><rect x="732.4" y="261.8" width="1.2" height="1.2" fill="#c04020"/><rect x="736.3" y="262.6" width="1.2" height="1.2" fill="#2a2040"/><rect x="733.3" y="263.6" width="1.2" height="1.2" fill="#c04020"/><rect x="734.7" y="266.0" width="1.2" height="1.2" fill="#c04020"/><rect x="734.9" y="260.7" width="1.2" height="1.2" fill="#5a2010"/><rect x="732.0" y="265.3" width="1.2" height="1.2" fill="#2a2040"/><rect x="734.5" y="261.4" width="1.2" height="1.2" fill="#303050"/><rect x="738.9" y="263.6" width="1.2" height="1.2" fill="#c04020"/><rect x="738.9" y="261.9" width="1.2" height="1.2" fill="#5a2010"/><rect x="733.7" y="263.0" width="1.2" height="1.2" fill="#c04020"/><rect x="739.5" y="258.1" width="1.2" height="1.2" fill="#2a2040"/><rect x="737.5" y="260.4" width="1.2" height="1.2" fill="#2a2040"/><rect x="738.5" y="262.5" width="1.2" height="1.2" fill="#2a2040"/><rect x="738.3" y="257.1" width="1.2" height="1.2" fill="#2a2040"/><rect x="736.1" y="256.8" width="1.2" height="1.2" fill="#2a2040"/><rect x="741.6" y="254.3" width="1.2" height="1.2" fill="#5a2010"/><rect x="734.4" y="260.8" width="1.2" height="1.2" fill="#303050"/><rect x="736.8" y="253.9" width="1.2" height="1.2" fill="#c04020"/><rect x="741.5" y="255.5" width="1.2" height="1.2" fill="#c04020"/><rect x="743.0" y="253.4" width="1.2" height="1.2" fill="#5a2010"/><rect x="740.2" y="255.2" width="1.2" height="1.2" fill="#2a2040"/><rect x="743.2" y="257.1" width="1.2" height="1.2" fill="#303050"/><rect x="743.7" y="257.8" width="1.2" height="1.2" fill="#c04020"/><rect x="745.7" y="254.7" width="1.2" height="1.2" fill="#2a2040"/><rect x="746.0" y="256.1" width="1.2" height="1.2" fill="#2a2040"/><rect x="743.8" y="252.4" width="1.2" height="1.2" fill="#2a2040"/><rect x="742.9" y="249.8" width="1.2" height="1.2" fill="#5a2010"/><rect x="742.5" y="246.1" width="1.2" height="1.2" fill="#303050"/><rect x="746.4" y="247.6" width="1.2" height="1.2" fill="#303050"/><rect x="745.3" y="246.0" width="1.2" height="1.2" fill="#2a2040"/><rect x="745.7" y="249.9" width="1.2" height="1.2" fill="#c04020"/><rect x="748.5" y="249.0" width="1.2" height="1.2" fill="#5a2010"/><rect x="750.8" y="248.8" width="1.2" height="1.2" fill="#2a2040"/><rect x="749.1" y="249.0" width="1.2" height="1.2" fill="#2a2040"/><rect x="746.6" y="242.6" width="1.2" height="1.2" fill="#c04020"/><rect x="747.0" y="241.7" width="1.2" height="1.2" fill="#303050"/><rect x="750.4" y="241.6" width="1.2" height="1.2" fill="#5a2010"/><rect x="754.3" y="242.1" width="1.2" height="1.2" fill="#c04020"/><rect x="751.8" y="246.9" width="1.2" height="1.2" fill="#303050"/><rect x="755.1" y="241.7" width="1.2" height="1.2" fill="#303050"/><rect x="755.6" y="240.4" width="1.2" height="1.2" fill="#2a2040"/><rect x="753.0" y="238.3" width="1.2" height="1.2" fill="#2a2040"/><rect x="750.6" y="237.5" width="1.2" height="1.2" fill="#303050"/><rect x="758.7" y="242.4" width="1.2" height="1.2" fill="#c04020"/><rect x="757.0" y="235.8" width="1.2" height="1.2" fill="#5a2010"/><rect x="759.2" y="242.1" width="1.2" height="1.2" fill="#c04020"/><rect x="755.2" y="236.5" width="1.2" height="1.2" fill="#303050"/><rect x="757.8" y="234.8" width="1.2" height="1.2" fill="#5a2010"/><rect x="759.3" y="234.6" width="1.2" height="1.2" fill="#5a2010"/><rect x="759.4" y="241.4" width="1.2" height="1.2" fill="#c04020"/><rect x="758.3" y="232.9" width="1.2" height="1.2" fill="#5a2010"/><rect x="754.9" y="239.0" width="1.2" height="1.2" fill="#5a2010"/><rect x="762.3" y="232.3" width="1.2" height="1.2" fill="#c04020"/><rect x="761.7" y="235.5" width="1.2" height="1.2" fill="#303050"/><rect x="762.4" y="231.5" width="1.2" height="1.2" fill="#c04020"/><rect x="757.7" y="231.7" width="1.2" height="1.2" fill="#5a2010"/><rect x="765.8" y="230.8" width="1.2" height="1.2" fill="#303050"/><rect x="760.7" y="234.2" width="1.2" height="1.2" fill="#303050"/><rect x="760.2" y="236.8" width="1.2" height="1.2" fill="#c04020"/><rect x="763.0" y="232.2" width="1.2" height="1.2" fill="#c04020"/><rect x="769.1" y="234.6" width="1.2" height="1.2" fill="#2a2040"/><rect x="764.7" y="234.1" width="1.2" height="1.2" fill="#2a2040"/><rect x="767.5" y="234.0" width="1.2" height="1.2" fill="#2a2040"/><rect x="768.7" y="227.5" width="1.2" height="1.2" fill="#303050"/><rect x="769.2" y="231.6" width="1.2" height="1.2" fill="#c04020"/><rect x="769.2" y="230.9" width="1.2" height="1.2" fill="#2a2040"/><rect x="771.8" y="234.4" width="1.2" height="1.2" fill="#5a2010"/><rect x="773.6" y="227.6" width="1.2" height="1.2" fill="#303050"/><rect x="773.9" y="233.0" width="1.2" height="1.2" fill="#c04020"/><rect x="773.6" y="230.8" width="1.2" height="1.2" fill="#2a2040"/><rect x="769.2" y="227.6" width="1.2" height="1.2" fill="#2a2040"/><rect x="771.2" y="233.9" width="1.2" height="1.2" fill="#303050"/><rect x="774.7" y="228.3" width="1.2" height="1.2" fill="#303050"/><rect x="770.4" y="226.2" width="1.2" height="1.2" fill="#2a2040"/><rect x="770.8" y="230.6" width="1.2" height="1.2" fill="#5a2010"/><rect x="772.6" y="228.2" width="1.2" height="1.2" fill="#303050"/><rect x="776.3" y="225.4" width="1.2" height="1.2" fill="#5a2010"/><rect x="772.7" y="233.2" width="1.2" height="1.2" fill="#303050"/><rect x="776.1" y="225.0" width="1.2" height="1.2" fill="#303050"/><rect x="782.2" y="225.3" width="1.2" height="1.2" fill="#5a2010"/><rect x="780.7" y="231.4" width="1.2" height="1.2" fill="#303050"/><rect x="779.6" y="232.1" width="1.2" height="1.2" fill="#2a2040"/><rect x="781.8" y="229.4" width="1.2" height="1.2" fill="#c04020"/><rect x="785.5" y="230.8" width="1.2" height="1.2" fill="#2a2040"/><rect x="779.0" y="225.4" width="1.2" height="1.2" fill="#c04020"/><rect x="784.0" y="224.5" width="1.2" height="1.2" fill="#303050"/><rect x="780.0" y="226.5" width="1.2" height="1.2" fill="#c04020"/><rect x="787.0" y="228.9" width="1.2" height="1.2" fill="#5a2010"/><rect x="781.9" y="228.3" width="1.2" height="1.2" fill="#c04020"/><rect x="786.0" y="226.6" width="1.2" height="1.2" fill="#5a2010"/><rect x="786.2" y="225.2" width="1.2" height="1.2" fill="#5a2010"/><rect x="787.6" y="223.6" width="1.2" height="1.2" fill="#5a2010"/><rect x="789.5" y="224.6" width="1.2" height="1.2" fill="#303050"/><rect x="789.2" y="229.7" width="1.2" height="1.2" fill="#c04020"/><rect x="784.8" y="231.3" width="1.2" height="1.2" fill="#c04020"/><rect x="789.7" y="224.6" width="1.2" height="1.2" fill="#5a2010"/><rect x="787.6" y="228.6" width="1.2" height="1.2" fill="#2a2040"/><rect x="791.5" y="225.8" width="1.2" height="1.2" fill="#c04020"/><rect x="791.9" y="224.5" width="1.2" height="1.2" fill="#2a2040"/><rect x="790.0" y="231.5" width="1.2" height="1.2" fill="#5a2010"/><rect x="794.2" y="226.6" width="1.2" height="1.2" fill="#5a2010"/><rect x="790.0" y="228.3" width="1.2" height="1.2" fill="#2a2040"/><rect x="792.4" y="227.0" width="1.2" height="1.2" fill="#5a2010"/><rect x="792.0" y="229.3" width="1.2" height="1.2" fill="#303050"/><rect x="794.8" y="229.0" width="1.2" height="1.2" fill="#2a2040"/><rect x="791.6" y="226.9" width="1.2" height="1.2" fill="#2a2040"/><rect x="791.5" y="226.7" width="1.2" height="1.2" fill="#303050"/><rect x="792.7" y="227.8" width="1.2" height="1.2" fill="#c04020"/><rect x="793.3" y="231.5" width="1.2" height="1.2" fill="#2a2040"/><rect x="797.9" y="223.4" width="1.2" height="1.2" fill="#5a2010"/><rect x="795.7" y="227.6" width="1.2" height="1.2" fill="#2a2040"/><rect x="797.2" y="226.7" width="1.2" height="1.2" fill="#303050"/><rect x="799.8" y="227.4" width="1.2" height="1.2" fill="#303050"/><rect x="801.5" y="230.7" width="1.2" height="1.2" fill="#303050"/><rect x="801.4" y="224.0" width="1.2" height="1.2" fill="#2a2040"/><rect x="803.0" y="227.6" width="1.2" height="1.2" fill="#303050"/><rect x="798.7" y="223.1" width="1.2" height="1.2" fill="#2a2040"/><rect x="798.5" y="228.4" width="1.2" height="1.2" fill="#303050"/><rect x="802.4" y="228.2" width="1.2" height="1.2" fill="#c04020"/><rect x="804.7" y="230.7" width="1.2" height="1.2" fill="#5a2010"/><rect x="797.9" y="226.8" width="1.2" height="1.2" fill="#303050"/><rect x="806.5" y="227.0" width="1.2" height="1.2" fill="#2a2040"/><rect x="802.5" y="224.9" width="1.2" height="1.2" fill="#c04020"/><rect x="804.6" y="231.1" width="1.2" height="1.2" fill="#2a2040"/><rect x="807.7" y="229.2" width="1.2" height="1.2" fill="#c04020"/><rect x="807.4" y="226.4" width="1.2" height="1.2" fill="#5a2010"/><rect x="801.6" y="229.3" width="1.2" height="1.2" fill="#2a2040"/><rect x="808.7" y="223.4" width="1.2" height="1.2" fill="#5a2010"/><rect x="801.7" y="227.4" width="1.2" height="1.2" fill="#303050"/><rect x="801.5" y="224.7" width="1.2" height="1.2" fill="#c04020"/><rect x="801.7" y="224.0" width="1.2" height="1.2" fill="#303050"/><rect x="810.5" y="229.8" width="1.2" height="1.2" fill="#303050"/><rect x="803.7" y="228.7" width="1.2" height="1.2" fill="#5a2010"/><rect x="803.8" y="222.6" width="1.2" height="1.2" fill="#c04020"/><rect x="806.1" y="226.8" width="1.2" height="1.2" fill="#303050"/><rect x="812.2" y="224.1" width="1.2" height="1.2" fill="#2a2040"/><rect x="806.1" y="229.8" width="1.2" height="1.2" fill="#c04020"/><rect x="813.3" y="222.4" width="1.2" height="1.2" fill="#5a2010"/><rect x="810.0" y="224.4" width="1.2" height="1.2" fill="#2a2040"/><rect x="812.0" y="224.9" width="1.2" height="1.2" fill="#c04020"/><rect x="814.8" y="224.6" width="1.2" height="1.2" fill="#303050"/><rect x="813.5" y="223.3" width="1.2" height="1.2" fill="#303050"/><rect x="810.9" y="223.6" width="1.2" height="1.2" fill="#c04020"/><rect x="809.1" y="228.3" width="1.2" height="1.2" fill="#c04020"/><rect x="809.7" y="224.2" width="1.2" height="1.2" fill="#c04020"/><rect x="816.1" y="225.4" width="1.2" height="1.2" fill="#2a2040"/><rect x="814.3" y="224.1" width="1.2" height="1.2" fill="#c04020"/><rect x="818.0" y="223.6" width="1.2" height="1.2" fill="#5a2010"/><rect x="812.4" y="227.7" width="1.2" height="1.2" fill="#2a2040"/><rect x="815.0" y="222.6" width="1.2" height="1.2" fill="#2a2040"/><rect x="815.7" y="222.3" width="1.2" height="1.2" fill="#c04020"/><rect x="816.7" y="225.6" width="1.2" height="1.2" fill="#2a2040"/><rect x="813.3" y="230.7" width="1.2" height="1.2" fill="#5a2010"/><rect x="815.0" y="224.3" width="1.2" height="1.2" fill="#2a2040"/><rect x="814.4" y="229.8" width="1.2" height="1.2" fill="#2a2040"/><rect x="819.3" y="229.9" width="1.2" height="1.2" fill="#303050"/><rect x="813.7" y="229.7" width="1.2" height="1.2" fill="#2a2040"/><rect x="816.3" y="226.6" width="1.2" height="1.2" fill="#c04020"/><rect x="817.5" y="226.0" width="1.2" height="1.2" fill="#2a2040"/><rect x="820.2" y="226.1" width="1.2" height="1.2" fill="#5a2010"/><rect x="820.9" y="228.5" width="1.2" height="1.2" fill="#2a2040"/><rect x="822.0" y="223.6" width="1.2" height="1.2" fill="#303050"/><rect x="821.5" y="223.8" width="1.2" height="1.2" fill="#5a2010"/><rect x="819.8" y="226.4" width="1.2" height="1.2" fill="#303050"/><rect x="819.8" y="223.3" width="1.2" height="1.2" fill="#2a2040"/><rect x="823.6" y="229.3" width="1.2" height="1.2" fill="#5a2010"/><rect x="821.3" y="226.9" width="1.2" height="1.2" fill="#303050"/><rect x="826.6" y="225.9" width="1.2" height="1.2" fill="#c04020"/><rect x="827.1" y="221.6" width="1.2" height="1.2" fill="#2a2040"/><rect x="828.4" y="226.4" width="1.2" height="1.2" fill="#5a2010"/><rect x="825.9" y="221.8" width="1.2" height="1.2" fill="#303050"/><rect x="821.6" y="224.0" width="1.2" height="1.2" fill="#c04020"/><rect x="828.1" y="225.7" width="1.2" height="1.2" fill="#5a2010"/><rect x="825.6" y="223.4" width="1.2" height="1.2" fill="#303050"/><rect x="828.4" y="228.6" width="1.2" height="1.2" fill="#303050"/><rect x="823.7" y="224.8" width="1.2" height="1.2" fill="#c04020"/><rect x="829.4" y="227.4" width="1.2" height="1.2" fill="#2a2040"/><rect x="825.2" y="227.8" width="1.2" height="1.2" fill="#5a2010"/><rect x="825.3" y="225.1" width="1.2" height="1.2" fill="#2a2040"/><rect x="825.0" y="224.7" width="1.2" height="1.2" fill="#5a2010"/><rect x="825.8" y="226.0" width="1.2" height="1.2" fill="#303050"/><rect x="829.7" y="221.6" width="1.2" height="1.2" fill="#2a2040"/><rect x="832.0" y="227.4" width="1.2" height="1.2" fill="#5a2010"/><rect x="829.5" y="221.9" width="1.2" height="1.2" fill="#5a2010"/><rect x="830.6" y="221.6" width="1.2" height="1.2" fill="#5a2010"/><rect x="831.1" y="223.8" width="1.2" height="1.2" fill="#5a2010"/><rect x="828.2" y="224.4" width="1.2" height="1.2" fill="#2a2040"/><rect x="835.4" y="225.8" width="1.2" height="1.2" fill="#5a2010"/><rect x="832.9" y="224.3" width="1.2" height="1.2" fill="#5a2010"/><rect x="833.1" y="227.7" width="1.2" height="1.2" fill="#5a2010"/><rect x="833.4" y="222.9" width="1.2" height="1.2" fill="#5a2010"/><rect x="834.9" y="224.2" width="1.2" height="1.2" fill="#303050"/><rect x="837.5" y="224.9" width="1.2" height="1.2" fill="#303050"/><rect x="840.5" y="226.7" width="1.2" height="1.2" fill="#303050"/><rect x="833.4" y="224.0" width="1.2" height="1.2" fill="#2a2040"/><rect x="832.9" y="223.0" width="1.2" height="1.2" fill="#c04020"/><rect x="838.1" y="225.2" width="1.2" height="1.2" fill="#c04020"/><rect x="838.0" y="225.5" width="1.2" height="1.2" fill="#5a2010"/><rect x="835.9" y="223.7" width="1.2" height="1.2" fill="#5a2010"/><rect x="840.9" y="227.4" width="1.2" height="1.2" fill="#5a2010"/><rect x="841.3" y="226.9" width="1.2" height="1.2" fill="#2a2040"/><rect x="835.5" y="223.2" width="1.2" height="1.2" fill="#303050"/><rect x="839.4" y="228.0" width="1.2" height="1.2" fill="#303050"/><rect x="839.2" y="227.2" width="1.2" height="1.2" fill="#2a2040"/><rect x="839.0" y="225.7" width="1.2" height="1.2" fill="#303050"/><rect x="837.6" y="221.6" width="1.2" height="1.2" fill="#5a2010"/><rect x="837.5" y="223.0" width="1.2" height="1.2" fill="#303050"/><rect x="842.4" y="226.4" width="1.2" height="1.2" fill="#c04020"/><rect x="841.0" y="224.2" width="1.2" height="1.2" fill="#303050"/><rect x="840.4" y="221.9" width="1.2" height="1.2" fill="#c04020"/><rect x="843.9" y="224.1" width="1.2" height="1.2" fill="#5a2010"/><rect x="843.5" y="227.8" width="1.2" height="1.2" fill="#5a2010"/><rect x="840.9" y="223.4" width="1.2" height="1.2" fill="#5a2010"/><rect x="842.2" y="227.6" width="1.2" height="1.2" fill="#303050"/><rect x="846.1" y="227.2" width="1.2" height="1.2" fill="#c04020"/><rect x="847.8" y="220.5" width="1.2" height="1.2" fill="#5a2010"/><rect x="846.9" y="223.1" width="1.2" height="1.2" fill="#2a2040"/><rect x="851.4" y="227.7" width="1.2" height="1.2" fill="#5a2010"/><rect x="849.9" y="222.2" width="1.2" height="1.2" fill="#303050"/><rect x="844.9" y="224.2" width="1.2" height="1.2" fill="#303050"/><rect x="847.2" y="222.7" width="1.2" height="1.2" fill="#303050"/><rect x="851.1" y="221.7" width="1.2" height="1.2" fill="#303050"/><rect x="846.5" y="226.6" width="1.2" height="1.2" fill="#c04020"/><rect x="851.6" y="221.8" width="1.2" height="1.2" fill="#2a2040"/><rect x="852.3" y="227.8" width="1.2" height="1.2" fill="#5a2010"/><rect x="850.9" y="221.9" width="1.2" height="1.2" fill="#c04020"/><rect x="852.9" y="219.8" width="1.2" height="1.2" fill="#303050"/><rect x="848.6" y="227.7" width="1.2" height="1.2" fill="#303050"/><rect x="850.0" y="222.9" width="1.2" height="1.2" fill="#c04020"/><rect x="852.7" y="222.4" width="1.2" height="1.2" fill="#c04020"/><rect x="849.1" y="219.8" width="1.2" height="1.2" fill="#c04020"/><rect x="857.4" y="224.5" width="1.2" height="1.2" fill="#c04020"/><rect x="856.8" y="227.4" width="1.2" height="1.2" fill="#303050"/><rect x="853.8" y="222.4" width="1.2" height="1.2" fill="#c04020"/><rect x="850.6" y="225.7" width="1.2" height="1.2" fill="#5a2010"/><rect x="858.2" y="224.9" width="1.2" height="1.2" fill="#303050"/><rect x="856.8" y="219.9" width="1.2" height="1.2" fill="#2a2040"/><rect x="859.7" y="227.2" width="1.2" height="1.2" fill="#303050"/><rect x="860.9" y="222.7" width="1.2" height="1.2" fill="#5a2010"/><rect x="859.3" y="221.6" width="1.2" height="1.2" fill="#303050"/><rect x="856.4" y="228.0" width="1.2" height="1.2" fill="#5a2010"/><rect x="859.6" y="221.5" width="1.2" height="1.2" fill="#c04020"/><rect x="860.2" y="221.2" width="1.2" height="1.2" fill="#2a2040"/><rect x="863.4" y="227.9" width="1.2" height="1.2" fill="#2a2040"/><rect x="857.2" y="223.5" width="1.2" height="1.2" fill="#2a2040"/><rect x="861.6" y="224.0" width="1.2" height="1.2" fill="#c04020"/><rect x="858.4" y="219.9" width="1.2" height="1.2" fill="#2a2040"/><rect x="859.8" y="225.4" width="1.2" height="1.2" fill="#303050"/><rect x="863.1" y="227.6" width="1.2" height="1.2" fill="#5a2010"/><rect x="859.3" y="224.5" width="1.2" height="1.2" fill="#303050"/><rect x="865.1" y="221.5" width="1.2" height="1.2" fill="#303050"/><rect x="861.4" y="225.6" width="1.2" height="1.2" fill="#303050"/><rect x="861.0" y="221.1" width="1.2" height="1.2" fill="#c04020"/><rect x="866.1" y="227.0" width="1.2" height="1.2" fill="#5a2010"/><rect x="867.7" y="227.7" width="1.2" height="1.2" fill="#2a2040"/><rect x="868.7" y="221.5" width="1.2" height="1.2" fill="#303050"/><rect x="865.3" y="224.8" width="1.2" height="1.2" fill="#2a2040"/><rect x="863.1" y="226.4" width="1.2" height="1.2" fill="#303050"/><rect x="862.1" y="220.9" width="1.2" height="1.2" fill="#303050"/><rect x="864.9" y="224.3" width="1.2" height="1.2" fill="#c04020"/><rect x="869.0" y="221.5" width="1.2" height="1.2" fill="#c04020"/><rect x="871.2" y="220.4" width="1.2" height="1.2" fill="#5a2010"/><rect x="868.6" y="222.3" width="1.2" height="1.2" fill="#5a2010"/><rect x="870.1" y="225.9" width="1.2" height="1.2" fill="#5a2010"/><rect x="865.6" y="221.9" width="1.2" height="1.2" fill="#c04020"/><rect x="867.5" y="220.1" width="1.2" height="1.2" fill="#2a2040"/><rect x="869.6" y="224.6" width="1.2" height="1.2" fill="#5a2010"/><rect x="868.8" y="220.8" width="1.2" height="1.2" fill="#c04020"/><rect x="872.0" y="221.9" width="1.2" height="1.2" fill="#5a2010"/><rect x="867.7" y="224.7" width="1.2" height="1.2" fill="#2a2040"/><rect x="875.1" y="220.0" width="1.2" height="1.2" fill="#c04020"/><rect x="874.8" y="227.2" width="1.2" height="1.2" fill="#2a2040"/><rect x="871.9" y="226.4" width="1.2" height="1.2" fill="#303050"/><rect x="870.7" y="218.8" width="1.2" height="1.2" fill="#303050"/><rect x="876.4" y="225.7" width="1.2" height="1.2" fill="#c04020"/><rect x="872.1" y="224.6" width="1.2" height="1.2" fill="#303050"/><rect x="877.0" y="226.9" width="1.2" height="1.2" fill="#303050"/><rect x="877.1" y="220.0" width="1.2" height="1.2" fill="#c04020"/><rect x="878.2" y="219.4" width="1.2" height="1.2" fill="#5a2010"/><rect x="879.5" y="223.0" width="1.2" height="1.2" fill="#c04020"/><rect x="879.9" y="221.9" width="1.2" height="1.2" fill="#5a2010"/><rect x="875.8" y="218.1" width="1.2" height="1.2" fill="#5a2010"/><rect x="875.4" y="221.5" width="1.2" height="1.2" fill="#c04020"/><rect x="875.9" y="222.2" width="1.2" height="1.2" fill="#c04020"/><rect x="878.8" y="222.9" width="1.2" height="1.2" fill="#5a2010"/><rect x="875.4" y="225.8" width="1.2" height="1.2" fill="#c04020"/><rect x="880.8" y="217.8" width="1.2" height="1.2" fill="#c04020"/><rect x="880.1" y="226.7" width="1.2" height="1.2" fill="#5a2010"/><rect x="884.7" y="221.4" width="1.2" height="1.2" fill="#2a2040"/><rect x="880.4" y="224.9" width="1.2" height="1.2" fill="#303050"/><rect x="881.7" y="219.6" width="1.2" height="1.2" fill="#c04020"/><rect x="880.1" y="226.1" width="1.2" height="1.2" fill="#5a2010"/><rect x="886.6" y="221.6" width="1.2" height="1.2" fill="#2a2040"/><rect x="880.1" y="217.8" width="1.2" height="1.2" fill="#5a2010"/><rect x="883.4" y="223.6" width="1.2" height="1.2" fill="#c04020"/></g><path d="M883.0 213.4 L883.5 212.1 L884.0 211.6 L884.5 211.2 L885.0 210.8 L885.5 210.5 L886.0 210.3 L886.5 210.0 L887.0 209.8 L887.5 209.6 L888.0 209.4 L888.5 209.2 L889.0 209.0 L889.5 208.8 L890.0 208.6 L890.5 208.5 L890.9 208.3 L891.4 208.2 L891.9 208.0 L892.4 207.9 L892.9 207.8 L893.4 207.6 L893.9 207.5 L894.4 207.4 L894.9 207.3 L895.4 207.2 L895.9 207.1 L896.4 207.0 L896.9 206.8 L897.4 206.7 L897.9 206.6 L898.4 206.6 L898.9 206.5 L899.4 206.4 L899.9 206.3 L900.4 206.2 L900.9 206.1 L901.4 206.0 L901.9 205.9 L902.4 205.9 L902.9 205.8 L903.4 205.7 L903.9 205.6 L904.4 205.6 L904.9 205.5 L905.4 205.4 L905.9 205.4 L906.4 205.3 L906.8 205.2 L907.3 205.2 L907.8 205.1 L908.3 205.1 L908.8 205.0 L909.3 205.0 L909.8 204.9 L910.3 204.9 L910.8 204.8 L911.3 204.8 L911.8 204.7 L912.3 204.7 L912.8 204.6 L913.3 204.6 L913.8 204.5 L914.3 204.5 L914.8 204.5 L915.3 204.4 L915.8 204.4 L916.3 204.3 L916.8 204.3 L917.3 204.3 L917.8 204.3 L918.3 204.2 L918.8 204.2 L919.3 204.2 L919.8 204.1 L920.3 204.1 L920.8 204.1 L921.3 204.1 L921.8 204.0 L922.3 204.0 L922.7 204.0 L923.2 204.0 L923.7 204.0 L924.2 204.0 L924.7 203.9 L925.2 203.9 L925.7 203.9 L926.2 203.9 L926.7 203.9 L927.2 203.9 L927.7 203.9 L928.2 203.9 L928.7 203.9 L929.2 203.9 L929.7 203.9 L930.2 203.9 L930.7 203.9 L931.2 203.9 L931.7 203.9 L932.2 203.9 L932.7 203.9 L933.2 203.9 L933.7 203.9 L934.2 203.9 L934.7 203.9 L935.2 204.0 L935.7 204.0 L936.2 204.0 L936.7 204.0 L937.2 204.0 L937.7 204.0 L938.2 204.1 L938.6 204.1 L939.1 204.1 L939.6 204.1 L940.1 204.2 L940.6 204.2 L941.1 204.2 L941.6 204.3 L942.1 204.3 L942.6 204.3 L943.1 204.4 L943.6 204.4 L944.1 204.5 L944.6 204.5 L945.1 204.6 L945.6 204.6 L946.1 204.7 L946.6 204.7 L947.1 204.8 L947.6 204.8 L948.1 204.9 L948.6 205.0 L949.1 205.0 L949.6 205.1 L950.1 205.2 L950.6 205.2 L951.1 205.3 L951.6 205.4 L952.1 205.5 L952.6 205.6 L953.1 205.7 L953.6 205.8 L954.1 205.9 L954.5 206.0 L955.0 206.1 L955.5 206.2 L956.0 206.3 L956.5 206.5 L957.0 206.6 L957.5 206.8 L958.0 206.9 L958.5 207.1 L959.0 207.3 L959.5 207.5 L960.0 207.7 L960.5 207.9 L961.0 208.2 L961.5 208.5 L962.0 208.9 L962.5 209.4 L963.0 210.5 L963.5 227.6 L963.5 227.6 L963.0 228.9 L962.5 229.4 L962.0 229.8 L961.5 230.2 L961.0 230.5 L960.5 230.7 L960.0 231.0 L959.5 231.2 L959.0 231.4 L958.5 231.6 L958.0 231.8 L957.5 232.0 L957.0 232.2 L956.5 232.4 L956.0 232.5 L955.5 232.7 L955.0 232.8 L954.5 233.0 L954.1 233.1 L953.6 233.2 L953.1 233.4 L952.6 233.5 L952.1 233.6 L951.6 233.7 L951.1 233.8 L950.6 233.9 L950.1 234.0 L949.6 234.2 L949.1 234.3 L948.6 234.4 L948.1 234.4 L947.6 234.5 L947.1 234.6 L946.6 234.7 L946.1 234.8 L945.6 234.9 L945.1 235.0 L944.6 235.1 L944.1 235.1 L943.6 235.2 L943.1 235.3 L942.6 235.4 L942.1 235.4 L941.6 235.5 L941.1 235.6 L940.6 235.6 L940.1 235.7 L939.6 235.8 L939.1 235.8 L938.6 235.9 L938.2 235.9 L937.7 236.0 L937.2 236.0 L936.7 236.1 L936.2 236.1 L935.7 236.2 L935.2 236.2 L934.7 236.3 L934.2 236.3 L933.7 236.4 L933.2 236.4 L932.7 236.5 L932.2 236.5 L931.7 236.5 L931.2 236.6 L930.7 236.6 L930.2 236.7 L929.7 236.7 L929.2 236.7 L928.7 236.7 L928.2 236.8 L927.7 236.8 L927.2 236.8 L926.7 236.9 L926.2 236.9 L925.7 236.9 L925.2 236.9 L924.7 237.0 L924.2 237.0 L923.7 237.0 L923.2 237.0 L922.7 237.0 L922.3 237.0 L921.8 237.1 L921.3 237.1 L920.8 237.1 L920.3 237.1 L919.8 237.1 L919.3 237.1 L918.8 237.1 L918.3 237.1 L917.8 237.1 L917.3 237.1 L916.8 237.1 L916.3 237.1 L915.8 237.1 L915.3 237.1 L914.8 237.1 L914.3 237.1 L913.8 237.1 L913.3 237.1 L912.8 237.1 L912.3 237.1 L911.8 237.1 L911.3 237.0 L910.8 237.0 L910.3 237.0 L909.8 237.0 L909.3 237.0 L908.8 237.0 L908.3 236.9 L907.8 236.9 L907.3 236.9 L906.8 236.9 L906.4 236.8 L905.9 236.8 L905.4 236.8 L904.9 236.7 L904.4 236.7 L903.9 236.7 L903.4 236.6 L902.9 236.6 L902.4 236.5 L901.9 236.5 L901.4 236.4 L900.9 236.4 L900.4 236.3 L899.9 236.3 L899.4 236.2 L898.9 236.2 L898.4 236.1 L897.9 236.0 L897.4 236.0 L896.9 235.9 L896.4 235.8 L895.9 235.8 L895.4 235.7 L894.9 235.6 L894.4 235.5 L893.9 235.4 L893.4 235.3 L892.9 235.2 L892.4 235.1 L891.9 235.0 L891.4 234.9 L890.9 234.8 L890.5 234.7 L890.0 234.5 L889.5 234.4 L889.0 234.2 L888.5 234.1 L888.0 233.9 L887.5 233.7 L887.0 233.5 L886.5 233.3 L886.0 233.1 L885.5 232.8 L885.0 232.5 L884.5 232.1 L884.0 231.6 L883.5 230.5 L883.0 213.4Z" fill="url(#gv)"/><path d="M883.0 213.4 L883.5 212.1 L884.0 211.6 L884.5 211.2 L885.0 210.8 L885.5 210.5 L886.0 210.3 L886.5 210.0 L887.0 209.8 L887.5 209.6 L888.0 209.4 L888.5 209.2 L889.0 209.0 L889.5 208.8 L890.0 208.6 L890.5 208.5 L890.9 208.3 L891.4 208.2 L891.9 208.0 L892.4 207.9 L892.9 207.8 L893.4 207.6 L893.9 207.5 L894.4 207.4 L894.9 207.3 L895.4 207.2 L895.9 207.1 L896.4 207.0 L896.9 206.8 L897.4 206.7 L897.9 206.6 L898.4 206.6 L898.9 206.5 L899.4 206.4 L899.9 206.3 L900.4 206.2 L900.9 206.1 L901.4 206.0 L901.9 205.9 L902.4 205.9 L902.9 205.8 L903.4 205.7 L903.9 205.6 L904.4 205.6 L904.9 205.5 L905.4 205.4 L905.9 205.4 L906.4 205.3 L906.8 205.2 L907.3 205.2 L907.8 205.1 L908.3 205.1 L908.8 205.0 L909.3 205.0 L909.8 204.9 L910.3 204.9 L910.8 204.8 L911.3 204.8 L911.8 204.7 L912.3 204.7 L912.8 204.6 L913.3 204.6 L913.8 204.5 L914.3 204.5 L914.8 204.5 L915.3 204.4 L915.8 204.4 L916.3 204.3 L916.8 204.3 L917.3 204.3 L917.8 204.3 L918.3 204.2 L918.8 204.2 L919.3 204.2 L919.8 204.1 L920.3 204.1 L920.8 204.1 L921.3 204.1 L921.8 204.0 L922.3 204.0 L922.7 204.0 L923.2 204.0 L923.7 204.0 L924.2 204.0 L924.7 203.9 L925.2 203.9 L925.7 203.9 L926.2 203.9 L926.7 203.9 L927.2 203.9 L927.7 203.9 L928.2 203.9 L928.7 203.9 L929.2 203.9 L929.7 203.9 L930.2 203.9 L930.7 203.9 L931.2 203.9 L931.7 203.9 L932.2 203.9 L932.7 203.9 L933.2 203.9 L933.7 203.9 L934.2 203.9 L934.7 203.9 L935.2 204.0 L935.7 204.0 L936.2 204.0 L936.7 204.0 L937.2 204.0 L937.7 204.0 L938.2 204.1 L938.6 204.1 L939.1 204.1 L939.6 204.1 L940.1 204.2 L940.6 204.2 L941.1 204.2 L941.6 204.3 L942.1 204.3 L942.6 204.3 L943.1 204.4 L943.6 204.4 L944.1 204.5 L944.6 204.5 L945.1 204.6 L945.6 204.6 L946.1 204.7 L946.6 204.7 L947.1 204.8 L947.6 204.8 L948.1 204.9 L948.6 205.0 L949.1 205.0 L949.6 205.1 L950.1 205.2 L950.6 205.2 L951.1 205.3 L951.6 205.4 L952.1 205.5 L952.6 205.6 L953.1 205.7 L953.6 205.8 L954.1 205.9 L954.5 206.0 L955.0 206.1 L955.5 206.2 L956.0 206.3 L956.5 206.5 L957.0 206.6 L957.5 206.8 L958.0 206.9 L958.5 207.1 L959.0 207.3 L959.5 207.5 L960.0 207.7 L960.5 207.9 L961.0 208.2 L961.5 208.5 L962.0 208.9 L962.5 209.4 L963.0 210.5 L963.5 227.6 L963.5 227.6 L963.0 228.9 L962.5 229.4 L962.0 229.8 L961.5 230.2 L961.0 230.5 L960.5 230.7 L960.0 231.0 L959.5 231.2 L959.0 231.4 L958.5 231.6 L958.0 231.8 L957.5 232.0 L957.0 232.2 L956.5 232.4 L956.0 232.5 L955.5 232.7 L955.0 232.8 L954.5 233.0 L954.1 233.1 L953.6 233.2 L953.1 233.4 L952.6 233.5 L952.1 233.6 L951.6 233.7 L951.1 233.8 L950.6 233.9 L950.1 234.0 L949.6 234.2 L949.1 234.3 L948.6 234.4 L948.1 234.4 L947.6 234.5 L947.1 234.6 L946.6 234.7 L946.1 234.8 L945.6 234.9 L945.1 235.0 L944.6 235.1 L944.1 235.1 L943.6 235.2 L943.1 235.3 L942.6 235.4 L942.1 235.4 L941.6 235.5 L941.1 235.6 L940.6 235.6 L940.1 235.7 L939.6 235.8 L939.1 235.8 L938.6 235.9 L938.2 235.9 L937.7 236.0 L937.2 236.0 L936.7 236.1 L936.2 236.1 L935.7 236.2 L935.2 236.2 L934.7 236.3 L934.2 236.3 L933.7 236.4 L933.2 236.4 L932.7 236.5 L932.2 236.5 L931.7 236.5 L931.2 236.6 L930.7 236.6 L930.2 236.7 L929.7 236.7 L929.2 236.7 L928.7 236.7 L928.2 236.8 L927.7 236.8 L927.2 236.8 L926.7 236.9 L926.2 236.9 L925.7 236.9 L925.2 236.9 L924.7 237.0 L924.2 237.0 L923.7 237.0 L923.2 237.0 L922.7 237.0 L922.3 237.0 L921.8 237.1 L921.3 237.1 L920.8 237.1 L920.3 237.1 L919.8 237.1 L919.3 237.1 L918.8 237.1 L918.3 237.1 L917.8 237.1 L917.3 237.1 L916.8 237.1 L916.3 237.1 L915.8 237.1 L915.3 237.1 L914.8 237.1 L914.3 237.1 L913.8 237.1 L913.3 237.1 L912.8 237.1 L912.3 237.1 L911.8 237.1 L911.3 237.0 L910.8 237.0 L910.3 237.0 L909.8 237.0 L909.3 237.0 L908.8 237.0 L908.3 236.9 L907.8 236.9 L907.3 236.9 L906.8 236.9 L906.4 236.8 L905.9 236.8 L905.4 236.8 L904.9 236.7 L904.4 236.7 L903.9 236.7 L903.4 236.6 L902.9 236.6 L902.4 236.5 L901.9 236.5 L901.4 236.4 L900.9 236.4 L900.4 236.3 L899.9 236.3 L899.4 236.2 L898.9 236.2 L898.4 236.1 L897.9 236.0 L897.4 236.0 L896.9 235.9 L896.4 235.8 L895.9 235.8 L895.4 235.7 L894.9 235.6 L894.4 235.5 L893.9 235.4 L893.4 235.3 L892.9 235.2 L892.4 235.1 L891.9 235.0 L891.4 234.9 L890.9 234.8 L890.5 234.7 L890.0 234.5 L889.5 234.4 L889.0 234.2 L888.5 234.1 L888.0 233.9 L887.5 233.7 L887.0 233.5 L886.5 233.3 L886.0 233.1 L885.5 232.8 L885.0 232.5 L884.5 232.1 L884.0 231.6 L883.5 230.5 L883.0 213.4Z" fill="url(#gsh2)"/><g clip-path="url(#clip5)"><path d="M962.8 209.8L959.0 215.7M962.8 209.8L960.5 222.1M948.7 217.2L960.5 222.1M948.7 217.2L936.0 227.6M925.4 219.9L936.0 227.6M925.4 219.9L904.0 228.2M898.4 219.2L904.0 228.2M898.4 219.2L885.4 224.4M883.4 214.4L885.4 224.4M883.4 214.4L887.1 218.3M959.0 215.7L963.5 227.5M960.5 222.1L963.5 227.5M960.5 222.1L951.6 233.7M936.0 227.6L951.6 233.7M936.0 227.6L924.4 237.0M904.0 228.2L924.4 237.0M904.0 228.2L892.5 235.1M885.4 224.4L892.5 235.1M885.4 224.4L883.7 231.2M887.1 218.3L883.7 231.2" stroke="#183020" stroke-opacity=".85" stroke-width="1" fill="none"/><path d="M963.2 219.1 L963.2 219.6 L962.9 220.2 L962.5 220.7 L961.9 221.2 L961.1 221.7 L960.2 222.3 L959.1 222.8 L957.9 223.3 L956.5 223.8 L955.0 224.3 L953.3 224.7 L951.5 225.2 L949.6 225.6 L947.6 226.0 L945.5 226.4 L943.2 226.7 L940.9 227.1 L938.6 227.4 L936.1 227.6 L933.6 227.9 L931.1 228.1 L928.5 228.2 L925.9 228.4 L923.2 228.5 L920.6 228.6 L918.0 228.6 L915.4 228.6 L912.9 228.6 L910.4 228.5 L907.9 228.4 L905.6 228.3 L903.2 228.1 L901.0 227.9 L898.9 227.7 L896.9 227.4 L895.0 227.1 L893.2 226.8 L891.5 226.5 L890.0 226.1 L888.6 225.7 L887.4 225.3 L886.3 224.9 L885.4 224.4 L884.6 223.9 L884.0 223.4 L883.6 222.9 L883.3 222.4 L883.2 221.9" stroke="#183020" stroke-opacity=".85" stroke-width="1" fill="none"/><path d="M963.5 227.6 L963.4 228.1 L963.2 228.7 L962.7 229.2 L962.1 229.7 L961.4 230.2 L960.4 230.8 L959.4 231.3 L958.1 231.8 L956.8 232.3 L955.2 232.8 L953.6 233.2 L951.8 233.7 L949.9 234.1 L947.8 234.5 L945.7 234.9 L943.5 235.2 L941.2 235.6 L938.8 235.9 L936.4 236.1 L933.8 236.4 L931.3 236.6 L928.7 236.7 L926.1 236.9 L923.5 237.0 L920.9 237.1 L918.3 237.1 L915.7 237.1 L913.1 237.1 L910.6 237.0 L908.2 236.9 L905.8 236.8 L903.5 236.6 L901.3 236.4 L899.1 236.2 L897.1 235.9 L895.2 235.6 L893.4 235.3 L891.8 235.0 L890.2 234.6 L888.9 234.2 L887.6 233.8 L886.5 233.4 L885.6 232.9 L884.9 232.4 L884.3 231.9 L883.8 231.4 L883.6 230.9 L883.5 230.4" stroke="#183030" stroke-width="1.2" fill="none"/></g><path d="M883.0 213.4 L883.5 212.1 L884.0 211.6 L884.5 211.2 L885.0 210.8 L885.5 210.5 L886.0 210.3 L886.5 210.0 L887.0 209.8 L887.5 209.6 L888.0 209.4 L888.5 209.2 L889.0 209.0 L889.5 208.8 L890.0 208.6 L890.5 208.5 L890.9 208.3 L891.4 208.2 L891.9 208.0 L892.4 207.9 L892.9 207.8 L893.4 207.6 L893.9 207.5 L894.4 207.4 L894.9 207.3 L895.4 207.2 L895.9 207.1 L896.4 207.0 L896.9 206.8 L897.4 206.7 L897.9 206.6 L898.4 206.6 L898.9 206.5 L899.4 206.4 L899.9 206.3 L900.4 206.2 L900.9 206.1 L901.4 206.0 L901.9 205.9 L902.4 205.9 L902.9 205.8 L903.4 205.7 L903.9 205.6 L904.4 205.6 L904.9 205.5 L905.4 205.4 L905.9 205.4 L906.4 205.3 L906.8 205.2 L907.3 205.2 L907.8 205.1 L908.3 205.1 L908.8 205.0 L909.3 205.0 L909.8 204.9 L910.3 204.9 L910.8 204.8 L911.3 204.8 L911.8 204.7 L912.3 204.7 L912.8 204.6 L913.3 204.6 L913.8 204.5 L914.3 204.5 L914.8 204.5 L915.3 204.4 L915.8 204.4 L916.3 204.3 L916.8 204.3 L917.3 204.3 L917.8 204.3 L918.3 204.2 L918.8 204.2 L919.3 204.2 L919.8 204.1 L920.3 204.1 L920.8 204.1 L921.3 204.1 L921.8 204.0 L922.3 204.0 L922.7 204.0 L923.2 204.0 L923.7 204.0 L924.2 204.0 L924.7 203.9 L925.2 203.9 L925.7 203.9 L926.2 203.9 L926.7 203.9 L927.2 203.9 L927.7 203.9 L928.2 203.9 L928.7 203.9 L929.2 203.9 L929.7 203.9 L930.2 203.9 L930.7 203.9 L931.2 203.9 L931.7 203.9 L932.2 203.9 L932.7 203.9 L933.2 203.9 L933.7 203.9 L934.2 203.9 L934.7 203.9 L935.2 204.0 L935.7 204.0 L936.2 204.0 L936.7 204.0 L937.2 204.0 L937.7 204.0 L938.2 204.1 L938.6 204.1 L939.1 204.1 L939.6 204.1 L940.1 204.2 L940.6 204.2 L941.1 204.2 L941.6 204.3 L942.1 204.3 L942.6 204.3 L943.1 204.4 L943.6 204.4 L944.1 204.5 L944.6 204.5 L945.1 204.6 L945.6 204.6 L946.1 204.7 L946.6 204.7 L947.1 204.8 L947.6 204.8 L948.1 204.9 L948.6 205.0 L949.1 205.0 L949.6 205.1 L950.1 205.2 L950.6 205.2 L951.1 205.3 L951.6 205.4 L952.1 205.5 L952.6 205.6 L953.1 205.7 L953.6 205.8 L954.1 205.9 L954.5 206.0 L955.0 206.1 L955.5 206.2 L956.0 206.3 L956.5 206.5 L957.0 206.6 L957.5 206.8 L958.0 206.9 L958.5 207.1 L959.0 207.3 L959.5 207.5 L960.0 207.7 L960.5 207.9 L961.0 208.2 L961.5 208.5 L962.0 208.9 L962.5 209.4 L963.0 210.5 L963.5 227.6 L963.5 227.6 L963.0 228.9 L962.5 229.4 L962.0 229.8 L961.5 230.2 L961.0 230.5 L960.5 230.7 L960.0 231.0 L959.5 231.2 L959.0 231.4 L958.5 231.6 L958.0 231.8 L957.5 232.0 L957.0 232.2 L956.5 232.4 L956.0 232.5 L955.5 232.7 L955.0 232.8 L954.5 233.0 L954.1 233.1 L953.6 233.2 L953.1 233.4 L952.6 233.5 L952.1 233.6 L951.6 233.7 L951.1 233.8 L950.6 233.9 L950.1 234.0 L949.6 234.2 L949.1 234.3 L948.6 234.4 L948.1 234.4 L947.6 234.5 L947.1 234.6 L946.6 234.7 L946.1 234.8 L945.6 234.9 L945.1 235.0 L944.6 235.1 L944.1 235.1 L943.6 235.2 L943.1 235.3 L942.6 235.4 L942.1 235.4 L941.6 235.5 L941.1 235.6 L940.6 235.6 L940.1 235.7 L939.6 235.8 L939.1 235.8 L938.6 235.9 L938.2 235.9 L937.7 236.0 L937.2 236.0 L936.7 236.1 L936.2 236.1 L935.7 236.2 L935.2 236.2 L934.7 236.3 L934.2 236.3 L933.7 236.4 L933.2 236.4 L932.7 236.5 L932.2 236.5 L931.7 236.5 L931.2 236.6 L930.7 236.6 L930.2 236.7 L929.7 236.7 L929.2 236.7 L928.7 236.7 L928.2 236.8 L927.7 236.8 L927.2 236.8 L926.7 236.9 L926.2 236.9 L925.7 236.9 L925.2 236.9 L924.7 237.0 L924.2 237.0 L923.7 237.0 L923.2 237.0 L922.7 237.0 L922.3 237.0 L921.8 237.1 L921.3 237.1 L920.8 237.1 L920.3 237.1 L919.8 237.1 L919.3 237.1 L918.8 237.1 L918.3 237.1 L917.8 237.1 L917.3 237.1 L916.8 237.1 L916.3 237.1 L915.8 237.1 L915.3 237.1 L914.8 237.1 L914.3 237.1 L913.8 237.1 L913.3 237.1 L912.8 237.1 L912.3 237.1 L911.8 237.1 L911.3 237.0 L910.8 237.0 L910.3 237.0 L909.8 237.0 L909.3 237.0 L908.8 237.0 L908.3 236.9 L907.8 236.9 L907.3 236.9 L906.8 236.9 L906.4 236.8 L905.9 236.8 L905.4 236.8 L904.9 236.7 L904.4 236.7 L903.9 236.7 L903.4 236.6 L902.9 236.6 L902.4 236.5 L901.9 236.5 L901.4 236.4 L900.9 236.4 L900.4 236.3 L899.9 236.3 L899.4 236.2 L898.9 236.2 L898.4 236.1 L897.9 236.0 L897.4 236.0 L896.9 235.9 L896.4 235.8 L895.9 235.8 L895.4 235.7 L894.9 235.6 L894.4 235.5 L893.9 235.4 L893.4 235.3 L892.9 235.2 L892.4 235.1 L891.9 235.0 L891.4 234.9 L890.9 234.8 L890.5 234.7 L890.0 234.5 L889.5 234.4 L889.0 234.2 L888.5 234.1 L888.0 233.9 L887.5 233.7 L887.0 233.5 L886.5 233.3 L886.0 233.1 L885.5 232.8 L885.0 232.5 L884.5 232.1 L884.0 231.6 L883.5 230.5 L883.0 213.4Z" fill="none" stroke="#1a2a3a" stroke-width="1" stroke-opacity=".8"/><path d="M963.0 210.6 L962.7 211.7 L961.6 212.7 L960.0 213.8 L957.6 214.8 L954.7 215.8 L951.3 216.7 L947.4 217.5 L943.0 218.2 L938.3 218.9 L933.4 219.4 L928.2 219.7 L923.0 220.0 L917.8 220.1 L912.6 220.1 L907.7 219.9 L903.0 219.6 L898.6 219.2 L894.7 218.6 L891.3 218.0 L888.4 217.2 L886.0 216.4 L884.4 215.4 L883.3 214.4 L883.0 213.4 L883.3 212.3 L884.4 211.3 L886.0 210.2 L888.4 209.2 L891.3 208.2 L894.7 207.3 L898.6 206.5 L903.0 205.8 L907.7 205.1 L912.6 204.6 L917.8 204.3 L923.0 204.0 L928.2 203.9 L933.4 203.9 L938.3 204.1 L943.0 204.4 L947.4 204.8 L951.3 205.4 L954.7 206.0 L957.6 206.8 L960.0 207.6 L961.6 208.6 L962.7 209.6 L963.0 210.6Z" fill="#b02c14" stroke="#1a2a3a" stroke-width="1.8"/><path d="M956.0 210.8 L955.7 211.7 L954.9 212.6 L953.5 213.5 L951.6 214.3 L949.2 215.1 L946.3 215.9 L943.1 216.5 L939.5 217.1 L935.6 217.7 L931.5 218.1 L927.3 218.4 L923.0 218.6 L918.7 218.7 L914.5 218.7 L910.4 218.5 L906.5 218.3 L902.9 217.9 L899.7 217.5 L896.8 216.9 L894.4 216.3 L892.5 215.6 L891.1 214.8 L890.3 214.0 L890.0 213.2 L890.3 212.3 L891.1 211.4 L892.5 210.5 L894.4 209.7 L896.8 208.9 L899.7 208.1 L902.9 207.5 L906.5 206.9 L910.4 206.3 L914.5 205.9 L918.7 205.6 L923.0 205.4 L927.3 205.3 L931.5 205.3 L935.6 205.5 L939.5 205.7 L943.1 206.1 L946.3 206.5 L949.2 207.1 L951.6 207.7 L953.5 208.4 L954.9 209.2 L955.7 210.0 L956.0 210.8Z" fill="none" stroke="#203040" stroke-width="1"/><path d="M956.0 210.8L890.0 213.2M953.5 213.5L892.5 210.5M946.3 215.9L899.7 208.1M935.6 217.7L910.4 206.3M923.0 218.6L923.0 205.4M910.4 218.5L935.6 205.5M899.7 217.5L946.3 206.5M892.5 215.6L953.5 208.4" stroke="#402020" stroke-width=".8"/><path d="M531 576.5L464 581.3" stroke="#a03030" stroke-width="1.8"/><path d="M464 581.3L485 578.8L485 583.2z" fill="#8a2020"/><text x="481" y="577" font-family="Liberation Sans" font-style="italic" font-size="14" fill="#b04040">X</text><path d="M531 576.5L523 567" stroke="#20a020" stroke-width="1.8"/><path d="M520 564l5-1 1 5z" fill="#10a010"/><text x="526" y="563" font-family="Liberation Sans" font-style="italic" font-size="13" fill="#40a040">y</text><path d="M531 576.5L533.3 625" stroke="#2060c0" stroke-width="1.8"/><path d="M531 618L536 618L533.3 638z" fill="#1a4aa0"/><text x="535" y="624" font-family="Liberation Sans" font-style="italic" font-size="14" fill="#3070d0">Z</text><rect x="1145.5" y="192.5" width="115" height="414" fill="#fff" stroke="#000"/><defs><linearGradient id="glg" x1="0" y1="0" x2="0" y2="1">
<stop offset="0" stop-color="#f01000"/><stop offset="0.12" stop-color="#ff7000"/><stop offset="0.3" stop-color="#ffee00"/>
<stop offset="0.42" stop-color="#a0e000"/><stop offset="0.5" stop-color="#00e020"/><stop offset="0.6" stop-color="#00e8a0"/>
<stop offset="0.72" stop-color="#00ffff"/><stop offset="0.85" stop-color="#0090ff"/><stop offset="1" stop-color="#0000e0"/></linearGradient></defs><rect x="1156.5" y="228.5" width="29" height="367" fill="url(#glg)" stroke="#000"/><text x="1155" y="214" font-family="Liberation Sans" font-size="21.7" fill="#000">Voltage U</text><text x="1232.5" y="234.1" text-anchor="middle" font-family="Liberation Sans" font-size="19" fill="#000">8490.</text><text x="1232.5" y="270.9" text-anchor="middle" font-family="Liberation Sans" font-size="19" fill="#000">7640.</text><text x="1232.5" y="307.8" text-anchor="middle" font-family="Liberation Sans" font-size="19" fill="#000">6790.</text><text x="1232.5" y="344.6" text-anchor="middle" font-family="Liberation Sans" font-size="19" fill="#000">5940.</text><text x="1232.5" y="381.4" text-anchor="middle" font-family="Liberation Sans" font-size="19" fill="#000">5090.</text><text x="1232.5" y="418.2" text-anchor="middle" font-family="Liberation Sans" font-size="19" fill="#000">4240.</text><text x="1232.5" y="455.1" text-anchor="middle" font-family="Liberation Sans" font-size="19" fill="#000">3390.</text><text x="1232.5" y="491.9" text-anchor="middle" font-family="Liberation Sans" font-size="19" fill="#000">2550.</text><text x="1232.5" y="528.7" text-anchor="middle" font-family="Liberation Sans" font-size="19" fill="#000">1700.</text><text x="1232.5" y="565.6" text-anchor="middle" font-family="Liberation Sans" font-size="19" fill="#000">849.</text><text x="1232.5" y="602.4" text-anchor="middle" font-family="Liberation Sans" font-size="19" fill="#000">0.00</text></g><clipPath id="vpclip"><rect x="411" y="101" width="865" height="596"/></clipPath></svg>
<div class="a" style="left:205px;top:698px;width:1075px;height:22px;background:#f0f0f0;border-bottom:1px solid #8a8a8a"></div>
<div class="t" style="left:212px;top:703px;font-size:11.3px;color:#707070">Arcing_horns.m3d</div>
<div class="a" style="left:312px;top:697px;width:198px;height:21px;background:#fff;border:1px solid #9a9a9a;border-top:none;border-radius:0 0 3px 3px"></div>
<div class="t" style="left:318px;top:703px;font-size:11px;font-weight:bold;letter-spacing:-0.15px">Postprocessing arcing_horns.pbm:2</div>
<svg style="left:1248px;top:704px" width="6" height="10" viewBox="0 0 6 10"><path d="M5.5 0.5v9l-5-4.5z" fill="none" stroke="#333"/></svg>
<svg style="left:1266px;top:704px" width="6" height="10" viewBox="0 0 6 10"><path d="M0.5 0.5v9l5-4.5z" fill="none" stroke="#333"/></svg>
<div class="a" style="left:0;top:719px;width:1280px;height:19px;background:#efebea;border-top:1px solid #a0a0a0"></div>
<div class="t" style="left:4px;top:724px;font-size:11px">For Help, press F1</div>
<div class="t" style="left:954px;top:724px;font-size:11px">0.3225 m, 0.0944 m, -0.1003 m</div>
</body></html>
